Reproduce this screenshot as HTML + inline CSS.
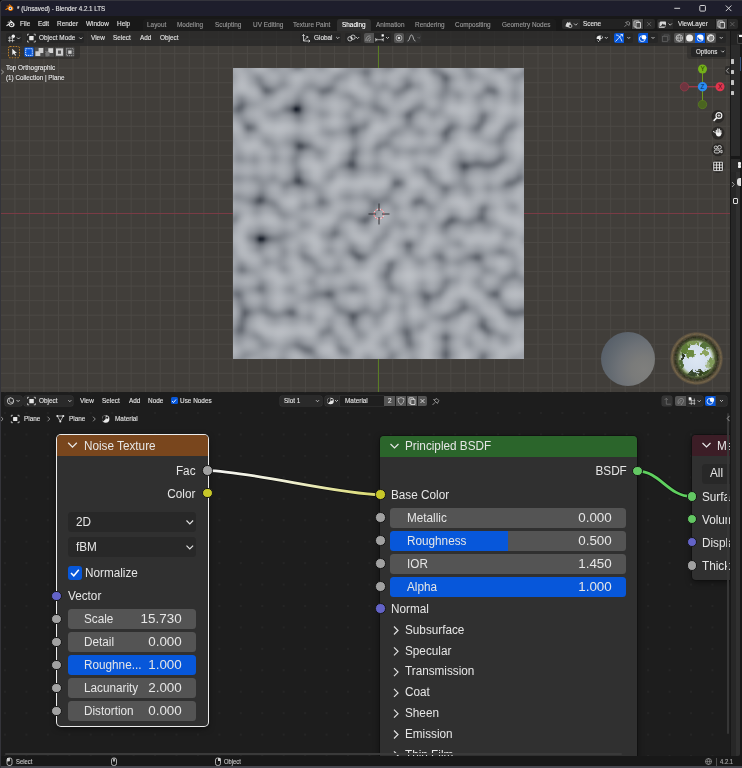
<!DOCTYPE html>
<html lang="en">
<head>
<meta charset="utf-8">
<title>* (Unsaved) - Blender 4.2.1 LTS</title>
<style>
html,body{margin:0;padding:0;background:#1d1d1d;}
body{width:742px;height:768px;position:relative;overflow:hidden;font-family:"Liberation Sans",sans-serif;color:#e0e0e0;}
*{box-sizing:border-box;}
.a{position:absolute;}
.t{position:absolute;white-space:nowrap;font-size:6.9px;line-height:10px;transform-origin:0 0;transform:scaleX(.93);color:#e2e2e2;-webkit-text-stroke:.12px currentColor;}
.t.g{color:#999;}
.n{position:absolute;white-space:nowrap;font-size:12.3px;line-height:16px;transform-origin:0 0;transform:scaleX(.955);color:#e6e6e6;}
.n.r{transform-origin:100% 0;text-align:right;}
.n.v{transform:scaleX(1.09);}
svg{position:absolute;overflow:visible;}
/* title */
#title{left:0;top:0;width:742px;height:16px;background:#1e1e2c;box-shadow:inset 0 1px 0 #34343c;}
#menu{left:0;top:16px;width:742px;height:15px;background:#181818;}
#vp{left:0;top:31px;width:730px;height:361px;background-color:#413e3a;overflow:hidden;
 background-image:linear-gradient(90deg,#4b4844 1px,transparent 1px),linear-gradient(#4b4844 1px,transparent 1px);
 background-size:14.54px 14.54px;background-position:-0.14px 7.62px;}
#vphead{left:0;top:0;width:730px;height:14.5px;background:rgba(38,38,37,.72);}
#plane{left:233px;top:37px;width:291px;height:291px;overflow:hidden;}
#plane i{display:block;height:1px;width:291px;}
.btn{position:absolute;background:#262626;border-radius:2px;}
.btn.l{background:#545454;}
.btn.b{background:#0757da;}
#ne{left:0;top:392px;width:730px;height:364px;background:#1d1d1d radial-gradient(circle,#272727 .6px,transparent 1.1px) -5.72px 10.33px/21.45px 21.45px;overflow:hidden;}
#right{left:730px;top:31px;width:12px;height:725px;background:#181818;}
#status{left:0;top:756px;width:742px;height:12px;background:#181818;}
.node{position:absolute;background:#303030;border-radius:4px;}
.nh{position:absolute;left:0;top:0;right:0;border-radius:4px 4px 0 0;}
.f{position:absolute;background:#545454;border-radius:3.5px;height:20px;margin-top:-.3px;}
.f.d{background:#282828;}
.f.b{background:#0757da;}
.sk{position:absolute;width:10.6px;height:10.6px;border-radius:50%;border:.7px solid #161616;margin:-5.3px 0 0 -5.3px;}
</style>
</head>
<body>
<div id="title" class="a">
 <svg style="left:4.700px;top:4.400px" width="8.400" height="7.560" viewBox="0 0 20 18"><path d="M1 12.5 9.5 5.8H4.6c-1.3 0-1.3-1.9 0-1.9h7.2L9.6 2.2c-1-.9.2-2.2 1.3-1.4l7.3 5.9c2.600 2.300 2.400 6.200-.2 8.400-2.700 2.200-6.800 2.200-9.500 0-1.200-1-1.900-2.300-2-3.600L3 14.200c-1.300 1-3.200-.7-2-1.700z" fill="#ea7600"/><circle cx="12.800" cy="10.600" r="3.900" fill="#fff"/><circle cx="12.800" cy="10.600" r="2.100" fill="#265787"/></svg>
 <div class="t" style="left:17px;top:3.800px;color:#e4e4e4;transform:scaleX(.905)">* (Unsaved) - Blender 4.2.1 LTS</div>
 <svg style="left:670px;top:2px" width="66" height="12" viewBox="0 0 66 12" fill="none" stroke="#e6e6e6" stroke-width=".9"><path d="M4.300 6.300h5.800"/><rect x="29.800" y="3.500" width="5.600" height="5.600" rx=".8"/><path d="M55.800 3.500l5.600 5.600m0-5.600-5.600 5.600"/></svg>
</div>
<div id="menu" class="a">
 <svg style="left:5.600px;top:3.600px" width="8.600" height="7.740" viewBox="0 0 20 18"><path d="M1 12.500 9.500 5.800H4.600c-1.300 0-1.300-1.900 0-1.900h7.200L9.600 2.200c-1-.9.200-2.200 1.300-1.400l7.300 5.900c2.600 2.300 2.400 6.200-.2 8.400-2.700 2.200-6.800 2.200-9.500 0-1.200-1-1.900-2.300-2-3.600L3 14.200c-1.300 1-3.200-.7-2-1.700z" fill="#e6e6e6"/><circle cx="12.800" cy="10.600" r="3.700" fill="#181818"/><circle cx="12.800" cy="10.600" r="1.900" fill="#e6e6e6"/></svg>
 <div class="t" style="left:19.500px;top:3px">File</div>
 <div class="t" style="left:37.500px;top:3px">Edit</div>
 <div class="t" style="left:56.500px;top:3px">Render</div>
 <div class="t" style="left:85.500px;top:3px">Window</div>
 <div class="t" style="left:116.500px;top:3px">Help</div>
 <div class="a" style="left:142.600px;top:2.500px;width:413px;height:12.500px;background:#1c1c1c;border-radius:3px 3px 0 0"></div>
 <div class="a" style="left:336.500px;top:2.500px;width:34px;height:12.500px;background:#303030;border-radius:3px 3px 0 0"></div>
 <div class="t g" style="left:147px;top:3.500px">Layout</div>
 <div class="t g" style="left:177px;top:3.500px">Modeling</div>
 <div class="t g" style="left:215px;top:3.500px">Sculpting</div>
 <div class="t g" style="left:252.500px;top:3.500px">UV Editing</div>
 <div class="t g" style="left:292.500px;top:3.500px">Texture Paint</div>
 <div class="t" style="left:341.500px;top:3.500px;color:#fff">Shading</div>
 <div class="t g" style="left:376px;top:3.500px">Animation</div>
 <div class="t g" style="left:414.500px;top:3.500px">Rendering</div>
 <div class="t g" style="left:455px;top:3.500px">Compositing</div>
 <div class="t g" style="left:501.500px;top:3.500px">Geometry Nodes</div>
 <!-- scene -->
 <div class="btn" style="left:562px;top:2.700px;width:17.500px;height:10.300px;border-radius:2px 0 0 2px;background:#2a2a2a"></div>
 <div class="btn" style="left:580px;top:2.700px;width:51px;height:10.300px;border-radius:0;background:#222"></div>
 <div class="btn l" style="left:631.500px;top:2.700px;width:11.500px;height:10.300px;border-radius:0;background:#4a4a4a"></div>
 <div class="btn" style="left:643.500px;top:2.700px;width:11px;height:10.300px;border-radius:0 2px 2px 0;background:#2a2a2a"></div>
 <div class="t" style="left:583px;top:3px">Scene</div>
 <div class="btn" style="left:657px;top:2.700px;width:15.500px;height:10.300px;border-radius:2px 0 0 2px;background:#2a2a2a"></div>
 <div class="btn" style="left:673px;top:2.700px;width:42px;height:10.300px;border-radius:0;background:#222"></div>
 <div class="btn l" style="left:715.500px;top:2.700px;width:11.500px;height:10.300px;border-radius:0;background:#4a4a4a"></div>
 <div class="btn" style="left:727.500px;top:2.700px;width:10px;height:10.300px;border-radius:0 2px 2px 0;background:#2a2a2a"></div>
 <div class="t" style="left:677.500px;top:3px">ViewLayer</div>
 <svg style="left:562px;top:2.700px" width="180" height="10.300" viewBox="0 0 180 10.300" fill="none" stroke="#d8d8d8" stroke-width=".8">
  <path d="M3.500 7.500c0-2 1-3 2-4.500l1.500 1 1-1.500 1 3.500c.5 1.500-.5 2.500-2 2.500z" fill="#d8d8d8" stroke="none"/><circle cx="8.300" cy="7" r="1.600" fill="#2a2a2a"/>
  <path d="M12 4.500l1.700 1.700 1.700-1.700"/>
  <path d="M62.500 7.800l2.300-2.300m-1.500-2.500 3.500 3.500m-3-3 2.500-1 1.500 1.500-1 2.500" stroke="#9a9a9a"/>
  <rect x="72" y="2" width="5" height="6" rx=".7" stroke="#eee"/><path d="M74 3.500h4.500v5.500h-4.500z" fill="#4a4a4a" stroke="#eee"/>
  <path d="M85 3l4.200 4.200m0-4.200-4.200 4.200" stroke="#6a6a6a"/>
  <rect x="98" y="2.500" width="6" height="5" rx=".7" fill="#d8d8d8" stroke="none"/><path d="M99 7l1.800-2.500 1.200 1.500.8-.8 1.200 1.800z" fill="#2a2a2a" stroke="none"/><path d="M97.200 3.500v5h5.500"/>
  <path d="M106.500 4.500l1.700 1.700 1.700-1.700"/>
  <rect x="156" y="2" width="5" height="6" rx=".7" stroke="#eee"/><path d="M158 3.500h4.500v5.500h-4.500z" fill="#4a4a4a" stroke="#eee"/>
  <path d="M168.300 3l4.200 4.200m0-4.200-4.200 4.200" stroke="#6a6a6a"/>
 </svg>
</div>

<div id="vp" class="a">
 <div id="plane" class="a">
<i style="background:linear-gradient(90deg,#a3a7ae,#aaaeb4,#abafb5,#a8acb2,#a2a6ac,#9fa3a9,#a2a6ad,#a8acb3,#afb2b8,#b1b5bb,#afb3b9,#a9adb3,#a1a5ac,#9a9ea5,#979ba2,#9a9ea4,#9fa3a9,#a1a5ac,#9ea3a9,#979ba2,#8c9097,#7f848b,#7f848b,#8c9198,#999da4,#a1a5ac,#a5a9af,#a3a7ad,#9da1a8,#989ca3,#999da4,#a0a4ab,#a8acb2,#afb2b8,#b1b5bb,#aeb2b8,#a8acb2,#a0a4ab,#999da4,#94989f,#92979e,#92979e,#90959c,#8a8e95,#81868d,#81868d,#8b9097,#969aa1,#9a9fa5,#989da3,#92969d,#8b8f96,#898d94,#91959c,#9da1a8,#a6aab0,#abafb5,#acb0b6,#a6aab0,#9da1a8,#969aa1,#999da4,#a2a6ac,#a7abb1,#a5a9b0,#9da1a8,#90949b,#878b93,#898d94,#90949b,#9b9fa6,#a4a8af,#aaaeb4,#abafb5,#a9adb4,#a6aab0,#9ea2a8,#93979e,#8f939a,#959aa0,#9fa3a9,#a7abb2,#afb3b9,#b3b6bc,#b0b4ba,#a9adb4,#a1a5ac,#999da4,#8e9299,#858a91,#8a8e95,#969aa1,#a0a4ab,#a6aab0,#aaaeb4,#aaaeb4,#a4a8ae,#979ba2)"></i>
<i style="background:linear-gradient(90deg,#a3a7ad,#aaaeb4,#acb0b6,#a9adb3,#a3a7ae,#a0a4aa,#a2a6ac,#a7abb1,#acb0b6,#afb3b9,#aeb2b8,#a9adb3,#a3a7ad,#9da1a7,#9a9ea4,#9b9fa6,#9fa3a9,#a1a5ab,#9ea3a9,#999da4,#91959c,#898d94,#898e95,#92979e,#9ca0a7,#a3a7ad,#a6aab0,#a4a8ae,#9fa3aa,#9b9fa6,#9ca0a7,#a2a6ac,#a8acb2,#adb1b7,#afb3b9,#acafb6,#a5a9af,#9ea2a9,#989ca3,#94989f,#93979e,#92969d,#8e9299,#868a92,#7c8088,#7d8189,#898e95,#969aa1,#9ba0a6,#9a9ea5,#94989f,#8e939a,#8e939a,#979ba2,#a1a5ac,#a8acb2,#acb0b6,#acb0b6,#a6aab0,#9da1a8,#989ca3,#9b9fa6,#a3a7ae,#a8acb2,#a7abb1,#9ea2a9,#90949b,#848990,#858990,#8a8f96,#9599a0,#a0a4ab,#a7abb1,#aaaeb4,#a9adb3,#a7abb1,#9fa3aa,#9599a0,#8f949b,#94989f,#9da1a8,#a5a9b0,#adb1b7,#b1b5bb,#b0b3b9,#aaadb4,#a3a7ad,#9ca0a7,#94989f,#8d9299,#90949b,#999da3,#a0a4ab,#a5a9af,#a8acb2,#a7abb1,#a0a4aa,#92969d)"></i>
<i style="background:linear-gradient(90deg,#a2a6ac,#a9adb3,#acb0b6,#aaaeb4,#a5a9af,#a0a5ab,#a1a5ac,#a5a9af,#a9adb3,#acb0b6,#acb0b6,#a9adb3,#a4a8af,#a0a4aa,#9da1a8,#9da1a8,#9fa3a9,#a0a4ab,#9fa3a9,#9b9fa6,#969aa1,#92969d,#92979e,#999da4,#9fa4aa,#a4a8af,#a7abb1,#a5a9b0,#a2a6ac,#9fa3a9,#9fa4aa,#a3a8ae,#a8acb2,#acb0b6,#acb0b6,#a8acb2,#a2a6ac,#9ca0a7,#979ba2,#9599a0,#94989f,#92969d,#8d9198,#83888f,#787c84,#797e85,#888c94,#969ba1,#9da1a8,#9ca0a7,#979ba2,#93979e,#94989f,#9ca0a7,#a4a8af,#aaaeb4,#acb0b6,#abafb5,#a5a9b0,#9ea2a8,#9a9ea5,#9ea2a9,#a5a9af,#aaadb4,#a8acb2,#a0a4aa,#91959c,#84888f,#81868d,#858990,#8f939a,#9b9fa5,#a4a8ae,#a8acb2,#a9adb3,#a7abb1,#a0a4ab,#969aa1,#8f949b,#92969d,#9a9fa5,#a3a7ae,#abafb5,#afb3b9,#aeb2b8,#aaaeb4,#a4a8af,#9fa4aa,#999ea4,#9599a0,#969aa1,#9b9fa6,#a0a4ab,#a3a7ae,#a5a9af,#a3a7ae,#9b9fa6,#8d9199)"></i>
<i style="background:linear-gradient(90deg,#a1a5ab,#a8acb3,#acb0b6,#abafb5,#a7aab1,#a1a5ac,#a0a4ab,#a2a6ad,#a5a9b0,#a9adb3,#aaaeb4,#a9acb3,#a6aab0,#a3a7ad,#a0a4ab,#9fa3a9,#9fa3aa,#9fa4aa,#9fa3aa,#9ea2a8,#9ba0a6,#9a9ea5,#9b9fa6,#9ea3a9,#a3a7ad,#a6aab0,#a7abb2,#a7abb1,#a4a8af,#a2a6ad,#a3a7ad,#a5a9b0,#a8acb2,#aaaeb4,#a9adb3,#a4a8af,#9ea2a9,#999ea4,#969aa1,#959aa0,#969aa1,#93989f,#8d9299,#82878e,#767a82,#777c84,#888c94,#989ca3,#a0a4aa,#9fa3aa,#9a9ea5,#979ba2,#999ea4,#a0a4ab,#a7abb2,#abafb5,#acb0b6,#aaaeb4,#a4a8af,#9ea2a9,#9ca0a7,#a0a4ab,#a7abb1,#abafb5,#aaaeb4,#a2a6ac,#93979e,#858991,#80848c,#80848c,#888c93,#94989f,#9fa3aa,#a5a9b0,#a7abb2,#a7abb1,#a1a5ac,#979ca2,#8f949b,#90949b,#989ca3,#a1a5ab,#a8acb3,#adb1b7,#adb1b7,#aaaeb4,#a6aab0,#a3a7ad,#9fa3a9,#9ca0a6,#9b9fa6,#9da2a8,#a0a4aa,#a1a5ac,#a2a6ac,#9fa3a9,#979ba2,#898d95)"></i>
<i style="background:linear-gradient(90deg,#9fa3aa,#a8acb2,#acb0b6,#acb0b6,#a8acb2,#a2a6ac,#9fa3aa,#9fa3aa,#a1a5ac,#a4a8af,#a7abb1,#a8acb2,#a7abb1,#a5a9b0,#a3a7ad,#a0a5ab,#9fa3aa,#9fa3aa,#a0a4aa,#a0a4ab,#a0a4ab,#a1a5ab,#a2a6ac,#a3a8ae,#a5a9b0,#a7abb1,#a8acb2,#a8acb2,#a6aab1,#a5a9af,#a5a9b0,#a7abb1,#a8acb2,#a8acb2,#a5a9af,#a0a4aa,#9a9ea5,#979ba2,#959aa0,#979ba2,#989ca3,#969aa1,#8f939a,#83888f,#767b82,#787c84,#898e95,#9a9ea5,#a2a6ac,#a2a6ac,#9da1a8,#9b9fa6,#9ea2a9,#a4a8af,#aaaeb4,#acb0b6,#acafb6,#a9acb3,#a3a7ad,#9da2a8,#9ea2a8,#a3a7ad,#a9acb3,#acb0b6,#acb0b6,#a4a8af,#979ba2,#888c93,#80858c,#7c8188,#80858c,#8d9198,#9a9ea5,#a2a6ad,#a6aab0,#a7abb1,#a2a6ac,#999da3,#8f949b,#8e939a,#959aa0,#9ea2a9,#a6aab0,#abafb5,#acb0b6,#aaaeb4,#a7abb1,#a5a9b0,#a3a7ae,#a1a6ac,#a0a4ab,#a0a4aa,#9fa3aa,#9fa3aa,#9ea2a8,#9a9ea5,#93979e,#868b92)"></i>
<i style="background:linear-gradient(90deg,#9ea2a8,#a7abb1,#adb0b7,#aeb1b7,#a9adb4,#a3a7ad,#9ea2a9,#9ca0a7,#9ca0a7,#a0a4aa,#a4a8ae,#a7abb2,#a8acb2,#a8acb2,#a5a9b0,#a2a6ac,#9fa3aa,#9ea3a9,#a0a4ab,#a2a6ad,#a5a9af,#a6aab1,#a7abb2,#a8acb2,#a8acb2,#a8acb2,#a9acb3,#a8acb3,#a8acb2,#a8acb2,#a8acb2,#a8acb2,#a8acb2,#a6aab0,#a1a5ab,#9b9fa6,#969aa1,#9599a0,#9599a0,#999da3,#9b9fa6,#999ea4,#92969d,#868b92,#787d85,#7a7e86,#8b8f97,#9ca0a6,#a4a8ae,#a4a8ae,#a0a4ab,#9fa3a9,#a2a6ac,#a8acb2,#acb0b6,#acb0b6,#abaeb5,#a6aab1,#a0a4ab,#9da1a7,#9fa3a9,#a4a8af,#aaaeb4,#aeb1b7,#adb1b7,#a7abb1,#9a9fa5,#8c9097,#82878e,#7b7f87,#797e86,#848990,#93989f,#9ea3a9,#a4a8ae,#a6aab0,#a2a7ad,#9a9ea4,#90949b,#8d9198,#93979e,#9ba0a6,#a3a7ae,#a8acb3,#aaaeb4,#a9adb3,#a8acb2,#a8acb2,#a7abb2,#a6aab1,#a4a8af,#a2a6ac,#9fa3aa,#9da1a7,#9a9ea5,#969aa1,#8f939a,#868a91)"></i>
<i style="background:linear-gradient(90deg,#9da1a7,#a6aab0,#adb1b7,#afb2b8,#abafb5,#a3a7ae,#9da1a8,#999da4,#979ba2,#9a9ea5,#a1a5ab,#a6aab1,#a9adb3,#a9adb3,#a7abb1,#a3a7ad,#9fa3a9,#9ea2a8,#a0a4ab,#a4a8af,#a8acb2,#abafb5,#acb0b6,#abafb5,#aaaeb4,#a9adb3,#a9acb3,#a9adb3,#a9adb3,#aaadb4,#a9adb4,#a9adb3,#a7abb2,#a3a7ae,#9da1a7,#969aa1,#93979e,#93979e,#959aa0,#9b9fa6,#9fa3a9,#9da1a8,#969aa1,#8a8e95,#7d8189,#7d8289,#8d9299,#9ea2a8,#a6aab0,#a6aab0,#a2a6ad,#a2a6ac,#a5a9af,#aaaeb4,#adb1b7,#acb0b6,#a9adb3,#a4a8ae,#9da2a8,#9ba0a6,#9fa3aa,#a6aab0,#abafb5,#aeb2b8,#afb3b9,#aaaeb4,#9fa3a9,#91959c,#868a92,#7b7f87,#747880,#7c8088,#8d9198,#9b9fa5,#a2a6ac,#a5a9b0,#a3a7ad,#9b9fa6,#91959c,#8c9097,#92969d,#9a9ea4,#a1a5ab,#a6aab0,#a8acb3,#a9adb3,#a9adb3,#aaadb4,#aaaeb4,#aaaeb4,#a8acb2,#a4a8ae,#9fa3a9,#9a9ea5,#969aa1,#92969d,#8d9198,#878b92)"></i>
<i style="background:linear-gradient(90deg,#9ca0a6,#a5a9b0,#adb1b7,#b0b3b9,#acb0b6,#a4a8af,#9da1a7,#969aa1,#92969d,#9599a0,#9da1a8,#a5a9af,#a9adb3,#aaaeb4,#a8acb3,#a3a8ae,#9ea2a9,#9da1a8,#a0a5ab,#a6aab0,#abafb5,#aeb2b8,#afb3b9,#adb1b7,#abafb5,#a9adb3,#a8acb2,#a9adb3,#aaaeb4,#abafb5,#abaeb5,#a9adb3,#a6aab1,#a0a4ab,#989da3,#92969d,#90949b,#92969d,#969ba1,#9da2a8,#a2a6ad,#a1a5ac,#9a9ea5,#8e939a,#82868d,#81868d,#90949b,#9fa3aa,#a7abb2,#a8acb2,#a4a8ae,#a4a8ae,#a7abb2,#acb0b6,#aeb1b7,#acb0b6,#a7abb1,#a1a5ab,#9a9ea5,#999ea4,#9fa3aa,#a6aab0,#abafb5,#afb3b9,#b0b4ba,#acb0b6,#a2a6ad,#969aa1,#8a8f96,#7d8189,#6f747c,#73787f,#868a92,#979ba2,#a0a4aa,#a4a8af,#a3a7ae,#9ca0a7,#92969d,#8c9198,#91959c,#989da3,#9fa3aa,#a4a8ae,#a7abb1,#a8acb2,#a9adb3,#abafb5,#adb0b7,#adb1b7,#abafb5,#a5a9b0,#9fa3a9,#989da3,#92979e,#8e939a,#8c9198,#8a8e95)"></i>
<i style="background:linear-gradient(90deg,#9b9fa6,#a5a9b0,#aeb1b7,#b1b4ba,#adb1b7,#a5a9af,#9ca0a7,#94989f,#8d9299,#8f949b,#999da4,#a3a7ae,#a8acb3,#aaaeb4,#a9adb3,#a3a7ae,#9ea2a8,#9ca0a7,#a0a4ab,#a7abb1,#adb1b7,#b1b5bb,#b1b5bb,#afb3b9,#abafb5,#a9adb3,#a7abb1,#a8acb2,#aaaeb4,#abafb5,#abafb5,#a9adb3,#a5a9af,#9ea2a8,#9499a0,#8f939a,#8f939a,#92979e,#989ca3,#a0a4ab,#a5a9b0,#a5a9af,#9ea2a8,#93979e,#878b92,#858a91,#92979d,#a0a5ab,#a8acb2,#a8acb3,#a5a9af,#a5a9af,#a9adb3,#adb0b7,#aeb1b8,#abafb5,#a5a9af,#9da1a8,#969ba1,#979ba2,#9fa3a9,#a6aab0,#abafb5,#afb3b9,#b1b5bb,#aeb2b8,#a6aab0,#9a9ea5,#8f939a,#80858c,#6e727a,#6c7178,#80848c,#93979e,#9ea2a9,#a4a8ae,#a4a8ae,#9da2a8,#93989f,#8d9299,#91969d,#989ca3,#9ea2a9,#a2a6ad,#a5a9af,#a7abb1,#a9adb3,#abafb5,#aeb2b8,#afb3b9,#adb1b7,#a7abb1,#9fa3aa,#979ba2,#90949b,#8c9198,#8d9198,#8e9299)"></i>
<i style="background:linear-gradient(90deg,#9b9fa6,#a5a9b0,#aeb2b8,#b2b5bb,#aeb2b8,#a6aab0,#9ca1a7,#93979e,#8a8e95,#8a8f96,#959aa0,#a1a5ac,#a7abb2,#aaaeb4,#a9adb3,#a3a7ad,#9ca0a7,#9b9fa5,#a0a4aa,#a7abb1,#aeb2b8,#b2b6bc,#b3b6bc,#afb3b9,#abafb5,#a8acb2,#a6aab0,#a7abb1,#a9adb3,#abafb5,#abaeb5,#a8acb2,#a3a7ae,#9b9fa6,#91969d,#8d9198,#8f939a,#94989f,#9a9ea5,#a3a7ad,#a8acb3,#a8acb2,#a1a5ac,#979ba2,#8c9097,#898e95,#94989f,#a1a5ac,#a8acb3,#a8acb3,#a5a9af,#a5a9af,#a9adb3,#adb1b7,#adb1b7,#aaadb4,#a3a7ad,#999ea4,#92969d,#94989f,#9da1a8,#a5a9b0,#aaaeb4,#aeb2b8,#b1b5bb,#b0b4b9,#a9adb3,#9ea2a9,#93989e,#848890,#6e737a,#676c74,#7b8087,#91959c,#9da1a8,#a4a8ae,#a5a9af,#9fa3aa,#969aa1,#8f949b,#93979e,#999da4,#9ea2a8,#a1a5ab,#a3a7ad,#a5a9af,#a8acb2,#abafb5,#afb2b8,#b1b5ba,#afb3b9,#a8acb2,#9fa4aa,#969ba1,#8e9299,#8c9097,#8f939a,#92969d)"></i>
<i style="background:linear-gradient(90deg,#9ba0a6,#a6aab0,#afb3b9,#b3b6bc,#b0b3b9,#a7abb1,#9da1a8,#92979e,#878c93,#868a92,#92969d,#9fa3a9,#a6aab0,#a9adb3,#a8acb2,#a2a6ac,#9b9fa6,#999da4,#9fa3aa,#a7abb1,#aeb2b8,#b3b7bd,#b3b7bd,#afb3b9,#aaaeb4,#a6aab0,#a4a8ae,#a5a9af,#a8acb2,#aaaeb4,#aaadb4,#a7aab1,#a1a5ac,#989ca3,#8f939a,#8c9198,#90959c,#969aa1,#9da1a8,#a6aab0,#abafb5,#abaeb5,#a4a8af,#9b9fa5,#90949b,#8d9198,#959aa1,#a1a5ac,#a8acb2,#a8acb2,#a4a8af,#a5a9af,#a9adb3,#acb0b6,#adb0b7,#a8acb2,#a0a4ab,#969aa1,#8e9299,#91959c,#9b9fa6,#a4a8ae,#a8acb3,#adb1b7,#b1b5bb,#b1b5ba,#abafb5,#a1a5ac,#979ba2,#878c93,#70757c,#656a72,#797e85,#8f949b,#9ca1a7,#a4a8ae,#a5a9b0,#a1a5ab,#989ca3,#92979d,#9599a0,#9b9fa6,#9ea2a9,#a0a4ab,#a1a5ac,#a3a7ad,#a6aab0,#aaaeb4,#aeb2b8,#b1b5bb,#b0b4ba,#a9adb4,#a0a4ab,#969ba1,#8e9299,#8c9198,#91969d,#979ba2)"></i>
<i style="background:linear-gradient(90deg,#9da1a7,#a7abb1,#b0b3b9,#b3b7bd,#b1b4ba,#a8acb2,#9ea2a9,#93979e,#868b92,#83878f,#8e9299,#9ca0a7,#a4a8ae,#a7abb1,#a6aab0,#a0a4aa,#999da4,#979ca2,#9ea2a9,#a6aab1,#aeb2b8,#b3b7bc,#b3b6bc,#aeb2b8,#a8acb2,#a4a8ae,#a1a5ac,#a3a7ad,#a6aab0,#a8acb3,#a8acb2,#a4a8af,#9fa3a9,#969aa1,#8e9299,#8d9299,#93979e,#999da4,#a0a4aa,#a8acb2,#adb1b7,#adb1b7,#a7abb1,#9da1a8,#93979e,#8f949b,#969aa1,#a0a4ab,#a7abb1,#a6aab0,#a2a7ad,#a3a7ae,#a8acb2,#acafb6,#acafb6,#a7abb1,#9ea2a9,#93979e,#898e95,#8d9198,#989da3,#a2a6ac,#a7aab1,#acb0b6,#b1b4ba,#b1b5bb,#adb0b7,#a4a8ae,#9a9ea5,#8b8f96,#737880,#676c74,#797e85,#90949b,#9da1a8,#a5a9af,#a7abb1,#a3a7ad,#9b9fa6,#969aa1,#989ca3,#9da1a8,#a0a4aa,#a0a4aa,#a0a4aa,#a1a5ab,#a4a8ae,#a8acb2,#aeb1b7,#b1b5bb,#b0b4ba,#aaaeb5,#a1a5ac,#979ca2,#8f939a,#8e939a,#9599a0,#9a9fa5)"></i>
<i style="background:linear-gradient(90deg,#9ea2a9,#a8acb2,#b1b4ba,#b4b8be,#b2b5bb,#a9adb4,#a0a4aa,#9499a0,#878b93,#81868d,#8b8f96,#999da4,#a1a5ab,#a5a9af,#a4a8ae,#9da2a8,#969ba1,#959aa0,#9ca0a7,#a5a9b0,#adb1b7,#b2b6bc,#b1b5bb,#acb0b6,#a6aab0,#a1a5ac,#9ea2a9,#a0a4aa,#a3a7ae,#a6aab0,#a6aab0,#a2a6ac,#9ca0a6,#93979e,#8d9299,#8f949b,#969aa1,#9ca0a7,#a2a7ad,#aaaeb4,#afb3b9,#aeb2b8,#a8acb3,#9fa3aa,#969aa1,#91959c,#969aa1,#9fa3aa,#a5a9af,#a4a8ae,#a0a4ab,#a1a5ab,#a6aab0,#aaaeb4,#aaaeb4,#a5a9b0,#9ca0a7,#90949b,#858a91,#888d94,#9599a0,#9fa3aa,#a4a8ae,#aaaeb4,#b0b3b9,#b1b5bb,#aeb1b7,#a6aab0,#9ca0a7,#8e9299,#777c83,#6b6f77,#7b8087,#91959c,#9ea2a9,#a6aab0,#a8acb2,#a5a9af,#9ea2a9,#999da4,#9ba0a6,#a0a4aa,#a1a5ac,#a0a4ab,#9ea2a9,#9ea2a9,#a1a5ac,#a6aab0,#acb0b6,#b1b5ba,#b1b4ba,#abafb5,#a3a7ad,#999da4,#91959c,#91959c,#989ca3,#9ea2a9)"></i>
<i style="background:linear-gradient(90deg,#9fa4aa,#a9adb3,#b2b5bb,#b5b9bf,#b3b6bc,#abafb5,#a1a5ac,#969aa1,#888d94,#80858c,#888c93,#9599a0,#9ea2a8,#a2a6ac,#a1a5ac,#9b9fa5,#94989f,#93979e,#9b9fa5,#a4a8ae,#acb0b6,#b1b5ba,#b0b4ba,#aaaeb4,#a3a7ad,#9ea2a9,#9b9fa6,#9da1a7,#a1a5ab,#a3a7ae,#a3a7ad,#9fa3a9,#989da3,#91959c,#8d9299,#92969d,#9a9ea5,#9fa4aa,#a5a9b0,#adb0b6,#b1b5ba,#b0b4ba,#aaaeb4,#a1a5ac,#979ca2,#92969d,#969aa1,#9da1a8,#a2a6ad,#a1a5ac,#9da1a8,#9ea2a9,#a4a8ae,#a9adb3,#a9adb3,#a4a8ae,#9a9ea5,#8d9198,#81868d,#848890,#91959c,#9ca0a6,#a1a5ac,#a8acb2,#aeb2b8,#b1b5bb,#aeb2b8,#a7abb1,#9ea2a9,#90949b,#7b7f87,#6f747c,#7e838a,#93979e,#9fa4aa,#a7abb1,#a9adb4,#a7abb1,#a1a5ab,#9ca1a7,#9fa3a9,#a3a7ad,#a3a7ae,#a0a5ab,#9da1a7,#9b9fa6,#9ea2a9,#a3a7ad,#aaaeb4,#b0b4ba,#b1b5ba,#acb0b6,#a4a8ae,#9b9fa5,#93979e,#94989f,#9b9fa5,#a1a5ac)"></i>
<i style="background:linear-gradient(90deg,#a1a5ac,#aaaeb4,#b3b6bc,#b6bac0,#b4b7bd,#acb0b6,#a3a7ad,#989ca3,#8a8e95,#7f848b,#848990,#91969d,#9a9ea5,#9fa3a9,#9ea2a9,#989ca3,#91959c,#91959c,#999da4,#a3a7ad,#abafb5,#afb3b9,#aeb2b8,#a8acb2,#a0a4ab,#9b9fa5,#979ca2,#999da4,#9da1a8,#a0a4ab,#a0a4aa,#9b9fa6,#9599a0,#8e939a,#8e9299,#9499a0,#9da1a8,#a2a6ad,#a8acb2,#aeb2b8,#b2b6bc,#b1b5bb,#abafb5,#a3a7ad,#999ea4,#93989f,#9599a0,#9b9fa6,#9fa3aa,#9ea2a9,#999ea4,#9b9fa6,#a1a5ac,#a7abb1,#a8acb2,#a2a6ad,#989da3,#8a8e96,#7d8189,#7f838b,#8d9198,#989ca3,#9ea2a9,#a5a9b0,#adb1b7,#b1b5bb,#afb3b9,#a8acb2,#9fa4aa,#92969d,#7e838a,#737880,#82868d,#9599a0,#a1a5ab,#a8acb3,#abafb5,#a8acb3,#a3a7ae,#a0a4aa,#a2a6ac,#a5a9b0,#a5a9b0,#a1a5ab,#9b9fa6,#989ca3,#9a9fa5,#a0a4ab,#a8acb2,#afb3b9,#b1b5ba,#adb1b7,#a5a9b0,#9ca0a7,#959aa0,#969ba1,#9da2a8,#a4a8ae)"></i>
<i style="background:linear-gradient(90deg,#a3a7ad,#abafb5,#b3b7bd,#b7bbc0,#b5b8be,#adb1b7,#a4a8af,#9b9fa5,#8c9097,#7f848b,#81858d,#8d9198,#969aa1,#9b9fa6,#9b9fa5,#9599a0,#8e939a,#8f939a,#989ca3,#a2a6ac,#aaaeb4,#aeb2b8,#acb0b6,#a5a9b0,#9da1a8,#979ba2,#94989f,#959aa0,#9a9ea5,#9da1a7,#9ca0a7,#979ba2,#91959c,#8b9097,#8e9299,#979ba2,#9fa4aa,#a5a9af,#aaaeb4,#b0b4ba,#b3b7bd,#b2b6bc,#acb0b6,#a4a8af,#9ca0a6,#9599a0,#9599a0,#999ea4,#9da1a7,#9b9fa6,#969aa1,#989ca3,#9fa3aa,#a5a9af,#a6aab0,#a0a4ab,#969aa1,#878b93,#797d85,#7a7f86,#898d94,#9599a0,#9b9fa6,#a3a7ae,#acb0b6,#b1b4ba,#afb3b9,#a9adb3,#a1a5ab,#94989f,#81858d,#777c83,#848990,#969ba2,#a2a6ac,#a9adb3,#acb0b6,#aaaeb4,#a5a9b0,#a2a6ad,#a4a8af,#a8acb2,#a7abb1,#a1a5ab,#999da4,#94989f,#969aa1,#9ca0a7,#a6aab0,#aeb2b8,#b0b4ba,#aeb1b7,#a6aab1,#9ea2a8,#979ba2,#999da3,#a0a4aa,#a6aab0)"></i>
<i style="background:linear-gradient(90deg,#a5a9af,#adb0b7,#b4b8be,#b8bbc1,#b5b9bf,#afb2b8,#a7abb1,#9da2a8,#8f939a,#80848c,#7d8289,#878b93,#91959c,#969ba1,#979ba2,#92969d,#8d9198,#8f939a,#979ca2,#a1a5ac,#a9adb3,#adb1b7,#aaaeb5,#a3a7ad,#9a9ea5,#94999f,#91959c,#92969d,#969aa1,#989da3,#979ba2,#92969d,#8b9097,#888c94,#8d9299,#989ca3,#a1a5ac,#a6aab1,#abafb5,#b1b5bb,#b4b8be,#b3b7bd,#aeb2b8,#a7abb1,#9ea3a9,#989ca3,#969aa1,#989ca3,#9a9ea5,#989ca3,#93979e,#9599a0,#9da1a7,#a3a7ad,#a3a7ae,#9ea2a8,#93979e,#83888f,#757981,#777c83,#868b92,#93979e,#999da4,#a1a6ac,#abafb5,#b0b4ba,#afb3b9,#aaaeb4,#a2a6ac,#9599a0,#83888f,#7a7e86,#868a92,#979ca2,#a2a6ad,#a9adb3,#acb0b6,#abafb5,#a7abb1,#a5a9af,#a7aab1,#a9adb3,#a7abb2,#a0a4ab,#969aa1,#8f949b,#91959c,#989ca3,#a2a6ad,#acb0b6,#b0b4ba,#aeb2b8,#a7abb1,#9fa3a9,#989da3,#9a9fa5,#a2a6ac,#a8acb2)"></i>
<i style="background:linear-gradient(90deg,#a6aab1,#aeb1b7,#b5b8be,#b8bbc1,#b6babf,#b0b4ba,#a9adb3,#a1a5ab,#93979e,#81868d,#797e85,#80858c,#8a8f96,#91959c,#92979d,#8f939a,#8c9198,#90949b,#989ca3,#a1a5ac,#a8acb2,#abafb5,#a8acb3,#a1a5ab,#989ca3,#92979d,#8f939a,#8f949b,#92969d,#93989e,#91969d,#8c9097,#868a91,#848990,#8d9198,#999da4,#a2a7ad,#a7abb1,#abafb5,#b1b5bb,#b5b8be,#b4b8bd,#afb3b9,#a9adb3,#a2a6ac,#9b9fa6,#979ba2,#979ba2,#989ca3,#959aa0,#91969c,#93979e,#9a9ea5,#a0a4aa,#a0a4ab,#9a9ea5,#8f949b,#80848c,#72777f,#767b82,#868a91,#92969d,#989ca3,#a0a4ab,#aaaeb4,#b0b4b9,#afb3b9,#aaaeb4,#a2a6ad,#969aa1,#858990,#7c8088,#878c93,#989ca3,#a2a6ad,#a9adb3,#acb0b6,#abafb5,#a9adb3,#a7abb1,#a8acb2,#aaaeb4,#a8acb2,#9fa3aa,#93979e,#8a8e95,#8b8f96,#92969d,#9ea2a9,#aaaeb4,#afb3b9,#aeb2b8,#a8acb2,#9fa3aa,#999da4,#9ca0a6,#a3a7ae,#aaadb4)"></i>
<i style="background:linear-gradient(90deg,#a8acb2,#aeb2b8,#b5b8be,#b8bbc1,#b6bac0,#b1b5bb,#abafb5,#a4a8ae,#979ba2,#848890,#767b82,#797e85,#83878f,#8b8f96,#8e9299,#8d9299,#8e9299,#92969d,#9a9ea5,#a2a6ac,#a8acb2,#aaaeb4,#a6aab1,#9ea2a9,#969aa1,#91959c,#8e939a,#8e9299,#8e939a,#8e9299,#8b8f96,#858991,#7f848b,#81858d,#8c9097,#999ea4,#a3a7ad,#a7abb1,#abafb5,#b0b4ba,#b4b8be,#b4b8be,#b1b4ba,#abafb5,#a5a9af,#9ea2a9,#999da4,#979ba2,#969aa1,#94989f,#90959c,#92979e,#999da3,#9da1a8,#9ca0a7,#969aa1,#8b8f96,#7c8188,#72777e,#787d84,#878c93,#92979d,#989ca3,#a0a4aa,#a9adb4,#afb3b9,#afb3b9,#aaaeb4,#a2a6ad,#969aa1,#858a91,#7d8289,#888c93,#979ba2,#a1a5ac,#a7abb2,#abafb5,#abafb5,#a9adb4,#a8acb2,#a9adb3,#aaaeb4,#a7abb1,#9da2a8,#8f949b,#84888f,#848890,#8b9097,#999ea4,#a7abb1,#aeb1b7,#adb1b7,#a8acb2,#9fa3aa,#999ea4,#9ca0a7,#a4a8af,#abaeb5)"></i>
<i style="background:linear-gradient(90deg,#aaaeb4,#afb2b8,#b4b8be,#b7bbc0,#b6bac0,#b2b6bc,#adb1b7,#a7abb2,#9b9fa6,#878b93,#747980,#71767e,#7b8087,#848990,#8a8e95,#8d9198,#90949b,#959aa0,#9ca0a7,#a3a7ad,#a8acb2,#a8acb3,#a4a8af,#9ca0a7,#9599a0,#91969d,#8f939a,#8d9299,#8b8f97,#888c93,#83888f,#7d8289,#797e85,#7e828a,#8c9097,#9a9ea4,#a3a7ad,#a6aab1,#aaaeb4,#afb3b9,#b3b7bd,#b4b8be,#b2b5bb,#adb1b7,#a8acb2,#a2a6ac,#9b9fa6,#979ba2,#9599a0,#93979e,#91959c,#93979e,#979ca2,#9a9ea5,#989ca3,#91959c,#878b92,#7a7f86,#747880,#7c8188,#8b8f96,#94989f,#989da3,#a0a4aa,#a9adb3,#afb3b9,#afb3b9,#aaaeb4,#a2a6ac,#969aa1,#868a91,#7e838a,#888d94,#969ba1,#9fa3aa,#a5a9b0,#a9adb4,#abafb5,#aaaeb4,#a9adb3,#a9adb3,#aaaeb4,#a6aab0,#9b9fa6,#8b9097,#7d8289,#7d8189,#848890,#94989f,#a4a8ae,#acb0b6,#acb0b6,#a7abb1,#9fa3a9,#999da4,#9ca1a7,#a5a9af,#abafb5)"></i>
<i style="background:linear-gradient(90deg,#abafb5,#aeb2b8,#b3b7bd,#b6babf,#b6b9bf,#b3b7bc,#afb3b9,#aaaeb4,#9fa3a9,#8b8f96,#747880,#6a6f77,#737880,#7e838a,#878b92,#8d9299,#93979e,#999da4,#9fa3aa,#a4a8af,#a7abb2,#a7abb1,#a2a6ac,#9a9ea5,#94989f,#93979e,#91959c,#8e939a,#898e95,#83878e,#7c8088,#767b83,#747981,#7c8188,#8c9097,#999ea4,#a2a6ac,#a5a9af,#a8acb2,#adb1b7,#b2b5bb,#b4b7bd,#b2b6bc,#afb3b9,#abafb5,#a5a9af,#9da2a8,#979ca2,#94999f,#93989e,#93979e,#94999f,#979ba2,#979ca2,#94989f,#8c9198,#83878e,#797e85,#787d84,#82878e,#8f949b,#979ba2,#9a9ea5,#a0a4ab,#a9adb3,#aeb2b8,#aeb2b8,#a9adb3,#a1a5ab,#9599a0,#868a91,#7f848b,#888d94,#959aa0,#9da1a8,#a3a7ad,#a7abb1,#aaaeb4,#aaaeb4,#a9adb3,#a9adb3,#a9adb3,#a4a8ae,#989ca3,#878c93,#787d84,#767a82,#7d8189,#8e939a,#a0a4ab,#aaaeb4,#abafb5,#a6aab1,#9ea2a8,#989da3,#9ca0a7,#a5a9af,#abafb5)"></i>
<i style="background:linear-gradient(90deg,#acafb6,#aeb2b8,#b1b5bb,#b4b8be,#b5b8be,#b3b7bd,#b0b4ba,#adb0b7,#a2a6ad,#8f939a,#757a81,#666b73,#6d727a,#7a7f86,#858a91,#8f939a,#979ba2,#9da1a8,#a2a6ac,#a6aab0,#a7abb1,#a5a9b0,#a0a4aa,#999da4,#9599a0,#9599a0,#94999f,#90959c,#898d94,#7e838a,#767a82,#71767e,#72767e,#7d8189,#8c9198,#999da4,#a0a5ab,#a3a7ad,#a5a9af,#aaaeb4,#afb3b9,#b2b6bc,#b2b6bc,#b0b4ba,#adb1b7,#a7abb2,#a0a4aa,#989ca3,#9499a0,#94999f,#9599a0,#979ba2,#989ca3,#9599a0,#8f949b,#888c93,#80848c,#7a7f86,#7e838a,#898e95,#9599a0,#9b9fa5,#9ca1a7,#a1a5ac,#a9adb3,#adb1b7,#adb1b7,#a8acb2,#a0a4aa,#94989f,#858a91,#80848c,#888d94,#94989f,#9b9fa6,#a0a4aa,#a5a9af,#a8acb2,#a9adb3,#a9adb3,#a8acb2,#a7abb1,#a1a5ac,#9599a0,#848890,#757981,#71767d,#767b82,#898e95,#9da1a8,#a8acb2,#aaaeb4,#a5a9b0,#9da1a7,#979ba2,#9ba0a6,#a4a8af,#abaeb5)"></i>
<i style="background:linear-gradient(90deg,#acb0b6,#adb1b7,#afb3b9,#b2b5bb,#b3b7bc,#b3b6bc,#b1b5bb,#aeb2b8,#a5a9b0,#93979e,#787d84,#656a72,#6a6f77,#787d84,#868a91,#92969d,#9ba0a6,#a1a5ac,#a5a9af,#a7abb1,#a7abb1,#a3a8ae,#9da1a8,#979ca2,#969aa1,#989ca3,#989ca3,#94989f,#8a8e95,#7c8188,#71767e,#6f747c,#72777f,#7f848b,#8e9299,#999da4,#9fa3aa,#a0a4ab,#a2a6ac,#a6aab1,#acb0b6,#b1b4ba,#b2b6bc,#b1b5bb,#afb3b9,#aaadb4,#a1a5ac,#999da4,#9599a0,#969aa1,#989da3,#9a9ea5,#999da4,#94989f,#8c9097,#848890,#7e838a,#7d8289,#858991,#90959c,#9a9ea5,#9ea2a9,#9fa3aa,#a2a6ad,#a9adb3,#adb1b7,#acb0b6,#a7abb1,#9ea2a9,#92979e,#858a91,#81858c,#898d94,#93979e,#989ca3,#9ca0a7,#a2a6ac,#a6aab1,#a9adb3,#a8acb3,#a7abb1,#a5a9af,#9ea2a9,#92969d,#82868e,#747880,#6f747b,#72777e,#858991,#9a9ea5,#a6aab0,#a9adb3,#a4a8af,#9b9fa6,#969aa1,#9a9fa5,#a4a8ae,#aaaeb4)"></i>
<i style="background:linear-gradient(90deg,#acb0b6,#abafb5,#acb0b6,#aeb2b8,#b0b4ba,#b2b5bb,#b1b5bb,#afb3b9,#a7abb2,#969aa1,#7c8188,#686c74,#6c7078,#797e85,#888c94,#969aa1,#9fa4aa,#a5a9af,#a7abb1,#a8acb2,#a6aab1,#a2a6ac,#9b9fa6,#969ba1,#979ba2,#9b9fa5,#9ca0a7,#989ca3,#8c9198,#7c8188,#71757d,#70757d,#767b82,#83888f,#90959c,#999ea4,#9da1a8,#9da2a8,#9ea2a8,#a2a6ad,#a9adb3,#aeb2b8,#b1b5bb,#b1b5bb,#b0b4ba,#abafb5,#a3a7ad,#9a9ea5,#969aa1,#989ca3,#9ca0a7,#9da2a8,#9b9fa6,#93989f,#898e95,#82868e,#7f848b,#82868e,#8c9097,#979ba2,#9fa3a9,#a2a6ac,#a1a5ac,#a3a8ae,#a9adb3,#acb0b6,#abafb5,#a6aab0,#9da1a8,#91959c,#858991,#82868e,#8a8e95,#92969d,#969aa1,#989da3,#9ea3a9,#a5a9af,#a8acb2,#a8acb2,#a5a9b0,#a2a6ac,#9b9fa5,#8f939a,#81868d,#767a82,#71757d,#71767e,#82878e,#989ca3,#a4a8af,#a7abb2,#a3a7ad,#9a9ea4,#94989f,#999da4,#a3a7ad,#a9adb3)"></i>
<i style="background:linear-gradient(90deg,#abafb5,#a9adb3,#a8acb3,#aaaeb4,#adb1b7,#b0b4ba,#b1b5ba,#b0b4ba,#a9adb3,#999ea4,#82868d,#6e727a,#70757d,#7d8189,#8c9097,#9a9ea5,#a3a7ae,#a8abb2,#a9adb3,#a8acb3,#a6aab0,#9fa3aa,#989da3,#969aa1,#989da3,#9ea2a8,#a0a4aa,#9ba0a6,#90949b,#7f848b,#737880,#757a81,#7c8188,#898d94,#94989f,#9a9ea5,#9ca0a7,#9b9fa5,#9a9ea5,#9da1a8,#a4a8af,#abafb5,#b0b3b9,#b1b5ba,#b0b4ba,#acb0b6,#a4a8ae,#9b9fa6,#979ba2,#9a9ea5,#9fa3aa,#a1a5ab,#9da1a8,#94989f,#888d94,#82868d,#82868d,#888c93,#93979e,#9da1a8,#a3a7ad,#a5a9af,#a3a7ae,#a5a9af,#a9acb3,#abafb5,#aaaeb4,#a5a9af,#9ba0a6,#90949b,#858991,#83888f,#8b8f96,#92969d,#94989f,#9599a0,#9ca0a6,#a3a7ad,#a7abb1,#a7abb1,#a3a8ae,#9ea3a9,#979ba2,#8d9198,#82878e,#7a7f87,#767a82,#747880,#82878e,#969ba1,#a3a7ad,#a6aab1,#a2a6ac,#989ca3,#93979e,#989ca3,#a1a6ac,#a8abb2)"></i>
<i style="background:linear-gradient(90deg,#aaaeb4,#a6aab1,#a4a8ae,#a5a9b0,#aaadb4,#aeb2b8,#b0b3b9,#b0b3b9,#aaaeb4,#9ca0a7,#878b93,#757a82,#777c83,#82878e,#91959c,#9ea2a9,#a6aab1,#aaaeb4,#aaaeb4,#a9adb3,#a5a9af,#9da1a8,#969aa1,#9599a0,#9a9ea5,#a0a4ab,#a3a7ae,#9fa3aa,#94989f,#83888f,#797d85,#7c8088,#84888f,#8e939a,#979ba2,#9b9fa6,#9b9fa6,#989ca3,#969aa1,#989da3,#a0a4aa,#a8acb2,#adb1b7,#b0b3b9,#b0b4ba,#acb0b6,#a4a8ae,#9b9fa6,#989ca3,#9ca0a7,#a2a6ac,#a4a8ae,#a0a4aa,#959aa0,#898d94,#83888f,#868a91,#8d9299,#999da4,#a2a6ac,#a7abb1,#a7abb1,#a5a9af,#a5a9b0,#a8acb3,#abafb5,#a9adb3,#a4a8ae,#9a9ea5,#8f939a,#858a91,#858a91,#8d9198,#92979e,#92979e,#93979e,#999da4,#a1a5ac,#a6aab0,#a6aab0,#a2a6ac,#9b9fa6,#93979e,#8b8f96,#858990,#81858d,#7d8189,#797d85,#848890,#969aa1,#a2a6ad,#a5a9b0,#a1a5ab,#979ba2,#91969d,#979ba2,#a0a5ab,#a6aab1)"></i>
<i style="background:linear-gradient(90deg,#a9adb3,#a3a7ae,#9fa3aa,#a0a4aa,#a5a9af,#abafb5,#aeb2b8,#afb3b9,#aaaeb4,#9ea2a9,#8c9098,#7e8289,#7f848b,#898d94,#969aa1,#a2a6ac,#a9adb3,#abafb5,#aaaeb4,#a8acb2,#a3a7ad,#9a9ea5,#93989e,#94999f,#9b9fa6,#a2a7ad,#a6aab0,#a3a7ad,#989ca3,#898d94,#7f848b,#83888f,#8b8f97,#9499a0,#9b9fa6,#9da1a7,#9a9fa5,#969ba2,#93979e,#94989f,#9b9fa6,#a4a8ae,#abafb5,#aeb2b8,#afb3b9,#abafb5,#a4a8ae,#9ba0a6,#999da4,#9ea2a9,#a4a8af,#a6aab1,#a2a6ac,#979ca2,#8b8f96,#868b92,#8b8f96,#93979e,#9ea2a9,#a6aab0,#a9adb3,#a8acb3,#a6aab0,#a5a9b0,#a8acb2,#aaaeb4,#a9adb3,#a3a7ad,#999ea4,#8e9299,#868a92,#888c93,#8f939a,#94989f,#92969d,#91959c,#979ca2,#a0a4ab,#a5a9b0,#a5a9b0,#a0a4ab,#989ca3,#90949b,#8a8f96,#888d94,#888c93,#848990,#7f848b,#878c93,#979ba2,#a2a6ac,#a5a9af,#a0a4ab,#969aa1,#90959c,#969aa1,#a0a4aa,#a5a9b0)"></i>
<i style="background:linear-gradient(90deg,#a7abb1,#a0a4ab,#9a9ea5,#9a9ea4,#a0a4ab,#a8acb2,#acb0b6,#adb1b7,#aaaeb4,#a0a4aa,#91959c,#858a91,#878b92,#8f939a,#9a9fa5,#a5a9af,#abafb5,#acb0b6,#aaaeb4,#a7abb2,#a1a5ac,#979ba2,#90959c,#93989f,#9ca0a7,#a4a8ae,#a8acb2,#a5a9b0,#9ca0a6,#8e9299,#868b92,#8a8f96,#92969d,#9a9ea5,#9fa3a9,#9ea3a9,#9b9fa6,#969aa1,#91959c,#90949b,#969aa1,#a0a4aa,#a8acb2,#acb0b6,#adb1b7,#aaaeb4,#a3a7ad,#9b9fa6,#999da4,#9fa3aa,#a6aab0,#a8acb3,#a4a8ae,#9a9ea5,#8e9299,#8b8f96,#90949b,#989da3,#a2a6ad,#a9adb3,#abafb5,#a9adb3,#a6aab1,#a5a9b0,#a7abb2,#a9adb4,#a8acb2,#a3a7ad,#999da4,#8e9299,#878c93,#8a8f96,#92969d,#959aa1,#93979e,#91959c,#979ba2,#a0a4aa,#a5a9af,#a5a9af,#9fa3a9,#969aa1,#8e9299,#8b8f96,#8c9198,#8e939a,#8b9097,#868b92,#8c9097,#999da4,#a2a6ad,#a5a9af,#a0a4aa,#969aa1,#90949b,#969aa1,#9fa3aa,#a5a9af)"></i>
<i style="background:linear-gradient(90deg,#a5a9b0,#9da1a8,#9599a0,#93989e,#9b9fa6,#a4a8ae,#a9adb3,#acafb5,#a9adb3,#a1a5ab,#9599a0,#8c9097,#8e9299,#9599a0,#9fa3a9,#a7abb2,#acb0b6,#acb0b6,#aaadb4,#a6aab0,#9fa3a9,#94989f,#8d9299,#92969d,#9ca0a7,#a5a9af,#a9adb3,#a7abb1,#9fa3a9,#93979e,#8d9198,#91959c,#989ca3,#9fa3a9,#a2a6ad,#a1a5ab,#9ca0a7,#969ba1,#91959c,#8e9299,#92969d,#9ca0a6,#a4a8af,#a9adb3,#abafb5,#a9adb3,#a2a6ac,#9a9ea5,#999da4,#a0a4aa,#a7abb1,#aaaeb4,#a6aab0,#9ca0a7,#92969d,#8f949b,#9599a0,#9da1a8,#a6aab0,#abafb5,#acafb6,#a9adb3,#a6aab0,#a4a8af,#a7abb1,#a9adb3,#a8acb2,#a3a7ad,#999ea4,#8f939a,#898e95,#8d9299,#9599a0,#989ca3,#9599a0,#92969d,#979ca2,#a0a4ab,#a5a9b0,#a5a9af,#9ea2a9,#94999f,#8d9198,#8c9198,#91959c,#94989f,#92969d,#8d9198,#90959c,#9b9fa6,#a3a7ae,#a5a9af,#a0a4ab,#969aa1,#90959c,#969aa1,#9fa3aa,#a4a8af)"></i>
<i style="background:linear-gradient(90deg,#a4a8ae,#9a9ea5,#90949b,#8d9299,#969aa1,#a0a4ab,#a6aab1,#a9adb3,#a8acb2,#a1a5ac,#989ca3,#91969d,#94989f,#9a9ea5,#a2a6ad,#a9adb3,#acb0b6,#abafb5,#a8acb2,#a4a8ae,#9ca0a7,#90959c,#8a8f96,#91959c,#9ca0a7,#a5a9af,#aaaeb4,#a9acb3,#a1a5ac,#979ba2,#92979d,#979ba2,#9da1a8,#a3a7ad,#a5a9b0,#a3a7ae,#9ea2a8,#989ca3,#92969d,#8d9299,#8f939a,#989ca3,#a1a5ab,#a6aab1,#a9adb3,#a7abb1,#a0a4aa,#999da4,#989ca3,#9fa3aa,#a7abb1,#aaaeb4,#a7abb1,#9ea2a9,#9599a0,#94989f,#999da4,#a1a5ab,#a8acb2,#acb0b6,#acafb6,#a8acb2,#a4a8af,#a3a7ad,#a6aab0,#a8acb3,#a8acb2,#a3a7ae,#9a9ea5,#90949b,#8c9097,#90959c,#989ca3,#9b9fa6,#979ca2,#94989f,#999da4,#a1a5ac,#a6aab0,#a5a9af,#9ea2a9,#94989f,#8d9199,#8e939a,#9599a0,#999da4,#979ca2,#92979e,#9599a0,#9ea2a8,#a5a9af,#a6aab0,#a1a5ab,#979ba2,#91969d,#979ba2,#a0a4aa,#a5a9af)"></i>
<i style="background:linear-gradient(90deg,#a2a6ac,#979ca2,#8b9097,#888c93,#91959c,#9da1a7,#a3a7ae,#a7abb1,#a6aab0,#a1a5ac,#9a9ea5,#969aa1,#989da3,#9ea2a9,#a5a9af,#aaaeb5,#acb0b6,#aaaeb4,#a6aab0,#a1a6ac,#999da4,#8c9198,#878b92,#8e939a,#9b9fa6,#a4a8af,#aaaeb4,#a9adb3,#a3a7ad,#9b9fa5,#979ba2,#9b9fa6,#a1a5ab,#a6aab1,#a8acb2,#a6aab0,#a0a4ab,#9b9fa6,#9599a0,#8e939a,#8e9299,#9599a0,#9da2a8,#a3a7ae,#a6aab1,#a4a8af,#9da2a8,#979ba2,#979ba2,#9ea3a9,#a7abb1,#aaaeb4,#a8acb2,#a0a4ab,#999da4,#989ca3,#9da1a8,#a4a8ae,#aaaeb4,#acb0b6,#abafb5,#a7abb1,#a2a6ad,#a1a5ab,#a4a8af,#a8acb2,#a9adb3,#a4a8af,#9ba0a6,#92969d,#8e939a,#94989f,#9b9fa6,#9ea2a9,#9b9fa5,#979ba2,#9ba0a6,#a3a7ad,#a7abb1,#a6aab0,#9fa3aa,#9599a0,#8f939a,#91969c,#989da3,#9da1a8,#9ca0a7,#979ba2,#999da4,#a0a4ab,#a6aab0,#a7abb1,#a2a6ac,#989ca3,#93979e,#989ca3,#a1a5ab,#a5a9b0)"></i>
<i style="background:linear-gradient(90deg,#a0a4ab,#9599a0,#888c93,#83878f,#8c9198,#999da4,#a0a4ab,#a4a8af,#a4a8af,#a1a5ab,#9ca0a7,#999ea4,#9ca0a7,#a1a5ac,#a7abb1,#abafb5,#acb0b6,#a8acb2,#a3a7ae,#9ea3a9,#9599a0,#888c94,#83878e,#8c9097,#999da4,#a3a7ae,#a9adb3,#a9adb3,#a4a8af,#9da2a8,#9b9fa6,#9fa3a9,#a4a8ae,#a9adb3,#abafb5,#a8acb3,#a3a7ae,#9ea2a9,#989ca3,#91959c,#8d9299,#92969d,#9a9ea5,#a0a4ab,#a4a8ae,#a2a6ac,#9b9fa6,#94999f,#9599a0,#9da1a8,#a6aab0,#aaaeb4,#a8acb2,#a2a6ac,#9ca0a7,#9ca0a6,#a0a4ab,#a6aab0,#abafb5,#acb0b6,#a9adb3,#a4a8af,#a0a4aa,#9ea2a9,#a3a7ad,#a8acb2,#a9adb3,#a6aab0,#9da1a8,#94989f,#91959c,#979ba2,#9ea2a9,#a1a5ab,#9ea2a9,#9b9fa5,#9ea2a9,#a5a9af,#a9adb3,#a7abb1,#a0a4ab,#969ba2,#91959c,#94989f,#9ca0a6,#a1a5ab,#9fa3aa,#9b9fa6,#9ca0a7,#a3a7ad,#a8acb2,#a8acb2,#a3a7ae,#9a9ea5,#9599a0,#9a9ea5,#a2a6ac,#a7aab1)"></i>
<i style="background:linear-gradient(90deg,#9fa3a9,#93979e,#848990,#7e828a,#888c93,#9599a0,#9da1a8,#a1a5ac,#a2a6ad,#a0a4ab,#9da1a8,#9ca1a7,#9fa4aa,#a4a8af,#a9adb3,#acb0b6,#abafb5,#a6aab0,#a0a4ab,#9b9fa6,#91959c,#83888f,#7e838a,#898d95,#979ca2,#a2a6ac,#a8acb2,#a9adb3,#a5a9b0,#a0a4aa,#9ea2a9,#a2a6ac,#a7abb1,#abafb5,#adb1b7,#abafb5,#a6aab0,#a1a5ac,#9b9fa6,#93989e,#8e9299,#90949b,#979ba2,#9da1a8,#a1a5ab,#9fa3a9,#989ca3,#92969d,#93979e,#9ba0a6,#a4a8af,#a9adb3,#a8acb2,#a3a7ae,#9fa3a9,#9fa3aa,#a3a7ae,#a8acb2,#acb0b6,#abafb5,#a7abb1,#a1a5ac,#9ca0a7,#9b9fa6,#a1a5ab,#a7abb1,#aaaeb4,#a7abb1,#9fa3a9,#969aa1,#94989f,#999ea4,#a1a5ab,#a4a8ae,#a1a5ac,#9ea2a9,#a1a5ac,#a7abb1,#aaaeb4,#a9acb3,#a2a6ac,#989da3,#93989f,#979ba2,#9fa3a9,#a3a7ae,#a2a6ad,#9ea3a9,#9fa4aa,#a5a9af,#a9adb4,#aaaeb4,#a5a9af,#9ca0a6,#979ba2,#9ba0a6,#a3a7ae,#a8acb2)"></i>
<i style="background:linear-gradient(90deg,#9da1a8,#90959c,#80858c,#797d85,#83878f,#91969d,#9a9ea5,#9fa3a9,#a0a5ab,#a0a4aa,#9fa3a9,#9fa3aa,#a2a6ad,#a7abb1,#abafb5,#acb0b6,#aaaeb4,#a4a8ae,#9da1a8,#979ba2,#8c9198,#7d8289,#797e85,#868a91,#959aa0,#a0a4ab,#a7abb1,#a9adb3,#a6aab0,#a2a6ac,#a1a5ab,#a4a8af,#a9adb3,#aeb1b7,#afb3b9,#adb1b7,#a8acb3,#a4a8ae,#9ea2a9,#969aa1,#8e9299,#8d9299,#93989f,#9a9ea5,#9ea2a9,#9ca0a7,#9599a0,#8f939a,#90959b,#999ea4,#a3a7ad,#a8acb2,#a8acb2,#a5a9af,#a1a5ac,#a2a6ac,#a6aab0,#aaaeb4,#acb0b6,#aaaeb5,#a5a9af,#9ea2a9,#999da4,#989ca3,#9fa3aa,#a7abb1,#aaaeb4,#a8acb2,#a0a4ab,#989ca3,#969aa1,#9ca0a7,#a4a8ae,#a7abb1,#a4a8af,#a1a5ac,#a4a8ae,#a9adb3,#acb0b6,#aaaeb4,#a3a7ae,#9a9fa5,#969aa1,#9a9ea4,#a1a5ac,#a6aab0,#a5a9af,#a1a6ac,#a2a6ad,#a7abb1,#abafb5,#abafb5,#a6aab0,#9ea2a8,#999da4,#9da2a8,#a5a9af,#a9adb3)"></i>
<i style="background:linear-gradient(90deg,#9a9ea5,#8d9299,#7c8088,#737880,#7e838a,#8e9299,#979ba2,#9ca0a7,#9fa3aa,#a0a4aa,#a0a4aa,#a1a5ac,#a4a8af,#a8acb2,#acafb6,#acb0b6,#a8acb2,#a1a5ab,#999da4,#92979d,#868b92,#767b82,#72777f,#82868d,#93979e,#9ea2a9,#a6aab0,#a8acb2,#a7abb1,#a3a8ae,#a3a7ad,#a6aab1,#abafb5,#afb3b9,#b1b5bb,#afb3b9,#abaeb5,#a6aab0,#a1a5ab,#989ca3,#8f939a,#8c9097,#91959c,#979ba2,#9b9fa6,#999da4,#92969d,#8b9097,#8d9199,#979ba2,#a1a5ab,#a6aab1,#a8acb2,#a6aab0,#a3a7ae,#a4a8af,#a8acb2,#abafb5,#acb0b6,#a9adb3,#a2a6ad,#9a9ea5,#9499a0,#94999f,#9da1a7,#a6aab0,#aaaeb4,#a8acb2,#a1a5ab,#999da4,#989ca3,#9fa3a9,#a6aab1,#aaadb4,#a7abb2,#a5a9af,#a7abb1,#abafb5,#adb1b7,#abafb5,#a5a9af,#9da1a7,#989ca3,#9ca0a7,#a3a7ad,#a8acb2,#a7abb2,#a4a8ae,#a5a9af,#a9adb4,#adb1b7,#adb1b7,#a8acb2,#a0a4ab,#9ca0a6,#a0a4aa,#a7abb1,#abafb5)"></i>
<i style="background:linear-gradient(90deg,#979ba2,#898d95,#767b83,#6e737b,#7b7f87,#8c9097,#959aa0,#9b9fa6,#9ea2a9,#a0a4ab,#a1a5ab,#a3a7ad,#a6aab0,#a9adb3,#acb0b6,#abafb5,#a6aab0,#9da1a8,#94989f,#8c9198,#7f838a,#6c7179,#6a6f77,#7d8189,#90949b,#9ca0a7,#a4a8ae,#a7abb1,#a6aab1,#a4a8af,#a4a8af,#a8acb2,#acb0b6,#b0b4ba,#b2b6bc,#b0b4ba,#acb0b6,#a8acb2,#a3a7ad,#999ea4,#90949b,#8c9097,#90949b,#959aa1,#999ea4,#979ba2,#8f949b,#888d94,#8a8e95,#93989e,#9ea2a8,#a4a8af,#a7abb1,#a6aab1,#a5a9b0,#a6aab1,#a9adb4,#acb0b6,#acafb6,#a7abb1,#9fa3a9,#969aa1,#90949b,#90959c,#9a9ea5,#a4a9af,#a9adb4,#a8acb2,#a1a5ab,#9a9ea5,#9a9ea5,#a1a5ac,#a9adb3,#acb0b6,#abafb5,#a9acb3,#aaaeb4,#aeb2b8,#afb3b9,#adb1b7,#a7abb1,#9fa3a9,#9a9ea5,#9da1a8,#a4a8af,#a9adb3,#a9adb3,#a6aab0,#a7abb1,#acafb6,#afb3b9,#afb3b8,#aaaeb4,#a3a7ad,#9fa3a9,#a2a6ad,#a9adb3,#acb0b6)"></i>
<i style="background:linear-gradient(90deg,#93979e,#848990,#71757d,#696e76,#797d85,#8b8f96,#9599a0,#9a9fa5,#9ea2a9,#a0a5ab,#a2a6ac,#a4a8ae,#a6aab0,#a9adb3,#abafb5,#aaaeb4,#a3a7ae,#989da3,#8e9299,#858991,#757a81,#60656d,#60646d,#777c84,#8d9198,#9a9ea5,#a2a6ad,#a6aab0,#a6aab0,#a4a8af,#a5a9af,#a8acb2,#acb0b6,#b1b5bb,#b3b7bc,#b1b5bb,#adb1b7,#a9adb3,#a4a8ae,#9b9fa5,#91959c,#8c9198,#90949b,#9599a0,#999da3,#969aa1,#8d9299,#858a91,#868a91,#8f949b,#9a9ea5,#a1a5ac,#a5a9b0,#a7abb1,#a7abb1,#a8acb2,#aaaeb4,#acb0b6,#aaaeb4,#a4a8ae,#9a9ea5,#91959c,#8b9097,#8d9198,#989ca3,#a3a7ad,#a8acb2,#a7abb1,#a0a4ab,#9a9ea5,#9b9fa6,#a3a7ae,#abafb5,#afb3b9,#aeb2b8,#acb0b6,#aeb2b8,#b1b4ba,#b1b5bb,#afb3b9,#a9acb3,#a1a5ab,#9ca0a7,#9ea2a9,#a5a9af,#aaaeb4,#aaaeb4,#a8acb2,#a9adb3,#aeb1b7,#b1b5bb,#b1b4ba,#acb0b6,#a5a9b0,#a2a6ac,#a5a9b0,#abafb5,#aeb2b8)"></i>
<i style="background:linear-gradient(90deg,#8f939a,#7f838b,#6b7077,#666b73,#797d85,#8c9097,#959aa1,#9b9fa6,#9fa3aa,#a1a5ac,#a3a7ad,#a4a8ae,#a6aab0,#a9adb3,#aaaeb4,#a7abb2,#a0a4aa,#93989f,#878b93,#7d8189,#6a6f77,#51565f,#535861,#71767e,#898e95,#979ba2,#a0a4ab,#a5a9af,#a5a9af,#a4a8ae,#a4a8ae,#a8abb2,#acb0b6,#b1b5bb,#b3b7bd,#b2b6bb,#aeb2b8,#a9adb4,#a4a8ae,#9b9fa6,#92969d,#8e939a,#91969c,#969aa1,#999da4,#959aa0,#8c9198,#83878f,#82868e,#8b8f96,#959aa0,#9ea2a9,#a4a8ae,#a6aab1,#a7abb2,#a9adb3,#aaaeb4,#abafb5,#a8acb2,#a0a4ab,#9599a0,#8c9097,#878b93,#898e95,#959aa0,#a1a5ab,#a6aab0,#a5a9af,#9fa3aa,#9a9ea5,#9ca0a7,#a5a9af,#adb1b7,#b1b5bb,#b0b4ba,#afb3b9,#b1b5ba,#b3b7bd,#b3b7bd,#b0b4ba,#aaaeb4,#a2a7ad,#9da1a8,#9ea3a9,#a4a8af,#a9adb3,#aaaeb4,#a9adb3,#abafb5,#afb3b9,#b3b6bc,#b2b6bc,#aeb2b8,#a8acb2,#a5a9af,#a8acb2,#adb1b7,#b0b3b9)"></i>
<i style="background:linear-gradient(90deg,#8a8e95,#797e85,#666b73,#656a72,#7a7f86,#8e9299,#979ba2,#9da1a7,#a1a5ab,#a3a7ad,#a3a7ae,#a4a8ae,#a5a9af,#a7abb1,#a8acb2,#a4a9af,#9ca0a7,#8e939a,#80858c,#757981,#5e636b,#3e444d,#454b54,#6c7078,#868b92,#9599a0,#9fa3a9,#a3a7ae,#a4a8ae,#a2a6ad,#a3a7ad,#a6aab1,#abafb5,#b0b4ba,#b3b7bd,#b2b6bc,#aeb2b8,#a9adb3,#a4a8ae,#9ba0a6,#94989f,#91959c,#94989f,#989ca3,#9a9ea4,#969aa1,#8c9097,#81868d,#7f838b,#878b92,#90959c,#9a9ea5,#a2a6ac,#a6aab0,#a8acb2,#a9adb3,#aaaeb4,#a9adb3,#a4a8ae,#9b9fa6,#8f949b,#868b92,#83888f,#878c93,#93989e,#9ea2a9,#a4a8ae,#a3a7ad,#9da1a8,#999da4,#9da1a7,#a6aab0,#afb3b9,#b3b7bd,#b3b6bc,#b2b6bc,#b3b7bd,#b5b9bf,#b5b9be,#b2b5bb,#abafb5,#a4a8ae,#9ea2a9,#9ea2a8,#a3a7ad,#a8acb2,#aaaeb4,#a9adb3,#acb0b6,#b1b5bb,#b4b8be,#b4b8be,#b0b4ba,#abafb5,#a8acb2,#abaeb5,#afb3b9,#b1b5bb)"></i>
<i style="background:linear-gradient(90deg,#868a91,#747981,#62676f,#666b73,#7d8289,#90959c,#9a9ea5,#9fa3a9,#a2a6ad,#a4a8ae,#a4a8ae,#a3a7ad,#a3a7ae,#a5a9af,#a5a9af,#a1a5ac,#989ca3,#8a8e95,#7b7f87,#6d727a,#535860,#2a303a,#383d47,#676b73,#848890,#93989e,#9da1a8,#a2a6ac,#a2a6ac,#a0a4ab,#a1a5ab,#a5a9af,#aaaeb4,#b0b3b9,#b3b6bc,#b2b5bb,#aeb1b8,#a9adb3,#a3a7ad,#9b9fa6,#9599a0,#94999f,#979ca2,#9a9ea5,#9b9fa6,#979ba2,#8d9198,#81868d,#7d8189,#83878e,#8c9097,#969aa1,#9fa3aa,#a5a9b0,#a8acb2,#a9adb3,#a9adb3,#a6aab1,#a0a4aa,#9599a0,#898d95,#82878e,#81868d,#878b92,#92969d,#9ca0a7,#a1a5ab,#a0a4aa,#9b9fa6,#989ca3,#9da1a8,#a7abb1,#b0b3b9,#b4b8be,#b4b8be,#b4b8bd,#b6b9bf,#b7bbc0,#b6bac0,#b2b6bc,#acb0b6,#a5a9af,#9ea2a9,#9ca0a7,#a1a5ab,#a6aab1,#a9adb3,#a9adb3,#adb1b7,#b2b6bc,#b6b9bf,#b5b9bf,#b2b6bb,#adb1b7,#aaaeb4,#adb0b7,#b0b4ba,#b2b6bc)"></i>
<i style="background:linear-gradient(90deg,#82878e,#71767d,#62666f,#6a6e76,#81868d,#94989f,#9ca1a7,#a1a5ac,#a5a9af,#a5a9b0,#a4a8ae,#a2a6ac,#a1a5ac,#a2a6ac,#a1a5ac,#9da1a8,#94989f,#868a92,#777b83,#686d75,#4a5058,#181f2b,#2d333d,#646870,#82878e,#92979d,#9ca0a7,#a0a5ab,#a0a4ab,#9ea2a9,#9ea2a9,#a2a6ad,#a8acb2,#aeb2b8,#b2b6bb,#b1b5bb,#adb1b7,#a7abb2,#a1a5ac,#9a9fa5,#969ba1,#989ca3,#9b9fa6,#9da1a8,#9da1a8,#999da3,#8f939a,#83878f,#7d8189,#80848c,#878c93,#92969d,#9da1a8,#a4a8af,#a8acb2,#a8acb2,#a7abb1,#a3a7ad,#9a9ea5,#8e9299,#83878e,#7f838b,#81868d,#888c93,#92969d,#9a9ea5,#9da1a8,#9ca0a7,#999da4,#979ba2,#9da1a8,#a7abb1,#b0b4ba,#b5b8be,#b5b9bf,#b5b9bf,#b7bbc0,#b8bcc2,#b7bbc1,#b3b7bd,#adb1b7,#a5a9b0,#9da2a8,#9a9ea5,#9da2a8,#a4a8ae,#a7abb1,#a9adb3,#adb1b7,#b3b7bd,#b6bac0,#b6babf,#b3b6bc,#aeb2b8,#acb0b6,#aeb2b8,#b2b5bb,#b3b6bc)"></i>
<i style="background:linear-gradient(90deg,#80858c,#70757c,#646971,#6e737b,#868a92,#979ba2,#9fa3aa,#a4a8ae,#a7abb1,#a7abb1,#a4a8af,#a1a5ab,#9fa3aa,#9fa3a9,#9da2a8,#9a9ea4,#91959c,#848990,#767a82,#676c74,#494e57,#141a27,#2b313b,#636870,#82868e,#92969d,#9ca0a7,#a0a4aa,#9fa3a9,#9ca0a6,#9ba0a6,#a0a4aa,#a6aab0,#adb1b7,#b1b5bb,#b0b4ba,#acb0b6,#a6aab0,#9fa3aa,#999da4,#989ca3,#9b9fa6,#9fa3aa,#a0a4ab,#9fa3aa,#9a9fa5,#91959c,#868a91,#7e838a,#7f848b,#848890,#8e939a,#9b9fa6,#a4a8ae,#a7abb2,#a7abb1,#a4a8af,#9fa3a9,#93989f,#868a92,#7d8289,#7e828a,#83878f,#8a8f96,#93979e,#989da3,#9a9ea5,#999da4,#969ba1,#969aa1,#9da1a8,#a7abb1,#b0b3b9,#b4b8be,#b5b9bf,#b6babf,#b8bcc1,#b9bdc3,#b8bbc1,#b3b7bd,#adb1b7,#a5a9b0,#9ca0a7,#979ba2,#999da4,#a0a4ab,#a5a9af,#a8acb2,#adb1b7,#b4b7bd,#b7bbc0,#b6bac0,#b3b7bd,#afb3b9,#adb1b7,#afb3b9,#b2b6bc,#b3b7bd)"></i>
<i style="background:linear-gradient(90deg,#80858c,#72767e,#686d75,#747980,#8a8f96,#9a9fa5,#a2a6ac,#a6aab0,#a9adb3,#a8acb3,#a5a9af,#a0a4aa,#9ca1a7,#9b9fa6,#9a9ea4,#969aa1,#8f939a,#848990,#787d84,#6a6f77,#4e535c,#202632,#323741,#656a72,#83878f,#93979e,#9ca0a7,#9fa3aa,#9da1a8,#999da4,#989da3,#9da1a8,#a4a8ae,#abafb5,#b0b4b9,#afb3b9,#aaaeb4,#a4a8ae,#9da1a7,#989ca3,#999da3,#9ea2a8,#a2a6ad,#a3a7ad,#a1a5ac,#9ca1a7,#94989f,#898e95,#82868e,#80858c,#82878e,#8c9198,#999ea4,#a3a7ad,#a7abb1,#a6aab0,#a2a6ac,#9a9ea5,#8c9097,#7e828a,#797d85,#7e838a,#868b92,#8e9299,#94999f,#979ca2,#979ba2,#959aa1,#9499a0,#969aa1,#9da1a7,#a6aab1,#afb2b8,#b3b7bd,#b5b8be,#b6babf,#b8bcc2,#babdc3,#b8bcc1,#b3b7bd,#adb1b7,#a5a9af,#9a9ea5,#92979d,#94989f,#9ca0a7,#a2a7ad,#a7abb1,#adb1b7,#b4b7bd,#b7bbc0,#b6bac0,#b3b7bd,#afb3b9,#adb1b7,#b0b3b9,#b2b6bc,#b3b7bd)"></i>
<i style="background:linear-gradient(90deg,#82878e,#767a82,#6e737b,#7a7e86,#8e9299,#9da1a8,#a4a8ae,#a8acb2,#aaaeb5,#aaaeb4,#a5a9af,#9fa3a9,#9a9ea5,#989ca3,#969aa1,#93979e,#8e939a,#878b92,#7d8189,#71757d,#585d65,#343a44,#3e444d,#696e76,#858991,#94989f,#9da1a8,#9fa3aa,#9ca0a7,#979ba2,#969aa1,#9a9ea5,#a1a6ac,#aaaeb4,#afb2b8,#aeb2b8,#a9adb3,#a2a6ac,#9a9ea5,#969aa1,#999da4,#a0a4ab,#a5a9af,#a5a9af,#a3a7ad,#9ea2a9,#979ba2,#8e9299,#868b92,#83878f,#83878e,#8b9097,#999da4,#a2a6ad,#a6aab0,#a4a8ae,#9fa3a9,#9499a0,#848890,#757a82,#767b82,#81858d,#8b8f96,#93979e,#979ba2,#979ca2,#9599a0,#93979e,#93979e,#969aa1,#9da1a7,#a5a9b0,#adb1b7,#b2b5bb,#b4b7bd,#b5b9bf,#b8bcc1,#babdc3,#b8bbc1,#b3b6bc,#acb0b6,#a4a8ae,#989ca3,#8d9299,#8e939a,#989ca3,#a0a4aa,#a5a9b0,#adb1b7,#b4b7bd,#b7bac0,#b6b9bf,#b2b6bc,#aeb2b8,#adb1b7,#afb3b9,#b2b6bc,#b3b6bc)"></i>
<i style="background:linear-gradient(90deg,#868a92,#7b8087,#757a82,#7f848b,#91959c,#9fa3aa,#a6aab0,#a9adb4,#acb0b6,#abafb5,#a6aab0,#9ea2a9,#989da3,#9599a0,#93979e,#91969d,#8f949b,#8b8f96,#83888f,#797d85,#646971,#484d56,#4c515a,#6e737b,#888c93,#969aa1,#9ea2a9,#a0a4ab,#9ca0a7,#959aa1,#93989f,#989ca3,#a0a4aa,#a9adb3,#aeb2b8,#adb1b7,#a8acb2,#a0a4aa,#979ca2,#94999f,#9a9ea4,#a2a6ac,#a7abb1,#a7abb1,#a4a8ae,#a0a4aa,#999da4,#92969d,#8c9097,#878c93,#858990,#8c9097,#999da3,#a2a6ad,#a6aab0,#a3a7ad,#9ca0a7,#8f949b,#7c8088,#6e737b,#757a82,#848990,#90949b,#979ba2,#9a9ea5,#989ca3,#94989f,#91959c,#93979e,#969ba1,#9da1a7,#a4a8af,#abafb5,#afb3b9,#b2b5bb,#b4b8be,#b7bbc1,#b9bdc2,#b7bbc0,#b2b6bb,#abafb5,#a2a6ad,#9599a0,#888c93,#888c93,#93989e,#9da1a8,#a4a8af,#adb0b7,#b3b7bd,#b6babf,#b5b8be,#b1b5bb,#adb1b7,#acb0b6,#afb2b8,#b1b5bb,#b2b5bb)"></i>
<i style="background:linear-gradient(90deg,#8a8f96,#81868d,#7c8188,#848890,#93989f,#a0a4ab,#a6aab1,#aaaeb4,#adb0b7,#acafb6,#a6aab1,#9ea2a9,#989ca3,#93979e,#91959c,#91959c,#91969d,#8f949b,#8a8e95,#81858d,#70747c,#595e66,#5a5f67,#747981,#8b8f96,#989da3,#a0a4ab,#a1a5ac,#9ca0a7,#9599a0,#92979d,#979ba2,#9fa3aa,#a8acb2,#adb1b7,#acb0b6,#a7aab1,#9ea2a9,#9599a0,#93979e,#9a9ea4,#a3a7ad,#a8acb2,#a8acb2,#a5a9af,#a0a5ab,#9ca0a6,#969aa1,#91959c,#8c9097,#888d94,#8e9299,#999ea4,#a2a6ad,#a5a9b0,#a2a6ac,#999ea4,#8b8f96,#757981,#696e76,#767b83,#888d94,#94999f,#9ca0a6,#9da1a8,#999ea4,#93989e,#90959c,#93979e,#989ca2,#9da1a8,#a3a7ad,#a8acb3,#acb0b6,#afb3b9,#b2b6bc,#b6bac0,#b8bcc1,#b6bac0,#b1b4ba,#a9adb3,#a0a4ab,#91959c,#82868d,#81868d,#8f939a,#9b9fa6,#a3a7ae,#acb0b6,#b3b7bc,#b5b9be,#b3b7bd,#afb3b9,#acafb6,#abafb5,#adb1b7,#b0b4ba,#b1b4ba)"></i>
<i style="background:linear-gradient(90deg,#8f949b,#878c93,#82878e,#888c93,#9599a0,#a0a4ab,#a7abb1,#aaaeb4,#adb1b7,#acb0b6,#a7abb1,#9fa3a9,#989ca3,#93979e,#91959c,#92969d,#94999f,#94999f,#90959c,#898d94,#7a7f86,#676b73,#656a72,#7a7f86,#8e939a,#9b9fa6,#a2a6ac,#a2a6ad,#9da1a8,#9599a0,#92979d,#979ba2,#9fa3a9,#a8acb2,#adb1b7,#acb0b6,#a6aab0,#9da1a8,#93989f,#92969d,#999ea4,#a3a7ae,#a9acb3,#a8acb2,#a4a8af,#a1a5ab,#9da1a8,#9a9ea5,#969aa1,#91959c,#8c9198,#90959c,#9b9fa6,#a3a7ad,#a5a9b0,#a1a5ab,#989ca3,#878b93,#6f747c,#676b73,#797e85,#8d9198,#999da3,#9fa4aa,#a0a4ab,#9ba0a6,#94989f,#91959c,#9599a0,#999da4,#9ea2a8,#a2a6ac,#a6aab0,#a9adb3,#acb0b6,#b0b4ba,#b5b8be,#b7bbc0,#b5b9be,#afb3b9,#a8acb2,#9ea2a9,#8d9299,#7c8088,#7c8088,#8c9097,#9a9ea4,#a3a7ad,#acb0b6,#b2b6bc,#b4b8bd,#b1b5bb,#adb1b7,#a9adb3,#a9adb3,#acb0b6,#afb3b9,#afb3b9)"></i>
<i style="background:linear-gradient(90deg,#94989f,#8d9198,#878c93,#8a8f96,#9599a0,#a0a4aa,#a6aab0,#aaaeb4,#adb0b7,#acb0b6,#a8acb2,#a0a4ab,#999da4,#94989f,#92969d,#94989f,#989ca3,#999da4,#969aa1,#8f949b,#83878e,#71767e,#6e737b,#7f848b,#91969d,#9da1a8,#a4a8ae,#a4a8ae,#9ea3a9,#979ba2,#93989f,#989ca3,#a0a4aa,#a9adb3,#adb1b7,#acb0b6,#a6aab0,#9ca1a7,#93979e,#91959c,#999da4,#a3a7ad,#a8acb2,#a7abb1,#a3a7ae,#a0a4ab,#9ea3a9,#9da1a7,#9a9ea5,#969aa1,#91959c,#94989f,#9da1a7,#a4a8ae,#a6aab0,#a1a5ab,#979ba2,#858a91,#6d7179,#676c74,#7c8188,#90959c,#9ca0a7,#a3a7ad,#a3a7ad,#9ea2a8,#969aa1,#93979e,#979ba2,#9ba0a6,#9fa3a9,#a1a5ab,#a3a7ad,#a6aab0,#a9adb3,#adb1b7,#b3b6bc,#b5b9bf,#b4b7bd,#aeb2b8,#a6aab0,#9ca0a7,#8a8e96,#777b83,#787c84,#8a8e96,#999da4,#a3a7ad,#acb0b6,#b2b6bb,#b3b6bc,#afb3b9,#aaaeb5,#a7abb1,#a6aab0,#aaaeb4,#adb1b7,#aeb2b8)"></i>
<i style="background:linear-gradient(90deg,#989da3,#92969d,#8c9097,#8c9198,#9599a0,#9ea2a9,#a4a8af,#a8acb2,#acb0b6,#acb0b6,#a9adb3,#a2a6ac,#9b9fa6,#969aa1,#94989f,#979ba2,#9b9fa6,#9da1a8,#9b9fa5,#9599a0,#898e95,#7a7e86,#767a82,#84888f,#94989f,#9fa3aa,#a6aab0,#a6aab0,#a0a4ab,#999da4,#969aa1,#9a9ea5,#a2a6ac,#aaaeb4,#aeb2b8,#adb1b7,#a6aab0,#9da1a8,#93979e,#91959c,#989da3,#a2a6ac,#a7abb1,#a5a9b0,#a2a6ac,#9fa3aa,#9fa3aa,#9fa3aa,#9ea2a9,#9a9ea5,#959aa0,#979ba2,#9fa3aa,#a5a9b0,#a6aab1,#a1a5ac,#979ba2,#858a91,#6d727a,#696e76,#80848c,#94989f,#9fa3a9,#a5a9b0,#a5a9b0,#a0a4ab,#999da4,#969aa1,#9a9ea5,#9ea2a9,#a0a4aa,#a0a4aa,#a0a4ab,#a2a6ad,#a6aab0,#abafb5,#b1b4ba,#b4b8bd,#b2b6bc,#acb0b6,#a4a8af,#9a9ea4,#878b93,#73787f,#767a82,#8a8e95,#999da4,#a3a7ae,#acb0b6,#b1b5bb,#b1b5bb,#adb1b7,#a8acb2,#a4a8ae,#a3a7ae,#a7abb2,#acafb6,#acb0b6)"></i>
<i style="background:linear-gradient(90deg,#9ca0a7,#969aa1,#8f939a,#8d9199,#93979e,#9ca0a6,#a2a6ac,#a6aab1,#abaeb5,#acb0b6,#aaaeb4,#a4a8ae,#9ea2a9,#999da4,#979ca2,#9a9fa5,#9fa3a9,#a1a5ab,#9ea3a9,#999da4,#8f939a,#80858c,#7c8088,#878c93,#969ba1,#a1a5ab,#a7abb1,#a7abb2,#a3a7ad,#9ca0a6,#999da4,#9da1a8,#a4a8ae,#acafb6,#b0b3b9,#aeb2b8,#a7abb1,#9ea2a9,#94999f,#91969d,#989ca3,#a0a4ab,#a5a9af,#a3a7ae,#9fa3aa,#9da2a8,#9fa3a9,#a1a5ab,#a1a5ab,#9ea2a8,#999da4,#9b9fa6,#a1a5ac,#a7abb1,#a8acb2,#a2a6ad,#989da3,#878b93,#70757d,#6d727a,#83878f,#969aa1,#a1a5ab,#a7abb1,#a7abb2,#a3a7ad,#9ca0a6,#999da4,#9da1a8,#a1a5ab,#a1a5ac,#9fa3aa,#9ea2a8,#9fa3a9,#a3a7ad,#a8acb2,#afb2b8,#b2b6bc,#b1b5bb,#abafb5,#a3a7ad,#989ca3,#848990,#71767d,#767b82,#8b8f96,#9a9fa5,#a4a8af,#adb1b7,#b1b5bb,#b0b4ba,#abafb5,#a5a9af,#a1a5ab,#a0a4ab,#a5a9af,#aaaeb4,#abafb5)"></i>
<i style="background:linear-gradient(90deg,#9fa4aa,#9a9ea5,#92969d,#8d9299,#91959c,#989da3,#9fa3a9,#a4a8ae,#a9adb3,#acb0b6,#abafb5,#a6aab1,#a1a5ac,#9da1a7,#9b9fa6,#9ea2a8,#a2a6ac,#a4a8ae,#a2a6ac,#9da1a7,#93979e,#868a91,#80858c,#8a8f96,#989da3,#a2a7ad,#a9acb3,#a9adb3,#a5a9af,#9fa3a9,#9ca1a7,#a0a4ab,#a6aab1,#aeb1b7,#b1b5bb,#afb3b9,#a8acb3,#9fa4aa,#969aa1,#92969d,#979ba2,#9ea2a9,#a2a6ad,#a0a4ab,#9ca0a7,#9b9fa6,#9ea3a9,#a2a6ad,#a4a8ae,#a1a5ac,#9da1a8,#9ea2a9,#a4a8ae,#a9adb3,#a9adb3,#a4a8ae,#9a9ea5,#898e95,#747981,#72767e,#868a92,#989ca3,#a2a7ad,#a9acb3,#a9adb3,#a5a9af,#9fa3a9,#9ca1a7,#a0a4ab,#a3a7ae,#a3a7ad,#9fa3aa,#9ca0a6,#9ca0a6,#9fa4aa,#a5a9b0,#adb0b6,#b1b5bb,#b0b4ba,#aaaeb4,#a1a5ac,#969aa1,#82878e,#70757c,#777c84,#8d9198,#9ca0a7,#a6aab0,#adb1b7,#b1b5bb,#afb3b9,#a9adb3,#a2a6ad,#9da1a8,#9da1a8,#a3a7ad,#a8acb2,#a9adb3)"></i>
<i style="background:linear-gradient(90deg,#a3a7ad,#9da1a8,#9599a0,#8e9299,#8e939a,#9599a0,#9b9fa6,#a1a5ab,#a7abb1,#abafb5,#acb0b6,#a9adb3,#a4a8ae,#a0a4aa,#9ea3a9,#a1a5ac,#a5a9af,#a6aab1,#a5a9af,#a0a4ab,#979ba2,#8a8f96,#858991,#8d9299,#9a9ea5,#a4a8ae,#aaaeb4,#abafb5,#a7abb1,#a2a6ac,#a0a4aa,#a3a7ae,#a9adb3,#afb3b9,#b2b6bc,#b0b4ba,#aaaeb4,#a1a5ab,#989ca3,#93979e,#969aa1,#9ca0a7,#9fa3aa,#9da1a8,#989da3,#999da4,#9ea2a9,#a4a8ae,#a6aab0,#a4a8ae,#a0a4ab,#a1a5ab,#a6aab0,#aaaeb4,#aaaeb4,#a5a9af,#9ca0a7,#8c9097,#787d84,#767b82,#898d94,#9a9ea5,#a4a8ae,#aaaeb4,#abaeb5,#a7abb1,#a2a6ac,#a0a4aa,#a3a7ae,#a6aab0,#a4a8af,#9fa3aa,#999ea4,#989ca3,#9ca0a7,#a2a7ad,#aaaeb4,#afb3b9,#aeb2b8,#a8acb3,#9fa4aa,#94989f,#80848c,#6f747c,#797e85,#8f939a,#9ea2a9,#a7abb1,#aeb2b8,#b1b5bb,#aeb2b8,#a7abb1,#9fa3aa,#9a9ea5,#9a9ea5,#a0a4ab,#a6aab1,#a8acb2)"></i>
<i style="background:linear-gradient(90deg,#a6aab0,#a0a4ab,#979ca2,#8e929a,#8c9097,#91959c,#979ba2,#9da1a8,#a5a9af,#abafb5,#adb1b7,#abafb5,#a7abb1,#a3a7ae,#a2a6ad,#a4a8af,#a8acb2,#a9adb3,#a8acb2,#a3a7ae,#9b9fa6,#8f939a,#898e95,#91959c,#9da1a7,#a6aab0,#abafb5,#acb0b6,#a9adb3,#a4a8ae,#a2a6ad,#a6aab0,#abafb5,#b1b4ba,#b3b7bd,#b1b5bb,#aaaeb4,#a2a6ac,#999da4,#93979e,#94999f,#999da4,#9ca0a7,#999da4,#9599a0,#969ba1,#9ea2a8,#a5a9af,#a9acb3,#a7abb1,#a3a7ae,#a4a8ae,#a8acb2,#abafb5,#abafb5,#a6aab0,#9da1a8,#8e9299,#7c8088,#797e86,#8b8f96,#9b9fa6,#a5a9af,#abafb5,#acb0b6,#a9adb3,#a4a8ae,#a3a7ad,#a6aab0,#a8acb2,#a5a9af,#9ea2a9,#979ba2,#94989f,#989da3,#9fa3aa,#a8acb2,#adb1b7,#adb1b7,#a7abb1,#9da1a8,#91959c,#7d8289,#6f747c,#7c8088,#92969d,#a0a4ab,#a8acb3,#afb3b9,#b1b4ba,#adb1b7,#a4a8ae,#9b9fa6,#969aa1,#969ba1,#9ea2a8,#a5a9af,#a7abb1)"></i>
<i style="background:linear-gradient(90deg,#a8acb3,#a4a8ae,#9a9ea5,#8f939a,#888d94,#8b9097,#92969d,#999da4,#a2a6ad,#aaaeb4,#aeb2b8,#adb1b7,#aaaeb4,#a7abb1,#a6aab0,#a8acb2,#abafb5,#acb0b6,#abafb5,#a7abb1,#9fa3aa,#94989f,#8f939a,#9599a0,#9fa3aa,#a8acb2,#adb1b7,#aeb2b8,#abafb5,#a6aab0,#a4a8ae,#a7abb1,#acb0b6,#b1b5bb,#b4b7bd,#b1b5bb,#abafb5,#a2a6ad,#999da4,#93979e,#92969d,#969aa1,#989ca3,#9599a0,#91959c,#94989f,#9ea2a9,#a7abb1,#abafb5,#aaaeb4,#a7abb1,#a7abb1,#aaaeb4,#acb0b6,#abafb5,#a6aab1,#9ea2a8,#8f949b,#7e838a,#7d8189,#8c9198,#9ca0a7,#a5a9af,#abafb5,#acb0b6,#aaaeb4,#a6aab0,#a5a9af,#a8acb2,#a9adb3,#a5a9b0,#9da1a8,#93979e,#8f949b,#94989f,#9ca0a7,#a5a9b0,#abafb5,#abafb5,#a4a8af,#9b9fa5,#8e9299,#7a7f86,#70757c,#80848c,#9599a0,#a2a7ad,#aaaeb4,#b0b3b9,#b0b4ba,#abafb5,#a1a5ab,#979ba2,#92969d,#93979e,#9ca0a6,#a3a7ae,#a6aab0)"></i>
<i style="background:linear-gradient(90deg,#abafb5,#a7abb1,#9da1a8,#90949b,#858a91,#858991,#8c9097,#94989f,#9fa3aa,#a9adb4,#afb3b8,#afb3b9,#adb1b7,#aaaeb4,#aaaeb4,#acb0b6,#aeb2b8,#afb3b9,#aeb2b8,#aaaeb4,#a3a7ae,#999da4,#94989f,#999da4,#a2a6ad,#aaaeb4,#afb3b9,#b0b3b9,#acb0b6,#a7abb2,#a5a9b0,#a8acb2,#acb0b6,#b1b5bb,#b3b7bd,#b1b5bb,#aaaeb4,#a2a6ad,#999da4,#91959c,#8f939a,#91959c,#93979e,#90959b,#8c9198,#92979d,#9fa3a9,#a9adb3,#aeb2b8,#adb1b7,#aaaeb4,#a9adb4,#abafb5,#acb0b6,#abafb5,#a6aab0,#9ea2a8,#90959c,#81858d,#7f848b,#8e9299,#9ca0a7,#a5a9af,#aaaeb4,#acb0b6,#abafb5,#a8acb2,#a7abb1,#a9adb3,#aaaeb4,#a5a9af,#9b9fa5,#8f939a,#8a8e95,#8f949b,#989ca3,#a3a7ad,#a9adb3,#a8acb2,#a1a6ac,#979ba2,#898e95,#777c83,#72767e,#848990,#999da4,#a5a9b0,#acb0b6,#b0b4ba,#b0b3b9,#a9adb3,#9da1a8,#92979e,#8d9198,#8f949b,#9a9ea5,#a3a7ad,#a5a9b0)"></i>
<i style="background:linear-gradient(90deg,#adb1b7,#aaaeb4,#a0a4ab,#91959c,#82868e,#7e828a,#848990,#8e929a,#9ca0a7,#a8acb2,#afb3b9,#b1b5bb,#b0b4ba,#aeb2b8,#adb1b7,#afb3b9,#b2b5bb,#b2b6bc,#b1b4ba,#adb1b7,#a7abb1,#9ea2a8,#999da4,#9da1a8,#a5a9b0,#acb0b6,#b1b5bb,#b1b5bb,#aeb1b7,#a8acb2,#a6aab0,#a8acb2,#acb0b6,#b0b4ba,#b2b6bc,#b0b4b9,#a9adb3,#a1a5ac,#989ca3,#8f939a,#8a8f96,#8c9097,#8e9299,#8b9097,#898d94,#91969c,#a0a4ab,#abafb5,#b1b4ba,#b0b4ba,#adb1b7,#acb0b6,#acb0b6,#acb0b6,#aaaeb4,#a4a9af,#9da1a8,#91959c,#83888f,#82868e,#8e939a,#9b9fa6,#a3a7ae,#a9adb3,#abafb5,#abafb5,#a9adb3,#a8acb2,#aaaeb4,#aaaeb4,#a4a8ae,#979ca2,#898e95,#848890,#8b8f96,#9499a0,#a0a4aa,#a6aab0,#a6a9b0,#9ea2a9,#93979e,#858990,#747980,#757981,#8a8e95,#9da2a8,#a8acb2,#aeb2b8,#b1b4ba,#aeb2b8,#a6aab0,#999da4,#8d9299,#898d94,#8d9198,#999da4,#a3a7ad,#a5a9b0)"></i>
<i style="background:linear-gradient(90deg,#afb3b9,#acb0b6,#a3a7ae,#93979e,#7f848b,#767b82,#7d8189,#888d94,#999da3,#a7abb1,#b0b4b9,#b3b7bc,#b2b6bc,#b1b4ba,#b1b4ba,#b2b6bc,#b4b8be,#b5b8be,#b3b7bd,#b0b4ba,#aaaeb4,#a2a6ac,#9da1a8,#a1a5ab,#a8acb2,#aeb2b8,#b2b6bc,#b2b6bc,#afb2b8,#a9adb3,#a5a9b0,#a7abb1,#aaaeb4,#afb3b9,#b1b4ba,#aeb2b8,#a8abb2,#9fa3aa,#969aa1,#8b9097,#858991,#858a91,#888c93,#878b92,#868a91,#91959c,#a2a6ac,#aeb2b8,#b3b7bd,#b3b6bc,#b0b3b9,#aeb1b8,#acb0b6,#abafb5,#a8acb2,#a3a7ad,#9ca0a6,#91959c,#858a91,#848990,#8f939a,#9a9ea5,#a2a6ac,#a7abb1,#aaaeb4,#abaeb5,#a9adb3,#a9adb3,#aaaeb4,#a9adb3,#a1a5ac,#93979e,#83888f,#7e828a,#868a92,#91969c,#9da1a8,#a4a8ae,#a3a7ad,#9a9fa5,#8e939a,#80848b,#72767e,#787d84,#8f939a,#a1a5ac,#abafb5,#afb3b9,#b1b5bb,#adb1b7,#a3a7ad,#94989f,#888d94,#858991,#8b9097,#999da4,#a3a7ae,#a6aab0)"></i>
<i style="background:linear-gradient(90deg,#b0b4ba,#aeb2b8,#a6aab0,#9499a0,#7d8289,#6f747c,#757a82,#83878e,#959aa0,#a6aab0,#b0b4b9,#b4b8bd,#b4b8bd,#b3b7bc,#b3b7bd,#b5b9bf,#b7bac0,#b7bac0,#b5b9be,#b2b6bc,#acb0b6,#a5a9af,#a1a5ab,#a4a8ae,#aaaeb4,#b0b4ba,#b4b8bd,#b4b7bd,#afb3b9,#a9acb3,#a4a8af,#a5a9af,#a8acb2,#acb0b6,#aeb2b8,#acafb6,#a5a9b0,#9da1a8,#93979e,#878c93,#7f838b,#7e838a,#82868e,#83878e,#848990,#92969d,#a4a8ae,#b0b4b9,#b5b9be,#b4b8be,#b2b5bb,#afb3b9,#acb0b6,#a9adb3,#a5a9af,#a0a4ab,#9a9ea5,#91959c,#888c93,#878b93,#8f949b,#999da4,#9fa3aa,#a4a8af,#a8acb2,#aaaeb4,#aaadb4,#a9adb3,#a9adb3,#a7abb1,#9ea2a9,#8e9299,#7c8189,#787d85,#82878e,#8f939a,#9b9fa6,#a2a6ac,#a0a4aa,#979ba2,#8a8e96,#7b7f87,#70757d,#7d8189,#94989f,#a5a9af,#adb1b7,#b1b4ba,#b1b5ba,#abafb5,#9fa3aa,#8f939a,#848890,#82878e,#8b9097,#9a9ea5,#a4a8af,#a7abb1)"></i>
<i style="background:linear-gradient(90deg,#b1b5bb,#b0b4ba,#a8acb2,#979ba2,#7d8289,#6a6f77,#70747c,#7e838a,#93979e,#a4a8af,#afb3b9,#b4b8be,#b5b9be,#b4b8be,#b5b9bf,#b7bbc0,#b8bcc2,#b8bcc1,#b6babf,#b3b7bd,#aeb2b8,#a7abb1,#a4a8ae,#a6aab1,#acb0b6,#b2b5bb,#b5b8be,#b4b8be,#afb3b9,#a8acb2,#a3a7ad,#a3a7ad,#a5a9b0,#a9adb3,#abafb5,#a9adb3,#a3a7ad,#9b9fa5,#90959c,#83878f,#787d84,#777c83,#7d8189,#80858c,#848990,#94999f,#a6aab0,#b1b5bb,#b6bac0,#b6b9bf,#b3b7bc,#afb3b9,#abafb5,#a6aab1,#a2a6ac,#9da1a8,#989ca3,#91969c,#8a8f96,#8a8e95,#90949b,#979ba2,#9ca0a7,#a1a5ac,#a6aab0,#a9adb3,#a9adb3,#a9adb3,#a8acb2,#a5a9af,#9a9ea5,#888c93,#767a82,#747980,#80858c,#8e9299,#9a9ea5,#a0a4ab,#9ea2a8,#94989f,#868b92,#777c83,#71767d,#81868d,#999da4,#a8acb2,#afb3b9,#b1b5bb,#b0b4ba,#a9adb3,#9b9fa6,#8a8e95,#80858c,#82868e,#8d9198,#9ca0a7,#a6aab0,#a8acb3)"></i>
<i style="background:linear-gradient(90deg,#b1b5bb,#b1b4ba,#a9adb4,#999da4,#7e838a,#686d75,#6d7279,#7c8188,#91959c,#a3a7ad,#afb2b8,#b4b8be,#b5b9bf,#b5b9bf,#b7bac0,#b8bcc2,#b9bdc3,#b9bcc2,#b7bac0,#b4b8bd,#afb3b9,#a9acb3,#a5a9b0,#a8acb2,#adb1b7,#b2b6bc,#b5b9bf,#b4b8be,#afb3b9,#a7abb2,#a1a5ac,#a0a4ab,#a2a6ac,#a5a9b0,#a7abb1,#a6aab0,#a0a4ab,#989ca3,#8d9299,#7e838a,#71767e,#71757d,#797e85,#80848c,#868b92,#979ba2,#a8acb2,#b3b7bc,#b7bbc0,#b6babf,#b3b7bd,#afb3b9,#aaadb4,#a3a7ae,#9ea2a8,#9a9ea5,#969ba1,#92969d,#8d9299,#8d9198,#91959c,#969aa1,#999da4,#9ea2a8,#a3a7ae,#a7abb2,#a9adb3,#a8acb2,#a6aab1,#a2a6ac,#9599a0,#81858d,#6f747c,#72777e,#80858c,#8e939a,#9a9ea5,#9fa4aa,#9ca0a7,#91969d,#83888f,#757a81,#73787f,#868b92,#9da1a7,#abaeb5,#b0b4ba,#b2b5bb,#afb3b9,#a6aab0,#979ba2,#868a91,#7f838b,#83888f,#90949b,#9fa3aa,#a8acb3,#aaaeb4)"></i>
<i style="background:linear-gradient(90deg,#b0b4ba,#b1b5bb,#abafb5,#9b9fa6,#81868d,#6a6f77,#6e727a,#7c8188,#90949b,#a2a6ac,#adb1b7,#b3b7bd,#b5b9be,#b6b9bf,#b7bbc0,#b9bdc2,#babdc3,#b9bcc2,#b6bac0,#b4b7bd,#afb3b9,#a9adb3,#a6aab0,#a9adb3,#aeb2b8,#b2b6bc,#b5b9bf,#b4b8be,#afb3b9,#a6aab1,#9fa3aa,#9da1a8,#9ea2a9,#a1a5ac,#a3a7ae,#a2a6ad,#9da1a8,#969aa1,#8b8f96,#7a7f86,#6b7078,#6c7178,#787c84,#81868d,#8a8e95,#9b9fa5,#aaaeb4,#b4b7bd,#b7bbc0,#b6babf,#b3b7bd,#aeb2b8,#a7abb1,#a0a4aa,#9a9ea4,#969ba2,#9599a0,#93979e,#91959c,#90959c,#92969d,#9499a0,#969aa1,#9a9ea5,#a1a5ab,#a6aab0,#a8acb2,#a7abb1,#a4a8af,#9ea2a9,#8f949a,#797e85,#6b6f77,#72777f,#82878e,#90949b,#9ba0a6,#a0a4aa,#9ca0a6,#90949b,#82878e,#757a82,#777b83,#8b8f96,#a0a4aa,#acb0b6,#b1b5ba,#b1b5bb,#adb1b7,#a3a7ad,#92979e,#82878e,#7f848b,#868b92,#94989f,#a3a7ad,#abafb5,#abafb5)"></i>
<i style="background:linear-gradient(90deg,#afb3b9,#b1b5ba,#acafb6,#9da1a8,#858a91,#70747c,#72777f,#7f848b,#91959c,#a1a5ab,#acb0b6,#b2b5bb,#b4b8bd,#b5b9be,#b7bbc0,#b9bdc2,#babdc3,#b8bcc1,#b6b9bf,#b3b6bc,#aeb2b8,#a8acb3,#a6aab0,#a9adb3,#aeb2b8,#b2b6bc,#b5b8be,#b4b8bd,#aeb2b8,#a5a9b0,#9da1a8,#9a9ea5,#9a9ea5,#9da1a7,#9fa3aa,#9fa3aa,#9b9fa6,#94989f,#898d94,#777c83,#676c74,#696e76,#787d84,#848990,#8e939a,#9ea2a9,#acb0b6,#b4b8be,#b7bac0,#b5b9bf,#b2b6bc,#adb1b7,#a4a8af,#9ba0a6,#959aa0,#94989f,#94989f,#94989f,#94989f,#94989f,#94989f,#94989f,#94989f,#979ba2,#9ea2a9,#a5a9af,#a7abb2,#a6aab0,#a2a6ac,#9a9ea5,#898d94,#72767e,#686c74,#757a81,#868a91,#93979e,#9ea2a8,#a1a5ac,#9ca0a7,#90959c,#83888f,#787c84,#7b8087,#8f949b,#a2a6ad,#adb1b7,#b1b4ba,#b0b4ba,#abafb5,#9fa3aa,#8e9299,#81858c,#81868d,#8a8f96,#989da3,#a6aab0,#adb1b7,#adb1b7)"></i>
<i style="background:linear-gradient(90deg,#aeb1b7,#b0b4ba,#acb0b6,#9fa3aa,#8a8e95,#777b83,#797e85,#848990,#92979e,#a0a4ab,#aaaeb4,#b0b3b9,#b2b6bc,#b4b8bd,#b6bac0,#b8bcc2,#b9bcc2,#b7bbc0,#b4b8be,#b1b5bb,#acb0b6,#a7abb1,#a5a9af,#a8acb2,#adb1b7,#b1b5bb,#b4b7bd,#b3b7bc,#aeb2b8,#a5a9af,#9ca0a7,#989ca3,#969ba1,#999da4,#9ca0a7,#9ca1a7,#999da4,#92979e,#888c93,#767a82,#656a72,#696e76,#7a7f87,#888d94,#93989e,#a2a6ac,#aeb2b8,#b4b8be,#b6b9bf,#b4b7bd,#b0b4ba,#aaaeb4,#a1a5ac,#979ba2,#92969d,#92969d,#93989f,#969aa1,#979ca2,#989ca3,#969aa1,#94989f,#92969d,#94989f,#9ca0a7,#a3a7ae,#a7aab1,#a5a9af,#a0a4aa,#969aa1,#82878e,#6b6f77,#676c74,#797e85,#8a8e95,#979ba2,#a0a4ab,#a3a7ad,#9ea2a8,#92969d,#868a92,#7c8188,#81858d,#93979e,#a4a8ae,#aeb1b8,#b0b4ba,#afb3b9,#a8acb3,#9b9fa6,#8a8f96,#80858c,#858991,#8f949b,#9da1a8,#aaadb4,#afb3b9,#aeb2b8)"></i>
<i style="background:linear-gradient(90deg,#abafb5,#afb3b9,#acb0b6,#a1a5ab,#8f939a,#7f838b,#81858c,#8a8e95,#9599a0,#9fa4aa,#a8acb2,#adb1b7,#b0b4b9,#b2b6bc,#b5b9be,#b7bbc1,#b7bbc1,#b5b9bf,#b2b6bc,#afb3b9,#aaaeb4,#a5a9af,#a3a7ae,#a6aab1,#acafb6,#b0b3b9,#b2b6bc,#b2b6bb,#adb1b7,#a4a8ae,#9b9fa6,#969aa1,#93989f,#959aa0,#999da4,#9b9fa6,#989da3,#92969d,#888c94,#767b82,#666b73,#6b7078,#7e838a,#8d9198,#989ca3,#a5a9b0,#afb3b9,#b4b8be,#b4b8be,#b1b5bb,#aeb2b8,#a7abb2,#9da1a8,#93989e,#8f939a,#91959c,#94989f,#989ca3,#9b9fa6,#9b9fa6,#999da3,#9599a0,#91959c,#92979e,#9a9fa5,#a2a6ad,#a6aab0,#a4a8ae,#9da2a8,#92969d,#7c8188,#656a72,#696e76,#7e838a,#8f939a,#9b9fa5,#a3a7ae,#a5a9b0,#a0a4aa,#9599a0,#8a8e95,#82868d,#868b92,#969ba1,#a5a9af,#adb1b7,#afb3b9,#adb0b7,#a5a9b0,#979ba2,#878b93,#81868d,#898d95,#94989f,#a1a5ac,#adb0b7,#b1b5bb,#afb3b9)"></i>
<i style="background:linear-gradient(90deg,#a9adb3,#aeb1b7,#acb0b6,#a3a7ad,#93979e,#868b92,#888d94,#90949b,#989ca3,#9fa3aa,#a5a9b0,#aaaeb4,#adb1b7,#b0b3b9,#b3b7bd,#b6b9bf,#b6b9bf,#b3b7bd,#afb3b9,#acb0b6,#a7abb1,#a2a6ac,#a0a4ab,#a4a8af,#a9adb4,#adb1b7,#b0b4ba,#b0b4ba,#acb0b6,#a4a8ae,#9b9fa6,#9599a0,#92969d,#93989f,#979ca2,#9a9ea5,#999da4,#93979e,#898e95,#787d84,#696e76,#70747c,#82878e,#91969c,#9ca0a7,#a8acb2,#b0b4ba,#b3b7bd,#b2b6bc,#afb3b9,#abafb5,#a4a8ae,#999ea4,#90949b,#8d9299,#91959c,#959aa0,#9b9fa5,#9ea3a9,#9fa3a9,#9ba0a6,#969aa1,#92969d,#92969d,#9a9ea5,#a2a6ad,#a6aab0,#a3a7ae,#9ca0a7,#8f939a,#777c83,#62676f,#6c7179,#83888f,#93979e,#9ea2a9,#a6aab0,#a8acb2,#a3a7ad,#989ca3,#8e939a,#878c93,#8b9097,#999da4,#a6aab0,#acb0b6,#adb1b7,#aaaeb4,#a2a6ac,#93979e,#848990,#83878f,#8d9299,#999da3,#a5a9af,#afb3b9,#b3b7bc,#b0b4ba)"></i>
<i style="background:linear-gradient(90deg,#a6aab1,#acb0b6,#abafb5,#a4a8ae,#979ba2,#8d9198,#8f939a,#959aa0,#9b9fa6,#9fa3aa,#a3a7ad,#a6aab1,#aaaeb4,#adb1b7,#b1b5bb,#b4b7bd,#b3b7bd,#b1b4ba,#adb0b6,#a9adb3,#a3a7ae,#9ea2a9,#9da1a8,#a1a5ac,#a7abb1,#abafb5,#aeb2b8,#afb3b9,#acb0b6,#a4a8af,#9ca0a6,#959aa1,#92969d,#93979e,#979ca2,#9b9fa5,#9a9ea5,#9599a0,#8c9097,#7c8088,#6e737b,#747981,#878b92,#9599a0,#a0a4ab,#aaaeb4,#b1b5bb,#b3b6bc,#b0b4ba,#acb0b6,#a8acb2,#a0a4ab,#969aa1,#8e9299,#8d9299,#92969d,#989ca2,#9da1a8,#a2a6ac,#a2a6ad,#9ea2a9,#989da3,#93979e,#93979e,#9a9ea5,#a2a6ad,#a6aab0,#a3a7ad,#9b9fa6,#8d9198,#747981,#62676f,#70757d,#888d94,#979ba2,#a1a6ac,#a9adb3,#aaaeb4,#a5a9b0,#9ca0a6,#93979e,#8d9198,#90949b,#9b9fa6,#a6aab0,#abafb5,#abafb5,#a7abb1,#9ea2a9,#8f939a,#83878e,#858a91,#91969d,#9ca1a7,#a8acb2,#b1b5bb,#b4b8be,#b1b4ba)"></i>
<i style="background:linear-gradient(90deg,#a4a8ae,#aaaeb4,#abafb5,#a5a9af,#9b9fa5,#93979e,#9599a0,#9a9ea5,#9ea2a8,#9fa4aa,#a1a5ab,#a3a7ad,#a6aab0,#aaaeb4,#aeb2b8,#b1b5bb,#b1b5bb,#aeb2b8,#a9adb4,#a5a9b0,#a0a4aa,#9a9ea5,#999da4,#9ea2a9,#a4a8ae,#a8acb3,#acb0b6,#aeb2b8,#abafb5,#a5a9af,#9da1a8,#979ba2,#93979e,#94999f,#999da4,#9ca0a7,#9ca0a7,#979ca2,#8f949b,#80858c,#747880,#797e86,#8b8f96,#989da3,#a3a7ad,#acb0b6,#b1b5bb,#b1b5bb,#aeb1b7,#a9adb3,#a4a8af,#9da1a7,#93979e,#8d9198,#8f939a,#9599a0,#9a9ea5,#a0a4ab,#a5a9af,#a5a9af,#a1a5ac,#9b9fa6,#969aa1,#9599a0,#9ca0a6,#a3a7ae,#a6aab1,#a3a7ae,#9b9fa6,#8c9097,#747980,#646971,#757981,#8c9198,#9a9ea5,#a4a8af,#abafb5,#adb1b7,#a8acb2,#9fa3aa,#979ba2,#92969d,#94989f,#9da1a7,#a5a9af,#a9adb3,#a8acb2,#a4a8ae,#9a9ea5,#8b8f96,#82868e,#888c93,#9599a0,#9fa4aa,#abaeb5,#b3b6bc,#b5b8be,#b1b4ba)"></i>
<i style="background:linear-gradient(90deg,#a2a6ad,#a9adb3,#aaaeb4,#a6aab0,#9da1a8,#979ba2,#999da4,#9ea2a9,#a0a4ab,#a0a4aa,#9fa3aa,#a0a4aa,#a3a7ad,#a7abb1,#acb0b6,#afb3b9,#afb3b9,#abafb5,#a6aab1,#a2a6ac,#9ca0a6,#969aa1,#9599a0,#9a9fa5,#a1a5ab,#a6a9b0,#aaaeb4,#acb0b6,#abafb5,#a6aab1,#a0a4aa,#9a9ea5,#969aa1,#979ba2,#9b9fa6,#9fa3a9,#9fa3a9,#9b9fa5,#93979e,#858a91,#797e85,#7e838a,#8e9299,#9b9fa6,#a5a9af,#adb1b7,#b1b5bb,#b0b4ba,#abafb5,#a6aab0,#a1a5ab,#999da4,#90959c,#8d9198,#91959c,#989ca3,#9da1a8,#a3a7ae,#a8abb2,#a8acb2,#a4a8ae,#9ea2a9,#999da4,#989ca3,#9ea2a9,#a5a9af,#a7abb2,#a4a8af,#9ca0a6,#8d9198,#767a82,#686d75,#797e85,#8f949b,#9da1a8,#a6aab0,#adb1b7,#afb2b8,#aaaeb4,#a2a6ad,#9b9fa6,#969ba1,#979ca2,#9ea2a8,#a4a8ae,#a7abb1,#a5a9b0,#a1a5ab,#969aa1,#888c93,#81868d,#8a8e96,#979ca2,#a2a6ac,#acb0b6,#b4b7bd,#b5b9be,#b0b4ba)"></i>
<i style="background:linear-gradient(90deg,#a0a4ab,#a8acb2,#aaaeb4,#a6aab1,#a0a4aa,#9b9fa6,#9da1a8,#a1a5ac,#a2a6ad,#a0a4ab,#9da1a8,#9da1a7,#a0a4aa,#a4a8af,#a9adb3,#adb1b7,#acb0b6,#a9adb3,#a3a7ae,#9fa3a9,#989ca3,#91969c,#91959c,#979ba2,#9ea2a8,#a3a7ad,#a8abb2,#abafb5,#acb0b6,#a8acb2,#a2a6ad,#9da1a8,#999ea4,#9a9ea5,#9ea2a9,#a2a6ac,#a2a6ac,#9ea2a9,#979ba2,#8a8e95,#7f838a,#82878e,#91959c,#9da1a8,#a6aab1,#aeb2b8,#b1b5bb,#afb3b9,#a9adb3,#a3a7ad,#9ea2a8,#969aa1,#8f939a,#8e9299,#94989f,#9b9fa6,#a0a4ab,#a6aab0,#aaaeb4,#aaaeb4,#a7abb1,#a1a5ac,#9ca0a7,#9b9fa6,#a0a4ab,#a6aab1,#a9adb3,#a5a9b0,#9da1a8,#8f939a,#797d85,#6d7179,#7d8189,#92969d,#9fa3a9,#a8acb2,#aeb2b8,#b0b4ba,#adb0b6,#a5a9af,#9fa3a9,#9a9ea5,#9a9ea5,#9ea2a9,#a3a7ad,#a5a9af,#a3a7ad,#9da1a8,#93979e,#858991,#81868d,#8c9097,#999ea4,#a3a8ae,#adb1b7,#b4b8be,#b5b9be,#b0b3b9)"></i>
<i style="background:linear-gradient(90deg,#9fa3a9,#a7aab1,#a9adb3,#a7abb1,#a2a6ac,#9ea2a9,#a0a4ab,#a4a8ae,#a4a8af,#a1a5ab,#9ca0a7,#999ea4,#9ca0a7,#a1a5ac,#a7abb1,#aaaeb4,#aaaeb4,#a6aab0,#a0a4ab,#9b9fa6,#94989f,#8d9198,#8c9097,#92979e,#9a9ea5,#a0a4aa,#a5a9b0,#aaaeb4,#acb0b6,#aaaeb4,#a5a9af,#a0a4ab,#9da1a8,#9ea2a8,#a1a5ac,#a4a8af,#a5a9af,#a1a5ac,#9b9fa5,#8e939a,#83888f,#868a92,#93979e,#9fa3a9,#a8acb2,#afb2b8,#b1b5bb,#aeb2b8,#a7abb1,#a0a4aa,#9a9ea5,#93979e,#8e9299,#90949b,#979ca2,#9fa3a9,#a3a7ae,#a9acb3,#acb0b6,#adb1b7,#a9adb3,#a4a8af,#a0a4aa,#9ea2a9,#a3a7ad,#a8acb2,#aaaeb4,#a7abb1,#9fa3a9,#91959c,#7c8189,#71767e,#80858c,#94989f,#a0a4ab,#a9adb3,#b0b4b9,#b2b6bb,#aeb2b8,#a8acb2,#a2a6ac,#9ea2a8,#9ca1a7,#9fa3a9,#a2a6ac,#a2a6ad,#9fa4aa,#9a9ea5,#8f939a,#82878e,#81868d,#8e9299,#9b9fa6,#a5a9af,#aeb2b8,#b4b8be,#b5b8be,#afb3b9)"></i>
<i style="background:linear-gradient(90deg,#9da1a8,#a5a9b0,#a9adb3,#a8acb2,#a4a8ae,#a1a5ac,#a3a8ae,#a7abb1,#a6aab1,#a1a5ac,#9a9fa5,#969ba1,#999da4,#9ea2a9,#a4a8af,#a8acb2,#a8acb2,#a3a7ae,#9da1a8,#989ca3,#90949b,#878c93,#868b92,#8e9299,#969aa1,#9ca0a7,#a3a7ad,#a9adb3,#acb0b6,#abafb5,#a7abb2,#a3a7ae,#a0a4ab,#a1a5ab,#a4a8af,#a7abb2,#a7abb2,#a4a8ae,#9ea2a9,#93979e,#888c93,#898d95,#9599a0,#a0a4ab,#a9adb3,#afb3b9,#b1b4ba,#acb0b6,#a4a8ae,#9ca0a7,#969ba1,#90949b,#8c9198,#91959c,#9a9ea5,#a1a5ac,#a6aab0,#abafb5,#aeb2b8,#afb3b9,#abafb5,#a7abb1,#a2a6ad,#a1a5ac,#a5a9af,#aaaeb4,#abafb5,#a8acb2,#a0a4ab,#93979e,#80848c,#767b82,#84888f,#969ba1,#a2a6ac,#aaaeb4,#b1b5bb,#b3b7bd,#b0b4ba,#aaaeb4,#a5a9af,#a1a5ab,#9fa3aa,#9fa4aa,#a1a5ab,#a0a4ab,#9ca1a7,#969ba1,#8b9097,#80858c,#82868d,#90949b,#9da1a8,#a6aab1,#afb3b9,#b5b8be,#b5b8be,#aeb2b8)"></i>
<i style="background:linear-gradient(90deg,#9ca0a7,#a4a8af,#a8acb3,#a8acb3,#a6aab0,#a5a9af,#a7abb1,#aaaeb4,#a9acb3,#a2a7ad,#9a9ea5,#94989f,#969aa1,#9b9fa6,#a1a6ac,#a6aab0,#a5a9b0,#a1a5ab,#9a9fa5,#94999f,#8b9097,#81868d,#80848c,#888c93,#91959c,#989ca3,#9fa3aa,#a7abb1,#acb0b6,#acb0b6,#a9adb3,#a6aab0,#a3a7ad,#a4a8ae,#a7abb2,#aaaeb4,#aaaeb4,#a7abb1,#a1a5ac,#969aa1,#8b9097,#8c9097,#969ba1,#a1a5ac,#aaadb4,#afb3b9,#b0b4ba,#abaeb5,#a1a5ab,#989ca3,#92979d,#8c9097,#8b8f96,#92969d,#9ca0a7,#a3a8ae,#a8acb2,#acb0b6,#b0b4ba,#b0b4ba,#adb1b7,#a8acb3,#a4a8af,#a3a7ae,#a7abb1,#abafb5,#acb0b6,#a8acb3,#a1a5ab,#9599a0,#83888f,#7b8087,#888c93,#999da4,#a4a8ae,#acafb6,#b2b6bc,#b5b8be,#b2b6bc,#adb1b7,#a8acb2,#a4a8af,#a2a6ac,#a1a5ab,#a0a4ab,#9ea2a9,#9a9ea5,#94989f,#898d94,#7f838b,#83878e,#92969d,#9fa3aa,#a8acb2,#b0b4ba,#b5b9bf,#b5b8be,#aeb2b8)"></i>
<i style="background:linear-gradient(90deg,#9b9fa6,#a3a7ae,#a8acb2,#a9adb3,#a8acb3,#a8acb2,#aaaeb4,#adb0b7,#abafb5,#a4a8ae,#9a9ea5,#92979d,#93979e,#999da3,#9fa3a9,#a3a7ae,#a3a7ae,#9fa3a9,#989ca3,#91969d,#878b93,#7b8087,#787c84,#80858c,#8b8f96,#92979e,#9b9fa6,#a5a9af,#abafb5,#acb0b6,#abaeb5,#a7abb2,#a5a9b0,#a7abb1,#aaaeb4,#adb1b7,#adb1b7,#aaaeb4,#a4a8af,#999ea4,#8e939a,#8e9299,#979ca2,#a2a6ac,#aaaeb4,#afb3b9,#afb3b9,#a8acb2,#9da1a8,#94989f,#8e9299,#888d94,#898e95,#92979e,#9da2a8,#a5a9af,#a9adb3,#adb1b7,#b1b4ba,#b1b4ba,#aeb2b8,#a9adb4,#a6aab0,#a5a9af,#a8acb2,#abafb5,#acb0b6,#a8acb2,#a1a5ab,#969aa1,#868b92,#81858d,#8d9198,#9ca0a7,#a5a9b0,#adb1b7,#b3b7bd,#b6b9bf,#b4b8be,#b0b3b9,#abafb5,#a8acb2,#a5a9af,#a2a6ad,#a0a4ab,#9da1a8,#989da3,#92969d,#878b93,#7e838a,#848990,#94989f,#a1a5ac,#aaadb4,#b1b5bb,#b6babf,#b5b9be,#aeb2b8)"></i>
<i style="background:linear-gradient(90deg,#9b9fa6,#a3a7ad,#a8acb2,#aaaeb4,#abafb5,#abafb5,#adb1b7,#afb3b9,#adb1b7,#a6aab0,#9b9fa6,#92969d,#92969d,#969ba1,#9da1a7,#a1a5ac,#a2a6ac,#9da1a8,#979ba2,#8f949b,#83888f,#757981,#6e737b,#777c83,#83888f,#8c9198,#969ba1,#a2a6ac,#a9adb3,#acb0b6,#abafb5,#a9acb3,#a7abb1,#a9adb3,#adb1b7,#b0b3b9,#afb3b9,#acb0b6,#a7abb1,#9ca0a7,#91959c,#8f939a,#989ca3,#a2a6ad,#aaaeb4,#aeb2b8,#adb1b7,#a5a9b0,#999da4,#8f939a,#898e95,#858a91,#888c94,#92979e,#9ea2a8,#a5a9af,#a9adb3,#adb1b7,#b0b4ba,#b0b4ba,#aeb1b7,#aaadb4,#a6aab1,#a5a9b0,#a8acb2,#abaeb5,#abafb5,#a7abb1,#a0a4ab,#969aa1,#8a8e95,#878b92,#92969d,#9fa3aa,#a7abb1,#aeb2b8,#b4b7bd,#b7bac0,#b6babf,#b2b6bc,#aeb2b8,#abafb5,#a8acb2,#a4a8af,#a1a5ab,#9da1a8,#989ca3,#91959c,#878b92,#7f848b,#878b92,#969ba1,#a3a7ad,#abafb5,#b3b6bc,#b7bac0,#b5b9bf,#aeb2b8)"></i>
<i style="background:linear-gradient(90deg,#9b9fa6,#a2a6ac,#a7abb2,#abafb5,#adb1b7,#aeb2b8,#b0b4ba,#b2b5bb,#afb3b9,#a8acb2,#9ca1a7,#93979e,#91959c,#9599a0,#9b9fa5,#9fa4aa,#a0a4ab,#9da1a7,#969aa1,#8e9299,#81858d,#6e737b,#646971,#6d7279,#7b8087,#858a91,#91959c,#9ea2a9,#a7abb1,#abafb5,#abafb5,#a9adb3,#a9adb3,#acafb6,#b0b3b9,#b2b6bb,#b1b5bb,#aeb2b8,#a9adb3,#9ea2a9,#92969d,#8f939a,#989ca3,#a2a6ac,#aaaeb4,#aeb1b7,#abafb5,#a2a6ad,#94989f,#8a8e95,#858a91,#83878e,#878c93,#92969d,#9da2a8,#a5a9af,#a9adb3,#adb1b7,#b0b3b9,#afb3b9,#adb0b6,#a9adb3,#a6aab0,#a5a9af,#a7abb1,#a9adb3,#a9adb3,#a5a9b0,#9fa3aa,#969aa1,#8d9198,#8d9198,#979ba2,#a2a6ad,#a9adb3,#aeb2b8,#b4b8bd,#b7bbc1,#b7bbc0,#b4b8be,#b1b5bb,#aeb2b8,#aaaeb4,#a7abb1,#a2a6ad,#9ea2a8,#989da3,#92969d,#888c94,#82868d,#898e95,#999da4,#a5a9af,#adb0b7,#b4b7bd,#b8bbc1,#b6babf,#afb3b9)"></i>
<i style="background:linear-gradient(90deg,#9ca0a7,#a1a5ac,#a7abb1,#acafb6,#afb3b9,#b1b5bb,#b2b6bc,#b3b7bd,#b1b5bb,#aaaeb4,#9fa3a9,#9599a0,#92969d,#94989f,#999da4,#9ea2a9,#a0a4aa,#9da1a8,#969ba1,#8e9299,#7f848b,#696e76,#5a5f67,#62676f,#73777f,#7e838a,#8c9097,#9a9ea5,#a4a8af,#a9adb3,#aaaeb4,#a9adb3,#aaaeb4,#adb1b7,#b2b5bb,#b4b8bd,#b3b7bd,#b0b4ba,#aaaeb4,#9fa3aa,#92979d,#8f939a,#979ba2,#a1a5ac,#a9adb3,#acb0b6,#a9adb3,#9ea3a9,#8f939a,#858a91,#82878e,#82868d,#878b93,#92969d,#9ca1a7,#a3a7ae,#a8acb2,#acb0b6,#aeb2b8,#aeb2b8,#abafb5,#a7abb2,#a5a9af,#a4a8af,#a6aab0,#a7abb2,#a7abb1,#a3a7ad,#9da1a8,#969aa1,#90949b,#93979e,#9ca0a7,#a5a9af,#aaaeb4,#afb2b8,#b4b8bd,#b7bbc1,#b8bcc1,#b6babf,#b3b7bd,#b0b4ba,#adb1b7,#a9adb3,#a4a8af,#9fa3aa,#9a9ea5,#94989f,#8a8f96,#858990,#8c9098,#9b9fa6,#a6aab1,#aeb2b8,#b5b8be,#b8bcc1,#b7bac0,#b0b4ba)"></i>
<i style="background:linear-gradient(90deg,#9da1a8,#a1a5ac,#a6aab1,#acb0b6,#b0b4ba,#b3b6bc,#b4b8be,#b5b8be,#b2b6bc,#abafb5,#a1a5ac,#989ca3,#94989f,#94989f,#989da3,#9ea2a8,#a0a4aa,#9ea2a8,#989ca3,#8f939a,#7f848b,#666b73,#51565e,#585d65,#6b7077,#787d85,#878b92,#969aa1,#a1a5ab,#a7abb1,#a9acb3,#a9adb3,#aaaeb4,#afb3b9,#b3b7bd,#b5b9bf,#b4b8be,#b1b5ba,#abafb5,#9fa4aa,#92969d,#8d9299,#969aa1,#a0a4ab,#a8acb2,#abafb5,#a7abb1,#9b9fa5,#8a8f96,#82868d,#81868d,#82878e,#888c93,#91969c,#9b9fa6,#a2a6ac,#a6aab0,#aaaeb4,#acb0b6,#abafb5,#a8acb2,#a5a9af,#a3a7ae,#a3a7ad,#a4a8ae,#a5a9af,#a4a8ae,#a0a4ab,#9b9fa6,#969aa1,#93989f,#989ca3,#a1a5ab,#a8acb2,#abafb5,#aeb2b8,#b3b7bd,#b7bbc0,#b8bcc2,#b7bbc0,#b5b8be,#b2b6bb,#aeb2b8,#abaeb5,#a6aab0,#a1a5ac,#9ca0a7,#969ba1,#8d9299,#888c93,#8e939a,#9ca0a7,#a7abb2,#afb3b9,#b5b9bf,#b9bcc2,#b7bbc1,#b1b5ba)"></i>
<i style="background:linear-gradient(90deg,#9ea3a9,#a1a5ab,#a6aab0,#acb0b6,#b1b5bb,#b4b8bd,#b5b9be,#b5b9bf,#b3b7bc,#adb1b7,#a4a8ae,#9b9fa6,#969aa1,#9599a0,#989ca3,#9da1a8,#a1a5ab,#9fa3aa,#9a9ea4,#91959c,#80858c,#656a72,#4b5059,#51565e,#666a72,#747981,#83878f,#92969d,#9da1a8,#a3a7ae,#a6aab1,#a8acb2,#aaaeb4,#b0b4ba,#b5b9be,#b7bac0,#b5b9be,#b1b5bb,#abafb5,#9fa3a9,#90959b,#8b9097,#94989f,#9fa3aa,#a7abb1,#a9adb3,#a4a8ae,#979ba2,#868b92,#7f848b,#82868e,#858990,#898e95,#91959c,#999da4,#9fa3aa,#a4a8ae,#a7abb2,#a9adb3,#a8acb2,#a5a9af,#a2a6ad,#a1a5ac,#a1a5ac,#a2a6ac,#a2a6ac,#a0a4aa,#9da1a7,#999da4,#959aa1,#979ba2,#9da1a8,#a5a9af,#aaaeb4,#acb0b6,#aeb2b8,#b2b6bc,#b6babf,#b8bcc1,#b8bbc1,#b6b9bf,#b3b7bc,#b0b3b9,#acb0b6,#a8acb2,#a4a8ae,#9fa3aa,#999ea4,#91959c,#8b8f96,#90959c,#9da1a8,#a8acb2,#afb3b9,#b6b9bf,#b9bdc2,#b8bbc1,#b2b5bb)"></i>
<i style="background:linear-gradient(90deg,#a0a4aa,#a0a4ab,#a5a9af,#abafb5,#b1b5bb,#b5b8be,#b5b9bf,#b5b9be,#b3b7bc,#aeb2b8,#a6aab1,#9fa3a9,#999da4,#969ba1,#989ca3,#9ea2a8,#a2a6ac,#a1a5ac,#9ca0a7,#93979e,#83878e,#666b73,#4a4f58,#4f545d,#646971,#747880,#81868d,#8e939a,#999da4,#a0a4aa,#a4a8ae,#a6aab0,#aaaeb4,#b1b5ba,#b6b9bf,#b7bbc0,#b5b9be,#b1b5ba,#aaaeb4,#9da2a8,#8e9299,#898d94,#92969d,#9ea2a8,#a6aab0,#a8acb2,#a2a6ac,#94989f,#848890,#7f848b,#848990,#888d94,#8c9098,#91959c,#979ba2,#9ca0a7,#a1a5ac,#a5a9af,#a6aab0,#a4a8af,#a1a5ac,#9fa3aa,#9fa3aa,#9fa3aa,#9fa3aa,#9ea2a9,#9ca0a7,#999da4,#969ba1,#969aa1,#9a9ea5,#a1a5ac,#a8acb2,#abafb5,#acb0b6,#adb0b6,#b0b4ba,#b5b8be,#b7bbc1,#b8bbc1,#b6b9bf,#b3b7bd,#b0b4ba,#adb1b7,#aaaeb4,#a6aab0,#a2a6ac,#9da1a7,#94989f,#8e9299,#92969d,#9ea2a8,#a8acb2,#afb3b9,#b6b9bf,#b9bdc2,#b8bcc1,#b2b6bc)"></i>
<i style="background:linear-gradient(90deg,#a1a5ac,#a0a4ab,#a3a7ae,#aaaeb4,#b1b5ba,#b4b8be,#b5b9be,#b4b8be,#b2b6bc,#afb2b8,#a9adb3,#a2a6ac,#9ca0a7,#989ca3,#999da4,#9ea2a9,#a3a7ad,#a3a7ae,#9fa3a9,#969aa1,#858a91,#6a6f76,#4f545d,#535861,#686c74,#767b82,#82868d,#8c9097,#9599a0,#9ba0a6,#a0a5ab,#a4a8af,#aaaeb4,#b1b5bb,#b6bac0,#b7bbc1,#b5b8be,#b0b4ba,#a9adb3,#9b9fa6,#8a8f96,#858a91,#90949b,#9ca0a7,#a4a8af,#a6aab0,#9fa4aa,#91969d,#83878e,#81868d,#888d94,#8d9198,#8f949b,#91969d,#9599a0,#999ea4,#9ea3a9,#a2a6ac,#a3a7ad,#a0a4ab,#9da1a8,#9ba0a6,#9ca1a7,#9da1a8,#9da1a8,#9b9fa6,#989ca3,#959aa1,#9499a0,#969aa1,#9da1a7,#a5a9af,#abafb5,#adb0b7,#acafb6,#abafb5,#aeb2b8,#b2b6bc,#b6babf,#b7bbc0,#b5b9bf,#b2b6bc,#b0b4ba,#adb1b7,#abafb5,#a8acb2,#a4a8af,#9fa3aa,#979ba2,#90949b,#93979e,#9ea2a8,#a8acb2,#afb3b9,#b5b9bf,#b9bdc2,#b8bcc1,#b3b7bc)"></i>
<i style="background:linear-gradient(90deg,#a2a6ad,#9fa4aa,#a2a6ac,#a9adb3,#b0b4ba,#b4b7bd,#b4b7bd,#b3b6bc,#b1b5bb,#afb2b8,#abaeb5,#a5a9af,#9fa3aa,#9a9ea5,#999ea4,#9fa3a9,#a4a8ae,#a5a9b0,#a1a5ac,#989da3,#888d94,#6e737b,#575c65,#5c6169,#6e737b,#7b8087,#848990,#8b9097,#91969c,#979ba2,#9da1a8,#a3a7ad,#a9adb3,#b2b5bb,#b7bac0,#b7bbc0,#b4b7bd,#aeb2b8,#a7abb1,#989ca3,#868b92,#82868e,#8e9299,#9b9fa6,#a3a7ae,#a5a9af,#9ea2a8,#90949b,#83888f,#858990,#8d9299,#92979d,#93989e,#92979e,#93979e,#979ba2,#9ca0a7,#9fa3aa,#9fa3aa,#9ca1a7,#999da4,#989ca3,#9a9ea5,#9ca0a6,#9b9fa6,#989ca3,#94999f,#93979e,#93979e,#979ba2,#a0a4aa,#a8acb2,#adb1b7,#adb1b7,#abafb5,#a9adb3,#abafb5,#b0b3b9,#b4b8bd,#b6b9bf,#b4b8bd,#b1b5bb,#afb3b9,#adb1b7,#acb0b6,#aaadb4,#a6aab0,#a2a6ac,#999ea4,#91969d,#93979e,#9da1a8,#a7abb1,#aeb2b8,#b5b9be,#b9bcc2,#b8bcc1,#b3b7bd)"></i>
<i style="background:linear-gradient(90deg,#a3a7ad,#9fa3a9,#a0a4ab,#a7abb1,#aeb2b8,#b2b6bc,#b2b6bc,#b0b4ba,#afb3b9,#aeb2b8,#acb0b6,#a7abb2,#a2a6ac,#9b9fa6,#9a9ea5,#9fa3aa,#a5a9b0,#a7abb1,#a3a7ae,#9b9fa5,#8b9097,#737880,#60656e,#676b73,#777b83,#82868d,#888d94,#8c9097,#8f939a,#93989e,#9a9ea5,#a1a5ab,#a9adb3,#b2b5bb,#b7bac0,#b7bac0,#b2b6bc,#adb0b6,#a4a8ae,#94989f,#82868e,#7e838a,#8c9198,#9a9ea5,#a2a7ad,#a4a8ae,#9da1a7,#90949b,#858a91,#898d94,#92979e,#979ca2,#979ba2,#94989f,#92969d,#9499a0,#9a9ea5,#9da1a8,#9ca1a7,#999da4,#959aa0,#9599a0,#989da3,#9a9ea5,#999da4,#969aa1,#92969d,#91959c,#93979e,#989ca3,#a2a6ad,#aaaeb5,#aeb2b8,#adb1b7,#aaaeb4,#a6aab0,#a7abb1,#acb0b6,#b1b5bb,#b4b7bd,#b2b6bc,#afb3b9,#adb1b7,#adb0b6,#acb0b6,#abafb5,#a8acb2,#a3a7ae,#9b9fa6,#92969d,#92969d,#9ba0a6,#a6aab0,#adb1b7,#b4b8bd,#b8bcc1,#b8bbc1,#b3b7bc)"></i>
<i style="background:linear-gradient(90deg,#a4a8ae,#9ea2a9,#9ea2a9,#a5a9af,#acb0b6,#b0b4ba,#b0b3b9,#aeb1b7,#adb1b7,#aeb1b7,#adb1b7,#a9adb3,#a3a7ae,#9ca0a7,#9b9fa5,#a0a4aa,#a6aab0,#a9acb3,#a5a9af,#9ca0a7,#8d9299,#787c84,#6a6e76,#71767d,#7f848b,#898d94,#8d9299,#8e9299,#8d9198,#90949b,#979ba2,#9fa3aa,#a8acb3,#b2b5bb,#b6bac0,#b6b9bf,#b1b5bb,#aaaeb4,#a1a5ac,#90949b,#7d8189,#7b8087,#8b8f97,#999da4,#a2a6ac,#a3a7ae,#9ca0a7,#90959c,#888c94,#8d9299,#979ba2,#9ca0a7,#9b9fa6,#969aa1,#92969d,#93979e,#999da4,#9ca0a6,#9a9fa5,#969ba1,#93979e,#93989e,#979ca2,#9a9ea5,#989da3,#94999f,#90949b,#90949b,#93979e,#9a9ea5,#a5a9af,#adb0b6,#afb3b9,#adb1b7,#a8acb2,#a3a7ae,#a3a7ae,#a9acb3,#aeb2b8,#b1b5bb,#b0b3b9,#adb1b7,#abafb5,#abafb5,#acb0b6,#abafb5,#a8acb3,#a4a8ae,#9ca0a6,#92969d,#91959c,#9a9ea4,#a4a8ae,#acb0b6,#b3b7bc,#b7bbc0,#b7bac0,#b2b6bc)"></i>
<i style="background:linear-gradient(90deg,#a4a8ae,#9da1a8,#9ca0a7,#a2a6ad,#aaaeb4,#aeb1b7,#adb1b7,#aaaeb4,#aaaeb5,#acb0b6,#adb1b7,#aaaeb4,#a5a9af,#9da1a8,#9b9fa5,#a0a4ab,#a7abb1,#a9adb3,#a6aab0,#9da1a8,#8f939a,#7c8088,#72767e,#7a7f86,#878c93,#8f939a,#92979e,#90959c,#8d9198,#8e9299,#9599a0,#9ea2a9,#a8acb2,#b2b5bb,#b6babf,#b5b9be,#afb3b9,#a8acb2,#9ea2a8,#8b9097,#787d84,#797e85,#8b8f96,#999da4,#a2a6ac,#a3a7ad,#9da1a7,#92969d,#8b9097,#91969d,#9ba0a6,#a0a4ab,#9ea3a9,#989da3,#92979e,#93979e,#999da4,#9ba0a6,#9a9ea5,#9599a0,#92969d,#93979e,#989ca3,#9a9ea5,#999da4,#94999f,#90949b,#90959c,#9599a0,#9ca0a7,#a7abb1,#aeb2b8,#b0b4ba,#adb0b6,#a6aab1,#a0a4ab,#9fa3aa,#a5a9af,#abafb5,#aeb2b8,#adb1b7,#aaaeb4,#a8acb3,#a9adb4,#abafb5,#abafb5,#a8acb3,#a4a8ae,#9b9fa6,#91959c,#8f939a,#979ca2,#a2a6ad,#aaaeb4,#b2b5bb,#b6babf,#b6b9bf,#b1b5bb)"></i>
<i style="background:linear-gradient(90deg,#a3a7ae,#9ba0a6,#9a9ea5,#9fa3aa,#a7abb1,#abafb5,#aaaeb4,#a7abb1,#a8acb2,#abafb5,#adb0b7,#abafb5,#a5a9af,#9da1a8,#9a9ea5,#a0a4aa,#a7abb1,#aaaeb4,#a6aab1,#9ea2a8,#90949b,#7f838b,#787d84,#82868e,#8e9299,#9599a0,#979ba2,#94989f,#8e9299,#8d9199,#94989f,#9ea2a9,#a8acb2,#b2b5bb,#b6b9bf,#b4b8bd,#adb1b7,#a5a9b0,#9a9fa5,#878b93,#747880,#787c84,#8b8f97,#9a9ea5,#a2a6ad,#a4a8ae,#9da1a8,#93989f,#8e939a,#9599a0,#9fa3aa,#a3a7ae,#a2a6ac,#9b9fa6,#94999f,#9499a0,#9a9ea5,#9ca0a7,#9a9ea5,#969aa1,#92979d,#94989f,#999da4,#9ca0a6,#9a9ea5,#969aa1,#92969d,#92969d,#979ba2,#9fa3a9,#a9adb3,#afb3b9,#b0b4ba,#acb0b6,#a5a9af,#9da1a8,#9ba0a6,#a1a5ab,#a8acb2,#abafb5,#aaaeb4,#a6aab1,#a5a9b0,#a7abb1,#a9adb4,#aaaeb4,#a8acb2,#a3a7ae,#9a9ea5,#8f939a,#8c9097,#9599a0,#a0a4ab,#a9adb3,#b0b4ba,#b5b8be,#b5b8be,#b0b4ba)"></i>
<i style="background:linear-gradient(90deg,#a2a6ad,#9a9ea5,#979ba2,#9ca1a7,#a4a8ae,#a8acb2,#a6aab1,#a3a7ae,#a5a9af,#a9adb3,#acb0b6,#abafb5,#a5a9af,#9ca0a7,#999ea4,#9fa3aa,#a6aab0,#a9adb3,#a6aab0,#9da1a8,#8f949b,#80858c,#7d8289,#888d94,#93989f,#9a9ea5,#9ba0a6,#979ba2,#90949b,#8e9299,#94999f,#9ea3a9,#a9adb3,#b2b6bb,#b6b9bf,#b3b7bd,#acb0b6,#a3a7ad,#979ca2,#83888f,#71767d,#787c84,#8c9198,#9b9fa6,#a3a7ae,#a4a8af,#9fa3a9,#959aa0,#91969d,#989ca3,#a2a6ac,#a6aab0,#a4a8ae,#9ea2a8,#979ba2,#979ba2,#9ca0a7,#9ea2a9,#9ca0a7,#989ca2,#94999f,#969aa1,#9b9fa6,#9ea2a9,#9ca1a7,#989ca3,#94999f,#9599a0,#9a9ea5,#a1a5ac,#aaaeb5,#b0b4ba,#b0b4ba,#abafb5,#a3a7ad,#9b9fa5,#989ca3,#9da1a8,#a4a8af,#a8acb2,#a6aab1,#a3a7ad,#a2a6ad,#a5a9af,#a8abb2,#a8acb3,#a6aab0,#a1a5ac,#989ca3,#8c9098,#898d94,#92969d,#9ea2a9,#a7abb1,#afb3b9,#b3b7bd,#b3b7bd,#aeb2b8)"></i>
<i style="background:linear-gradient(90deg,#a1a5ac,#989ca3,#9599a0,#9a9ea4,#a1a5ac,#a5a9af,#a3a7ae,#a0a4aa,#a2a6ac,#a7abb1,#abafb5,#aaaeb4,#a4a8ae,#9b9fa6,#989ca3,#9ea2a8,#a5a9b0,#a9acb3,#a5a9af,#9ca0a7,#8e939a,#81868d,#81858d,#8d9198,#989ca3,#9ea2a8,#9fa3aa,#9a9ea5,#93979e,#90949b,#969aa1,#a0a4aa,#aaaeb4,#b2b6bc,#b5b9bf,#b2b6bc,#aaaeb4,#a1a5ac,#9599a0,#81858c,#70747c,#797e85,#8e9299,#9ca0a7,#a4a8af,#a6aab0,#a0a4ab,#979ca2,#94989f,#9a9fa5,#a4a8ae,#a8acb2,#a6aab1,#a0a4ab,#9a9ea5,#9a9ea5,#9fa3a9,#a1a5ab,#9fa3a9,#9a9fa5,#979ca2,#999da4,#9ea2a9,#a1a5ab,#9fa3aa,#9b9fa6,#989ca3,#989da3,#9da1a8,#a4a8ae,#acb0b6,#b1b4ba,#b0b3b9,#aaadb4,#a1a5ac,#989ca3,#9599a0,#9a9ea5,#a1a5ac,#a5a9af,#a3a7ae,#9fa3aa,#9fa3a9,#a2a6ac,#a5a9af,#a6aab1,#a4a8ae,#9fa3a9,#9599a0,#888d94,#858a91,#90949b,#9ca0a7,#a6aab0,#aeb1b7,#b2b6bc,#b2b5bb,#acb0b6)"></i>
<i style="background:linear-gradient(90deg,#9fa4aa,#969aa1,#92969d,#979ba2,#9ea2a9,#a2a6ad,#a0a4ab,#9da1a7,#9fa3a9,#a5a9af,#a9adb3,#a9acb3,#a2a7ad,#999ea4,#969aa1,#9ca0a7,#a4a8ae,#a7abb2,#a4a8ae,#9a9ea5,#8d9198,#81868d,#84888f,#91959c,#9ca0a6,#a1a5ab,#a2a6ac,#9da1a8,#969aa1,#92969d,#979ca2,#a1a5ac,#abafb5,#b3b6bc,#b5b9bf,#b2b5bb,#a9adb3,#9fa4aa,#93979e,#7e838a,#6f747c,#7b7f87,#90949b,#9ea2a9,#a6aab0,#a7abb1,#a1a6ac,#999da4,#969aa1,#9ca0a7,#a5a9af,#a9adb3,#a8acb2,#a3a7ad,#9da1a8,#9da1a8,#a2a6ac,#a4a8ae,#a2a6ac,#9ea2a8,#9b9fa6,#9da1a7,#a1a5ac,#a4a8ae,#a2a6ad,#9ea3a9,#9b9fa6,#9ca0a7,#a0a4ab,#a6aab1,#aeb1b7,#b1b5bb,#afb3b9,#a8acb3,#9fa4aa,#969aa1,#92969d,#979ba2,#9ea2a9,#a2a6ad,#a0a4ab,#9ca0a7,#9b9fa6,#9ea3a9,#a2a6ad,#a4a8ae,#a1a5ac,#9ca0a6,#91959c,#84888f,#81868d,#8d9198,#9a9fa5,#a4a8ae,#acb0b6,#b1b5ba,#b0b4ba,#aaaeb4)"></i>
<i style="background:linear-gradient(90deg,#9ea2a9,#94989f,#90949b,#94989f,#9ba0a6,#9fa3aa,#9da1a8,#999da4,#9ca0a7,#a3a7ad,#a8abb2,#a7abb1,#a1a5ac,#989ca3,#94989f,#9a9ea5,#a2a7ad,#a6aab0,#a2a6ad,#999da3,#8b9097,#81868d,#868b92,#94999f,#9fa3aa,#a4a8ae,#a5a9af,#a0a4ab,#989da3,#9599a0,#999ea4,#a3a7ad,#acb0b6,#b3b7bd,#b5b9bf,#b1b5bb,#a8acb2,#9ea2a8,#91959c,#7c8188,#6f737b,#7c8189,#92969d,#9fa3aa,#a7abb1,#a8acb2,#a3a7ad,#9b9fa6,#989ca3,#9ea2a9,#a6aab1,#abafb5,#aaaeb4,#a5a9af,#a0a4ab,#a1a5ab,#a5a9af,#a6aab1,#a5a9af,#a1a5ab,#9ea2a9,#a0a4aa,#a4a8ae,#a6aab0,#a5a9af,#a2a6ac,#9fa3a9,#9fa3aa,#a3a7ae,#a9adb3,#afb3b9,#b1b5bb,#afb2b8,#a7abb1,#9ea2a9,#94989f,#8f949b,#94989f,#9b9fa6,#9fa3aa,#9da1a8,#989ca3,#979ca2,#9b9fa6,#9fa3aa,#a0a5ab,#9ea2a8,#989ca3,#8c9198,#7f838b,#7d8289,#8a8f96,#999da4,#a3a7ad,#abafb5,#afb3b9,#aeb2b8,#a8acb2)"></i>
<i style="background:linear-gradient(90deg,#9da1a8,#93979e,#8e9299,#92969d,#999da4,#9da1a7,#9a9ea5,#969aa1,#999da4,#a1a5ab,#a6aab0,#a6aab0,#a0a4ab,#969ba1,#93979e,#999da4,#a1a5ac,#a5a9af,#a1a5ac,#979ba2,#8a8e95,#82868d,#898d95,#989ca3,#a2a6ad,#a7abb1,#a8acb2,#a3a7ad,#9ca0a6,#989ca3,#9ca0a6,#a4a8af,#adb1b7,#b3b7bd,#b5b9be,#b0b4ba,#a6aab0,#9ca0a6,#8e9299,#797e85,#6d727a,#7d8289,#93989e,#a0a5ab,#a8acb2,#a9adb3,#a4a8ae,#9ca0a7,#999da4,#9fa3aa,#a7abb1,#acb0b6,#abafb5,#a7abb2,#a3a8ae,#a4a8ae,#a8acb2,#a9adb3,#a8abb2,#a4a8ae,#a1a5ac,#a2a6ad,#a6aab0,#a8acb2,#a7abb1,#a4a8af,#a2a6ac,#a2a7ad,#a6aab1,#abafb5,#b0b4ba,#b2b6bc,#aeb2b8,#a6aab0,#9ca0a7,#91969d,#8c9098,#90949b,#979ca2,#9ba0a6,#999da4,#94989f,#93979e,#979ba2,#9b9fa6,#9da1a7,#9a9ea5,#94989f,#878c93,#7a7e86,#7a7e86,#888d94,#979ca2,#a2a6ac,#aaaeb4,#aeb2b8,#acb0b6,#a5a9b0)"></i>
<i style="background:linear-gradient(90deg,#9ca1a7,#92979d,#8d9198,#90959c,#979ba2,#9b9fa6,#989ca3,#94989f,#979ba2,#9fa3aa,#a5a9b0,#a6aab0,#a0a4aa,#969aa1,#92979d,#999da3,#a1a5ab,#a4a8af,#a0a4ab,#969aa1,#898d94,#82878e,#8c9097,#9b9fa6,#a5a9af,#aaaeb4,#abaeb5,#a6aab1,#9fa3aa,#9b9fa6,#9ea2a9,#a6aab0,#aeb1b8,#b4b7bd,#b4b8be,#afb2b8,#a4a8ae,#999da4,#8a8f96,#757a81,#6b7078,#7d8289,#94989f,#a1a5ab,#a8acb2,#a9adb3,#a4a8af,#9da1a7,#9a9ea5,#9fa4aa,#a8acb2,#acb0b6,#acb0b6,#aaadb4,#a7abb1,#a7abb2,#abafb5,#acb0b6,#aaaeb4,#a6aab1,#a3a8ae,#a4a8af,#a8acb2,#aaaeb4,#a9adb3,#a6aab0,#a4a8af,#a5a9b0,#a9adb3,#aeb2b8,#b2b6bb,#b2b6bc,#aeb1b7,#a4a8af,#9a9ea5,#8e939a,#888c93,#8b8f96,#92979e,#979ba2,#94989f,#8f939a,#8e9299,#92969d,#969ba1,#989ca3,#9599a0,#8e939a,#82868e,#757a81,#787c84,#888d94,#979ba2,#a1a5ac,#a9adb3,#adb1b7,#aaaeb5,#a3a7ad)"></i>
<i style="background:linear-gradient(90deg,#9da1a8,#93979e,#8e9299,#90959c,#979ba2,#9a9ea5,#979ba2,#92979d,#969aa1,#9fa3a9,#a5a9af,#a6aab0,#a0a4aa,#969ba1,#93979e,#999da4,#a1a5ab,#a4a8ae,#a0a4aa,#959aa0,#898d94,#83888f,#8e939a,#9ea2a9,#a8acb2,#acb0b6,#adb1b7,#aaaeb4,#a3a7ae,#9fa3aa,#a1a5ac,#a8abb2,#aeb2b8,#b3b7bd,#b3b7bd,#adb0b7,#a1a5ac,#9599a0,#868a92,#70747c,#676c74,#7c8188,#93989f,#a1a5ab,#a8acb2,#a9adb3,#a4a8ae,#9ca1a7,#999ea4,#9fa3aa,#a7abb1,#acb0b6,#adb1b7,#abafb5,#aaaeb4,#abafb5,#aeb2b8,#afb3b9,#adb1b7,#a9adb3,#a5a9af,#a5a9b0,#a8acb2,#aaaeb4,#a9adb3,#a7abb2,#a6aab1,#a8acb2,#acb0b6,#b0b4ba,#b3b7bd,#b3b7bc,#adb1b7,#a3a7ad,#979ba2,#8b8f96,#83878f,#858990,#8c9098,#91959c,#8e9299,#888d94,#878c93,#8c9097,#91959c,#92969d,#8f939a,#888c93,#7c8088,#72767e,#787d84,#898e95,#989ca3,#a1a5ac,#a8acb2,#abafb5,#a8acb3,#a1a5ab)"></i>
<i style="background:linear-gradient(90deg,#9ea2a9,#9599a0,#8f949b,#92969d,#979ca2,#9a9ea5,#979ba2,#92979e,#969aa1,#9fa3a9,#a5a9b0,#a6aab1,#a1a5ab,#989ca3,#9599a0,#9a9ea5,#a1a5ac,#a4a8ae,#a0a4aa,#959aa0,#898d94,#858990,#90959c,#a0a4ab,#aaaeb4,#aeb2b8,#b0b4ba,#adb1b7,#a7abb1,#a3a7ad,#a4a8ae,#a9adb3,#afb3b9,#b3b6bc,#b1b5bb,#aaaeb4,#9ea2a8,#91959c,#81858d,#696e76,#62676f,#7a7f86,#92979e,#a0a4aa,#a7abb1,#a8acb2,#a3a7ad,#9ba0a6,#989da3,#9ea2a9,#a6aab0,#acafb6,#adb1b7,#adb1b7,#acb0b6,#aeb1b8,#b1b4ba,#b2b5bb,#afb3b9,#abaeb5,#a6aab0,#a6aab0,#a8acb2,#aaaeb4,#a9adb3,#a8acb2,#a8acb2,#aaaeb4,#aeb2b8,#b2b6bc,#b5b8be,#b3b7bd,#acb0b6,#a1a5ab,#9599a0,#878c93,#7d8189,#7d8189,#848990,#898e95,#878b93,#81868d,#80858c,#848990,#8a8e95,#8b9097,#888c94,#81858d,#767b83,#71767d,#7b8087,#8c9198,#9a9ea4,#a2a6ac,#a8acb2,#aaaeb4,#a6aab1,#9ea2a9)"></i>
<i style="background:linear-gradient(90deg,#a0a4aa,#979ba2,#92979e,#94999f,#999da4,#9b9fa6,#989ca3,#94989f,#979ba2,#a0a4aa,#a6aab0,#a7abb1,#a2a6ad,#9a9ea5,#979ca2,#9ca0a7,#a3a7ad,#a5a9af,#a0a4ab,#969aa1,#8a8e95,#868b92,#92969d,#a2a6ac,#acb0b6,#b0b4ba,#b2b6bc,#b0b4ba,#abafb5,#a7abb1,#a6aab1,#aaaeb4,#afb3b9,#b1b5bb,#afb3b9,#a7abb1,#9a9ea5,#8c9198,#7b7f87,#62676f,#5d626a,#787c84,#91959c,#9ea2a9,#a5a9af,#a6aab0,#a1a5ac,#9a9ea5,#979ba2,#9ca1a7,#a5a9af,#aaaeb4,#adb1b7,#aeb2b8,#aeb2b8,#b0b4ba,#b3b7bd,#b4b8bd,#b1b5bb,#acb0b6,#a7abb1,#a5a9af,#a7abb1,#a8acb3,#a8acb2,#a8acb2,#a9adb3,#acb0b6,#b0b4b9,#b4b7bd,#b6babf,#b4b7bd,#acb0b6,#9fa3aa,#92969d,#83888f,#767b82,#747880,#7b8087,#81868d,#7f848b,#7a7e86,#797e85,#7d8289,#82868e,#84888f,#80858c,#7a7e86,#72777f,#73777f,#80858c,#91959c,#9ca0a7,#a3a7ad,#a8acb2,#a8acb3,#a4a8af,#9ca0a7)"></i>
<i style="background:linear-gradient(90deg,#a2a6ac,#9a9ea5,#969aa1,#979ca2,#9ca0a6,#9da1a8,#9a9ea5,#969aa1,#999da4,#a1a5ab,#a7abb2,#a9acb3,#a4a8af,#9da1a7,#9a9ea5,#9fa3a9,#a4a8af,#a6aab0,#a1a5ac,#979ba2,#8b8f97,#878c93,#93989e,#a3a7ae,#adb1b7,#b2b5bb,#b4b7bd,#b3b6bc,#afb2b8,#aaaeb4,#a9adb3,#abafb5,#aeb2b8,#b0b4ba,#adb1b7,#a4a8ae,#969aa1,#888c93,#757a82,#5b6069,#575c65,#757981,#8e939a,#9ca0a6,#a3a7ad,#a4a8ae,#9fa3aa,#989ca3,#9599a0,#9a9ea5,#a3a7ad,#a9adb3,#adb1b7,#afb3b9,#b0b4ba,#b2b6bc,#b5b8be,#b6b9bf,#b3b7bc,#adb1b7,#a7abb1,#a4a8ae,#a5a9b0,#a6aab0,#a6aab0,#a6aab1,#a9adb3,#adb1b7,#b1b5bb,#b5b9be,#b7bac0,#b4b8be,#abafb5,#9ea2a8,#90949b,#80848c,#6f747c,#696e76,#71767d,#797d85,#787d84,#747880,#73777f,#767b82,#7a7f86,#7c8088,#797e85,#747880,#71757d,#777c83,#878b92,#959aa1,#9fa3a9,#a4a8af,#a7abb2,#a7abb1,#a2a6ac,#9a9ea5)"></i>
<i style="background:linear-gradient(90deg,#a4a8ae,#9da1a8,#9a9ea4,#9b9fa6,#9ea3a9,#a0a4aa,#9da1a8,#999da4,#9b9fa6,#a3a7ad,#a9acb3,#aaaeb4,#a6aab0,#9fa4aa,#9da1a8,#a1a5ac,#a6aab0,#a7abb1,#a2a6ad,#989da3,#8d9198,#888d94,#94989f,#a3a7ae,#aeb1b7,#b2b6bc,#b5b9be,#b5b8be,#b1b5bb,#adb1b7,#abafb5,#acb0b6,#aeb1b8,#aeb2b8,#aaaeb4,#a0a4ab,#92969d,#84888f,#71767d,#565b64,#535861,#72767e,#8c9097,#999da4,#a0a5ab,#a1a6ac,#9da1a7,#9599a0,#92969d,#989ca3,#a0a4ab,#a7abb1,#acb0b6,#afb3b9,#b1b5bb,#b3b7bd,#b6babf,#b7bac0,#b4b8bd,#aeb1b7,#a6aab1,#a3a7ad,#a3a7ae,#a3a7ae,#a3a7ad,#a4a8af,#a8acb2,#adb1b7,#b2b5bb,#b6b9bf,#b7bbc1,#b4b8be,#abafb5,#9da1a7,#8e939a,#7d8289,#696e76,#5f646c,#676b73,#71767d,#72777f,#6f747c,#6f747b,#71767e,#747880,#757981,#73787f,#70757c,#72777e,#7e828a,#8d9299,#9a9fa5,#a2a6ac,#a6aab0,#a7abb1,#a5a9b0,#a0a4aa,#999da4)"></i>
<i style="background:linear-gradient(90deg,#a6aab0,#a0a4aa,#9da1a8,#9ea3a9,#a1a6ac,#a2a7ad,#a0a4aa,#9ca0a6,#9ea2a8,#a4a8af,#aaaeb4,#abafb5,#a8acb2,#a2a6ac,#a0a4ab,#a4a8ae,#a8acb2,#a8acb3,#a3a8ae,#9a9ea5,#8e9299,#898d95,#93989f,#a3a7ad,#adb1b7,#b2b6bc,#b6b9bf,#b6bac0,#b4b8bd,#b0b3b9,#acb0b6,#acb0b6,#acb0b6,#abafb5,#a7aab1,#9da1a8,#8f949b,#81868d,#6e737b,#545962,#52575f,#6f747c,#898e95,#979ba2,#9ea2a8,#9fa3a9,#9a9ea5,#92979e,#90949b,#9599a0,#9ea2a8,#a5a9af,#aaaeb4,#aeb2b8,#b1b5bb,#b4b8bd,#b7bac0,#b7bbc1,#b4b8be,#aeb2b8,#a6aab0,#a1a5ab,#a0a4ab,#a0a4aa,#9fa3aa,#a1a5ac,#a7abb1,#adb1b7,#b2b6bb,#b6babf,#b8bbc1,#b5b8be,#abafb5,#9ca0a7,#8d9299,#7c8088,#646971,#565a63,#5d626b,#6b7078,#6f747c,#6f737b,#6f737b,#6f747b,#70747c,#70747c,#6f747c,#6f747c,#767b82,#858991,#94989f,#9fa3aa,#a4a8af,#a7abb1,#a7abb1,#a3a8ae,#9da1a8,#979ca2)"></i>
<i style="background:linear-gradient(90deg,#a7abb2,#a2a6ad,#a0a4ab,#a1a6ac,#a4a8af,#a5a9af,#a2a6ad,#9ea3a9,#a0a4ab,#a6aab0,#abafb5,#acb0b6,#a9adb3,#a4a8ae,#a3a7ad,#a6aab0,#aaadb4,#aaaeb4,#a5a9af,#9ba0a6,#8f949b,#898e95,#92979d,#a2a6ac,#adb0b6,#b2b6bc,#b6babf,#b8bbc1,#b6babf,#b2b5bb,#adb1b7,#acb0b6,#abaeb5,#a8acb2,#a3a7ad,#9a9ea5,#8d9299,#80858c,#6e737b,#565b64,#535861,#6e737b,#878b93,#94989f,#9b9fa6,#9ca0a7,#979ca2,#90949b,#8d9299,#93979e,#9b9fa6,#a3a7ad,#a9adb3,#adb1b7,#b1b5bb,#b4b7bd,#b6bac0,#b7bbc0,#b4b8be,#aeb1b7,#a5a9af,#9ea3a9,#9da1a8,#9ba0a6,#9a9fa5,#9ea2a8,#a5a9af,#acb0b6,#b1b5bb,#b6b9bf,#b8bcc1,#b5b9be,#abafb5,#9da1a7,#8e9299,#7c8088,#62676f,#4f545d,#585d65,#696d75,#70747c,#71767e,#72767e,#70757d,#6f737b,#6e737b,#6f747c,#72777f,#7d8189,#8c9198,#9a9ea5,#a3a7ad,#a7abb1,#a8acb2,#a6aab1,#a2a6ac,#9b9fa6,#969ba1)"></i>
<i style="background:linear-gradient(90deg,#a9adb3,#a4a8ae,#a2a6ad,#a4a8ae,#a7abb1,#a7abb1,#a5a9af,#a1a5ab,#a2a6ac,#a7abb1,#acafb6,#adb1b7,#aaaeb4,#a6aab0,#a5a9af,#a8acb2,#abafb5,#abafb5,#a6aab0,#9da1a8,#91959c,#898d94,#90959c,#a0a4aa,#abafb5,#b1b5bb,#b6b9bf,#b8bcc1,#b7bbc0,#b3b7bc,#aeb2b8,#abafb5,#a8acb2,#a5a9af,#a0a4aa,#979ca2,#8d9198,#81868d,#71767e,#5c6169,#585d65,#6f737b,#868a91,#92979d,#999da4,#9a9ea5,#959aa0,#8e939a,#8b9097,#91959c,#999da4,#a0a5ab,#a7abb1,#acb0b6,#b0b4ba,#b3b7bc,#b6b9bf,#b7bac0,#b4b8bd,#adb1b7,#a4a8ae,#9ca1a7,#9a9ea5,#979ba2,#9599a0,#999da4,#a2a6ac,#aaaeb4,#b0b4ba,#b5b9bf,#b8bbc1,#b5b9bf,#acb0b6,#9da1a8,#8f939a,#7d8289,#636870,#4e535c,#575c64,#6a6f77,#747880,#777c83,#787c84,#757a81,#72767e,#70757d,#73787f,#787d84,#848990,#94989f,#a0a4aa,#a6aab1,#a9adb3,#a8acb3,#a6aab0,#9fa3aa,#989da3,#969aa1)"></i>
<i style="background:linear-gradient(90deg,#a9adb3,#a5a9b0,#a4a8ae,#a6aab0,#a8acb3,#a9adb3,#a6aab1,#a3a7ad,#a3a7ae,#a8acb2,#acb0b6,#adb1b7,#abafb5,#a7abb1,#a6aab0,#a9adb3,#acb0b6,#acb0b6,#a7abb1,#9ea2a9,#91969d,#888c93,#8d9299,#9da1a8,#a9adb3,#afb3b9,#b5b9be,#b8bcc2,#b8bcc1,#b4b7bd,#aeb2b8,#aaaeb4,#a6aab0,#a1a5ac,#9ca1a7,#969aa1,#8e9299,#848990,#767b82,#646971,#5f646c,#71767d,#858a91,#91959c,#989ca3,#999da4,#94989f,#8d9299,#8b8f96,#90949b,#989ca3,#9fa3a9,#a5a9af,#aaaeb4,#aeb2b8,#b1b5bb,#b4b8be,#b5b9bf,#b3b7bd,#adb0b6,#a3a7ad,#9b9fa6,#979ba2,#93979e,#90949b,#94989f,#9ea2a9,#a8acb2,#afb2b8,#b4b8be,#b7bbc1,#b5b9bf,#adb0b7,#9fa3a9,#91959c,#80848c,#666b73,#52575f,#5b6068,#6f747c,#7a7e86,#7f838b,#7f848b,#7c8088,#777c83,#757a82,#797d85,#7f848b,#8c9097,#9a9ea5,#a4a8ae,#a9adb3,#aaaeb4,#a9adb3,#a5a9af,#9da1a8,#969aa1,#9599a0)"></i>
<i style="background:linear-gradient(90deg,#a9adb4,#a6aab0,#a5a9af,#a7abb1,#aaadb4,#aaaeb4,#a7abb2,#a4a8ae,#a4a8af,#a8acb2,#acb0b6,#adb1b7,#abafb5,#a7abb1,#a7abb1,#aaaeb4,#adb1b7,#acb0b6,#a7abb2,#9fa3a9,#92969d,#868a92,#8a8e96,#9a9ea4,#a6aab1,#aeb1b7,#b4b8bd,#b8bcc1,#b8bcc2,#b4b8be,#aeb1b7,#a8acb2,#a3a7ad,#9ea2a9,#9a9ea5,#969aa1,#90959c,#888d94,#7c8188,#6d7279,#676c74,#757981,#868a92,#91959c,#979ba2,#989ca3,#94989f,#8d9299,#8b8f96,#90949b,#979ba2,#9ea2a8,#a3a7ae,#a8acb2,#acafb6,#afb3b9,#b2b6bc,#b4b7bd,#b2b6bc,#acb0b6,#a2a6ad,#9a9ea5,#9599a0,#8f939a,#8a8f96,#8e9299,#9a9ea5,#a5a9af,#acb0b6,#b3b6bc,#b7bac0,#b5b9bf,#adb1b7,#a0a4ab,#93979e,#83888f,#6b7078,#595e66,#636870,#767b82,#81868d,#868b92,#878c93,#83888f,#7e838a,#7c8188,#80858c,#878b93,#93979e,#9fa3aa,#a7abb2,#abafb5,#aaaeb4,#a8acb2,#a3a7ad,#9a9ea5,#93989e,#94999f)"></i>
<i style="background:linear-gradient(90deg,#a9adb3,#a5a9b0,#a5a9af,#a7abb2,#aaaeb4,#aaaeb5,#a8acb2,#a4a8af,#a4a8af,#a8acb2,#abafb5,#adb0b6,#aaaeb4,#a7abb1,#a7abb1,#aaaeb4,#adb1b7,#adb0b6,#a8acb2,#9fa3a9,#91969d,#84888f,#868a92,#969aa1,#a3a7ae,#abafb5,#b2b6bc,#b8bbc1,#b8bcc1,#b4b8bd,#adb1b7,#a6aab0,#a0a4aa,#9a9fa5,#989ca3,#969aa1,#93989e,#8d9198,#83878f,#767a82,#70747c,#797e86,#888c94,#92969d,#989ca3,#999da4,#9599a0,#8f939a,#8c9198,#91959c,#979ca2,#9da1a8,#a2a6ac,#a5a9b0,#a9adb3,#acb0b6,#afb3b9,#b1b5bb,#b1b4ba,#abafb5,#a2a6ad,#9a9ea4,#94989f,#8d9198,#868a91,#898d94,#959aa0,#a2a6ac,#aaaeb4,#b1b5bb,#b6b9bf,#b5b9bf,#aeb2b8,#a2a6ad,#969aa1,#878b92,#71757d,#61666e,#6b7078,#7e828a,#888d94,#8e9299,#8f939a,#8b8f96,#858a91,#83888f,#878c93,#8e939a,#999da4,#a3a7ae,#aaaeb4,#acb0b6,#aaaeb4,#a7abb2,#a1a5ac,#979ba2,#90959c,#93989f)"></i>
<i style="background:linear-gradient(90deg,#a8acb2,#a4a8af,#a4a8af,#a7abb1,#aaaeb4,#aaaeb4,#a8acb2,#a4a8ae,#a4a8ae,#a7abb1,#aaaeb4,#abafb5,#a9adb3,#a6aab0,#a6aab0,#aaaeb4,#adb1b7,#acb0b6,#a7abb2,#9fa3a9,#90959c,#81858d,#81868d,#92969d,#a0a5ab,#a9adb3,#b1b5bb,#b7bac0,#b8bbc1,#b4b7bd,#acb0b6,#a4a8af,#9da1a7,#979ca2,#969ba1,#989ca3,#979ba2,#92969d,#898e95,#7e828a,#787c84,#7f838b,#8b8f96,#94989f,#999da4,#9a9ea5,#969aa1,#91959c,#8f939a,#93979e,#999da4,#9da2a8,#a1a5ab,#a3a7ad,#a6aab0,#a9adb3,#acb0b6,#afb3b9,#afb3b9,#abafb5,#a3a7ad,#9a9ea5,#9499a0,#8c9098,#83878f,#848990,#91959c,#9fa3a9,#a8acb2,#afb3b9,#b5b9be,#b5b9bf,#afb3b9,#a4a8ae,#989da3,#8a8f96,#767b83,#6a6f77,#747980,#858991,#8f939a,#94989f,#9599a0,#91969d,#8c9198,#8a8f96,#8e9299,#9599a0,#9ea2a9,#a7abb1,#abafb5,#acb0b6,#a9adb4,#a6aab0,#9fa3a9,#94989f,#8d9299,#92969d)"></i>
<i style="background:linear-gradient(90deg,#a6aab0,#a3a7ad,#a3a7ad,#a6aab0,#a9acb3,#a9adb3,#a6aab1,#a3a7ad,#a2a6ad,#a5a9af,#a9acb3,#aaaeb4,#a7abb2,#a4a8ae,#a4a8af,#a9adb3,#acb0b6,#acb0b6,#a7abb1,#9ea2a9,#8f939a,#7e828a,#7d8189,#8e9299,#9ea2a8,#a7abb1,#afb3b9,#b6babf,#b7bbc1,#b3b7bc,#abafb5,#a2a6ad,#9a9ea5,#9599a0,#969aa1,#9a9ea4,#9a9fa5,#969aa1,#8f939a,#858990,#7f848b,#848990,#8f939a,#969ba2,#9ba0a6,#9ca0a7,#999da4,#94989f,#92969d,#969aa1,#9b9fa6,#9fa3a9,#a0a4ab,#a1a5ab,#a2a6ad,#a5a9b0,#a9adb3,#adb1b7,#aeb2b8,#abafb5,#a4a8ae,#9ca0a7,#969aa1,#8d9299,#82878e,#81858d,#8e9299,#9ca0a7,#a6a9b0,#aeb2b8,#b4b8be,#b5b9bf,#b0b4ba,#a6aab0,#9b9fa6,#8e9299,#7c8088,#72767e,#7c8088,#8b9097,#9599a0,#9a9ea4,#9a9ea5,#979ba2,#92969d,#90949b,#94989f,#9a9ea5,#a2a6ac,#a9adb3,#acb0b6,#abafb5,#a8acb2,#a4a8ae,#9ca0a7,#90959c,#8a8f96,#91959c)"></i>
<i style="background:linear-gradient(90deg,#a4a8ae,#a0a4ab,#a0a4ab,#a3a7ae,#a7abb1,#a7abb1,#a4a8af,#a1a5ab,#a0a4ab,#a3a7ad,#a6aab1,#a8abb2,#a5a9b0,#a1a5ac,#a2a6ad,#a7abb1,#abafb5,#abafb5,#a6aab0,#9da1a7,#8d9199,#7a7f86,#787d84,#8a8f96,#9b9fa6,#a5a9af,#aeb2b8,#b5b9be,#b6bac0,#b2b6bc,#a9adb3,#a0a4ab,#989ca3,#94989f,#979ba2,#9ca0a7,#9ea2a9,#9a9ea5,#94989f,#8b8f96,#858a91,#8a8e95,#93979e,#9a9ea5,#9ea2a9,#9fa3aa,#9ca0a7,#979ba2,#959aa1,#999da4,#9ea2a8,#a0a4ab,#a0a4ab,#9fa3aa,#9fa3aa,#a2a6ad,#a6aab1,#aaaeb5,#adb0b7,#abafb5,#a5a9b0,#9ea3a9,#999da4,#90949b,#83888f,#80848b,#8b8f96,#999da4,#a4a8ae,#acb0b6,#b3b7bd,#b5b9bf,#b1b4ba,#a7abb1,#9da1a8,#90959c,#80858c,#787d85,#82878e,#91959c,#999da4,#9ea2a8,#9ea3a9,#9b9fa6,#979ba2,#9599a0,#989da3,#9ea2a9,#a5a9af,#aaaeb4,#acb0b6,#aaaeb4,#a6aab0,#a1a6ac,#999da4,#8c9198,#878b92,#8e939a)"></i>
<i style="background:linear-gradient(90deg,#a1a5ac,#9da1a8,#9da1a8,#a1a5ab,#a4a8af,#a5a9af,#a2a6ac,#9ea2a8,#9da1a8,#a0a4ab,#a4a8ae,#a5a9af,#a2a7ad,#9ea3a9,#9fa4aa,#a5a9af,#a9adb4,#aaaeb4,#a5a9af,#9b9fa6,#8b8f96,#767b83,#747980,#878c93,#999da4,#a3a7ae,#adb1b7,#b4b8bd,#b6b9bf,#b1b5bb,#a8acb2,#9fa3a9,#969aa1,#93979e,#989ca2,#9ea2a9,#a1a5ab,#9ea2a9,#989ca3,#90949b,#8b8f96,#8f939a,#979ba2,#9da1a8,#a1a5ac,#a2a6ac,#9fa3aa,#9b9fa6,#999da4,#9ca0a7,#a1a5ab,#a2a6ad,#a1a5ab,#9ea2a8,#9ca1a7,#9fa3a9,#a3a7ae,#a8acb2,#acb0b6,#abafb5,#a7abb1,#a1a5ac,#9ca0a7,#93989e,#868b92,#80848c,#898d94,#979ba2,#a2a6ac,#abafb5,#b3b7bc,#b5b9bf,#b1b5bb,#a8acb3,#9fa3a9,#93979e,#848990,#7e828a,#888c93,#9599a0,#9da1a8,#a1a5ac,#a2a6ac,#9fa3aa,#9b9fa6,#999da4,#9ca0a7,#a1a5ac,#a7abb1,#abafb5,#acb0b6,#a8acb2,#a3a7ae,#9ea3a9,#9599a0,#888c94,#83878e,#8c9097)"></i>
<i style="background:linear-gradient(90deg,#9ea2a9,#9a9ea5,#9a9ea5,#9ea2a8,#a1a5ac,#a2a6ac,#9fa3a9,#9a9ea5,#999ea4,#9da1a8,#a1a5ab,#a2a6ad,#9fa4aa,#9b9fa6,#9ca1a7,#a3a7ad,#a8acb2,#a8acb2,#a3a7ae,#999da4,#888d94,#72777f,#70747c,#848990,#979ba2,#a2a6ac,#acb0b6,#b3b7bd,#b5b8be,#b0b4ba,#a7abb1,#9da1a8,#94989f,#92969d,#999da4,#a0a5ab,#a4a8ae,#a1a5ac,#9ba0a6,#94989f,#90949b,#93979e,#9a9ea5,#a0a4ab,#a4a8af,#a5a9af,#a2a6ac,#9ea2a9,#9da1a7,#a0a4aa,#a4a8ae,#a5a9af,#a2a6ac,#9da1a7,#999ea4,#9ba0a6,#a0a4ab,#a6aab0,#abafb5,#acb0b6,#a9adb3,#a4a8af,#9fa3aa,#979ba2,#898e95,#81858c,#878c93,#959aa0,#a0a4ab,#aaaeb4,#b2b6bc,#b5b9bf,#b2b6bc,#aaaeb4,#a0a4ab,#9599a0,#888c93,#83878e,#8c9198,#999da4,#a0a4ab,#a4a8af,#a5a9af,#a2a6ac,#9ea2a9,#9da1a7,#a0a4aa,#a4a8af,#a9adb3,#acb0b6,#abafb5,#a6aab0,#a0a4ab,#9b9fa6,#91959c,#83888f,#7e838a,#898d95)"></i>
<i style="background:linear-gradient(90deg,#9b9fa6,#969ba1,#969ba1,#9a9fa5,#9ea2a9,#9fa3aa,#9ca0a6,#979ba2,#969aa1,#999ea4,#9ea2a8,#9fa3aa,#9ca0a7,#989ca3,#999da4,#a0a4ab,#a6aab0,#a7abb1,#a1a5ac,#979ba2,#858a91,#6d727a,#6a6f77,#81868d,#9599a0,#a0a4ab,#aaaeb4,#b2b6bc,#b4b7bd,#afb3b9,#a5a9b0,#9ba0a6,#93979e,#92969d,#9a9ea5,#a3a7ad,#a7abb1,#a4a8af,#9fa3aa,#989da3,#9599a0,#979ca2,#9ea2a9,#a3a8ae,#a7abb1,#a8acb2,#a5a9af,#a2a6ac,#a0a4ab,#a3a7ad,#a7abb1,#a7abb1,#a2a6ad,#9b9fa6,#969aa1,#989ca3,#9da1a8,#a4a8ae,#aaaeb4,#adb0b6,#abafb5,#a7abb1,#a3a7ad,#9a9fa5,#8d9198,#82868e,#868b92,#93989e,#9fa3a9,#a9adb3,#b2b5bb,#b5b9bf,#b2b6bc,#aaaeb5,#a2a6ac,#979ba2,#8b8f96,#878b92,#90949b,#9ca0a7,#a3a7ae,#a7abb1,#a7abb2,#a5a9af,#a1a5ac,#a0a4aa,#a2a6ad,#a7abb1,#abafb5,#acb0b6,#aaaeb4,#a4a8ae,#9da1a8,#979ba2,#8c9198,#7e828a,#7a7e86,#868b92)"></i>
<i style="background:linear-gradient(90deg,#989ca3,#93989e,#93989f,#989ca3,#9ca0a7,#9da1a7,#999da4,#94989f,#93979e,#969aa1,#9a9fa5,#9ca0a7,#999da4,#9599a0,#969ba1,#9ea2a8,#a4a8ae,#a5a9af,#9fa3aa,#94999f,#81868d,#686c74,#646971,#7d8189,#92969d,#9ea2a8,#a8acb3,#b0b4ba,#b2b6bc,#aeb1b7,#a4a8af,#9a9ea5,#92969d,#93979e,#9ca0a7,#a6aab0,#aaadb4,#a7abb2,#a3a7ad,#9da1a8,#999ea4,#9ca0a7,#a2a6ac,#a7abb1,#aaaeb4,#aaaeb5,#a8acb2,#a5a9af,#a4a8ae,#a6aab0,#a9adb4,#a9adb3,#a3a7ad,#999ea4,#92969d,#93979e,#999da4,#a1a5ac,#a9adb3,#adb1b7,#adb1b7,#aaaeb4,#a6aab0,#9ea2a9,#90959c,#84888f,#858a91,#91969c,#9da1a7,#a7abb1,#b0b4ba,#b4b8be,#b2b6bc,#abafb5,#a2a6ad,#989ca3,#8d9198,#8a8e95,#93989e,#9fa3a9,#a5a9b0,#a9adb3,#a9adb4,#a7abb1,#a3a7ae,#a2a6ac,#a4a8af,#a8acb3,#acb0b6,#acb0b6,#a8acb2,#a1a5ab,#999da4,#92979e,#878c93,#797d85,#767b83,#858990)"></i>
<i style="background:linear-gradient(90deg,#969ba1,#91969d,#91969d,#969aa1,#9a9fa5,#9b9fa6,#979ca2,#92969d,#90949b,#93979e,#979ca2,#999da4,#979ba2,#92969d,#94989f,#9ba0a6,#a1a5ac,#a2a6ac,#9ca0a7,#91959c,#7d8289,#61666e,#5d616a,#777c84,#8e9299,#9b9fa6,#a6aab0,#aeb2b8,#b1b4ba,#acb0b6,#a3a7ae,#9a9ea4,#92969d,#9499a0,#9fa3aa,#a9adb3,#adb0b6,#abafb5,#a6aab1,#a1a5ac,#9ea3a9,#a1a5ab,#a6aab0,#aaaeb4,#adb1b7,#adb1b7,#abafb5,#a9adb3,#a8acb2,#aaaeb4,#acb0b6,#abafb5,#a3a7ae,#979ca2,#8d9198,#8d9198,#94989f,#9ea2a8,#a8acb2,#aeb2b8,#afb3b9,#adb1b7,#a9adb3,#a2a6ad,#94999f,#868b92,#858990,#8f939a,#9a9ea5,#a5a9af,#afb2b8,#b3b7bc,#b1b5bb,#aaaeb4,#a2a6ad,#999da4,#8e939a,#8c9198,#969aa1,#a1a5ab,#a7abb1,#abafb5,#abafb5,#a9adb3,#a5a9af,#a3a7ae,#a6aab0,#a9adb4,#acb0b6,#abafb5,#a6aab0,#9ca1a7,#93989e,#8d9198,#81868d,#747980,#757981,#848990)"></i>
<i style="background:linear-gradient(90deg,#969aa1,#91959c,#91959c,#959aa0,#9a9ea5,#9b9fa6,#979ba2,#91959c,#8f939a,#91959c,#9599a0,#979ba2,#9499a0,#91959c,#93979e,#999ea4,#9ea2a9,#9ea2a9,#989ca3,#8d9198,#787d84,#5a5f67,#545962,#71767e,#898e95,#979ba2,#a3a7ad,#acb0b6,#afb2b8,#abaeb5,#a2a6ad,#999ea4,#93989e,#979ca2,#a2a6ad,#acb0b6,#afb3b9,#aeb2b8,#aaaeb4,#a5a9b0,#a3a7ae,#a5a9b0,#aaaeb4,#adb1b7,#b0b3b9,#b0b4ba,#aeb2b8,#acb0b6,#abafb5,#adb1b7,#afb3b9,#adb1b7,#a4a8ae,#9599a0,#878c93,#868a92,#8e9299,#9a9ea5,#a7abb1,#afb2b8,#b1b5bb,#b0b4ba,#adb0b6,#a6aab0,#999da4,#8a8e95,#858a91,#8d9299,#979ca2,#a2a6ac,#acb0b6,#b1b4ba,#afb3b9,#a9adb3,#a2a6ac,#999da4,#8f949b,#8e9299,#979ba2,#a2a6ac,#a8acb2,#acb0b6,#acb0b6,#aaaeb4,#a6aab0,#a4a8ae,#a6aab0,#aaaeb4,#acb0b6,#aaaeb4,#a3a7ad,#979ca2,#8d9198,#868a92,#7b8087,#71767d,#757a82,#868a92)"></i>
<i style="background:linear-gradient(90deg,#969ba1,#92969d,#92969d,#969aa1,#9a9fa5,#9b9fa6,#979ca2,#92969d,#8e9299,#8f939a,#92969d,#9499a0,#93989e,#90959c,#92979e,#989ca3,#9ba0a6,#9a9ea5,#94989f,#898d94,#747880,#545961,#4c515a,#6b6f77,#848990,#93979e,#9fa3aa,#a9adb3,#acb0b6,#a9adb3,#a1a5ac,#9a9ea5,#969aa1,#9b9fa6,#a6aab0,#afb3b9,#b2b6bc,#b0b4ba,#adb1b7,#a9adb3,#a7abb2,#a9adb4,#adb1b7,#b0b4ba,#b2b6bc,#b2b6bc,#b1b5bb,#afb3b9,#afb2b8,#b0b4ba,#b1b5bb,#aeb2b8,#a4a8ae,#92969d,#80858c,#7e828a,#878c93,#969aa1,#a5a9b0,#afb3b9,#b3b7bd,#b2b6bc,#afb3b9,#a9adb3,#9da1a7,#8e9299,#878b92,#8c9097,#9599a0,#9ea3a9,#a8acb2,#adb1b7,#adb0b6,#a7abb1,#a0a4ab,#989ca3,#8f949b,#8f939a,#989ca3,#a2a6ad,#a9adb3,#acb0b6,#adb1b7,#aaaeb4,#a6aab0,#a4a8ae,#a6aab0,#a9adb3,#abafb5,#a8acb2,#9fa3aa,#92969d,#868a91,#7f838b,#767a82,#70757d,#797e85,#898d95)"></i>
<i style="background:linear-gradient(90deg,#989ca3,#93989f,#93989f,#989ca3,#9ca0a7,#9da1a8,#999da4,#93989e,#8f939a,#8e9299,#90959c,#93979e,#93979e,#92969d,#93989f,#979ba2,#999da3,#969aa1,#8f939a,#848990,#70757c,#50555e,#474c55,#656971,#7f848b,#8e939a,#9ba0a6,#a5a9b0,#a9adb3,#a7abb1,#a1a5ab,#9b9fa6,#999da4,#9fa3aa,#aaadb4,#b1b5bb,#b4b8be,#b3b6bc,#afb3b9,#acb0b6,#abafb5,#adb1b7,#b0b4ba,#b2b6bc,#b4b7bd,#b4b8bd,#b3b7bd,#b2b5bb,#b1b5bb,#b2b6bc,#b3b7bd,#afb3b9,#a3a7ae,#8f939a,#7a7e86,#767a82,#81858c,#92979d,#a4a8af,#b0b4ba,#b5b8be,#b4b8be,#b2b5bb,#acb0b6,#a0a4ab,#92969d,#898d95,#8b8f97,#92969d,#9a9fa5,#a4a8ae,#a9adb3,#a9adb3,#a4a8af,#9ea2a9,#979ba2,#8f949b,#8f939a,#979ca2,#a2a6ac,#a9adb3,#adb0b6,#adb1b7,#aaaeb4,#a5a9b0,#a3a7ad,#a4a8af,#a8acb2,#a9adb3,#a5a9af,#9b9fa5,#8b8f97,#7e838a,#787c84,#72777e,#73787f,#7f838b,#8d9299)"></i>
<i style="background:linear-gradient(90deg,#9b9fa5,#969aa1,#969aa1,#9a9ea5,#9ea2a9,#9fa3aa,#9ba0a6,#969aa1,#90959b,#8d9299,#8f939a,#92969d,#94989f,#94989f,#969aa1,#979ba2,#969aa1,#91969d,#8a8e95,#81858c,#6e737b,#51565f,#464b54,#60656d,#7a7f86,#8a8f96,#989ca3,#a2a6ac,#a6aab0,#a5a9af,#a0a4ab,#9da1a7,#9ca0a7,#a3a7ae,#adb1b7,#b4b7bd,#b6babf,#b4b8be,#b1b5bb,#afb2b8,#aeb2b8,#b0b4ba,#b2b6bc,#b4b8be,#b5b9be,#b5b9be,#b4b8be,#b4b7bd,#b3b7bd,#b4b8bd,#b4b8be,#b0b4ba,#a3a7ad,#8c9098,#737880,#6f737b,#7b8087,#8f949a,#a4a8ae,#b0b4ba,#b6b9bf,#b6b9bf,#b3b7bd,#aeb2b8,#a4a8ae,#969aa1,#8c9198,#8b9097,#90949b,#969aa1,#9ea2a9,#a4a8ae,#a4a8af,#a1a5ac,#9ca0a7,#969aa1,#8f939a,#8e939a,#979ba2,#a1a5ab,#a8acb2,#acb0b6,#adb1b7,#aaadb4,#a4a8af,#a1a5ab,#a2a7ad,#a6aab1,#a7abb1,#a2a6ad,#969aa1,#858990,#777c83,#72777f,#71757d,#787d84,#868a91,#92979e)"></i>
<i style="background:linear-gradient(90deg,#9da1a8,#999da4,#999da4,#9da1a8,#a1a5ab,#a1a6ac,#9ea2a9,#999da4,#92979d,#8e9299,#8e939a,#92969d,#9599a0,#979ba2,#989da3,#989ca3,#94999f,#8d9299,#868a91,#7e838a,#6f747c,#565b64,#4b5059,#5f646c,#777c83,#878b93,#94989f,#9ea2a9,#a3a7ad,#a3a7ad,#a0a4ab,#9ea2a9,#a0a4aa,#a7abb1,#b0b3b9,#b5b9bf,#b7bbc0,#b5b9bf,#b2b6bc,#b0b4ba,#b0b4ba,#b2b5bb,#b4b8bd,#b5b9be,#b5b9bf,#b5b9bf,#b5b9bf,#b5b9be,#b5b8be,#b5b9be,#b5b9be,#b0b3b9,#a2a6ac,#898e95,#6e737b,#6a6f76,#777c84,#8d9299,#a3a7ad,#b1b4ba,#b6bac0,#b7bac0,#b4b8be,#afb3b9,#a6aab0,#9a9ea5,#90949b,#8c9198,#8e9299,#92969d,#989ca3,#9da1a8,#9fa3a9,#9da1a8,#999ea4,#9499a0,#8f939a,#8e9299,#9599a0,#9fa3aa,#a7aab1,#abafb5,#acb0b6,#a9adb3,#a3a7ad,#9ea3a9,#a0a4ab,#a4a8af,#a5a9af,#9fa3a9,#91969d,#7f838b,#72767e,#6f747c,#73787f,#7f848b,#8d9299,#989ca3)"></i>
<i style="background:linear-gradient(90deg,#a0a4ab,#9ca0a7,#9ca0a7,#a0a4aa,#a3a7ae,#a4a8ae,#a1a5ab,#9ca0a6,#94999f,#8e939a,#8e9299,#92979d,#979ba2,#9a9ea5,#9ca0a6,#9a9ea5,#93989f,#8a8f96,#83878e,#7e828a,#73777f,#5f646c,#545962,#61666e,#767a82,#858991,#91969d,#9b9fa5,#9fa4aa,#a0a4ab,#a0a4aa,#a0a4aa,#a3a7ad,#aaaeb4,#b2b6bc,#b7bac0,#b7bbc1,#b5b9bf,#b3b6bc,#b1b5bb,#b1b5bb,#b3b7bc,#b5b8be,#b5b9bf,#b5b9bf,#b5b9bf,#b5b9bf,#b5b9bf,#b5b9bf,#b5b9bf,#b5b8be,#afb3b9,#a0a4ab,#878c93,#6c7179,#696d75,#777b83,#8d9198,#a3a7ad,#b1b4ba,#b7bac0,#b7bac0,#b4b8be,#b0b4ba,#a8acb2,#9da2a8,#94989f,#8f939a,#8d9299,#8e9299,#91969d,#969aa1,#999da4,#999da4,#979ba2,#93989e,#8e939a,#8d9198,#93989e,#9da1a8,#a5a9af,#aaaeb4,#abafb5,#a7abb2,#a1a5ab,#9ca0a7,#9da1a8,#a2a6ac,#a2a6ac,#9ba0a6,#8d9299,#7b7f87,#70747c,#70757c,#787d84,#878b93,#9599a0,#9da1a8)"></i>
<i style="background:linear-gradient(90deg,#a3a7ad,#9fa3aa,#9fa3aa,#a2a6ad,#a6aab0,#a6aab1,#a3a7ae,#9ea2a9,#969ba1,#8f939a,#8e9299,#93979e,#999da4,#9da2a8,#9fa3aa,#9ca0a7,#94989f,#898d94,#81868d,#7f848b,#787d84,#6a6f77,#60656d,#676b74,#777b83,#858990,#90949b,#989ca3,#9ca0a7,#9ea2a9,#9fa4aa,#a2a6ac,#a6aab0,#adb1b7,#b4b8bd,#b7bbc0,#b7bbc0,#b5b8be,#b2b6bc,#b1b5ba,#b1b5bb,#b3b7bd,#b5b9be,#b5b9be,#b4b8be,#b4b8be,#b5b8be,#b5b9bf,#b5b9bf,#b5b9be,#b4b8bd,#adb1b7,#9ea2a9,#868a92,#6d727a,#6c7078,#797d85,#8e9299,#a3a7ae,#b0b4ba,#b6babf,#b6bac0,#b4b8bd,#b0b4ba,#a9adb3,#a0a5ab,#989ca3,#91969d,#8e9299,#8b8f96,#8b8f96,#8e9299,#92969d,#9599a0,#9599a0,#93979e,#8e939a,#8c9198,#91959c,#9a9ea5,#a3a7ad,#a9adb3,#aaaeb4,#a6aab0,#9fa3a9,#999da4,#9a9ea5,#9fa3aa,#9fa3aa,#999da3,#8b8f96,#797e85,#71757d,#747980,#7f848b,#8f939a,#9b9fa6,#a1a6ac)"></i>
<i style="background:linear-gradient(90deg,#a5a9af,#a1a5ac,#a1a5ac,#a5a9af,#a8acb2,#a8acb2,#a6aab0,#a1a5ab,#989ca3,#90949b,#8e9299,#94989f,#9b9fa6,#a1a5ab,#a2a6ad,#9ea2a9,#9599a0,#888d94,#82878e,#83878f,#7f838b,#757a81,#6c7179,#6e737b,#7a7f86,#868b92,#90949b,#969aa1,#9a9ea4,#9ca0a7,#9fa3aa,#a3a7ad,#a8acb2,#b0b3b9,#b5b9be,#b7bbc0,#b6babf,#b4b7bd,#b1b5bb,#b0b4ba,#b1b5bb,#b3b7bc,#b4b8be,#b4b7bd,#b3b6bc,#b2b6bc,#b3b7bd,#b4b8be,#b5b8be,#b4b8bd,#b2b6bc,#abafb5,#9ca0a7,#858a91,#71767e,#72767e,#7e828a,#91959c,#a4a8ae,#b0b4ba,#b5b9bf,#b5b9bf,#b3b6bc,#afb3b9,#aaaeb4,#a3a7ad,#9ca0a6,#9599a0,#8f939a,#888d94,#848990,#868a91,#8c9097,#91959c,#93979e,#93979e,#8f939a,#8c9097,#8f939a,#989ca2,#a0a4ab,#a7abb1,#a9adb3,#a5a9af,#9da1a7,#969ba1,#989ca3,#9ca1a7,#9da1a8,#969ba1,#898e95,#7a7f86,#757a82,#7a7f86,#878b92,#969ba1,#a1a5ac,#a5a9b0)"></i>
<i style="background:linear-gradient(90deg,#a6aab1,#a3a7ad,#a3a7ad,#a6aab0,#a9adb3,#aaaeb4,#a7abb1,#a2a6ad,#999ea4,#90949b,#8e9299,#9599a0,#9da1a8,#a3a7ae,#a5a9af,#a1a5ab,#969ba1,#8a8e95,#858990,#878c93,#868b92,#7f848b,#787c84,#777c83,#7f838b,#898e95,#91959c,#9599a0,#979ca2,#9a9ea5,#9fa3a9,#a4a8ae,#aaaeb4,#b1b5bb,#b6b9bf,#b7bac0,#b5b8be,#b2b5bb,#afb3b9,#aeb2b8,#b0b3b9,#b2b6bb,#b3b7bc,#b2b6bc,#b0b4ba,#b0b4ba,#b1b5bb,#b3b6bc,#b3b7bd,#b2b6bc,#b0b4ba,#a9adb3,#9a9ea5,#858a91,#777b83,#797e86,#848890,#94989f,#a5a9af,#b0b3b9,#b4b8bd,#b3b7bd,#b1b4ba,#adb1b7,#aaaeb4,#a5a9af,#9fa3aa,#989ca3,#91959c,#878c93,#7f838b,#7e838a,#868a92,#8e9299,#92969d,#93989e,#90949b,#8c9097,#8d9198,#9599a0,#9ea2a9,#a6aab0,#a7abb2,#a3a7ae,#9b9fa6,#94989f,#959aa0,#9b9fa5,#9b9fa6,#9599a0,#898e95,#7e828a,#7c8088,#82868e,#8e939a,#9da1a8,#a6aab0,#a9adb3)"></i>
<i style="background:linear-gradient(90deg,#a7abb1,#a4a8ae,#a4a8ae,#a7abb1,#aaaeb4,#aaaeb4,#a8acb2,#a3a7ad,#9a9ea5,#90949b,#8e9299,#9599a0,#9ea3a9,#a5a9b0,#a7abb2,#a3a7ad,#999da3,#8c9198,#888d94,#8d9198,#8d9198,#888c94,#81868d,#7f848b,#858990,#8d9299,#93979e,#9599a0,#969aa1,#999da4,#9ea2a9,#a5a9af,#acafb6,#b2b6bc,#b6babf,#b6b9bf,#b3b6bc,#afb3b9,#acb0b6,#acb0b6,#aeb2b8,#b0b4ba,#b1b5bb,#b0b3b9,#adb1b7,#adb1b7,#afb2b8,#b1b4ba,#b1b5bb,#b0b4ba,#adb1b7,#a6aab0,#979ca2,#868b92,#7d8289,#82868d,#8a8f96,#989ca3,#a6aab0,#afb3b9,#b2b6bc,#b1b5bb,#aeb2b8,#abafb5,#a9adb3,#a6aab1,#a2a6ad,#9ca0a6,#93979e,#878c93,#7b8087,#787d85,#82868e,#8d9198,#92979e,#9599a0,#92969d,#8c9198,#8c9097,#93979e,#9ca1a7,#a4a8af,#a7abb1,#a3a7ad,#9a9ea5,#93979e,#94989f,#999ea4,#9a9ea5,#9599a0,#8b9097,#83878f,#83878f,#898e95,#959aa0,#a2a6ad,#aaaeb4,#abafb5)"></i>
<i style="background:linear-gradient(90deg,#a7abb1,#a4a8ae,#a4a8ae,#a7abb1,#aaaeb4,#aaaeb4,#a8acb2,#a3a7ad,#999ea4,#8f939a,#8d9198,#9599a0,#9fa3aa,#a7abb1,#a9adb3,#a5a9af,#9b9fa6,#90949b,#8d9198,#92969d,#93979e,#90949b,#8a8e95,#878b92,#8a8f96,#92969d,#969aa1,#969aa1,#9599a0,#979ba2,#9da1a8,#a5a9af,#acb0b6,#b3b6bc,#b6b9bf,#b4b8be,#b0b4ba,#acb0b6,#a9adb3,#a9adb3,#abafb5,#aeb2b8,#afb2b8,#adb1b7,#aaaeb4,#aaaeb4,#acafb6,#aeb2b8,#afb3b9,#adb1b7,#aaaeb4,#a2a6ad,#9599a0,#888c93,#84888f,#898e95,#91959c,#9ca0a7,#a7abb1,#aeb2b8,#b0b4ba,#aeb2b8,#abafb5,#a9adb3,#a8acb2,#a7abb2,#a5a9af,#9fa3a9,#959aa1,#898d94,#7a7e86,#757a81,#80858c,#8d9198,#94989f,#979ba2,#94989f,#8e9299,#8b9097,#91959c,#9b9fa6,#a4a8ae,#a6aab0,#a2a7ad,#9a9ea5,#93979e,#94989f,#999ea4,#9a9fa5,#969aa1,#8e939a,#888d94,#8a8e95,#90959c,#9b9fa6,#a7abb1,#adb1b7,#adb1b7)"></i>
<i style="background:linear-gradient(90deg,#a6aab1,#a3a7ae,#a3a7ae,#a6aab0,#a9adb3,#aaaeb4,#a7abb1,#a2a6ad,#989ca3,#8d9198,#8b9097,#9599a0,#9fa4aa,#a7abb1,#aaaeb4,#a6aab1,#9da1a8,#93989f,#92969d,#979ba2,#989da3,#969aa1,#91959c,#8d9299,#90949b,#969aa1,#999da4,#979ba2,#9599a0,#969aa1,#9ca0a7,#a4a8af,#acb0b6,#b3b6bc,#b5b8be,#b2b6bc,#adb1b7,#a9adb3,#a6aab0,#a6aab0,#a8acb3,#abafb5,#acb0b6,#aaaeb4,#a7aab1,#a6aab0,#a8acb2,#abafb5,#acb0b6,#aaaeb4,#a6aab1,#9ea3a9,#93979e,#8a8e95,#898e95,#90949b,#969ba1,#9fa3aa,#a8acb3,#aeb1b7,#aeb2b8,#abafb5,#a8acb2,#a6aab0,#a7abb1,#a8acb2,#a6aab1,#a1a5ac,#989ca3,#8b8f96,#7a7f87,#757a81,#81858d,#8f939a,#969aa1,#999ea4,#969ba1,#90949b,#8c9097,#91959c,#9b9fa6,#a3a7ae,#a6aab1,#a3a7ad,#9b9fa6,#94989f,#9599a0,#9a9fa5,#9ca0a7,#989ca3,#92969d,#8e9299,#90949b,#969aa1,#a0a4ab,#aaaeb4,#afb3b9,#aeb2b8)"></i>
<i style="background:linear-gradient(90deg,#a5a9af,#a1a5ac,#a1a5ac,#a5a9af,#a8acb2,#a8acb2,#a6aab0,#a0a4ab,#969aa1,#8a8f96,#898e95,#93989f,#9fa3aa,#a7abb1,#aaaeb4,#a7abb2,#9fa3aa,#979ba2,#969aa1,#9b9fa6,#9da1a8,#9b9fa5,#969aa1,#93979e,#9599a0,#9a9ea5,#9ca0a7,#999da4,#9599a0,#9499a0,#9b9fa6,#a4a8ae,#acb0b6,#b2b6bc,#b4b7bd,#b1b4ba,#abafb5,#a6aab0,#a2a6ad,#a2a6ad,#a5a9b0,#a8acb3,#a9adb3,#a6aab1,#a3a7ad,#a2a6ad,#a5a9af,#a8acb2,#a9adb3,#a7abb1,#a3a7ad,#9b9fa6,#91959c,#8b9097,#8e939a,#9599a0,#9b9fa6,#a2a6ad,#a9adb4,#adb1b7,#acb0b6,#a8acb3,#a4a8af,#a3a7ad,#a5a9af,#a8acb2,#a8acb2,#a3a7ae,#9a9ea5,#8d9198,#7d8189,#787c84,#84888f,#91969d,#999da4,#9ca0a7,#999ea4,#92979d,#8d9299,#91969c,#9b9fa6,#a4a8ae,#a7abb1,#a4a8ae,#9da1a7,#969ba1,#989ca3,#9da1a7,#9ea2a9,#9b9fa6,#969aa1,#93979e,#959aa0,#9b9fa6,#a4a8ae,#acb0b6,#b0b4ba,#aeb2b8)"></i>
<i style="background:linear-gradient(90deg,#a2a7ad,#9fa3a9,#9fa3a9,#a2a6ad,#a5a9b0,#a6aab0,#a3a7ae,#9ea2a8,#93979e,#878b92,#868b92,#92969d,#9ea2a8,#a6aab1,#aaaeb4,#a8acb2,#a1a5ac,#9a9ea5,#9a9ea5,#9ea3a9,#a1a5ab,#9fa3a9,#9a9ea5,#979ba2,#999da4,#9ea2a8,#9fa3aa,#9b9fa6,#9599a0,#93989e,#999da4,#a3a7ad,#abafb5,#b1b5bb,#b2b6bc,#afb2b8,#a8acb2,#a3a7ad,#9fa3aa,#9fa3aa,#a2a6ad,#a6aab0,#a6aab0,#a3a7ae,#9fa3aa,#9fa3a9,#a2a6ac,#a5a9af,#a6aab1,#a4a8ae,#9fa3aa,#989ca3,#8f949b,#8d9299,#92979e,#999ea4,#9fa3a9,#a5a9af,#aaaeb4,#acb0b6,#aaaeb4,#a6aab0,#a1a5ac,#a0a4aa,#a3a7ae,#a8acb2,#a9adb3,#a5a9af,#9ca0a7,#8f949b,#80858c,#7c8188,#888c93,#9599a0,#9ca0a7,#9fa3aa,#9ca1a7,#9599a0,#90949b,#93979e,#9ca0a7,#a5a9af,#a8acb2,#a6aab0,#9fa3aa,#999ea4,#9b9fa5,#9fa3aa,#a1a5ab,#9ea2a9,#9a9ea4,#979ba2,#9a9ea4,#9fa3a9,#a7abb1,#aeb2b8,#b1b5ba,#aeb2b8)"></i>
<i style="background:linear-gradient(90deg,#9fa4aa,#9ca0a6,#9ca0a6,#9fa3aa,#a3a7ad,#a3a7ae,#a0a4ab,#9a9ea5,#8f939a,#82878e,#82878e,#8f949b,#9ca0a7,#a5a9af,#a9adb3,#a8acb2,#a3a7ad,#9da1a8,#9da1a8,#a2a6ac,#a4a8ae,#a2a6ac,#9ea2a8,#9b9fa6,#9da1a7,#a1a5ab,#a2a6ac,#9da1a8,#969aa1,#92979d,#989ca2,#a1a5ac,#aaaeb4,#b0b4ba,#b1b5ba,#adb0b6,#a5a9b0,#9fa4aa,#9ca0a6,#9ca0a6,#9fa3aa,#a3a7ad,#a3a7ae,#a0a4ab,#9ca0a7,#9b9fa6,#9ea3a9,#a2a6ad,#a4a8ae,#a1a5ac,#9ca0a7,#9599a0,#8e939a,#8f939a,#969aa1,#9da1a8,#a2a6ac,#a7abb1,#abafb5,#acafb6,#a8acb2,#a3a7ad,#9ea2a9,#9da1a8,#a2a6ac,#a7abb2,#a9adb4,#a6aab0,#9ea2a9,#92969d,#848990,#81868d,#8c9198,#999da4,#9fa4aa,#a2a6ad,#9fa3aa,#989ca3,#92979e,#9599a0,#9ea2a9,#a6aab0,#a9adb4,#a7abb2,#a2a6ac,#9da1a7,#9ea2a9,#a2a6ad,#a3a8ae,#a1a5ac,#9da1a8,#9b9fa6,#9da1a8,#a2a6ad,#a9adb3,#afb3b9,#b1b5bb,#adb1b7)"></i>
<i style="background:linear-gradient(90deg,#9ca0a7,#989ca3,#989ca3,#9ca0a7,#a0a4aa,#a0a4ab,#9da1a8,#979ba2,#8a8e96,#7d8289,#7e838a,#8d9198,#9a9ea5,#a4a8ae,#a8acb3,#a8acb2,#a4a8af,#a0a4ab,#a1a5ab,#a5a9af,#a6aab1,#a5a9af,#a1a5ab,#9ea2a9,#a0a4aa,#a4a8ae,#a5a9af,#9fa3aa,#969aa1,#91959c,#969aa1,#9fa4aa,#a8acb3,#aeb2b8,#afb3b9,#aaaeb4,#a3a7ad,#9ca0a7,#989ca3,#989ca3,#9ca0a7,#a0a4aa,#a0a5ab,#9da1a8,#989da3,#989ca3,#9b9fa6,#9fa3aa,#a1a5ab,#9ea2a8,#989da3,#91969d,#8d9198,#90959c,#999da4,#a0a4ab,#a5a9af,#a9adb3,#acb0b6,#abafb5,#a6aab0,#a0a4aa,#9a9fa5,#9a9ea4,#a0a4aa,#a7abb1,#aaaeb4,#a7abb2,#9fa4aa,#94989f,#888c93,#868a91,#91959c,#9ca0a7,#a3a7ad,#a5a9b0,#a2a6ad,#9b9fa6,#9599a0,#979ba2,#a0a4aa,#a8abb2,#abafb5,#a9adb3,#a4a8ae,#a0a4aa,#a1a5ac,#a5a9af,#a6aab1,#a4a8ae,#a0a4ab,#9ea2a9,#a0a4ab,#a5a9af,#abafb5,#b0b4ba,#b1b5bb,#adb0b7)"></i>
<i style="background:linear-gradient(90deg,#999ea4,#9599a0,#9599a0,#999da3,#9ca1a7,#9da1a8,#999da4,#92969d,#858990,#777b83,#797e85,#8a8e95,#989ca3,#a2a6ac,#a7abb1,#a8acb2,#a6aab0,#a3a7ad,#a4a8ae,#a8acb2,#a9adb3,#a7abb2,#a4a8ae,#a1a5ac,#a2a6ad,#a6aab0,#a7aab1,#a0a4ab,#969aa1,#8f949b,#93979e,#9da1a8,#a7abb1,#adb1b7,#aeb1b7,#a8acb3,#a0a4ab,#999ea4,#9599a0,#9599a0,#999da4,#9da1a8,#9ea2a9,#9a9ea5,#9599a0,#94989f,#979ca2,#9ca0a6,#9da1a8,#9a9ea5,#94999f,#8e9299,#8c9097,#92969d,#9ba0a6,#a3a7ad,#a7abb1,#abafb5,#adb0b6,#aaaeb4,#a4a8ae,#9ca0a7,#969aa1,#969aa1,#9ea2a8,#a6aab1,#aaaeb4,#a8acb2,#a1a5ab,#969aa1,#8b9097,#8a8f96,#9599a0,#a0a4ab,#a6aab0,#a8acb2,#a5a9b0,#9ea2a9,#989ca3,#9a9ea4,#a1a5ac,#a9adb3,#acb0b6,#abafb5,#a6aab0,#a2a6ad,#a4a8ae,#a8abb2,#a9adb3,#a7abb1,#a3a7ad,#a1a5ac,#a3a7ad,#a7abb1,#adb0b6,#b1b5bb,#b1b5bb,#acb0b6)"></i>
<i style="background:linear-gradient(90deg,#979ba2,#92969d,#92969d,#969aa1,#999da4,#999ea4,#9599a0,#8d9198,#7e838a,#6f747c,#737880,#868a91,#9599a0,#9fa3aa,#a5a9b0,#a8acb2,#a7abb1,#a6aab0,#a7abb1,#abafb5,#acb0b6,#aaaeb4,#a6aab0,#a3a7ae,#a4a8ae,#a8acb2,#a8acb2,#a1a5ac,#959aa1,#8d9198,#90949b,#9b9fa5,#a4a8af,#abafb5,#acb0b6,#a7abb1,#9ea2a9,#979ba2,#92979d,#92979d,#979ba2,#9b9fa6,#9ca0a7,#989ca3,#93979e,#91959c,#94989f,#989ca2,#999da4,#969aa1,#90949b,#8a8f96,#8a8f96,#93979e,#9da2a8,#a5a9af,#a9adb3,#acb0b6,#adb1b7,#a9adb3,#a0a4ab,#979ca2,#91959c,#91959c,#9b9fa5,#a5a9af,#aaaeb4,#a9adb3,#a2a6ac,#989ca3,#8f939a,#8f949b,#9a9ea4,#a4a8ae,#a9adb3,#abafb5,#a8acb3,#a2a6ac,#9ca0a7,#9ca1a7,#a3a7ae,#aaaeb4,#adb1b7,#acb0b6,#a7abb2,#a4a8af,#a6aab0,#a9adb4,#abafb5,#a9adb3,#a5a9b0,#a3a7ae,#a5a9af,#a8acb3,#adb1b7,#b1b5bb,#b1b5bb,#abafb5)"></i>
<i style="background:linear-gradient(90deg,#969aa1,#91959c,#90949b,#93979e,#969aa1,#969aa1,#91959c,#878c93,#777b83,#676c74,#6d7179,#81868d,#91969d,#9ca0a7,#a3a7ad,#a7abb1,#a8acb2,#a8acb3,#abaeb5,#aeb2b8,#afb3b9,#acb0b6,#a8acb2,#a4a8af,#a5a9af,#a8acb3,#a8acb3,#a1a5ac,#94989f,#898e95,#8c9097,#979ba2,#a2a6ac,#a9adb3,#aaaeb4,#a6aab0,#9da1a8,#969aa1,#91959c,#91959c,#969aa1,#9a9ea5,#9b9fa6,#979ba2,#91969c,#8e939a,#90949b,#93979e,#94989f,#91959c,#8b9097,#878b92,#898d94,#93989e,#9fa3a9,#a6aab1,#aaaeb5,#adb1b7,#acb0b6,#a7abb1,#9ca0a7,#92969d,#8b8f96,#8c9097,#979ba2,#a3a7ad,#a9adb3,#a8acb3,#a2a6ad,#9a9ea5,#92979e,#94999f,#9ea2a9,#a7abb2,#acb0b6,#aeb2b8,#acb0b6,#a6aab0,#a0a4aa,#a0a4aa,#a5a9b0,#abafb5,#aeb1b7,#acb0b6,#a8acb2,#a5a9b0,#a7abb1,#abafb5,#acb0b6,#aaaeb5,#a7abb1,#a5a9af,#a6aab0,#a9adb3,#aeb2b8,#b1b5bb,#b1b5ba,#abafb5)"></i>
<i style="background:linear-gradient(90deg,#969aa1,#91959c,#8f949b,#92969d,#94989f,#92969d,#8c9097,#81868d,#6f737b,#5e626b,#666b73,#7c8188,#8d9198,#989ca3,#a0a4aa,#a5a9b0,#a9acb3,#abafb5,#aeb1b7,#b1b4ba,#b1b5bb,#aeb2b8,#a9adb3,#a5a9af,#a5a9af,#a8acb3,#a8acb2,#a0a5ab,#92979d,#868a91,#878b93,#93979e,#9ea3a9,#a7abb1,#a9adb3,#a5a9af,#9da1a8,#969aa1,#91959c,#91959c,#969aa1,#9a9ea5,#9b9fa6,#979ba2,#91959c,#8d9198,#8c9198,#8e9299,#8f939a,#8c9097,#878c93,#84888f,#888c93,#93989f,#9fa3aa,#a7abb1,#abafb5,#aeb2b8,#acb0b6,#a4a8af,#989ca3,#8b8f96,#848890,#858a91,#93979e,#a0a4ab,#a8acb2,#a8acb2,#a2a6ad,#9b9fa6,#969aa1,#999da4,#a2a6ad,#abafb5,#afb3b9,#b1b5bb,#afb3b9,#aaadb4,#a4a8ae,#a3a7ad,#a7abb1,#acb0b6,#aeb2b8,#acb0b6,#a8acb2,#a6aab0,#a8acb2,#acb0b6,#adb1b7,#acb0b6,#a8acb2,#a5a9b0,#a6aab0,#a9adb3,#adb1b7,#b1b5ba,#b0b4ba,#abafb5)"></i>
<i style="background:linear-gradient(90deg,#979ba2,#92969d,#90959c,#91969d,#92969d,#8f949b,#888c93,#7b8087,#676b73,#555a62,#60656d,#787d84,#898d94,#93979e,#9ca0a7,#a3a7ae,#a9adb3,#adb1b7,#b0b4ba,#b3b7bc,#b3b7bd,#b0b4ba,#aaaeb4,#a4a8af,#a4a8ae,#a8acb2,#a7abb2,#9fa3aa,#90949b,#81868d,#82868e,#8e939a,#9b9fa6,#a4a8af,#a8acb2,#a5a9af,#9ea2a8,#979ba2,#92979e,#92979e,#979ba2,#9b9fa6,#9ca0a7,#989ca3,#92969d,#8c9198,#898d95,#898d94,#898d94,#878c93,#84888f,#82868e,#878c93,#93989f,#9fa3aa,#a7abb1,#acafb6,#aeb2b8,#abafb5,#a2a6ac,#92979d,#84888f,#7d8189,#7f848b,#8e939a,#9da1a8,#a5a9b0,#a6aab1,#a2a6ad,#9ca1a7,#999ea4,#9da1a8,#a6aab0,#aeb1b7,#b2b5bb,#b4b7bd,#b2b6bc,#adb1b7,#a8acb2,#a6aab0,#a9adb3,#adb1b7,#adb1b7,#abafb5,#a7abb1,#a5a9b0,#a8acb2,#acb0b6,#aeb2b8,#adb1b7,#a9adb3,#a6aab0,#a5a9b0,#a8acb2,#acb0b6,#b0b4b9,#b0b4b9,#abafb5)"></i>
<i style="background:linear-gradient(90deg,#999ea4,#94999f,#92969d,#92979d,#91969d,#8d9299,#848990,#767b83,#60656d,#4f545c,#5c6169,#747981,#848990,#8e9299,#979ca2,#a1a5ab,#a9adb3,#aeb2b8,#b2b6bc,#b5b8be,#b5b9be,#b1b5bb,#aaaeb4,#a3a7ae,#a2a7ad,#a6aab0,#a6aab0,#9ea2a8,#8d9299,#7d8289,#7d8189,#8a8e96,#979ca2,#a2a6ad,#a7abb1,#a5a9b0,#9fa3aa,#999ea4,#9599a0,#9599a0,#999da4,#9da1a8,#9ea2a8,#9a9ea5,#94999f,#8d9198,#868b92,#83888f,#83888f,#83878f,#81868d,#81868d,#878c93,#93979e,#9fa3a9,#a6aab1,#abafb5,#adb1b7,#aaadb4,#9fa3a9,#8d9198,#7c8188,#767a82,#7a7e86,#8a8e95,#999ea4,#a3a7ad,#a5a9af,#a2a6ac,#9ea2a8,#9ca1a7,#a1a5ab,#a9adb3,#b0b4b9,#b4b7bd,#b5b9bf,#b4b8be,#b0b4ba,#abafb5,#a9adb3,#aaaeb4,#adb1b7,#acb0b6,#a9adb3,#a5a9af,#a4a8ae,#a7abb2,#acb0b6,#aeb2b8,#adb1b7,#a9adb3,#a5a9b0,#a4a8ae,#a6aab0,#aaaeb4,#aeb2b8,#afb3b9,#abafb5)"></i>
<i style="background:linear-gradient(90deg,#9ca0a7,#979ba2,#9599a0,#94989f,#92979d,#8d9198,#83878e,#73787f,#5c6169,#4d525a,#5b6069,#73787f,#81858d,#898d95,#93979e,#9ea2a9,#a8acb2,#afb3b9,#b3b7bd,#b6babf,#b6b9bf,#b1b5bb,#a9adb3,#a2a6ac,#a0a4ab,#a4a8ae,#a4a8af,#9ca0a6,#8b8f97,#7a7e86,#787d85,#868b92,#94999f,#a0a4ab,#a6aab1,#a6aab0,#a1a5ac,#9ca0a7,#989ca3,#989ca3,#9ca0a6,#9fa4aa,#a0a4ab,#9da1a8,#979ba2,#8e939a,#858990,#7f838b,#7e838a,#80858c,#81868d,#83878e,#888d94,#93979e,#9da2a8,#a5a9b0,#abaeb5,#acb0b6,#a8acb2,#9ca0a7,#888c93,#767b82,#71767d,#767a82,#868a91,#969aa1,#9fa3aa,#a2a6ad,#a1a5ab,#9fa3a9,#9fa3aa,#a4a8ae,#abafb5,#b1b5bb,#b5b8be,#b7bac0,#b6bac0,#b3b7bd,#aeb2b8,#abafb5,#abafb5,#acb0b6,#aaaeb4,#a6aab0,#a2a6ac,#a2a6ad,#a6aab1,#abafb5,#aeb2b8,#adb1b7,#a9adb3,#a4a8af,#a2a6ad,#a3a8ae,#a7abb2,#acb0b6,#aeb2b8,#abafb5)"></i>
<i style="background:linear-gradient(90deg,#9fa3a9,#9a9fa5,#989ca3,#979ba2,#94989f,#8e9299,#83878e,#72777f,#5c6169,#50555e,#5f646c,#747880,#7f848b,#858991,#8e939a,#9b9fa6,#a7abb1,#afb3b9,#b4b8bd,#b6bac0,#b6bac0,#b1b5bb,#a8acb2,#a0a4aa,#9ea2a8,#a2a6ac,#a2a6ac,#9a9ea5,#898e95,#787c84,#767b82,#83888f,#92969d,#9fa3aa,#a7abb1,#a7abb2,#a4a8ae,#9fa3a9,#9b9fa6,#9b9fa6,#9ea3a9,#a2a6ad,#a3a7ad,#a0a4aa,#9a9ea5,#90949b,#84888f,#7b8087,#7b7f87,#7f838b,#83878f,#868a91,#8a8f96,#92979d,#9ca0a6,#a4a8ae,#a9adb3,#abafb5,#a7abb1,#999da4,#848890,#72767e,#6f747c,#757981,#83878f,#92969d,#9ca0a6,#a0a4aa,#a0a4aa,#a0a4aa,#a1a5ac,#a6aab0,#adb0b7,#b2b6bc,#b5b9bf,#b7bbc1,#b8bbc1,#b5b9bf,#b1b5bb,#adb1b7,#acb0b6,#acafb6,#a8acb2,#a2a6ad,#9ea2a9,#9fa3aa,#a5a9af,#aaaeb4,#aeb1b8,#adb1b7,#a9adb3,#a3a8ae,#a0a4ab,#a1a5ab,#a4a8af,#aaaeb4,#adb1b7,#abafb5)"></i>
<i style="background:linear-gradient(90deg,#a1a6ac,#9da2a8,#9b9fa6,#9a9ea5,#979ba2,#90949b,#858990,#747980,#60656d,#585d65,#666b73,#777c83,#7f848b,#82878e,#8a8f96,#989ca3,#a5a9af,#aeb2b8,#b4b7bd,#b6bac0,#b6babf,#b0b4ba,#a7abb1,#9da1a8,#9b9fa5,#9fa3aa,#a0a4aa,#989ca3,#888c94,#777c84,#767a82,#82878e,#91959c,#9fa3a9,#a7abb1,#a9adb3,#a6aab0,#a1a6ac,#9ea2a8,#9ea2a8,#a1a5ac,#a5a9af,#a5a9b0,#a2a6ad,#9da1a7,#92969d,#84888f,#797d85,#797e85,#80848c,#868b92,#8a8e95,#8d9198,#92969d,#9a9ea4,#a1a5ac,#a8acb2,#aaaeb4,#a5a9af,#979ca2,#82868e,#71767d,#71757d,#767b83,#82868e,#8e929a,#989ca3,#9da1a7,#9fa3a9,#a0a4ab,#a3a7ae,#a8acb2,#adb1b7,#b2b6bc,#b5b9bf,#b7bbc1,#b8bcc2,#b7bac0,#b3b6bc,#aeb2b8,#acb0b6,#aaaeb4,#a5a9af,#9da1a8,#999da4,#9ca0a7,#a3a7ad,#a9adb3,#adb1b7,#adb1b7,#a9adb3,#a2a6ad,#9ea2a9,#9da1a8,#a1a5ac,#a8acb2,#acb0b6,#acafb6)"></i>
<i style="background:linear-gradient(90deg,#a4a8ae,#a0a4ab,#9ea2a9,#9da1a8,#9a9ea5,#93989e,#888c94,#787d84,#676b73,#62676f,#6f737b,#7c8188,#81868d,#82868d,#878c93,#9499a0,#a3a7ad,#adb1b7,#b3b6bc,#b5b9bf,#b5b9be,#afb3b9,#a5a9af,#9a9fa5,#989ca3,#9ca0a7,#9da1a8,#969ba1,#888c94,#797e85,#787c84,#83888f,#91959c,#9fa3aa,#a8acb2,#aaaeb4,#a8acb2,#a4a8ae,#a0a4ab,#a0a4ab,#a4a8ae,#a7abb1,#a7abb2,#a5a9af,#9fa3aa,#94989f,#848990,#787d84,#797e86,#83878e,#8b8f96,#8e939a,#90949b,#92969d,#979ca2,#9fa3aa,#a6aab0,#a9adb3,#a4a8ae,#969ba1,#82868e,#737880,#767a82,#7b7f87,#82878e,#8b9097,#94989f,#9a9ea5,#9ea2a8,#a1a5ac,#a5a9af,#a9adb3,#adb1b7,#b1b5bb,#b4b8be,#b7bac0,#b8bcc2,#b7bbc1,#b4b8bd,#afb3b9,#acb0b6,#a8acb3,#a1a5ab,#979ca2,#93989e,#989ca3,#a0a4ab,#a7abb2,#acb0b6,#adb1b7,#a9adb3,#a1a5ac,#9ca0a7,#9a9ea5,#9ea2a8,#a5a9b0,#abafb5,#acb0b6)"></i>
<i style="background:linear-gradient(90deg,#a6aab0,#a2a6ad,#a1a5ab,#a0a4ab,#9da2a8,#979ba2,#8c9198,#7d8289,#6f737b,#6d7279,#787c84,#82878e,#858990,#83878f,#868a92,#91969d,#a0a4aa,#abafb5,#b1b5bb,#b4b8bd,#b3b7bd,#adb1b7,#a3a7ad,#989ca3,#9599a0,#9a9ea5,#9ca0a6,#969aa1,#898e95,#7d8189,#7c8088,#868a92,#92979e,#a0a4aa,#a9adb3,#abafb5,#aaadb4,#a6aab0,#a2a6ad,#a2a6ad,#a5a9b0,#a8acb3,#a9adb3,#a6aab1,#a1a5ac,#969aa1,#858991,#797d85,#7b8088,#868b92,#90949b,#93989f,#93979e,#92969d,#9599a0,#9ca1a7,#a4a8af,#a8abb2,#a3a7ae,#969ba1,#848890,#797d85,#7d8189,#81858d,#858990,#8a8e95,#90959c,#979ba2,#9da1a8,#a2a6ac,#a6aab0,#aaadb4,#adb1b7,#b0b4b9,#b3b6bc,#b6b9bf,#b8bbc1,#b8bbc1,#b5b8be,#afb3b9,#abafb5,#a6aab0,#9ca1a7,#91959c,#8d9198,#94989f,#9ea2a9,#a6aab0,#abafb5,#adb0b6,#a9acb3,#a1a5ab,#9a9ea5,#979ba2,#9a9fa5,#a3a7ae,#aaaeb4,#acb0b6)"></i>
<i style="background:linear-gradient(90deg,#a7abb1,#a4a8ae,#a3a7ad,#a3a7ad,#a1a5ab,#9b9fa6,#91959c,#83878f,#777c83,#777b83,#80858c,#898d94,#898e95,#868a91,#868a91,#8f939a,#9da1a8,#a8acb2,#afb3b9,#b2b6bb,#b1b5bb,#abafb5,#a1a5ab,#969aa1,#93979e,#989da3,#9a9fa5,#969aa1,#8b9097,#81868d,#81868d,#8a8e95,#9599a0,#a1a5ac,#aaaeb4,#acb0b6,#abaeb5,#a7abb1,#a4a8ae,#a4a8ae,#a7abb1,#aaadb4,#aaaeb4,#a7abb2,#a2a6ad,#979ba2,#868a92,#7a7f86,#7f838b,#8b8f96,#9599a0,#989ca3,#969aa1,#93979e,#93989e,#9a9ea5,#a3a7ad,#a7aab1,#a3a7ad,#979ba2,#878c93,#7f848b,#848990,#888c93,#888d94,#898e95,#8e9299,#9599a0,#9ca1a7,#a3a7ad,#a7abb1,#aaadb4,#abafb5,#aeb1b7,#b0b4ba,#b4b7bd,#b7bac0,#b8bbc1,#b5b8be,#afb3b9,#aaaeb4,#a3a7ae,#989ca2,#898e95,#868a92,#90949b,#9ca0a6,#a4a8af,#abafb5,#acb0b6,#a9adb3,#a0a4ab,#999da4,#9599a0,#989ca3,#a1a5ac,#a9adb3,#acb0b6)"></i>
<i style="background:linear-gradient(90deg,#a7abb1,#a4a8ae,#a4a8ae,#a5a9af,#a4a8ae,#9fa3a9,#9599a0,#888d94,#7e838a,#80848b,#888d94,#8f939a,#8e939a,#898e95,#878b93,#8d9299,#9a9ea5,#a5a9af,#acb0b6,#afb3b9,#afb3b9,#a9adb3,#9fa3a9,#9599a0,#92979e,#989ca3,#9a9ea5,#979ba2,#8e939a,#878b92,#878b93,#8e939a,#989ca3,#a3a7ad,#abaeb5,#adb1b7,#abafb5,#a7abb1,#a4a8ae,#a4a8ae,#a7abb1,#aaaeb4,#aaaeb5,#a8acb2,#a3a7ad,#979ca2,#878b92,#7c8188,#82878e,#8f949b,#999da4,#9ca1a7,#999da4,#93989f,#92969d,#989da3,#a2a6ac,#a6aab0,#a3a7ad,#999da4,#8c9097,#868b92,#8b9097,#8e939a,#8c9198,#8a8e95,#8c9098,#93989f,#9ca0a7,#a3a7ae,#a8acb2,#a9adb3,#aaaeb4,#abafb5,#aeb2b8,#b1b5bb,#b5b9bf,#b7bac0,#b4b8be,#afb3b9,#a8acb2,#a1a5ab,#92979e,#82878e,#7f848b,#8d9198,#9a9ea5,#a3a7ae,#aaaeb4,#adb0b7,#a9adb3,#a1a5ab,#989da3,#94989f,#969aa1,#a0a4ab,#a9adb3,#acb0b6)"></i>
<i style="background:linear-gradient(90deg,#a7abb1,#a4a8ae,#a4a8af,#a6aab0,#a6aab0,#a2a6ac,#999da4,#8d9199,#858991,#878b92,#8f939a,#9599a0,#93989f,#8e9299,#898e95,#8c9198,#979ba2,#a2a6ac,#a9adb3,#acb0b6,#acb0b6,#a7abb1,#9da2a8,#94999f,#93979e,#989ca3,#9b9fa6,#989da3,#92969d,#8c9097,#8d9198,#93979e,#9b9fa6,#a5a9af,#abafb5,#adb1b7,#abafb5,#a7abb1,#a4a8ae,#a4a8ae,#a7abb1,#aaaeb4,#aaaeb4,#a8acb2,#a2a6ad,#979ba2,#878b92,#7e838a,#868b92,#93989e,#9da1a8,#a0a4ab,#9ca0a7,#9599a0,#91969d,#979ca2,#a1a5ac,#a6aab0,#a4a8ae,#9b9fa6,#90959c,#8d9198,#92969d,#94989f,#91959c,#8c9097,#8c9097,#93979e,#9da1a7,#a4a8af,#a8acb2,#a9adb3,#a8acb2,#a8acb2,#abafb5,#afb3b9,#b4b7bd,#b6b9bf,#b4b7bd,#aeb2b8,#a7abb1,#9ea2a8,#8d9299,#7b8087,#7a7f86,#8a8f96,#999da4,#a3a7ad,#aaaeb4,#adb1b7,#aaaeb4,#a2a6ac,#999da4,#94989f,#969aa1,#a0a4aa,#a8acb2,#abafb5)"></i>
<i style="background:linear-gradient(90deg,#a6aab0,#a3a7ad,#a4a8ae,#a7abb1,#a8abb2,#a4a8af,#9ca0a7,#91959c,#8a8e95,#8c9198,#94989f,#999da4,#989ca3,#92979d,#8c9198,#8c9097,#94989f,#9ea2a9,#a5a9b0,#a9adb3,#aaaeb4,#a5a9af,#9da1a8,#959aa0,#9599a0,#9a9ea5,#9da1a7,#9b9fa6,#969aa1,#91959c,#92969d,#979ba2,#9fa3a9,#a7abb1,#acb0b6,#adb0b6,#aaaeb4,#a6aab0,#a2a6ad,#a2a6ad,#a5a9b0,#a8acb3,#a9adb3,#a6aab1,#a1a5ac,#969aa1,#868b92,#80858c,#8a8e95,#979ba2,#a0a4ab,#a3a7ad,#9ea2a9,#969aa1,#92969d,#979ca2,#a1a5ac,#a6aab0,#a5a9af,#9ea2a8,#9599a0,#92979e,#979ca2,#999da4,#9599a0,#8e939a,#8d9198,#93989f,#9ea2a8,#a5a9b0,#a8acb3,#a8acb2,#a5a9b0,#a5a9af,#a7abb2,#acb0b6,#b2b5bb,#b5b8be,#b3b7bc,#adb1b7,#a5a9af,#9b9fa6,#898e95,#767a82,#777b83,#8a8e95,#999da4,#a3a7ad,#abafb5,#aeb2b8,#abafb5,#a3a7ae,#9b9fa6,#969aa1,#979ba2,#a0a4aa,#a8acb2,#abafb5)"></i>
<i style="background:linear-gradient(90deg,#a4a8ae,#a1a5ab,#a3a7ad,#a7abb1,#a9adb3,#a6aab0,#9ea3a9,#94989f,#8e9299,#91959c,#989da3,#9da1a8,#9ca0a7,#969ba1,#90949b,#8d9198,#92969d,#9b9fa6,#a2a6ac,#a6aab0,#a7abb1,#a3a8ae,#9da1a8,#979ba2,#989ca2,#9ca1a7,#9fa3aa,#9ea2a8,#999da4,#959aa1,#969ba1,#9b9fa6,#a2a6ac,#a8acb2,#acb0b6,#acb0b6,#a8acb2,#a4a8ae,#a0a4ab,#a0a4ab,#a3a7ae,#a7abb1,#a7abb1,#a4a8af,#9fa3aa,#93989f,#858a91,#81868d,#8c9198,#999da4,#a2a6ad,#a5a9af,#a0a4ab,#989ca3,#93979e,#989da3,#a2a6ac,#a7abb1,#a6aab0,#a0a4ab,#999da4,#979ba2,#9ca0a7,#9da1a8,#989da3,#91959c,#8f939a,#9599a0,#9fa3a9,#a6aab1,#a9adb3,#a7abb1,#a3a7ad,#a1a5ac,#a4a8af,#a9adb3,#b0b3b9,#b3b7bd,#b2b5bb,#acb0b6,#a3a7ae,#999da4,#868a91,#72777e,#767a82,#8a8f96,#9a9ea5,#a4a8ae,#acafb6,#afb3b9,#adb0b7,#a5a9b0,#9ea2a8,#989da3,#999da4,#a1a5ab,#a8acb2,#aaaeb4)"></i>
<i style="background:linear-gradient(90deg,#a1a5ac,#9ea2a9,#a1a5ab,#a6aab0,#a9adb3,#a7abb2,#a0a4ab,#969ba1,#91959c,#94989f,#9ca0a6,#a1a5ab,#9fa3aa,#9a9ea5,#93979e,#8e9299,#90949b,#979ca2,#9fa3a9,#a3a7ae,#a5a9af,#a2a6ad,#9da1a8,#9a9ea5,#9b9fa6,#9fa4aa,#a2a6ad,#a1a5ab,#9da1a7,#999ea4,#9a9ea5,#9fa3a9,#a4a8af,#aaaeb4,#acb0b6,#aaaeb4,#a6aab0,#a1a5ac,#9da1a8,#9da1a8,#a1a5ab,#a4a8af,#a5a9af,#a2a6ac,#9ca0a7,#90959c,#83888f,#82878e,#8e939a,#9b9fa6,#a4a8ae,#a6aab1,#a2a6ac,#9a9ea5,#9599a0,#9a9ea5,#a3a7ae,#a8acb2,#a8acb2,#a3a7ad,#9ca0a7,#9b9fa6,#9fa3aa,#a1a5ab,#9ca0a6,#94989f,#91959c,#979ba2,#a0a4ab,#a7abb2,#a9adb3,#a6aab0,#a1a5ab,#9ea2a9,#a1a5ac,#a7abb1,#aeb1b7,#b2b5bb,#b0b4ba,#aaaeb4,#a2a6ac,#979ba2,#83888f,#70757d,#777b83,#8c9097,#9b9fa6,#a5a9af,#adb1b7,#b0b4ba,#aeb2b8,#a8acb2,#a0a5ab,#9ca0a6,#9ca0a7,#a2a6ac,#a8acb2,#aaaeb4)"></i>
<i style="background:linear-gradient(90deg,#9ea2a9,#9b9fa6,#9fa3a9,#a5a9b0,#aaadb4,#a8acb3,#a2a6ac,#989da3,#93989f,#979ba2,#9fa3a9,#a3a7ae,#a2a7ad,#9ea2a8,#969aa1,#8f939a,#8e9299,#94999f,#9b9fa6,#a0a4ab,#a2a6ad,#a1a5ac,#9ea2a9,#9ca0a7,#9ea2a9,#a2a7ad,#a5a9af,#a4a8ae,#a0a4ab,#9da1a8,#9ea2a8,#a2a6ac,#a7abb1,#abafb5,#acb0b6,#a9adb3,#a3a7ae,#9ea2a9,#9a9ea5,#9a9ea5,#9ea2a8,#a1a5ac,#a2a6ac,#9fa3a9,#989da3,#8d9198,#81868d,#83878e,#90959c,#9da1a8,#a6aab0,#a8acb2,#a3a7ae,#9ba0a6,#979ba2,#9ca0a6,#a5a9af,#aaaeb4,#a9adb4,#a5a9af,#9fa4aa,#9ea3a9,#a2a6ad,#a3a7ae,#9fa3a9,#979ba2,#93989f,#989da3,#a2a6ac,#a8acb3,#aaadb4,#a5a9b0,#9ea3a9,#9b9fa6,#9ea2a9,#a4a8ae,#abafb5,#b0b4ba,#afb3b9,#a9adb3,#a0a4ab,#9599a0,#81868d,#70747c,#787d84,#8e9299,#9da1a8,#a6aab1,#aeb2b8,#b2b5bb,#b0b4ba,#aaaeb4,#a3a8ae,#9fa3aa,#9fa3a9,#a3a8ae,#a8acb2,#a9adb3)"></i>
<i style="background:linear-gradient(90deg,#9a9ea5,#979ba2,#9ca0a7,#a5a9af,#aaaeb4,#aaaeb4,#a3a8ae,#9b9fa5,#969aa1,#9a9ea5,#a1a6ac,#a6aab1,#a5a9b0,#a1a5ab,#999da4,#90959c,#8d9198,#91959c,#989ca3,#9da1a8,#a0a4ab,#a0a4ab,#9fa3aa,#9fa3a9,#a1a5ac,#a5a9af,#a7abb2,#a6aab1,#a3a7ae,#a0a4ab,#a1a5ac,#a5a9af,#a9adb3,#acb0b6,#acb0b6,#a7abb2,#a1a5ab,#9b9fa5,#969aa1,#969aa1,#9a9ea5,#9ea2a9,#9fa3a9,#9b9fa6,#9499a0,#898d94,#7f838b,#83888f,#92979d,#9fa3a9,#a7abb1,#a9adb3,#a5a9af,#9da1a8,#999da3,#9da1a8,#a6aab0,#abafb5,#abafb5,#a7abb1,#a2a6ad,#a1a6ac,#a5a9af,#a6aab0,#a1a5ac,#9a9ea4,#969aa1,#9a9ea5,#a3a7ae,#a9adb3,#aaaeb4,#a4a8af,#9ca0a7,#979ba2,#9a9ea5,#a1a5ab,#a9adb3,#aeb2b8,#aeb1b7,#a8abb2,#9ea3a9,#92979e,#7f838b,#6f737b,#797e86,#90949b,#9ea2a9,#a7abb2,#afb3b9,#b3b7bc,#b2b6bb,#acb0b6,#a6aab1,#a2a6ad,#a2a6ac,#a5a9af,#a9acb3,#a8acb2)"></i>
<i style="background:linear-gradient(90deg,#969aa1,#93989e,#9a9ea5,#a4a8af,#abafb5,#abafb5,#a5a9b0,#9da1a8,#999da4,#9da1a8,#a4a8af,#a9adb3,#a9adb3,#a4a8af,#9da1a8,#93979e,#8d9198,#8f939a,#9599a0,#9b9fa6,#9ea2a9,#9fa4aa,#9fa4aa,#a0a4ab,#a3a7ae,#a7abb1,#a9adb3,#a9adb3,#a6aab0,#a4a8ae,#a5a9af,#a8acb2,#acafb6,#adb1b7,#acb0b6,#a6aab0,#9ea2a8,#979ca2,#93979e,#93979e,#979ba2,#9a9fa5,#9b9fa5,#979ba2,#8f949b,#848890,#7d8189,#858991,#9599a0,#a1a5ab,#a8acb2,#aaaeb4,#a6aab0,#9ea2a9,#9a9ea5,#9ea2a9,#a6aab1,#abafb5,#acb0b6,#a9adb3,#a5a9af,#a4a8ae,#a7abb2,#a8acb2,#a3a7ae,#9ca0a7,#989ca3,#9ca0a7,#a4a8ae,#aaaeb4,#a9adb3,#a3a7ad,#989da3,#92969d,#969aa1,#9da1a8,#a6aab0,#acb0b6,#abafb5,#a5a9b0,#9ca0a7,#8f949b,#7c8088,#6d727a,#7a7f86,#91959c,#9fa3aa,#a8acb2,#b0b3b9,#b4b8bd,#b3b7bd,#afb3b9,#a9adb4,#a6aab0,#a5a9af,#a7abb1,#a9adb3,#a8acb2)"></i>
<i style="background:linear-gradient(90deg,#92969d,#8f949b,#989ca3,#a4a8af,#acb0b6,#adb1b7,#a8acb2,#a0a4ab,#9da1a7,#a0a4ab,#a7abb2,#acb0b6,#acb0b6,#a8acb2,#a1a5ab,#969aa1,#8e9299,#8e9299,#93989e,#999da4,#9da1a8,#9fa3aa,#a0a4aa,#a1a5ac,#a4a8af,#a8acb2,#abafb5,#abafb5,#a9adb3,#a7abb2,#a8acb2,#abafb5,#aeb2b8,#afb3b8,#abafb5,#a4a8af,#9b9fa6,#9599a0,#91959c,#90959c,#94989f,#979ba2,#969aa1,#91959c,#898e95,#7e838a,#7b8087,#878c93,#989ca3,#a3a7ad,#aaaeb4,#abafb5,#a7abb1,#9fa3aa,#9a9fa5,#9ea2a9,#a6aab0,#abafb5,#acb0b6,#aaaeb4,#a6aab1,#a6aab0,#a9adb3,#a9adb3,#a5a9af,#9da2a8,#9a9ea4,#9da1a8,#a5a9af,#aaaeb4,#a8acb2,#a0a4ab,#94989f,#8c9198,#90949b,#989ca3,#a2a6ad,#a9adb3,#a9acb3,#a2a6ad,#999da4,#8c9097,#787d84,#6b7078,#7a7f86,#91959c,#9fa3aa,#a8acb2,#b0b4b9,#b4b8be,#b5b8be,#b1b5bb,#acb0b6,#a9adb3,#a8acb2,#aaaeb4,#aaaeb4,#a8acb2)"></i>
<i style="background:linear-gradient(90deg,#8d9198,#8c9097,#979ba2,#a5a9af,#adb1b7,#afb3b9,#aaaeb4,#a3a7ae,#a0a4ab,#a3a7ae,#aaaeb4,#afb2b8,#afb2b8,#acafb6,#a5a9af,#9a9ea5,#90959b,#8e9299,#93979e,#999da4,#9da1a7,#9fa3a9,#a0a4ab,#a2a6ac,#a5a9af,#a9acb3,#abafb5,#acb0b6,#abafb5,#abafb5,#acb0b6,#aeb2b8,#b0b4ba,#b0b4b9,#abafb5,#a3a7ad,#999da4,#93979e,#8f949b,#8f939a,#91969d,#93979e,#91959c,#8b8f96,#82868e,#797d85,#7b7f87,#8a8f96,#9b9fa6,#a5a9af,#abafb5,#acb0b6,#a7abb1,#9fa3aa,#9a9fa5,#9ea2a8,#a5a9b0,#aaaeb4,#acb0b6,#aaaeb4,#a8acb2,#a8abb2,#aaaeb4,#aaaeb4,#a5a9b0,#9fa3a9,#9b9fa6,#9ea2a9,#a5a9af,#a9adb3,#a6aab1,#9ca1a7,#8e9299,#858991,#898e95,#93979e,#9ea2a9,#a5a9af,#a5a9af,#9fa3a9,#9599a0,#888c94,#747980,#696e76,#797e85,#90959c,#9fa3a9,#a7abb1,#afb3b9,#b5b8be,#b5b9bf,#b3b7bc,#afb3b9,#acb0b6,#acafb6,#acb0b6,#acb0b6,#a8acb3)"></i>
<i style="background:linear-gradient(90deg,#888d94,#888d94,#969aa1,#a5a9b0,#afb2b8,#b1b4ba,#acb0b6,#a6aab0,#a3a7ae,#a6aab0,#acb0b6,#b1b5ba,#b1b5bb,#afb2b8,#a8acb3,#9ea2a9,#94989f,#90949b,#94989f,#999da4,#9da1a8,#9fa3aa,#a0a4aa,#a1a5ac,#a4a8af,#a8acb2,#abafb5,#adb1b7,#aeb2b8,#aeb2b8,#afb3b9,#b1b5ba,#b2b6bc,#b0b4ba,#abafb5,#a1a5ac,#979ca2,#92979d,#90949b,#8f949b,#90959b,#8f949b,#8b9097,#84888f,#7a7e86,#73777f,#7b8087,#8e9299,#9ea2a9,#a7abb1,#acb0b6,#acb0b6,#a7abb1,#9fa3aa,#9a9ea5,#9da1a8,#a4a8ae,#a9adb3,#abafb5,#abaeb5,#a9adb3,#a8acb3,#aaaeb4,#aaaeb4,#a6aab0,#a0a4aa,#9ca0a7,#9fa3a9,#a4a8af,#a7abb2,#a4a8ae,#989ca3,#878b93,#7d8189,#82878e,#8d9198,#999da4,#a0a4ab,#a0a4ab,#9a9ea5,#90959c,#84888f,#71757d,#676c74,#787d84,#8f939a,#9da1a8,#a6aab0,#aeb2b8,#b4b8be,#b6babf,#b4b8be,#b2b5bb,#afb3b9,#afb3b9,#afb3b9,#aeb1b8,#a9adb3)"></i>
<i style="background:linear-gradient(90deg,#848990,#868b92,#969ba1,#a7abb1,#b0b4ba,#b2b6bc,#aeb2b8,#a9adb3,#a6aab0,#a8acb3,#aeb2b8,#b2b6bc,#b3b7bd,#b1b5bb,#acb0b6,#a2a6ac,#979ca2,#92979e,#959aa0,#9b9fa6,#9ea2a9,#9fa4aa,#9fa4aa,#a0a4ab,#a3a7ad,#a7abb1,#abafb5,#aeb2b8,#afb3b9,#b0b4ba,#b1b5bb,#b3b7bc,#b3b7bd,#b1b4ba,#aaaeb4,#a0a4aa,#969aa1,#92979e,#91959c,#91959c,#90959c,#8d9198,#868b92,#7d8189,#72767e,#6e737b,#7d8189,#92969d,#a1a5ac,#a9adb3,#acb0b6,#acb0b6,#a6aab1,#9ea3a9,#999da4,#9b9fa6,#a1a5ac,#a7abb1,#aaaeb4,#aaaeb4,#a9adb3,#a9adb3,#aaaeb4,#a9adb3,#a5a9af,#a0a4ab,#9da1a8,#9fa3aa,#a3a7ae,#a5a9b0,#a0a4aa,#92969d,#7f848b,#747980,#7b7f87,#878b92,#93989f,#9b9fa6,#9b9fa6,#9599a0,#8c9097,#80848c,#6e737b,#666b73,#777c83,#8d9299,#9b9fa6,#a4a8ae,#adb1b7,#b3b7bd,#b6babf,#b5b9bf,#b3b7bd,#b2b6bc,#b2b5bb,#b1b5bb,#afb3b9,#aaaeb4)"></i>
<i style="background:linear-gradient(90deg,#81868d,#868b92,#989ca2,#a8acb2,#b1b5bb,#b3b7bd,#b0b4ba,#abafb5,#a8acb2,#aaaeb4,#afb3b9,#b3b7bd,#b4b8be,#b3b7bd,#aeb2b8,#a5a9b0,#9b9fa6,#969aa1,#989ca3,#9da1a8,#a0a4ab,#a0a4ab,#9fa3aa,#9fa3a9,#a1a5ac,#a5a9b0,#aaaeb4,#aeb2b8,#b1b5ba,#b3b6bc,#b3b7bd,#b4b8be,#b4b8be,#b0b4ba,#a9adb3,#9ea2a9,#969aa1,#94989f,#94989f,#94989f,#92969d,#8c9097,#82878e,#767b83,#6a6f77,#6c7078,#80848c,#969aa1,#a4a8af,#aaaeb4,#adb0b6,#abafb5,#a5a9b0,#9da2a8,#989ca3,#999ea4,#9fa3a9,#a4a8ae,#a8acb2,#a9adb4,#a9adb3,#a9adb3,#a9adb3,#a7abb2,#a4a8ae,#a0a4ab,#9ea2a9,#9fa3aa,#a2a6ad,#a3a7ad,#9ba0a6,#8c9097,#777b83,#6c7078,#747981,#81868d,#8e939a,#969aa1,#969aa1,#90949b,#878b93,#7d8189,#6e727a,#676c74,#777b83,#8b9097,#999da4,#a2a6ac,#abafb5,#b2b6bc,#b5b9bf,#b6b9bf,#b5b8be,#b4b8bd,#b4b7bd,#b4b7bd,#b1b5bb,#acb0b6)"></i>
<i style="background:linear-gradient(90deg,#80858c,#888c93,#9a9ea4,#aaaeb4,#b3b6bc,#b4b8be,#b1b5bb,#acb0b6,#aaadb4,#abafb5,#b0b3b9,#b4b8bd,#b5b9bf,#b4b8be,#b1b4ba,#a8acb2,#9fa3a9,#999da4,#9b9fa6,#a0a4aa,#a2a6ad,#a1a5ac,#9ea2a9,#9da1a7,#9fa3a9,#a3a7ad,#a8acb2,#aeb1b7,#b2b5bb,#b4b8bd,#b5b8be,#b5b9bf,#b4b8be,#b0b3b9,#a7abb1,#9da1a7,#969aa1,#969aa1,#979ca2,#989ca3,#9599a0,#8d9198,#80848c,#72777f,#666b73,#6c7179,#848890,#9a9ea5,#a7abb1,#abafb5,#acb0b6,#aaaeb4,#a4a8ae,#9ca0a7,#979ba2,#979ca2,#9ba0a6,#a0a5ab,#a5a9b0,#a8acb3,#a9adb3,#a8acb2,#a7abb1,#a5a9b0,#a2a6ad,#a0a4aa,#9fa3a9,#9fa3aa,#a1a5ab,#9fa4aa,#969ba1,#848990,#6e737b,#656a72,#70757d,#7d8289,#8a8e95,#91959c,#90949b,#8a8f96,#83888f,#7b8087,#6f747c,#6a6f77,#777c83,#898e95,#969ba1,#9fa3aa,#a8acb3,#b0b4ba,#b4b8be,#b6b9bf,#b5b9bf,#b5b9be,#b5b9bf,#b5b9bf,#b3b7bc,#adb1b7)"></i>
<i style="background:linear-gradient(90deg,#81868d,#8b8f96,#9ca1a7,#abafb5,#b3b7bd,#b5b8be,#b2b6bb,#adb1b7,#aaaeb4,#abafb5,#afb3b9,#b3b7bd,#b5b9bf,#b5b9be,#b2b6bb,#abaeb5,#a2a6ac,#9ca1a7,#9ea2a9,#a2a6ad,#a4a8ae,#a2a6ac,#9ea2a8,#9a9fa5,#9ca0a7,#a0a4ab,#a6aab1,#adb1b7,#b2b6bc,#b5b8be,#b5b9bf,#b5b9bf,#b4b7bd,#aeb2b8,#a5a9af,#9b9fa6,#969aa1,#989ca3,#9b9fa6,#9ca1a7,#999da4,#8f949a,#80858c,#71767e,#666b73,#6f747c,#898d94,#9da2a8,#a9adb3,#acb0b6,#abafb5,#a8acb3,#a2a6ad,#9b9fa6,#969aa1,#969aa1,#989ca3,#9da1a8,#a3a7ad,#a7abb1,#a8acb3,#a7abb1,#a5a9af,#a2a6ad,#a0a4ab,#9fa3aa,#9fa3aa,#9fa3aa,#9fa3aa,#9ca0a7,#91959c,#7d8189,#686d75,#636870,#6f747c,#7c8188,#878b93,#8c9198,#8b9097,#868b92,#81868d,#7c8088,#737880,#6f747c,#787d84,#888c93,#94989f,#9da1a7,#a6aab0,#aeb2b8,#b3b7bc,#b5b9be,#b5b9bf,#b5b9bf,#b6bac0,#b7bac0,#b4b8be,#aeb2b8)"></i>
<i style="background:linear-gradient(90deg,#84888f,#8f939a,#9fa4aa,#adb1b7,#b4b8bd,#b5b8be,#b2b5bb,#adb1b7,#aaaeb4,#aaaeb4,#aeb2b8,#b2b6bc,#b4b8be,#b5b9be,#b2b6bc,#acb0b6,#a4a8af,#9fa3aa,#a1a5ab,#a5a9af,#a6aab0,#a3a7ad,#9da1a8,#989ca3,#999da4,#9ea2a8,#a4a8af,#acb0b6,#b2b6bc,#b5b8be,#b5b9bf,#b5b8be,#b2b6bc,#acb0b6,#a2a6ad,#999da4,#979ba2,#9b9fa5,#9fa3aa,#a1a5ab,#9da1a8,#93979e,#83878f,#747980,#696e76,#757981,#8d9299,#a1a5ab,#aaaeb4,#acb0b6,#aaaeb4,#a6aab1,#a0a4ab,#999ea4,#9599a0,#94989f,#9599a0,#9a9ea4,#a0a5ab,#a6aab0,#a8acb2,#a6aab0,#a3a7ad,#9fa3aa,#9ea2a9,#9ea3a9,#a0a4aa,#9fa4aa,#9da1a8,#989ca3,#8b8f96,#767b82,#646971,#656a72,#72767e,#7e828a,#868b92,#8a8e95,#888c94,#83888f,#81858d,#7e838a,#797d85,#757a82,#7b7f87,#878b92,#92969d,#9a9ea5,#a3a7ae,#abafb5,#b1b5ba,#b3b7bd,#b4b8be,#b5b9bf,#b7bac0,#b7bbc1,#b5b9bf,#afb3b9)"></i>
<i style="background:linear-gradient(90deg,#888c93,#93989e,#a3a7ad,#aeb2b8,#b4b8be,#b4b8be,#b1b5bb,#adb1b7,#a9adb3,#a9adb3,#acb0b6,#b0b4ba,#b3b7bd,#b4b8be,#b2b6bc,#adb1b7,#a6aab0,#a2a6ac,#a3a7ad,#a7abb1,#a8abb2,#a4a8ae,#9ca0a7,#969aa1,#969aa1,#9b9fa6,#a3a7ad,#abafb5,#b1b5bb,#b4b8be,#b4b8be,#b3b7bd,#b0b4ba,#a9adb3,#9fa3aa,#989ca3,#989ca3,#9da1a8,#a2a7ad,#a5a9af,#a2a6ac,#979ba2,#878c93,#797e85,#70757d,#7c8088,#92969d,#a3a7ae,#abafb5,#acb0b6,#a9acb3,#a4a8ae,#9ea2a8,#989ca3,#9599a0,#93989f,#93979e,#969ba1,#9ea2a9,#a5a9af,#a7abb1,#a5a9af,#a0a4ab,#9ca0a7,#9ba0a6,#9ea2a8,#a0a4ab,#a0a4aa,#9ca0a7,#94999f,#858991,#70757d,#646971,#6b6f77,#777c84,#82868d,#888c93,#898d95,#868b92,#83878e,#82878e,#83878f,#80848b,#7c8188,#7e838a,#878b92,#90949b,#989da3,#a1a5ac,#a9adb3,#aeb2b8,#b1b5bb,#b3b7bc,#b4b8be,#b6bac0,#b8bbc1,#b6b9bf,#b0b4ba)"></i>
<i style="background:linear-gradient(90deg,#8c9198,#989ca3,#a6aab0,#b0b4b9,#b4b8bd,#b3b7bd,#b0b4b9,#acb0b6,#a8acb2,#a6aab1,#a9adb3,#aeb2b8,#b1b5bb,#b3b6bc,#b1b5bb,#adb1b7,#a7abb1,#a3a7ae,#a4a8af,#a8acb2,#a9adb3,#a4a8ae,#9ca0a7,#94999f,#94989f,#999da4,#a1a5ac,#aaaeb4,#b1b4ba,#b3b7bd,#b3b7bd,#b1b5bb,#aeb2b8,#a5a9b0,#9b9fa6,#969aa1,#999da3,#9fa3aa,#a5a9b0,#a8acb3,#a6aab0,#9ca0a7,#8d9198,#80858c,#797d85,#83878f,#979ba2,#a5a9b0,#acb0b6,#abafb5,#a6aab1,#a1a5ab,#9b9fa6,#979ba2,#9599a0,#93989f,#91959c,#94989f,#9da1a7,#a4a8ae,#a6aab1,#a4a8ae,#9da2a8,#989da3,#999da4,#9da1a8,#a1a5ab,#a0a4aa,#9a9fa5,#91959c,#80848c,#6d7279,#686d75,#73777f,#7e838a,#878b93,#8b8f96,#8a8f96,#878b92,#848890,#858a91,#888c94,#878b92,#83888f,#83878e,#888c93,#90949b,#979ca2,#9fa3aa,#a6aab0,#abafb5,#afb2b8,#b1b4ba,#b3b6bc,#b5b9bf,#b7bbc1,#b6babf,#b1b5ba)"></i>
<i style="background:linear-gradient(90deg,#91959c,#9ca1a7,#a9acb3,#b1b4ba,#b3b7bd,#b2b5bb,#aeb2b8,#aaaeb4,#a5a9b0,#a3a7ae,#a6aab0,#abafb5,#aeb2b8,#b0b4ba,#b0b4ba,#acb0b6,#a7abb1,#a4a8ae,#a5a9b0,#a9adb3,#a9adb3,#a4a8af,#9ba0a6,#93989e,#93979e,#989ca3,#a0a4ab,#a9adb3,#b0b3b9,#b2b6bc,#b1b5bb,#afb3b9,#aaaeb4,#a1a5ac,#979ba2,#94989f,#999da4,#a1a5ac,#a8acb2,#abafb5,#a9adb3,#a0a4ab,#93979e,#878c93,#81868d,#8a8e95,#9a9fa5,#a7abb1,#acb0b6,#aaaeb4,#a4a8ae,#9ea2a8,#999da4,#979ba2,#969aa1,#94999f,#91959c,#93979e,#9ca0a6,#a3a7ae,#a6aab0,#a3a7ad,#9b9fa6,#969aa1,#979ba2,#9da1a8,#a1a5ac,#a0a4ab,#9a9ea5,#8e939a,#7c8188,#6c7179,#6e727a,#7b8087,#868a92,#8d9198,#8f949a,#8d9198,#898d94,#878b92,#8a8e95,#8e9299,#8d9299,#8a8e95,#878c93,#898e95,#90949b,#979ba2,#9ea2a9,#a4a8ae,#a8acb2,#abafb5,#aeb2b8,#b0b4ba,#b4b8bd,#b7bac0,#b6babf,#b1b5bb)"></i>
<i style="background:linear-gradient(90deg,#9599a0,#a0a4ab,#abafb5,#b1b5bb,#b3b6bc,#b0b3b9,#acb0b6,#a7abb2,#a2a6ad,#a0a4aa,#a2a6ac,#a7abb1,#abafb5,#aeb2b8,#aeb2b8,#abafb5,#a6aab1,#a4a8ae,#a5a9b0,#a9adb3,#a9adb3,#a4a8af,#9ba0a6,#93989e,#92979e,#989ca3,#a0a4ab,#a9adb3,#afb2b8,#b0b4ba,#afb2b8,#acb0b6,#a7abb1,#9da1a7,#93979e,#91969d,#999da4,#a2a6ad,#a9adb3,#adb1b7,#acb0b6,#a4a8af,#989ca3,#8e9299,#898d94,#90949b,#9ea2a8,#a8acb2,#acb0b6,#a9acb3,#a2a6ac,#9b9fa6,#979ba2,#979ba2,#989ca3,#969aa1,#92969d,#93979e,#9ca0a6,#a3a7ae,#a6aab0,#a2a6ad,#9a9ea5,#93989f,#969aa1,#9da1a8,#a2a6ad,#a1a5ac,#999ea4,#8d9198,#7b7f87,#6e737a,#757981,#83888f,#8d9198,#93979e,#94989f,#91959c,#8c9198,#8b8f96,#8e939a,#93979e,#93979e,#90949b,#8c9097,#8c9198,#92969d,#989ca3,#9ea2a8,#a2a6ac,#a5a9af,#a8acb2,#abafb5,#aeb2b8,#b2b6bc,#b6b9bf,#b5b9bf,#b1b5ba)"></i>
<i style="background:linear-gradient(90deg,#999da4,#a3a7ae,#adb0b7,#b2b5bb,#b1b5bb,#aeb1b7,#a9adb3,#a5a9af,#9fa3aa,#9ba0a6,#9da1a8,#a3a7ad,#a8acb2,#abafb5,#acafb6,#a9adb3,#a5a9af,#a3a7ad,#a5a9af,#a8acb2,#a9adb3,#a4a8af,#9ca0a7,#94989f,#94989f,#999da4,#a1a5ab,#a9adb3,#aeb1b7,#aeb2b8,#acb0b6,#a8acb3,#a3a7ad,#989ca3,#8e9299,#8f939a,#999da4,#a2a6ad,#aaaeb4,#afb3b9,#aeb2b8,#a8abb2,#9da1a8,#94989f,#8f949b,#9599a0,#a0a4ab,#a9adb3,#abafb5,#a7abb1,#9fa3aa,#989ca3,#959aa0,#979ca2,#9a9ea5,#989da3,#94989f,#9599a0,#9ca1a7,#a4a8ae,#a6aab0,#a2a6ad,#999da4,#92979e,#969aa1,#9ea2a8,#a3a7ae,#a2a6ac,#9a9ea5,#8d9198,#7b8087,#72767e,#7c8088,#8a8f96,#93979e,#989ca3,#989da3,#9599a0,#90959c,#8f939a,#93979e,#989ca3,#989da3,#9599a0,#91959c,#90949b,#94989f,#9a9ea5,#9ea2a9,#a1a5ab,#a2a6ad,#a4a8af,#a7abb2,#abafb5,#b0b4ba,#b4b8be,#b5b8be,#b0b4ba)"></i>
<i style="background:linear-gradient(90deg,#9ca0a6,#a6aab0,#aeb2b8,#b2b5bb,#b0b4ba,#abafb5,#a6aab1,#a2a6ac,#9b9fa6,#979ba2,#999da4,#9fa3aa,#a4a8af,#a8acb2,#a9adb3,#a7abb1,#a3a7ad,#a1a5ab,#a3a7ad,#a7abb1,#a8abb2,#a4a8ae,#9ca0a7,#969aa1,#969aa1,#9b9fa6,#a2a6ad,#a9adb3,#adb1b7,#acb0b6,#a9adb3,#a5a9af,#9fa3a9,#93979e,#8a8e95,#8c9198,#989ca3,#a2a6ac,#aaaeb4,#afb3b9,#b0b3b9,#aaaeb4,#a1a5ab,#999da4,#9599a0,#999da4,#a2a6ad,#a9adb3,#aaaeb4,#a5a9b0,#9da1a8,#969aa1,#9599a0,#999da4,#9ca0a7,#9ba0a6,#979ba2,#979ba2,#9ea2a9,#a5a9af,#a7abb1,#a3a7ad,#999ea4,#93979e,#969aa1,#9fa3a9,#a4a8af,#a3a7ad,#9b9fa6,#8e9299,#7d8289,#777b83,#82868e,#90949b,#989ca3,#9ca0a7,#9ca1a7,#999da4,#9499a0,#93989f,#979ca2,#9ca0a7,#9da1a7,#999ea4,#9599a0,#93989f,#979ba2,#9ca1a7,#9fa4aa,#a0a4ab,#a0a4ab,#a1a5ab,#a4a8ae,#a8acb2,#aeb2b8,#b3b6bc,#b4b7bd,#b0b3b9)"></i>
<i style="background:linear-gradient(90deg,#9ea2a8,#a7abb1,#afb2b8,#b1b5bb,#afb3b9,#a9adb3,#a3a7ae,#9ea2a9,#979ca2,#92979e,#94999f,#9b9fa6,#a1a5ac,#a5a9af,#a6aab1,#a4a8ae,#a0a4ab,#9ea2a9,#a0a4ab,#a4a8af,#a6aab0,#a3a7ad,#9da1a8,#989da3,#999da4,#9ea2a9,#a4a8ae,#aaaeb4,#acb0b6,#abafb5,#a6aab1,#a2a6ac,#9b9fa6,#8e939a,#858991,#898e95,#969aa1,#a1a5ab,#a9adb4,#afb3b9,#b1b4ba,#acb0b6,#a4a8ae,#9da1a8,#999da4,#9ca0a7,#a4a8ae,#a9adb3,#aaadb4,#a4a8ae,#9b9fa6,#94989f,#94999f,#9a9ea5,#9fa3aa,#9ea3a9,#9a9ea5,#9a9ea5,#a0a4ab,#a6aab1,#a8acb2,#a4a8ae,#9b9fa5,#94989f,#989ca3,#a0a4ab,#a6aab0,#a4a8af,#9ca0a7,#8f949b,#80858c,#7c8188,#888c93,#9599a0,#9ca0a7,#a0a4ab,#a0a4ab,#9da1a7,#989da3,#979ca2,#9b9fa6,#a0a4aa,#a0a4ab,#9da1a8,#999da4,#979ca2,#9b9fa5,#9fa3aa,#a1a5ac,#a0a5ab,#9ea2a9,#9ea2a8,#a0a5ab,#a5a9af,#abafb5,#b1b5bb,#b2b6bc,#afb2b8)"></i>
<i style="background:linear-gradient(90deg,#9fa4aa,#a8acb3,#afb3b9,#b1b5bb,#aeb1b7,#a6aab1,#a0a4ab,#9b9fa6,#93989e,#8e9299,#90949b,#979ba2,#9ea2a9,#a2a6ad,#a4a8ae,#a1a5ac,#9da1a8,#9b9fa6,#9da1a8,#a2a6ac,#a4a8ae,#a2a6ac,#9ea2a8,#9b9fa6,#9da1a7,#a1a5ac,#a6aab1,#abafb5,#acb0b6,#a9adb3,#a4a8ae,#9fa3a9,#979ba2,#8a8e95,#80858c,#868a92,#94989f,#9fa4aa,#a8acb3,#afb3b9,#b1b5bb,#aeb1b7,#a6aab1,#a0a4ab,#9ca1a7,#9fa3a9,#a5a9af,#a9adb3,#a9acb3,#a2a7ad,#999da4,#92979e,#9599a0,#9ca0a7,#a2a6ac,#a2a6ac,#9da1a8,#9da1a8,#a3a7ad,#a8acb2,#a9adb3,#a5a9af,#9ca0a7,#969aa1,#999ea4,#a1a6ac,#a7abb1,#a6aab0,#9ea2a9,#92969d,#848990,#81868d,#8c9198,#999da4,#9fa4aa,#a3a7ae,#a3a7ad,#a0a4aa,#9ca0a7,#9b9fa6,#9fa3a9,#a3a7ad,#a3a7ae,#a0a5ab,#9da1a7,#9b9fa6,#9ea2a9,#a2a6ad,#a4a8ae,#a1a5ac,#9da1a8,#9b9fa6,#9da1a8,#a2a6ad,#a9adb3,#afb3b9,#b1b5bb,#adb1b7)"></i>
<i style="background:linear-gradient(90deg,#a1a5ac,#aaadb4,#b0b3b9,#b1b4ba,#acb0b6,#a4a8ae,#9da1a8,#979ba2,#8f939a,#898d94,#8b8f96,#93979e,#9a9ea5,#9fa3aa,#a0a5ab,#9ea2a9,#9a9ea4,#979ba2,#9a9ea5,#9fa3a9,#a1a5ac,#a1a5ab,#9fa3a9,#9ea2a8,#a0a4aa,#a4a8ae,#a9adb3,#acb0b6,#acafb6,#a7abb1,#a1a5ab,#9ba0a6,#93979e,#858a91,#7c8088,#83878e,#92969d,#9ea2a9,#a7abb1,#afb2b8,#b1b5bb,#afb3b9,#a9adb3,#a3a7ae,#a0a4aa,#a1a5ac,#a6aab0,#a9adb3,#a7abb2,#a1a5ab,#979ba2,#91959c,#9599a0,#9ea2a8,#a4a8ae,#a4a8af,#a0a5ab,#a0a4ab,#a5a9af,#aaaeb4,#abafb5,#a6aab1,#9ea2a9,#989ca3,#9b9fa6,#a3a7ad,#a8acb2,#a7abb1,#a0a4aa,#94989f,#888c93,#868a91,#90959c,#9ca0a7,#a2a7ad,#a6aab0,#a6aab0,#a3a7ad,#9fa3aa,#9fa3a9,#a2a6ac,#a6aab0,#a6aab0,#a4a8ae,#a0a4aa,#9ea3a9,#a1a5ac,#a5a9af,#a6aab0,#a2a6ac,#9ca0a7,#989ca3,#9a9ea5,#9fa3aa,#a7abb1,#adb1b7,#b0b3b9,#acb0b6)"></i>
<i style="background:linear-gradient(90deg,#a3a7ad,#abafb5,#b0b4ba,#b0b4ba,#abaeb5,#a1a5ac,#999ea4,#93979e,#898e95,#82878e,#858990,#8e9299,#969aa1,#9b9fa6,#9da1a8,#9a9ea5,#969aa1,#93989f,#969ba1,#9ca0a6,#9fa3aa,#a0a4ab,#a0a4aa,#a0a4ab,#a3a7ad,#a7abb1,#abafb5,#adb1b7,#abafb5,#a6aab0,#9ea2a9,#989ca3,#8f949b,#81858c,#777c83,#80848c,#90959c,#9da1a7,#a6aab0,#aeb2b8,#b2b6bb,#b0b4ba,#abafb5,#a6aab1,#a3a7ae,#a4a8ae,#a7abb1,#a8acb3,#a6aab0,#9fa3aa,#9599a0,#90949b,#9599a0,#9fa3aa,#a6aab1,#a7abb1,#a3a7ae,#a3a7ad,#a7abb1,#abafb5,#acafb6,#a7abb2,#9fa3aa,#9a9ea5,#9da1a8,#a5a9af,#aaaeb4,#a9adb3,#a2a6ac,#979ba2,#8c9097,#8a8e96,#94989f,#9fa3aa,#a5a9af,#a8acb2,#a8acb2,#a6aab0,#a3a7ad,#a2a6ad,#a5a9af,#a9acb3,#a9adb3,#a7abb1,#a3a7ae,#a2a6ad,#a4a8af,#a8acb2,#a8acb2,#a3a7ad,#9b9fa6,#969aa1,#979ba2,#9ca0a7,#a4a8af,#acb0b6,#aeb2b8,#aaaeb4)"></i>
<i style="background:linear-gradient(90deg,#a5a9af,#acb0b6,#b1b5ba,#b0b4ba,#a9adb3,#9ea2a9,#9599a0,#8e9299,#83878e,#7a7f86,#7d8189,#878c93,#91959c,#979ba2,#999da3,#969aa1,#92969d,#90949b,#93979e,#999da4,#9da1a8,#9fa4aa,#a1a5ab,#a3a7ad,#a6aab0,#aaaeb4,#adb1b7,#afb2b8,#acb0b6,#a5a9af,#9ca0a7,#9599a0,#8c9097,#7d8189,#747981,#7f838b,#8f949b,#9ca0a6,#a5a9af,#aeb1b7,#b2b6bc,#b2b5bb,#aeb2b8,#aaaeb4,#a7abb1,#a6aab1,#a8acb2,#a8acb2,#a4a8af,#9da1a8,#93979e,#8f939a,#969aa1,#a1a5ab,#a8acb2,#a9adb3,#a5a9b0,#a4a8af,#a8acb2,#abafb5,#acb0b6,#a8acb2,#a0a4ab,#9ba0a6,#9fa3aa,#a7abb1,#acafb6,#abafb5,#a4a8ae,#9a9ea5,#90949b,#8e939a,#979ba2,#a1a5ac,#a6aab1,#a9adb3,#aaaeb4,#a8acb2,#a6aab0,#a6aab0,#a8acb3,#abafb5,#acb0b6,#aaaeb4,#a7abb1,#a6aab0,#a8acb2,#abafb5,#aaaeb4,#a4a8af,#9b9fa6,#94989f,#94999f,#9a9ea5,#a3a7ad,#aaaeb4,#acb0b6,#a8acb3)"></i>
<i style="background:linear-gradient(90deg,#a6aab1,#aeb1b7,#b1b5bb,#b0b4ba,#a8acb2,#9b9fa6,#91959c,#888c93,#7b7f87,#70747c,#73777f,#7f848b,#8a8f96,#91959c,#94989f,#91969d,#8e9299,#8c9198,#91959c,#979ba2,#9ca0a7,#a0a4aa,#a2a6ad,#a5a9af,#a8acb3,#acb0b6,#b0b3b9,#b0b4ba,#acb0b6,#a4a8af,#9a9ea5,#93979e,#898d94,#7a7f86,#747980,#7f848b,#90949b,#9b9fa6,#a4a8af,#adb1b7,#b2b6bc,#b3b7bc,#b0b4ba,#adb1b7,#aaaeb4,#a9adb3,#a9adb3,#a7abb1,#a2a6ad,#9a9fa5,#91959c,#8e9299,#979ba2,#a3a7ad,#aaaeb4,#aaaeb4,#a7abb1,#a5a9b0,#a8acb2,#abafb5,#abafb5,#a8acb2,#a1a5ac,#9da1a8,#a1a5ac,#a9adb3,#aeb1b7,#adb1b7,#a6aab1,#9da1a8,#94989f,#92969d,#9a9ea5,#a2a6ad,#a7abb1,#aaaeb4,#abafb5,#aaaeb4,#a9adb3,#a9adb3,#acb0b6,#aeb2b8,#afb2b8,#adb1b7,#aaaeb4,#aaadb4,#abafb5,#aeb2b8,#acb0b6,#a6aab0,#9b9fa6,#93979e,#93979e,#999da4,#a1a6ac,#a9adb3,#aaaeb4,#a6aab0)"></i>
<i style="background:linear-gradient(90deg,#a8acb2,#afb3b9,#b2b6bc,#b0b4ba,#a6aab1,#989ca3,#8c9097,#82868d,#71767e,#62676f,#666b73,#767b82,#83878f,#8b8f96,#8e9299,#8c9198,#8a8e95,#8a8e95,#8f939a,#969aa1,#9ca0a6,#a0a4ab,#a4a8ae,#a7abb1,#abafb5,#afb2b8,#b2b5bb,#b2b6bc,#aeb1b7,#a4a8af,#999ea4,#91969c,#878c93,#7a7e86,#767b82,#82868e,#91959c,#9b9fa6,#a3a7ae,#acb0b6,#b2b6bb,#b4b7bd,#b2b6bc,#b0b3b9,#adb1b7,#acafb6,#a9adb4,#a6aab0,#9fa4aa,#989ca2,#8f939a,#8e9299,#989ca3,#a4a8ae,#abafb5,#abafb5,#a7abb2,#a5a9b0,#a7abb1,#aaaeb4,#aaaeb4,#a7abb2,#a1a5ac,#9fa3a9,#a3a7ae,#abafb5,#b0b3b9,#afb3b9,#a9adb3,#a1a5ab,#989ca3,#969aa1,#9ba0a6,#a3a7ad,#a7abb1,#aaaeb4,#abafb5,#abafb5,#acafb6,#adb1b7,#afb3b9,#b1b5ba,#b1b5bb,#b0b3b9,#aeb2b8,#adb1b7,#aeb2b8,#b0b4ba,#aeb2b8,#a7abb1,#9ca0a7,#93979e,#93989e,#999da4,#a1a5ac,#a8acb2,#a9adb3,#a3a7ae)"></i>
<i style="background:linear-gradient(90deg,#aaaeb4,#b0b4ba,#b3b7bd,#b0b4ba,#a6aab0,#959aa0,#888c93,#7c8088,#676c74,#525760,#565b64,#6b7078,#7b7f87,#848990,#888d94,#888c93,#868b92,#888c94,#8e939a,#969aa1,#9ca0a7,#a1a5ab,#a5a9af,#a9adb3,#adb0b6,#b0b4ba,#b3b7bd,#b4b7bd,#afb3b9,#a5a9b0,#9a9ea4,#91959c,#878b92,#7b8087,#7a7f86,#868a92,#93989e,#9ca0a6,#a3a7ad,#abafb5,#b1b5bb,#b4b8bd,#b4b7bd,#b2b6bc,#b0b4ba,#aeb2b8,#aaaeb4,#a4a8ae,#9ca1a7,#9599a0,#8d9299,#8f939a,#9a9ea5,#a6aab0,#acb0b6,#abafb5,#a7abb2,#a5a9af,#a5a9b0,#a7abb2,#a8acb2,#a6aab0,#a1a5ac,#a0a4aa,#a6aab0,#adb1b7,#b1b5bb,#b1b4ba,#abafb5,#a4a8ae,#9ca0a7,#999da4,#9da1a8,#a3a7ad,#a6aab1,#a9adb3,#abafb5,#acb0b6,#aeb2b8,#b0b3b9,#b1b5bb,#b3b7bc,#b3b7bd,#b2b6bc,#b1b4ba,#b0b4ba,#b1b5bb,#b2b6bc,#b0b4ba,#a9acb3,#9da1a8,#9499a0,#9599a0,#9a9ea5,#a1a6ac,#a7abb1,#a7abb1,#a0a4ab)"></i>
<i style="background:linear-gradient(90deg,#abafb5,#b1b5bb,#b4b7bd,#b0b4ba,#a5a9b0,#94989f,#848990,#767b82,#5d626a,#40454e,#444952,#60656d,#737880,#7e838a,#83878f,#84888f,#84888f,#878c93,#8f939a,#979ba2,#9da1a8,#a2a6ac,#a6aab0,#aaaeb4,#aeb2b8,#b2b5bb,#b5b9be,#b5b9be,#b0b4ba,#a7abb1,#9b9fa5,#92969d,#888c93,#7f838b,#80848c,#8b9097,#969ba1,#9da1a7,#a2a6ac,#a9adb4,#b0b4ba,#b4b8bd,#b5b8be,#b4b7bd,#b2b6bc,#afb3b9,#aaaeb4,#a2a6ad,#999da4,#92969d,#8d9198,#90959c,#9ca0a7,#a7abb1,#acb0b6,#abafb5,#a7abb1,#a3a7ad,#a2a6ad,#a4a8ae,#a6aab0,#a4a9af,#a1a5ac,#a1a5ac,#a8acb2,#afb3b9,#b3b7bd,#b2b6bc,#aeb1b7,#a7abb1,#9fa3aa,#9ba0a6,#9ea2a8,#a2a6ad,#a5a9af,#a7abb1,#aaadb4,#adb1b7,#b0b3b9,#b2b6bb,#b3b7bd,#b4b8be,#b5b8be,#b4b7bd,#b3b6bc,#b2b6bc,#b3b7bd,#b4b8bd,#b1b5bb,#aaadb4,#9fa3a9,#969ba1,#979ba2,#9ca0a7,#a3a7ad,#a7abb1,#a5a9b0,#9da2a8)"></i>
<i style="background:linear-gradient(90deg,#acafb6,#b2b6bb,#b4b8be,#b1b5ba,#a5a9b0,#93979e,#83878e,#73777f,#545962,#2c323c,#323741,#565b64,#6d727a,#797e85,#7f848b,#81858d,#83878e,#888c93,#90949b,#999da3,#9fa3a9,#a3a7ae,#a7abb1,#aaaeb4,#aeb2b8,#b2b6bc,#b6b9bf,#b6bac0,#b2b6bc,#a8acb3,#9ca1a7,#93979e,#8a8e95,#83878f,#868b92,#91959c,#9a9ea5,#9ea2a8,#a1a5ac,#a8acb2,#aeb2b8,#b3b7bd,#b5b9be,#b5b9be,#b4b8bd,#b1b4ba,#aaaeb4,#a0a4ab,#969aa1,#8f949b,#8d9198,#93979e,#9fa3a9,#a8acb3,#acb0b6,#abaeb5,#a5a9b0,#a1a5ab,#9ea2a9,#a0a4aa,#a2a6ac,#a2a6ad,#a0a5ab,#a2a6ad,#a9adb4,#b1b5ba,#b4b8be,#b3b7bd,#afb3b9,#a9adb3,#a2a6ac,#9da2a8,#9ea2a9,#a1a5ab,#a3a7ad,#a4a8af,#a8acb2,#acb0b6,#b1b4ba,#b3b7bd,#b5b8be,#b5b9bf,#b5b9bf,#b5b9be,#b4b8be,#b4b8be,#b5b8be,#b5b9be,#b2b6bb,#aaaeb4,#a0a4aa,#999da4,#9a9ea4,#9fa3a9,#a4a8ae,#a7abb1,#a4a8af,#9b9fa6)"></i>
<i style="background:linear-gradient(90deg,#acb0b6,#b2b6bc,#b5b8be,#b1b5bb,#a6aab0,#94989f,#83878e,#71767e,#50555d,#1d232f,#242a35,#51565f,#6a6f77,#777c83,#7d8289,#80848b,#83878e,#898e95,#92979d,#9b9fa6,#a1a5ab,#a5a9af,#a7abb1,#aaaeb4,#aeb2b8,#b2b6bc,#b6bac0,#b7bbc1,#b4b7bd,#aaaeb4,#9fa3a9,#959aa0,#8c9198,#888c93,#8d9198,#969aa1,#9da1a8,#9fa3aa,#a1a5ab,#a5a9b0,#acb0b6,#b2b5bb,#b5b8be,#b5b9bf,#b5b8be,#b1b5bb,#a9adb3,#9ea2a8,#93979e,#8e9299,#8e9299,#969aa1,#a2a6ac,#aaaeb4,#acb0b6,#a9adb3,#a4a8ae,#9da1a8,#999da4,#9a9ea5,#9da2a8,#a0a4aa,#a0a4aa,#a3a7ae,#abafb5,#b2b6bc,#b5b9bf,#b4b8be,#b0b4ba,#aaaeb4,#a4a8ae,#9fa3aa,#9ea2a9,#9fa4aa,#a0a4ab,#a1a5ac,#a6aab0,#acb0b6,#b1b5bb,#b4b8be,#b5b9bf,#b5b9bf,#b5b9bf,#b5b9bf,#b5b9bf,#b5b9bf,#b5b9bf,#b5b9be,#b2b5bb,#aaaeb4,#a1a5ab,#9b9fa6,#9ca1a7,#a1a5ac,#a6aab0,#a8acb2,#a4a8ae,#999da4)"></i>
<i style="background:linear-gradient(90deg,#acb0b6,#b2b6bc,#b5b9be,#b2b6bc,#a7abb2,#969aa1,#858990,#73777f,#50555e,#1b222d,#242a35,#525760,#6b7078,#787c84,#7e828a,#80858c,#848990,#8b9097,#9599a0,#9da2a8,#a3a7ad,#a6aab0,#a7abb1,#a9adb3,#adb1b7,#b2b6bc,#b6bac0,#b8bcc1,#b5b9be,#acb0b6,#a1a5ac,#989ca3,#8f949b,#8d9198,#92979e,#9b9fa6,#a0a4ab,#a0a5ab,#a0a4ab,#a3a7ad,#a9adb3,#b0b3b9,#b4b7bd,#b5b9be,#b5b9be,#b1b5bb,#a8acb2,#9ba0a6,#90949b,#8d9198,#90949b,#999ea4,#a4a8af,#abafb5,#acb0b6,#a8acb2,#a1a5ac,#999da4,#93979e,#93979e,#989da3,#9da1a8,#9fa3aa,#a4a8ae,#acb0b6,#b3b7bd,#b6b9bf,#b4b8be,#b0b4ba,#abafb5,#a5a9af,#a0a4aa,#9ea2a8,#9ea2a8,#9da2a8,#9ea2a9,#a3a7ad,#aaaeb5,#b1b5bb,#b5b8be,#b5b9bf,#b5b9be,#b5b8be,#b5b9be,#b5b9bf,#b5b9bf,#b5b9bf,#b5b8be,#b1b5bb,#aaadb4,#a1a5ac,#9da1a8,#9fa3aa,#a4a8ae,#a8acb2,#a9adb3,#a4a8ae,#989ca3)"></i>
<i style="background:linear-gradient(90deg,#abafb5,#b2b5bb,#b5b9bf,#b3b6bc,#a9adb3,#989da3,#888c94,#767b83,#555a63,#282e38,#313640,#595e66,#70747c,#7b8087,#81858d,#83878f,#868b92,#8e9299,#979ca2,#a0a4ab,#a5a9af,#a7abb1,#a7abb1,#a8acb2,#acb0b6,#b1b5bb,#b6babf,#b8bcc2,#b6babf,#aeb2b8,#a4a8ae,#9a9fa5,#93979e,#91969c,#989ca3,#9fa4aa,#a3a7ae,#a2a6ac,#9fa3aa,#a0a4ab,#a6aab0,#adb1b7,#b2b6bc,#b4b8be,#b4b8be,#b0b4ba,#a7abb1,#999da4,#8e9299,#8d9299,#93979e,#9da1a8,#a7abb2,#acb0b6,#abafb5,#a6aab1,#9fa3a9,#9599a0,#8c9097,#8b9097,#93979e,#9a9ea5,#9ea2a9,#a5a9af,#adb1b7,#b4b7bd,#b6b9bf,#b4b8bd,#b0b4ba,#abafb5,#a6aab0,#a0a5ab,#9da2a8,#9ca0a7,#9b9fa5,#9a9ea5,#a0a4aa,#a9adb3,#b0b4ba,#b4b8be,#b4b8be,#b4b7bd,#b3b7bd,#b4b8be,#b5b8be,#b5b9be,#b5b8be,#b3b7bd,#afb3b9,#a8acb2,#a2a6ac,#9fa3aa,#a2a6ac,#a6aab0,#a9adb4,#aaaeb4,#a4a8ae,#989da3)"></i>
<i style="background:linear-gradient(90deg,#aaaeb4,#b1b5bb,#b5b9be,#b3b7bd,#abafb5,#9ca0a6,#8c9198,#7c8088,#5e636b,#3a4049,#424851,#636870,#777b83,#81858d,#858a91,#868b92,#898e95,#90959c,#9a9ea5,#a2a6ad,#a7abb1,#a7abb2,#a6aab0,#a6aab0,#aaaeb4,#afb3b9,#b5b9be,#b8bcc2,#b7bac0,#b0b4ba,#a6aab0,#9da1a8,#959aa0,#9599a0,#9ca0a7,#a3a7ad,#a6aab0,#a3a7ad,#9ea2a9,#9da1a8,#a1a5ac,#a9adb3,#afb3b9,#b2b6bc,#b3b7bd,#afb3b9,#a5a9af,#979ba2,#8d9198,#8f939a,#969aa1,#a1a5ab,#aaaeb4,#aeb1b7,#abafb5,#a5a9af,#9ca0a7,#90949b,#84888f,#83878e,#8d9299,#989ca3,#9ea2a9,#a6aab0,#aeb2b8,#b4b8bd,#b5b9bf,#b3b7bc,#afb3b9,#abafb5,#a5a9b0,#a1a5ab,#9da1a8,#9b9fa6,#989ca3,#979ba2,#9da1a8,#a7abb1,#afb3b9,#b3b7bd,#b3b7bc,#b2b5bb,#b1b5bb,#b2b6bc,#b4b7bd,#b4b8bd,#b3b7bd,#b1b5bb,#adb1b7,#a6aab1,#a1a5ac,#a0a4ab,#a4a8ae,#a8acb2,#abafb5,#abafb5,#a5a9af,#999ea4)"></i>
<i style="background:linear-gradient(90deg,#a9adb3,#b0b4ba,#b5b8be,#b4b8be,#acb0b6,#9fa3aa,#91959c,#81868d,#676c74,#4c515a,#545961,#6e737b,#7f838b,#878c93,#8b8f96,#8a8f96,#8c9198,#93979e,#9ca0a7,#a4a8af,#a8acb3,#a8acb2,#a5a9af,#a4a8ae,#a7abb1,#aeb1b7,#b4b8bd,#b8bcc1,#b7bbc1,#b1b5bb,#a8acb2,#9fa3a9,#989ca3,#989ca3,#9fa3aa,#a6aab0,#a7abb2,#a3a7ae,#9da1a8,#999ea4,#9da1a7,#a5a9af,#acb0b6,#b0b4ba,#b1b5bb,#adb1b7,#a3a7ae,#959aa0,#8d9198,#90959c,#999ea4,#a4a8af,#acb0b6,#afb2b8,#abafb5,#a3a7ad,#9a9ea5,#8c9097,#7c8088,#7a7f86,#888c94,#969aa1,#9ea2a8,#a6aab1,#afb3b9,#b4b8bd,#b4b8be,#b1b5bb,#aeb1b8,#a9adb4,#a5a9af,#a1a5ab,#9da1a8,#9a9ea5,#969ba1,#9499a0,#9a9ea5,#a5a9af,#adb1b7,#b1b5bb,#b1b5ba,#afb3b9,#afb2b8,#b0b4ba,#b2b5bb,#b2b6bc,#b1b5bb,#afb3b9,#aaaeb4,#a4a8ae,#a0a4ab,#a1a5ab,#a5a9af,#a9adb3,#acb0b6,#acafb6,#a6aab0,#9b9fa6)"></i>
<i style="background:linear-gradient(90deg,#a7abb1,#afb3b9,#b4b8be,#b5b8be,#aeb2b8,#a2a6ad,#9599a0,#878b92,#70757c,#5b6068,#636770,#787d85,#878b92,#8e9299,#90949b,#8f939a,#8f939a,#94999f,#9da1a8,#a5a9b0,#a9adb3,#a8acb2,#a4a8ae,#a1a5ac,#a4a8af,#abafb5,#b2b6bc,#b7bbc1,#b8bbc1,#b2b6bc,#a9adb3,#a0a4ab,#999da4,#9a9ea5,#a1a5ac,#a7abb2,#a8acb3,#a4a8ae,#9ca0a7,#969aa1,#979ca2,#a0a4ab,#a9adb3,#adb1b7,#afb3b9,#abafb5,#a1a5ac,#94989f,#8d9198,#93979e,#9ca1a7,#a7abb1,#afb2b8,#b0b4ba,#abafb5,#a2a6ac,#989ca3,#888c93,#757981,#72777f,#848890,#94989f,#9ea2a8,#a7abb1,#afb3b9,#b4b7bd,#b3b7bd,#afb3b9,#acafb6,#a8acb2,#a4a8ae,#a0a4ab,#9da1a8,#9a9ea5,#969aa1,#93979e,#989da3,#a3a7ad,#abafb5,#afb3b9,#aeb2b8,#acb0b6,#abafb5,#adb1b7,#afb3b9,#b0b4ba,#afb2b8,#acb0b6,#a7abb1,#a1a5ab,#9ea2a9,#a1a5ab,#a5a9b0,#a9adb3,#acb0b6,#acb0b6,#a7abb2,#9ea2a8)"></i>
<i style="background:linear-gradient(90deg,#a5a9b0,#adb1b7,#b4b7bd,#b5b9be,#b0b3b9,#a5a9af,#999da4,#8c9097,#787c84,#676c74,#6f737b,#81868d,#8e9299,#94989f,#9599a0,#92979e,#91959c,#959aa0,#9ea2a8,#a6aab0,#aaaeb4,#a8acb2,#a2a6ac,#9ea2a9,#a1a6ac,#a9adb3,#b1b5bb,#b7bac0,#b7bbc1,#b2b6bc,#aaaeb4,#a1a5ab,#9a9ea5,#9b9fa6,#a2a6ad,#a8acb3,#a9adb3,#a3a7ae,#9b9fa5,#92969d,#92969d,#9b9fa6,#a5a9af,#aaaeb4,#acb0b6,#a9adb3,#9fa3aa,#93979e,#8e9299,#9599a0,#9fa3aa,#aaaeb4,#b1b4ba,#b1b5bb,#abafb5,#a1a5ac,#979ba2,#868a91,#6f747c,#6d7279,#81868d,#94989f,#9ea2a9,#a8acb2,#b0b4b9,#b3b7bd,#b1b5bb,#adb1b7,#a9adb3,#a5a9b0,#a2a6ad,#a0a4ab,#9ea2a9,#9b9fa6,#969ba1,#93979e,#979ca2,#a1a5ac,#a9adb3,#adb0b7,#abafb5,#a8acb2,#a8acb2,#aaaeb4,#adb0b6,#adb1b7,#acb0b6,#a8acb2,#a3a7ad,#9da1a8,#9ca0a7,#a0a4aa,#a5a9af,#a9adb3,#acb0b6,#adb1b7,#a9adb3,#a0a4ab)"></i>
<i style="background:linear-gradient(90deg,#a4a8ae,#acb0b6,#b3b7bd,#b5b9bf,#b1b5bb,#a7abb1,#9ca0a7,#90949b,#7e828a,#71767d,#787d84,#898d94,#93989f,#999da4,#999ea4,#969aa1,#93979e,#959aa1,#9ea2a8,#a6aab0,#aaaeb4,#a7abb1,#a0a4ab,#9ca0a6,#9fa3a9,#a7abb1,#afb3b9,#b6babf,#b7bbc0,#b2b6bc,#aaaeb4,#a1a5ab,#9a9ea5,#9ba0a6,#a3a7ad,#a9adb3,#a9adb3,#a3a7ad,#999da4,#8e939a,#8c9198,#969aa1,#a1a5ab,#a7abb1,#a9adb4,#a6aab1,#9da1a8,#93979e,#90949b,#979ca2,#a2a6ac,#acb0b6,#b2b6bc,#b2b6bb,#abafb5,#a1a6ac,#979ba2,#858991,#6e727a,#6b6f77,#81858d,#94989f,#9fa3aa,#a9adb3,#b0b4ba,#b2b6bc,#b0b4ba,#abafb5,#a6aab1,#a3a7ad,#a0a5ab,#a0a4aa,#9fa3aa,#9da1a7,#989ca3,#94989f,#979ca2,#a0a4aa,#a7abb1,#aaaeb4,#a8acb2,#a5a9af,#a4a8ae,#a7abb1,#aaaeb4,#abafb5,#a9adb3,#a5a9af,#9fa3a9,#999da4,#999da4,#9ea2a9,#a4a8ae,#a8acb2,#abafb5,#adb1b7,#aaaeb4,#a3a7ad)"></i>
<i style="background:linear-gradient(90deg,#a2a6ac,#abafb5,#b3b6bc,#b5b9bf,#b2b6bb,#a9adb3,#9ea3a9,#93979e,#83878f,#787d84,#80848b,#8e939a,#989ca3,#9da1a8,#9da1a8,#989ca3,#93989f,#9599a0,#9da1a8,#a6aab0,#a9adb3,#a6aab0,#9fa3a9,#999da4,#9ca0a7,#a5a9af,#aeb2b8,#b5b9be,#b6bac0,#b2b6bb,#a9adb3,#a0a4ab,#999da4,#9b9fa5,#a2a6ad,#a8acb2,#a8acb2,#a2a6ac,#979ba2,#8b8f96,#878c93,#91959c,#9da1a7,#a3a8ae,#a7aab1,#a4a8ae,#9ba0a6,#93979e,#91969d,#999ea4,#a4a8ae,#adb1b7,#b3b7bd,#b3b7bc,#acb0b6,#a2a6ad,#989ca3,#868a92,#6f737b,#6c7179,#82868e,#959aa0,#a0a5ab,#aaaeb4,#b0b4ba,#b2b5bb,#aeb2b8,#a8acb2,#a3a7ae,#a0a4aa,#9fa3a9,#a0a4aa,#a0a5ab,#9fa3aa,#9b9fa6,#979ba2,#999da4,#9fa3aa,#a5a9af,#a7abb1,#a5a9af,#a1a5ac,#a0a5ab,#a3a7ae,#a7abb1,#a8acb2,#a6aab0,#a1a5ac,#9b9fa5,#9599a0,#959aa0,#9b9fa6,#a1a6ac,#a6aab0,#aaaeb4,#acb0b6,#abafb5,#a5a9af)"></i>
<i style="background:linear-gradient(90deg,#a0a4ab,#aaaeb4,#b2b6bc,#b5b9bf,#b2b6bc,#aaaeb4,#a0a4ab,#9599a0,#878b92,#7e828a,#858a91,#93979e,#9ca0a7,#a0a5ab,#a0a4aa,#9a9ea5,#94989f,#94989f,#9ba0a6,#a4a8af,#a8acb2,#a5a9af,#9da1a8,#979ba2,#9a9ea5,#a3a7ae,#adb1b7,#b4b8bd,#b6b9bf,#b1b5bb,#a8acb2,#9fa3a9,#979ca2,#999da4,#a1a5ab,#a7abb1,#a7abb1,#a0a4ab,#9599a0,#888c93,#83878e,#8c9198,#999da4,#a0a4ab,#a4a8ae,#a1a5ac,#9a9ea5,#93979e,#93979e,#9ba0a6,#a5a9af,#afb2b8,#b4b8be,#b4b7bd,#adb1b7,#a3a8ae,#999da4,#888d94,#72777f,#70747c,#848990,#979ba2,#a2a6ac,#abaeb5,#b0b4ba,#b1b5ba,#acb0b6,#a5a9b0,#a0a4ab,#9da1a7,#9da1a8,#a0a4aa,#a2a6ad,#a2a6ac,#9ea2a9,#9a9ea5,#9a9fa5,#9fa3aa,#a3a8ae,#a5a9af,#a2a6ac,#9ea2a8,#9da1a8,#a0a4ab,#a4a8ae,#a5a9af,#a3a7ad,#9ea2a8,#979ba2,#91959c,#91959c,#989ca3,#9fa3a9,#a3a7ae,#a8acb2,#acb0b6,#abafb5,#a7abb1)"></i>
<i style="background:linear-gradient(90deg,#9fa3a9,#a8acb3,#b1b5bb,#b5b9bf,#b3b7bc,#abafb5,#a2a6ac,#979ba2,#8a8e95,#82878e,#8a8e95,#979ba2,#9fa3aa,#a3a7ae,#a2a6ad,#9ba0a6,#94989f,#92979d,#9a9ea5,#a3a7ad,#a7abb1,#a3a7ae,#9b9fa6,#9599a0,#989da3,#a2a6ac,#acb0b6,#b3b7bd,#b5b8be,#b0b4ba,#a7abb1,#9da1a8,#959aa0,#979ba2,#9fa3aa,#a6aab0,#a6aab0,#9fa3a9,#93979e,#848990,#7e828a,#888c93,#9599a0,#9da1a8,#a1a5ab,#9fa3aa,#999da4,#93979e,#9599a0,#9da1a8,#a6aab1,#b0b3b9,#b5b9bf,#b5b8be,#aeb2b8,#a5a9af,#9b9fa6,#8b8f96,#767b83,#747980,#878c93,#999da4,#a3a7ae,#acafb5,#b0b4ba,#b0b4ba,#aaaeb5,#a3a7ad,#9da1a8,#9a9ea4,#9b9fa6,#a0a4aa,#a4a8ae,#a4a8af,#a1a5ac,#9da1a8,#9da1a7,#9fa3aa,#a2a6ac,#a2a6ad,#9fa3a9,#9a9ea5,#999ea4,#9da1a8,#a1a5ab,#a2a6ad,#9fa4aa,#9a9ea5,#92979e,#8c9097,#8d9198,#94989f,#9b9fa6,#a0a4ab,#a6aab0,#abafb5,#acb0b6,#a9adb3)"></i>
<i style="background:linear-gradient(90deg,#9da1a8,#a7abb2,#b1b4ba,#b5b9bf,#b3b7bd,#acb0b6,#a3a8ae,#999ea4,#8d9198,#878b92,#8e939a,#9a9fa5,#a2a6ad,#a6aab0,#a4a8af,#9da1a8,#94989f,#91959c,#989ca3,#a2a6ac,#a5a9b0,#a2a6ac,#999da4,#93979e,#969aa1,#a0a4ab,#aaaeb4,#b2b6bc,#b4b7bd,#afb3b9,#a6aab0,#9ca0a6,#94989f,#969aa1,#9ea2a9,#a4a8af,#a4a8af,#9da1a8,#91959c,#81858d,#797e85,#82878e,#91959c,#999da4,#9da2a8,#9ca1a7,#979ca2,#94989f,#969ba2,#9fa3aa,#a8acb2,#b1b4ba,#b6babf,#b5b9bf,#afb3b9,#a6aab0,#9da1a7,#8d9299,#7a7f86,#787d84,#8a8e95,#9b9fa5,#a4a8af,#acb0b6,#b0b4ba,#afb3b9,#a9acb3,#a0a4aa,#999ea4,#969aa1,#999da4,#a0a4aa,#a5a9b0,#a7abb1,#a4a8ae,#a0a4aa,#9ea2a9,#9fa3aa,#a0a4ab,#9fa3aa,#9b9fa6,#969aa1,#959aa0,#999da4,#9ea2a8,#9fa3aa,#9ca1a7,#979ba2,#8e939a,#878c93,#888c94,#90949b,#989ca3,#9da1a8,#a4a8ae,#aaaeb4,#acb0b6,#abafb5)"></i>
<i style="background:linear-gradient(90deg,#9ca0a7,#a6aab0,#b0b4ba,#b5b9be,#b4b8bd,#aeb1b7,#a5a9b0,#9ca0a7,#91959c,#8b9097,#92969d,#9da1a8,#a4a8af,#a8acb2,#a6aab0,#9ea2a9,#94989f,#90949b,#979ba2,#a1a5ab,#a4a8af,#a1a5ab,#989ca2,#90959c,#94989f,#9ea2a8,#a8acb2,#b0b4ba,#b2b6bc,#aeb2b8,#a5a9af,#9b9fa6,#93979e,#9599a0,#9da1a8,#a3a7ae,#a3a7ae,#9ca0a7,#90949b,#7f838a,#747980,#7c8188,#8b9097,#9599a0,#999ea4,#999ea4,#969aa1,#9599a0,#999da4,#a1a5ab,#a9adb3,#b1b5bb,#b6bac0,#b6b9bf,#b0b3b9,#a7abb1,#9ea2a9,#90949b,#7e838a,#7c8088,#8c9097,#9ca0a6,#a5a9af,#acb0b6,#b0b4ba,#aeb2b8,#a6aab1,#9ca0a7,#9599a0,#92969d,#969ba1,#9fa3aa,#a6aab1,#a8acb3,#a6aab0,#a2a6ac,#9fa4aa,#9fa3a9,#9ea2a8,#9ba0a6,#979ba2,#91959c,#90959c,#9599a0,#9a9fa5,#9ca1a7,#9a9ea5,#94989f,#8b9097,#84888f,#848990,#8c9198,#9599a0,#9a9fa5,#a2a6ac,#a9adb3,#adb1b7,#acb0b6)"></i>
<i style="background:linear-gradient(90deg,#9b9fa6,#a5a9af,#afb3b9,#b5b8be,#b4b8be,#afb3b9,#a8acb2,#9fa4aa,#9599a0,#90949b,#9599a0,#9fa3a9,#a6aab0,#a9adb3,#a7abb1,#9ea3a9,#94989f,#8f939a,#969aa1,#a0a4aa,#a4a8ae,#a0a4aa,#969aa1,#8e9299,#90949b,#9b9fa5,#a6aab0,#aeb2b8,#b1b5bb,#adb1b7,#a4a8af,#9b9fa6,#93989e,#9599a0,#9ca0a7,#a2a6ad,#a2a6ad,#9b9fa6,#8f949b,#7e828a,#70757d,#767a82,#858990,#8f939a,#9599a0,#969aa1,#959aa0,#969ba1,#9ba0a6,#a3a7ad,#aaaeb4,#b2b6bc,#b6bac0,#b5b9bf,#afb3b9,#a7abb1,#9fa3aa,#92969d,#82878e,#7f848b,#8e9299,#9ca0a7,#a5a9af,#acb0b6,#afb3b9,#acb0b6,#a4a8ae,#989da3,#91959c,#8d9198,#93979e,#9ea2a9,#a7abb1,#a9adb4,#a7abb1,#a3a7ad,#a0a4aa,#9da1a8,#9b9fa5,#979ba2,#91959c,#8b8f96,#8b8f96,#90959c,#979ca2,#9a9fa5,#989ca3,#92979e,#8a8e96,#82878e,#83878f,#8a8f96,#92969d,#989ca3,#a0a4aa,#a8acb2,#adb1b7,#adb1b7)"></i>
<i style="background:linear-gradient(90deg,#9b9fa6,#a4a8af,#aeb2b8,#b4b8be,#b5b8be,#b0b4ba,#aaaeb4,#a3a7ad,#9a9ea5,#94989f,#979ba2,#a0a4aa,#a6aab0,#a9adb3,#a7abb1,#9fa3a9,#94989f,#8f939a,#969aa1,#a0a4aa,#a4a8ae,#9fa3aa,#9599a0,#8b8f96,#8c9198,#979ba2,#a2a6ad,#acafb6,#afb3b9,#acb0b6,#a4a8af,#9ca0a7,#9599a0,#969aa1,#9ca0a7,#a1a5ac,#a1a5ac,#9b9fa6,#90949b,#7e838a,#6e737b,#6f747c,#7d8289,#888d94,#8f939a,#93979e,#9599a0,#999da3,#9ea2a9,#a5a9af,#acafb6,#b2b6bc,#b6b9bf,#b4b8be,#afb3b9,#a7abb1,#a0a4aa,#94989f,#868b92,#83888f,#8f939a,#9ca0a6,#a4a8ae,#abaeb5,#adb1b7,#aaaeb4,#a1a5ab,#9599a0,#8c9097,#878c93,#8f949a,#9ca1a7,#a6aab0,#aaaeb4,#a7abb1,#a3a7ae,#9fa3aa,#9b9fa6,#979ba2,#92969d,#8b8f96,#84888f,#84888f,#8c9097,#9499a0,#999da4,#979ca2,#92979d,#8b8f96,#848990,#848890,#8a8e96,#91959c,#969aa1,#9ea2a8,#a7abb1,#adb1b7,#aeb2b8)"></i>
<i style="background:linear-gradient(90deg,#9b9fa6,#a3a7ae,#adb1b7,#b3b7bd,#b4b8be,#b1b5bb,#acb0b6,#a6aab1,#9ea2a9,#989ca3,#999da4,#a0a4aa,#a5a9b0,#a9adb3,#a7abb1,#9ea3a9,#94989f,#8f939a,#969aa1,#a0a4ab,#a4a8ae,#a0a4aa,#94999f,#888d94,#888c94,#92969d,#9ea2a9,#a8acb2,#adb1b7,#abafb5,#a5a9af,#9da2a8,#979ca2,#979ca2,#9ca0a7,#a1a5ab,#a1a5ab,#9b9fa6,#92969d,#81868d,#6e737b,#696e76,#757981,#81858c,#898e95,#8f949b,#9599a0,#9b9fa6,#a1a5ac,#a7abb1,#acb0b6,#b2b5bb,#b4b8be,#b3b6bc,#adb1b7,#a6aab1,#a0a4ab,#969aa1,#8a8f96,#878b93,#90949b,#9b9fa6,#a3a7ad,#a9adb3,#abafb5,#a8acb2,#9ea2a9,#91959c,#878b92,#82868d,#8b8f96,#9a9ea5,#a5a9af,#a9adb3,#a7abb1,#a3a7ad,#9ea2a9,#999da4,#93979e,#8c9097,#84888f,#7b8087,#7c8188,#878b92,#92969d,#989ca3,#989ca3,#94989f,#8d9299,#888d94,#878c93,#8c9097,#90959c,#94989f,#9ca0a7,#a6aab0,#acb0b6,#aeb2b8)"></i>
<i style="background:linear-gradient(90deg,#9ca0a7,#a3a7ad,#abafb5,#b2b6bb,#b4b8bd,#b2b6bc,#aeb2b8,#a9adb3,#a2a6ac,#9b9fa6,#9a9ea5,#9fa3aa,#a4a8af,#a8acb2,#a6aab0,#9ea2a9,#94989f,#90949b,#979ba2,#a1a5ab,#a5a9af,#a0a4ab,#9599a0,#878b92,#848990,#8d9299,#999da4,#a4a8af,#aaaeb4,#aaaeb4,#a5a9b0,#a0a4aa,#9b9fa5,#9a9ea5,#9da1a8,#a0a4ab,#a0a4ab,#9ca0a7,#9499a0,#858a91,#71767e,#666a72,#6c7179,#797e85,#83888f,#8d9198,#969aa1,#9ea2a9,#a4a8af,#a9adb3,#adb1b7,#b1b4ba,#b2b6bc,#b0b4ba,#abafb5,#a5a9af,#a0a4ab,#989ca3,#8f939a,#8b8f96,#91959c,#9a9ea5,#a0a4ab,#a6aab0,#a8acb3,#a5a9b0,#9ba0a6,#8e9299,#82878e,#7c8188,#868b92,#979ca2,#a4a8ae,#a8acb2,#a6aab0,#a1a5ac,#9ca0a7,#969aa1,#8f939a,#868b92,#7d8189,#73777f,#747980,#82878e,#90959c,#989da3,#999da4,#969aa1,#92969d,#8e9299,#8d9198,#8f939a,#91969d,#94989f,#9b9fa6,#a5a9af,#acb0b6,#aeb2b8)"></i>
<i style="background:linear-gradient(90deg,#9da1a8,#a2a6ac,#a9adb3,#b0b4ba,#b3b7bd,#b3b6bc,#b0b4ba,#acb0b6,#a5a9b0,#9ea2a9,#9b9fa6,#9ea2a8,#a2a6ad,#a6aab0,#a4a8af,#9da1a8,#94989f,#91959c,#989ca3,#a2a6ac,#a6aab0,#a2a6ac,#969aa1,#868b92,#81858d,#898d94,#94989f,#a0a4aa,#a7abb1,#a9adb3,#a6aab1,#a2a6ac,#9ea2a9,#9da1a7,#9ea2a8,#a0a4aa,#a0a4aa,#9da1a8,#989ca3,#8b8f96,#767b83,#656a72,#666b73,#72777f,#7e838a,#8c9097,#989ca3,#a1a5ac,#a7abb1,#aaaeb4,#adb1b7,#afb3b9,#afb3b9,#adb0b7,#a8acb2,#a3a7ae,#a0a4ab,#9a9ea5,#93979e,#8f939a,#92969d,#989ca3,#9ea2a8,#a3a7ad,#a5a9b0,#a3a7ad,#999ea4,#8c9097,#7f848b,#777c84,#82868e,#94999f,#a1a5ac,#a6aab0,#a4a8ae,#9fa3aa,#9a9ea5,#93979e,#8b8f96,#81868d,#767b83,#6b7078,#6d727a,#7e838a,#8f949b,#999da4,#9b9fa6,#999da4,#979ba2,#9599a0,#93989e,#93979e,#94989f,#94989f,#9a9ea5,#a3a7ae,#abafb5,#aeb1b7)"></i>
<i style="background:linear-gradient(90deg,#9ea3a9,#a1a5ac,#a7abb1,#aeb1b7,#b2b5bb,#b2b6bc,#b1b5ba,#aeb2b8,#a8acb2,#a0a4ab,#9b9fa6,#9ca0a6,#a0a4ab,#a4a8ae,#a3a7ad,#9ca0a6,#94989f,#92969d,#999ea4,#a3a7ad,#a7abb1,#a4a8ae,#989ca3,#888c93,#7f848b,#858990,#8f939a,#9b9fa6,#a4a8ae,#a8acb2,#a7abb1,#a4a8af,#a1a5ac,#9fa3aa,#9fa3a9,#9fa3aa,#9fa4aa,#9ea3a9,#9b9fa6,#90959c,#7d8289,#686d75,#62676f,#6e727a,#7c8088,#8c9097,#9a9fa5,#a4a8af,#a9adb3,#abafb5,#acb0b6,#adb1b7,#abafb5,#a8acb2,#a4a8af,#a1a5ac,#a0a4aa,#9ca0a7,#979ba2,#93979e,#93979e,#979ba2,#9b9fa6,#9fa3aa,#a2a6ad,#a0a4ab,#989ca3,#8b9097,#7e828a,#747981,#7e838a,#91959c,#9fa3a9,#a4a8ae,#a1a6ac,#9da1a7,#979ba2,#90949b,#888c93,#7e828a,#72777f,#666b73,#686d75,#7c8088,#8f949a,#9a9fa5,#9ea2a8,#9da1a8,#9ca0a7,#9b9fa6,#9a9ea5,#989ca3,#969ba1,#9599a0,#999da4,#a2a6ad,#aaaeb4,#adb1b7)"></i>
<i style="background:linear-gradient(90deg,#a0a4aa,#a0a4ab,#a5a9af,#abafb5,#b0b3b9,#b2b5bb,#b1b5bb,#afb3b9,#aaaeb4,#a2a6ac,#9b9fa6,#999ea4,#9da1a8,#a1a5ac,#a0a5ab,#9a9ea5,#94989f,#93989f,#9b9fa6,#a4a8af,#a9acb3,#a6aab0,#9b9fa5,#8a8e96,#7f848b,#82868e,#8a8e96,#969ba1,#a1a5ab,#a6aab1,#a8acb2,#a6aab1,#a4a8af,#a2a6ac,#a0a4aa,#9fa3aa,#9fa3aa,#a0a4aa,#9ea3a9,#969aa1,#848990,#6e737b,#636870,#6d7279,#7b8087,#8e9299,#9da1a8,#a7abb1,#abafb5,#acb0b6,#acafb6,#aaaeb4,#a6aab1,#a3a7ad,#a0a4aa,#9fa3aa,#9fa3aa,#9ea2a9,#9b9fa6,#979ba2,#9599a0,#959aa0,#989ca3,#9ba0a6,#9fa3aa,#9ea2a9,#989ca3,#8c9198,#7f838b,#747880,#7c8088,#8e939a,#9ca0a7,#a1a5ac,#9fa3a9,#9a9ea5,#94989f,#8e9299,#868a92,#7d8189,#71767e,#646971,#676b73,#7b8087,#90949b,#9ca0a7,#a0a4ab,#a0a4ab,#a1a5ac,#a1a5ac,#a0a4ab,#9da1a8,#9a9ea5,#979ba2,#999da4,#a1a5ac,#a9adb3,#acafb6)"></i>
<i style="background:linear-gradient(90deg,#a1a5ac,#a0a4aa,#a2a6ac,#a7abb1,#adb1b7,#b0b4ba,#b1b5bb,#b0b4ba,#abafb5,#a3a7ad,#9a9fa5,#979ba2,#9a9ea5,#9fa3a9,#9ea2a9,#999da4,#94989f,#9599a0,#9ca1a7,#a5a9b0,#aaaeb4,#a8acb2,#9ea2a8,#8e9299,#81868d,#81858d,#868b92,#92969d,#9da2a8,#a5a9af,#a8acb2,#a8acb2,#a7abb1,#a4a8ae,#a0a4ab,#9ea3a9,#9fa3aa,#a1a5ac,#a2a6ac,#9b9fa6,#8b9097,#767a82,#686d75,#70747c,#7e828a,#91959c,#a0a4ab,#a9adb4,#adb1b7,#acb0b6,#aaaeb4,#a6aab1,#a1a5ab,#9ca0a7,#9b9fa6,#9da1a7,#9fa3aa,#a0a4ab,#9ea3a9,#9b9fa6,#969ba1,#94999f,#9599a0,#989ca3,#9ca0a7,#9da1a8,#999da3,#8f939a,#81868d,#757a82,#7b8087,#8c9097,#9a9ea5,#9fa3a9,#9ca0a7,#979ba2,#91969d,#8c9097,#868b92,#7f838a,#747980,#686c74,#696d75,#7c8088,#90959c,#9da2a8,#a2a6ad,#a4a8ae,#a5a9b0,#a7abb1,#a5a9b0,#a2a6ac,#9da1a8,#999da3,#999da4,#a0a4ab,#a7abb1,#aaaeb4)"></i>
<i style="background:linear-gradient(90deg,#a2a6ad,#9fa3a9,#9fa3a9,#a3a7ae,#aaaeb4,#afb2b8,#b0b4ba,#b0b4ba,#acb0b6,#a3a8ae,#9a9ea5,#9599a0,#979ca2,#9ca0a7,#9ca0a7,#989ca3,#94989f,#969aa1,#9ea2a8,#a6aab1,#abafb5,#aaaeb4,#a1a5ac,#92969d,#858991,#82878e,#858990,#8e939a,#9a9ea5,#a3a7ae,#a8acb2,#a9adb3,#a9adb3,#a5a9b0,#a1a5ab,#9ea2a8,#9fa3a9,#a2a6ad,#a4a8af,#9fa4aa,#92969d,#7e838a,#70757c,#757a82,#82878e,#9499a0,#a3a7ae,#acafb6,#aeb2b8,#acb0b6,#a8acb3,#a2a6ad,#9a9ea5,#9499a0,#969aa1,#9a9ea5,#9fa3a9,#a2a6ac,#a2a6ac,#9ea2a9,#999da3,#94989f,#93979e,#9599a0,#9a9ea5,#9da1a7,#9a9ea5,#92969d,#858a91,#797e85,#7c8088,#8b8f96,#989ca2,#9ca1a7,#999ea4,#94989f,#8f949b,#8c9097,#888c94,#82878e,#797e85,#6e737b,#6d727a,#7e828a,#92969d,#9fa3a9,#a4a8af,#a6aab0,#a9adb3,#abafb5,#aaaeb4,#a6aab0,#a0a4ab,#9a9fa5,#999ea4,#9fa3aa,#a6aab0,#a9adb3)"></i>
<i style="background:linear-gradient(90deg,#a3a7ad,#9ea2a8,#9b9fa6,#9fa3a9,#a6aab0,#acb0b6,#afb3b9,#afb3b9,#acb0b6,#a4a8ae,#999da4,#93979e,#959aa0,#9a9fa5,#9b9fa6,#979ba2,#94989f,#969ba1,#9fa3a9,#a7abb1,#acb0b6,#acb0b6,#a4a8af,#979ba2,#8a8e95,#858991,#848990,#8b9097,#979ba2,#a2a6ac,#a8acb2,#aaaeb4,#aaaeb4,#a6aab0,#a1a5ab,#9da1a8,#9ea2a9,#a3a7ad,#a6aab1,#a3a7ae,#989ca3,#868b92,#797d85,#7d8189,#888d94,#999da4,#a6aab1,#adb1b7,#aeb2b8,#abafb5,#a6aab0,#9da1a8,#92969d,#8c9198,#90959c,#989ca3,#9fa3a9,#a3a8ae,#a5a9af,#a2a6ac,#9b9fa6,#9499a0,#91969d,#93979e,#989da3,#9da1a8,#9ca1a7,#969aa1,#8a8e95,#7e828a,#7e838a,#8a8f96,#969aa1,#9b9fa5,#979ba2,#92969d,#8e9299,#8d9198,#8b9097,#888c93,#80858c,#767b82,#747980,#81858d,#93979e,#a0a4aa,#a5a9b0,#a8acb2,#acb0b6,#aeb2b8,#aeb2b8,#a9adb3,#a3a7ad,#9ca0a7,#9a9ea5,#9ea3a9,#a5a9af,#a7abb2)"></i>
<i style="background:linear-gradient(90deg,#a4a8ae,#9da1a7,#989ca3,#999ea4,#a1a5ac,#a9adb3,#adb1b7,#aeb2b8,#abafb5,#a3a7ae,#999da4,#92969d,#94989f,#999da4,#9a9ea5,#969ba1,#94989f,#979ba2,#9fa3aa,#a8acb2,#adb1b7,#aeb1b7,#a7abb2,#9b9fa6,#8f939a,#898d94,#868a92,#8a8e95,#9599a0,#a0a4aa,#a7abb1,#aaaeb4,#aaaeb4,#a6aab1,#a0a4ab,#9ca0a7,#9ea2a8,#a4a8ae,#a8acb2,#a6aab0,#9da1a7,#8d9299,#81868d,#848990,#8e939a,#9da1a8,#a9adb3,#afb3b9,#aeb2b8,#aaaeb4,#a4a8ae,#989da3,#8a8f96,#848990,#8c9097,#979ba2,#9fa3a9,#a5a9af,#a8acb2,#a5a9af,#9da2a8,#969aa1,#91969c,#92969d,#989ca3,#9ea2a9,#9fa3aa,#9a9ea5,#8f939a,#83878f,#81868d,#8b8f97,#959aa1,#9a9ea4,#969aa1,#90959c,#8e9299,#8f939a,#8f949b,#8d9299,#878c93,#7f838b,#7b8087,#848890,#94989f,#a0a4ab,#a6aab0,#a9adb3,#aeb2b8,#b1b5bb,#b0b4ba,#acb0b6,#a5a9af,#9da1a8,#9a9ea5,#9ea2a8,#a4a8ae,#a6aab1)"></i>
<i style="background:linear-gradient(90deg,#a4a8ae,#9b9fa6,#94989f,#94989f,#9da1a7,#a6aab0,#abaeb5,#adb0b7,#aaaeb4,#a3a7ad,#999da4,#92969d,#94989f,#999da4,#9a9ea5,#969aa1,#94989f,#979ba2,#9fa3aa,#a8acb2,#aeb2b8,#afb3b9,#aaaeb4,#9fa3aa,#94989f,#8d9299,#898d94,#8a8e95,#92979e,#9da2a8,#a5a9b0,#a9adb3,#aaaeb4,#a6aab0,#9fa3aa,#9b9fa5,#9da1a7,#a4a8ae,#a9adb3,#a8acb2,#a0a4ab,#93989e,#898e95,#8c9097,#94999f,#a1a5ac,#abafb5,#b0b3b9,#aeb2b8,#a9adb3,#a1a5ac,#93989f,#82878e,#7d8189,#888d94,#969aa1,#9fa3aa,#a7abb1,#aaaeb4,#a8acb2,#a0a4ab,#989ca3,#92979d,#92969d,#999da4,#a0a4aa,#a2a6ac,#9da1a8,#93979e,#888c93,#858a91,#8d9198,#969aa1,#9a9ea4,#969aa1,#91959c,#8f939a,#91969d,#94989f,#93979e,#8e9299,#868b92,#82868e,#878b93,#94989f,#a0a4aa,#a6aab0,#aaaeb4,#afb2b8,#b2b6bc,#b2b6bc,#adb1b7,#a6aab0,#9ea2a9,#9a9ea5,#9da1a8,#a3a7ad,#a6aab0)"></i>
<i style="background:linear-gradient(90deg,#a3a7ae,#9a9ea5,#90959c,#8f939a,#989ca3,#a2a6ad,#a8acb2,#aaaeb5,#a9adb3,#a2a6ad,#999da4,#93979e,#9599a0,#9a9ea5,#9b9fa5,#979ba2,#94989f,#979ba2,#9fa3a9,#a7abb1,#aeb2b8,#b0b4ba,#acb0b6,#a3a7ad,#989da3,#92969d,#8c9198,#8a8f96,#91959c,#9b9fa6,#a3a7ae,#a8acb2,#a9adb3,#a5a9af,#9ea2a9,#999da4,#9ba0a6,#a3a7ae,#a9adb3,#a9adb4,#a3a7ad,#989ca3,#90949b,#92969d,#999ea4,#a4a8af,#adb1b7,#b0b4ba,#aeb1b7,#a7abb1,#9ea3a9,#8f939a,#7b8087,#777b83,#868b92,#969aa1,#a0a4ab,#a8acb2,#acb0b6,#aaaeb4,#a3a7ad,#9a9ea5,#94999f,#94989f,#9a9ea5,#a1a6ac,#a4a8ae,#a0a4ab,#979ba2,#8c9198,#898d94,#8f949b,#979ca2,#9b9fa6,#979ba2,#92969d,#91969d,#9599a0,#989ca3,#989da3,#94989f,#8d9299,#888c93,#8a8e95,#94989f,#9fa3a9,#a5a9af,#a9adb3,#afb3b9,#b3b7bc,#b3b7bc,#aeb2b8,#a6aab1,#9ea2a9,#999ea4,#9ca1a7,#a2a6ad,#a5a9b0)"></i>
<i style="background:linear-gradient(90deg,#a2a6ad,#989ca3,#8d9198,#8a8e95,#93979e,#9ea3a9,#a5a9af,#a8acb2,#a7abb1,#a2a6ac,#9a9ea5,#9599a0,#989ca2,#9ca0a7,#9ca0a7,#989ca3,#94989f,#969aa1,#9ea2a8,#a7aab1,#aeb1b7,#b1b4ba,#aeb2b8,#a6aab0,#9da1a7,#969ba1,#90949b,#8c9097,#8f949b,#999da4,#a1a5ab,#a6aab0,#a7abb2,#a3a7ae,#9ca0a7,#979ba2,#9a9ea5,#a2a6ad,#a9adb3,#aaaeb4,#a5a9af,#9ca0a7,#9599a0,#979ba2,#9ea2a8,#a7abb1,#afb2b8,#b0b4ba,#adb1b7,#a6aab0,#9ca0a7,#8b8f96,#767b82,#747880,#868b92,#979ba2,#a1a5ac,#aaaeb4,#aeb2b8,#acb0b6,#a5a9b0,#9da1a8,#979ba2,#969aa1,#9ca1a7,#a4a8ae,#a6aab0,#a3a7ad,#9a9ea5,#90949b,#8c9198,#92969d,#9a9ea5,#9da1a7,#999ea4,#9599a0,#9499a0,#989da3,#9ca0a7,#9da1a7,#999da4,#93979e,#8c9198,#8c9097,#93979e,#9da1a8,#a3a7ae,#a8acb2,#aeb2b8,#b3b6bc,#b3b6bc,#aeb2b8,#a6aab1,#9ea2a8,#999da4,#9ca0a7,#a2a6ad,#a6aab0)"></i>
<i style="background:linear-gradient(90deg,#a1a5ac,#969aa1,#898e95,#858991,#8e939a,#9b9fa6,#a2a6ac,#a5a9b0,#a5a9b0,#a1a5ac,#9b9fa6,#989ca3,#9b9fa5,#9fa3aa,#9ea3a9,#999da4,#94989f,#9499a0,#9ca0a7,#a5a9b0,#adb1b7,#b1b5ba,#afb3b9,#a8acb2,#a0a4ab,#9a9fa5,#94989f,#8e9299,#8e939a,#969aa1,#9ea2a9,#a3a7ae,#a5a9af,#a1a5ac,#9a9ea4,#9599a0,#989ca3,#a1a5ac,#a8acb2,#aaaeb4,#a6aab0,#9ea3a9,#999da4,#9b9fa6,#a1a5ac,#aaadb4,#b0b3b9,#b0b4ba,#acb0b6,#a4a8ae,#9a9ea5,#888d94,#737880,#737880,#878c93,#989da3,#a3a7ad,#abafb5,#afb3b9,#aeb2b8,#a8acb2,#a0a4ab,#9b9fa5,#999ea4,#9fa3aa,#a6aab0,#a8acb2,#a5a9af,#9ca0a7,#93979e,#90949b,#9599a0,#9ca1a7,#9fa4aa,#9ca0a7,#989ca3,#989ca3,#9ca0a7,#a0a4aa,#a0a4ab,#9da1a8,#979ba2,#90949b,#8d9198,#92969d,#9a9ea5,#a1a5ab,#a6aab0,#acb0b6,#b1b5bb,#b2b6bc,#adb1b7,#a5a9b0,#9ca1a7,#979ca2,#9b9fa6,#a2a6ad,#a6aab0)"></i>
<i style="background:linear-gradient(90deg,#9fa4aa,#94989f,#868a92,#80858c,#8a8e95,#979ba2,#9fa3a9,#a3a7ad,#a3a7ae,#a0a5ab,#9da1a7,#9b9fa6,#9ea2a9,#a2a6ac,#a1a5ac,#9b9fa5,#94989f,#93979e,#9b9fa5,#a4a8ae,#acb0b6,#b1b5ba,#b0b4ba,#aaaeb4,#a3a7ad,#9ea2a9,#979ba2,#90949b,#8e9299,#93989e,#9b9fa6,#a0a4ab,#a2a6ad,#9ea2a9,#979ba2,#92969d,#969aa1,#9fa4aa,#a7abb1,#aaadb4,#a7abb1,#a1a5ab,#9ca1a7,#9fa3a9,#a4a8ae,#abafb5,#b0b4ba,#b0b4ba,#abafb5,#a3a7ad,#989ca3,#868a92,#72767e,#747981,#898e95,#9a9ea5,#a4a8ae,#acb0b6,#b1b5ba,#b0b4ba,#aaaeb4,#a3a7ad,#9ea2a9,#9da1a8,#a2a6ac,#a7abb2,#a9adb4,#a6aab0,#9ea2a9,#9599a0,#92979e,#989ca3,#9fa3aa,#a2a6ad,#9fa4aa,#9ba0a6,#9ca0a6,#9fa3aa,#a3a7ad,#a3a7ae,#a0a4ab,#9b9fa6,#93979e,#8e9299,#90949b,#979ba2,#9ea2a9,#a3a7ad,#aaaeb4,#b0b4ba,#b1b5ba,#acb0b6,#a4a8ae,#9b9fa6,#969aa1,#9b9fa5,#a3a7ad,#a7abb1)"></i>
<i style="background:linear-gradient(90deg,#9ea2a9,#92969d,#83878e,#7c8088,#858a91,#93979e,#9ba0a6,#a0a4aa,#a1a5ac,#a0a4ab,#9ea2a9,#9ea2a9,#a1a5ac,#a5a9af,#a3a7ae,#9ca0a7,#94989f,#92969d,#999da4,#a3a7ad,#abafb5,#b1b5ba,#b1b5ba,#acb0b6,#a6aab0,#a1a5ab,#9a9ea5,#92969d,#8d9198,#90959c,#979ca2,#9da1a8,#9fa3aa,#9ba0a6,#94989f,#90949b,#94989f,#9ea2a9,#a6aab0,#a9adb3,#a7abb1,#a3a7ad,#a0a4aa,#a2a6ac,#a7abb1,#adb1b7,#b1b5bb,#b0b4ba,#aaaeb4,#a1a5ac,#969aa1,#84888f,#71757d,#767a82,#8c9097,#9ca0a7,#a6aab0,#aeb1b7,#b2b6bc,#b2b5bb,#acb0b6,#a6aab0,#a1a5ac,#a0a4ab,#a4a8af,#a9adb3,#abafb5,#a8abb2,#a0a4aa,#979ba2,#9599a0,#9b9fa6,#a2a6ad,#a5a9af,#a2a6ad,#9fa3a9,#9fa3a9,#a2a6ad,#a5a9b0,#a6aab0,#a3a7ae,#9ea2a9,#969aa1,#8e939a,#8e9299,#94989f,#9b9fa5,#a0a4ab,#a8acb2,#aeb2b8,#afb3b9,#abafb5,#a3a7ad,#999da4,#94989f,#9a9ea5,#a3a7ad,#a8acb2)"></i>
<i style="background:linear-gradient(90deg,#9da1a8,#90959c,#80858c,#787c84,#81868d,#90949b,#989da3,#9da1a8,#a0a4aa,#a0a4aa,#a0a4aa,#a1a5ab,#a4a8af,#a8acb2,#a6aab0,#9ea2a9,#9599a0,#91959c,#989ca3,#a2a6ac,#abafb5,#b1b5ba,#b2b5bb,#aeb2b8,#a8acb2,#a4a8ae,#9da1a8,#94989f,#8d9198,#8e9299,#94999f,#9a9ea5,#9da1a7,#999da4,#92969d,#8e9299,#93979e,#9da1a8,#a5a9af,#a9adb3,#a8acb2,#a5a9af,#a3a7ad,#a5a9af,#aaaeb4,#afb3b9,#b2b6bc,#b0b4ba,#a9adb3,#9fa3aa,#94989f,#81868d,#70757c,#787d84,#8e939a,#9ea2a9,#a7abb1,#afb3b9,#b4b7bd,#b3b7bd,#afb3b8,#a9adb3,#a4a8af,#a3a7ad,#a7abb1,#abafb5,#acb0b6,#a9adb3,#a1a5ac,#999da4,#979ca2,#9da1a8,#a4a8af,#a7abb1,#a5a9af,#a1a6ac,#a2a6ac,#a5a9af,#a8acb2,#a9acb3,#a6aab0,#a1a5ab,#989da3,#8f949b,#8c9198,#91959c,#979ca2,#9da1a8,#a6aab0,#acb0b6,#aeb1b7,#a9adb3,#a1a5ab,#969ba1,#92969d,#999da4,#a3a7ad,#a9acb3)"></i>
<i style="background:linear-gradient(90deg,#9ca1a7,#90949b,#7f848b,#767b83,#7f848b,#8e9299,#969aa1,#9b9fa6,#9ea2a9,#a0a4aa,#a1a5ac,#a3a8ae,#a7abb1,#aaaeb4,#a9adb3,#a1a5ab,#979ba2,#92969d,#979ca2,#a1a5ac,#aaaeb4,#b1b5bb,#b2b6bc,#afb3b9,#aaaeb4,#a6aab0,#9fa3aa,#9599a0,#8d9198,#8d9198,#92969d,#989ca3,#9b9fa5,#979ba2,#90959c,#8d9299,#93979e,#9ca1a7,#a5a9af,#a9adb3,#a9adb3,#a7abb1,#a6aab0,#a8acb3,#acb0b6,#b1b5bb,#b3b7bc,#b0b4ba,#a8acb2,#9da1a8,#91959c,#7e838a,#6f747c,#7b7f87,#92969d,#a1a5ab,#a9adb3,#b1b4ba,#b5b9bf,#b5b9bf,#b1b5bb,#abafb5,#a7abb1,#a6aab0,#a9adb3,#adb1b7,#aeb2b8,#abaeb5,#a3a7ae,#9ba0a6,#999ea4,#9fa3a9,#a6aab0,#a9acb3,#a6aab1,#a3a7ae,#a4a8ae,#a7abb1,#aaaeb4,#aaaeb5,#a8acb2,#a3a7ad,#9a9fa5,#90959c,#8c9097,#8f939a,#959aa0,#9b9fa6,#a3a8ae,#aaaeb4,#abafb5,#a7abb1,#9ea2a9,#93989f,#8f949a,#979ba2,#a2a6ad,#a8acb2)"></i>
<i style="background:linear-gradient(90deg,#9da1a8,#91959c,#81858d,#787c84,#7f848b,#8d9198,#9599a0,#9a9ea5,#9da1a8,#a0a4aa,#a2a7ad,#a6aab0,#aaaeb4,#adb1b7,#abafb5,#a4a8ae,#999ea4,#94989f,#989ca3,#a1a5ac,#aaaeb4,#b1b5bb,#b3b7bc,#b0b4ba,#abafb5,#a7abb1,#a1a5ab,#979ba2,#8e9299,#8c9198,#91969d,#979ba2,#999da4,#969aa1,#90959c,#8e939a,#94989f,#9da1a8,#a5a9af,#a9adb3,#aaaeb4,#a9adb3,#a9adb3,#acb0b6,#afb3b9,#b3b7bd,#b4b8bd,#b0b3b9,#a6aab1,#9b9fa6,#8e939a,#7b8087,#6f747c,#7e838a,#9599a0,#a4a8ae,#abafb5,#b2b6bc,#b7bac0,#b7bbc0,#b3b7bd,#aeb2b8,#aaaeb4,#a8acb3,#abafb5,#afb2b8,#afb3b9,#acb0b6,#a5a9af,#9da2a8,#9b9fa6,#a0a4aa,#a6aab0,#a9adb3,#a7abb1,#a5a9af,#a5a9b0,#a9adb3,#acb0b6,#acb0b6,#a9adb3,#a4a8af,#9ca0a7,#92969d,#8c9097,#8e939a,#94989f,#9a9ea5,#a2a6ac,#a8acb2,#a9adb3,#a4a8ae,#9a9fa5,#90949b,#8c9097,#9599a0,#a1a5ab,#a7abb2)"></i>
<i style="background:linear-gradient(90deg,#9ea2a9,#93979e,#848990,#7c8188,#82878e,#8e9299,#959aa0,#999ea4,#9da1a7,#a0a4aa,#a4a8ae,#a8acb2,#acb0b6,#afb3b9,#aeb2b8,#a7abb1,#9da1a8,#979ba2,#9a9ea5,#a2a6ac,#aaaeb4,#b1b5bb,#b3b7bd,#b1b5ba,#acb0b6,#a8acb2,#a1a5ac,#989ca3,#8f949a,#8e9299,#92969d,#979ba2,#999da4,#969ba1,#92969d,#91959c,#969aa1,#9ea2a9,#a5a9af,#a9adb3,#abafb5,#abafb5,#acb0b6,#afb2b8,#b2b6bc,#b5b9be,#b5b8be,#afb3b9,#a5a9af,#999da3,#8b8f97,#787d85,#70757d,#82878e,#999da4,#a6aab1,#aeb1b7,#b4b8be,#b8bcc2,#b9bcc2,#b5b9be,#b0b4ba,#acb0b6,#abaeb5,#adb1b7,#b0b4ba,#b1b5ba,#aeb1b7,#a7abb1,#9fa3aa,#9ca1a7,#a0a4aa,#a6aab0,#a9adb3,#a7abb1,#a5a9af,#a7aab1,#aaaeb4,#adb1b7,#adb1b7,#aaaeb4,#a5a9af,#9da1a7,#93979e,#8d9299,#8f949b,#9499a0,#999ea4,#a0a4ab,#a5a9b0,#a5a9b0,#a0a4aa,#969aa1,#8c9097,#888d94,#92969d,#9fa3a9,#a6aab0)"></i>
<i style="background:linear-gradient(90deg,#a0a4aa,#959aa1,#898d94,#82868e,#878b93,#91959c,#979ba2,#9a9ea5,#9da1a7,#a0a4ab,#a4a8af,#a9adb3,#aeb2b8,#b1b5bb,#b0b4ba,#abaeb5,#a1a5ac,#9b9fa5,#9ca1a7,#a3a7ad,#abafb5,#b1b5bb,#b3b7bd,#b1b5bb,#adb0b6,#a8acb2,#a1a5ac,#989da3,#91959c,#90949b,#94989f,#989ca3,#999ea4,#979ca2,#9499a0,#94999f,#999da4,#a0a4aa,#a6aab0,#aaaeb4,#acb0b6,#adb1b7,#afb2b8,#b1b5bb,#b4b8be,#b6bac0,#b5b9bf,#afb3b9,#a4a8ae,#969aa1,#888c94,#767a82,#71767e,#868a92,#9ca0a7,#a9adb3,#b0b3b9,#b6b9bf,#babdc3,#babec3,#b7bac0,#b2b6bb,#aeb2b8,#acb0b6,#aeb2b8,#b1b5bb,#b2b6bb,#afb3b9,#a8acb3,#a1a5ab,#9da1a8,#9fa3aa,#a4a8af,#a7abb2,#a6aab1,#a5a9af,#a7abb1,#abafb5,#aeb2b8,#adb1b7,#aaaeb4,#a5a9af,#9da1a8,#94989f,#90949b,#92969d,#969aa1,#9a9ea5,#9fa3aa,#a3a7ad,#a1a5ac,#9b9fa6,#91969d,#878c93,#848990,#8f939a,#9ca0a7,#a3a7ae)"></i>
<i style="background:linear-gradient(90deg,#a2a6ac,#999da4,#8e939a,#898d94,#8d9198,#9499a0,#999da4,#9b9fa6,#9da1a8,#a0a4aa,#a5a9af,#aaaeb4,#afb3b9,#b3b6bc,#b2b6bc,#aeb1b7,#a5a9b0,#9fa3a9,#9fa3aa,#a4a8af,#abafb5,#b1b4ba,#b3b7bc,#b1b5ba,#acb0b6,#a7abb2,#a1a5ab,#999da4,#93979e,#93989f,#979ba2,#9a9ea5,#9b9fa6,#999ea4,#989ca3,#989da3,#9ca1a7,#a2a6ac,#a6aab1,#aaaeb4,#acb0b6,#aeb2b8,#b0b4ba,#b3b7bd,#b6babf,#b8bbc1,#b6babf,#afb3b9,#a2a7ad,#94999f,#858a91,#747880,#73787f,#898e95,#9fa3aa,#abafb5,#b1b5bb,#b7bbc0,#bbbec4,#bbbfc4,#b8bcc1,#b3b7bd,#afb3b9,#adb1b7,#afb3b9,#b2b6bb,#b3b6bc,#b0b4ba,#aaaeb4,#a2a6ad,#9da1a8,#9ea2a8,#a2a6ad,#a5a9b0,#a5a9af,#a4a8af,#a7abb1,#acafb5,#aeb2b8,#adb1b7,#aaaeb4,#a4a8af,#9da1a7,#9599a0,#93979e,#9599a0,#989da3,#9b9fa6,#9ea2a9,#a0a4aa,#9da1a8,#969aa1,#8c9198,#83888f,#81868d,#8c9097,#999da4,#a0a4ab)"></i>
<i style="background:linear-gradient(90deg,#a4a8ae,#9ca0a7,#94989f,#90949b,#93979e,#999da4,#9ca0a7,#9da1a8,#9da2a8,#a0a4aa,#a4a8af,#aaaeb4,#b0b3b9,#b3b7bd,#b4b8bd,#b0b4ba,#a9adb3,#a3a7ad,#a2a6ad,#a6aab0,#abafb5,#b0b4ba,#b2b6bc,#b0b4ba,#acafb6,#a6aab1,#a0a4aa,#999da4,#959aa0,#979ba2,#9a9fa5,#9ca0a7,#9da1a7,#9ca0a7,#9b9fa6,#9da1a7,#a0a4ab,#a4a8ae,#a7abb1,#aaaeb4,#acb0b6,#afb3b9,#b2b5bb,#b4b8be,#b7bbc0,#b9bcc2,#b7bac0,#afb3b9,#a2a6ac,#93979e,#83888f,#73777f,#757981,#8c9198,#a2a6ac,#adb1b7,#b2b6bc,#b8bbc1,#bcbfc5,#bcc0c5,#b9bcc2,#b4b8bd,#b0b3b9,#adb1b7,#afb3b9,#b2b6bc,#b3b7bd,#b1b4ba,#aaaeb4,#a3a7ad,#9ca1a7,#9ba0a6,#9fa3aa,#a3a7ad,#a3a7ad,#a3a7ad,#a7abb1,#acb0b6,#aeb2b8,#adb1b7,#a9adb3,#a3a7ae,#9ca0a7,#969ba1,#969aa1,#999da4,#9ba0a6,#9da1a8,#9ea2a9,#9da1a8,#999da3,#91959c,#888c93,#80858c,#7f848b,#898e95,#959aa0,#9da1a7)"></i>
<i style="background:linear-gradient(90deg,#a6aab0,#9fa3aa,#989da3,#969aa1,#999da4,#9da1a8,#9fa3a9,#9fa3a9,#9ea2a9,#9fa3aa,#a3a8ae,#aaaeb4,#b0b3b9,#b4b7bd,#b5b9be,#b2b6bc,#adb0b7,#a7abb1,#a5a9af,#a7abb1,#abafb5,#b0b4ba,#b1b5bb,#afb3b9,#aaaeb4,#a5a9af,#9ea2a9,#989da3,#979ca2,#9b9fa5,#9ea2a9,#9fa3a9,#9fa3a9,#9ea2a9,#9fa3a9,#a1a5ab,#a3a7ae,#a6aab0,#a8acb2,#aaaeb4,#acb0b6,#afb3b9,#b2b6bc,#b5b9be,#b7bbc1,#b9bdc2,#b7bac0,#afb3b9,#a1a5ac,#92969d,#83878e,#73777f,#777c83,#8f939a,#a3a7ae,#aeb2b8,#b3b7bd,#b8bcc1,#bcc0c5,#bcc0c5,#b9bdc2,#b4b8be,#b0b3b9,#adb1b7,#afb2b8,#b2b6bb,#b3b7bd,#b1b5bb,#abafb5,#a3a7ad,#9b9fa6,#989ca3,#9b9fa6,#9fa3aa,#a0a4ab,#a1a5ac,#a6aab1,#acb0b6,#aeb2b8,#acb0b6,#a8acb2,#a1a5ac,#9b9fa6,#979ba2,#999da4,#9da1a7,#9fa3a9,#9fa3aa,#9ea2a9,#9b9fa5,#94989f,#8b9097,#848890,#7f838a,#7f838b,#888c93,#92969d,#999da4)"></i>
<i style="background:linear-gradient(90deg,#a7abb2,#a2a6ac,#9da1a7,#9b9fa6,#9ea2a9,#a1a5ab,#a2a6ac,#a1a5ab,#9ea2a9,#9ea2a9,#a2a6ac,#a9adb3,#afb3b9,#b3b7bd,#b6b9bf,#b4b8be,#afb3b9,#aaaeb4,#a7abb1,#a8acb2,#abafb5,#afb3b9,#b0b4ba,#aeb2b8,#a9adb3,#a3a7ad,#9ca0a6,#989ca3,#999da4,#9ea2a9,#a1a5ac,#a1a5ac,#a1a5ab,#a1a5ab,#a2a6ac,#a4a8ae,#a6aab0,#a7abb2,#a8acb2,#a9adb3,#abafb5,#aeb2b8,#b2b5bb,#b5b8be,#b7bbc1,#b9bcc2,#b7bac0,#afb3b9,#a1a6ac,#92979e,#83888f,#747980,#797e85,#91959c,#a4a8af,#afb2b8,#b3b7bd,#b8bcc1,#bcbfc5,#bcc0c5,#b9bdc2,#b4b7bd,#afb3b9,#acb0b6,#aeb1b7,#b1b5bb,#b3b7bc,#b1b4ba,#abafb5,#a2a6ad,#999da4,#9599a0,#979ba2,#9ba0a6,#9da2a8,#a0a4aa,#a6aab0,#abafb5,#aeb1b7,#abafb5,#a6aab0,#9fa3aa,#999da4,#989ca3,#9ca0a6,#a0a4ab,#a2a6ac,#a1a5ab,#9ea2a9,#989da3,#90949b,#878c93,#82868d,#7f848b,#80858c,#878c93,#8f949b,#9599a0)"></i>
<i style="background:linear-gradient(90deg,#a9adb3,#a4a8ae,#a0a4aa,#a0a4aa,#a2a6ad,#a4a8af,#a4a8ae,#a2a6ad,#9ea3a9,#9ca0a7,#a0a4aa,#a7abb1,#adb1b7,#b3b6bc,#b6b9bf,#b5b9bf,#b2b5bb,#acb0b6,#a9adb3,#a9adb3,#abafb5,#aeb2b8,#afb3b9,#adb1b7,#a7abb2,#a0a4ab,#999da4,#979ba2,#9b9fa6,#a1a5ab,#a4a8af,#a4a8ae,#a2a7ad,#a3a7ad,#a4a8af,#a7abb1,#a8acb3,#a9adb3,#a8acb3,#a8acb2,#a9adb3,#adb0b6,#b0b4ba,#b4b7bd,#b7bac0,#b8bcc1,#b6bac0,#afb3b9,#a2a6ad,#93989f,#858990,#767b82,#7b8087,#92969d,#a5a9af,#aeb2b8,#b3b7bc,#b8bbc1,#bbbfc4,#bcbfc5,#b8bcc1,#b3b7bc,#aeb1b7,#aaaeb4,#acb0b6,#b0b4ba,#b2b6bc,#b0b4ba,#aaaeb4,#a1a5ac,#979ba2,#90959b,#92969d,#989ca3,#9b9fa5,#9ea2a9,#a5a9b0,#abafb5,#adb1b7,#aaaeb4,#a4a8ae,#9ca1a7,#979ba2,#989ca3,#9ea2a9,#a3a7ae,#a4a8af,#a3a7ad,#9ea2a9,#969ba1,#8d9198,#848990,#81868d,#81868d,#84888f,#888d94,#8e9299,#92969d)"></i>
<i style="background:linear-gradient(90deg,#a9adb3,#a5a9af,#a2a6ad,#a3a7ad,#a5a9b0,#a7abb1,#a6aab0,#a3a7ae,#9ea2a9,#9a9ea5,#9da1a7,#a4a8af,#acafb6,#b1b5bb,#b5b9bf,#b6babf,#b3b7bd,#aeb2b8,#aaaeb4,#a9adb3,#aaaeb4,#adb1b7,#aeb2b8,#abafb5,#a6aab0,#9ea2a9,#979ba2,#969aa1,#9ca0a7,#a3a7ae,#a7abb1,#a5a9b0,#a4a8ae,#a4a8af,#a6aab1,#a9adb3,#aaaeb4,#a9adb3,#a8acb2,#a7abb1,#a7abb1,#aaaeb4,#afb2b8,#b2b6bc,#b5b9bf,#b7bbc0,#b6b9bf,#afb3b9,#a3a7ad,#9599a0,#878b93,#797e85,#7d8289,#92969d,#a4a8ae,#aeb1b7,#b2b6bb,#b7bac0,#babec3,#bbbec4,#b7bbc1,#b1b5bb,#acafb6,#a8acb2,#aaaeb4,#aeb2b8,#b1b5bb,#afb3b9,#a9adb3,#a0a4aa,#94989f,#8c9097,#8d9299,#94989f,#989ca3,#9da1a8,#a5a9af,#abafb5,#adb0b7,#a9adb3,#a2a6ac,#9a9ea5,#9599a0,#989ca3,#a0a4aa,#a6aab0,#a6aab1,#a4a8ae,#9ea2a9,#9599a0,#8a8f96,#83888f,#83878f,#858a91,#888c93,#8a8f96,#8d9198,#8f939a)"></i>
<i style="background:linear-gradient(90deg,#a9adb4,#a5a9b0,#a4a8ae,#a5a9af,#a8acb2,#a9adb3,#a7abb2,#a4a8ae,#9da2a8,#989ca3,#999da4,#a1a5ac,#a9adb3,#b0b3b9,#b4b8be,#b6babf,#b4b8bd,#afb3b9,#abafb5,#a9adb3,#a9adb3,#abafb5,#acb0b6,#aaaeb4,#a4a8af,#9ca0a6,#94999f,#9599a0,#9da1a7,#a5a9af,#a8acb2,#a6aab1,#a4a8af,#a5a9af,#a7abb2,#aaaeb4,#abafb5,#a9adb4,#a7abb1,#a5a9af,#a4a8af,#a7abb2,#acb0b6,#b0b4ba,#b3b7bd,#b6b9bf,#b5b9bf,#afb3b9,#a4a8af,#979ca2,#8a8e95,#7c8188,#7f838b,#91969c,#a3a7ad,#acb0b6,#b0b4ba,#b5b9bf,#b9bdc2,#b9bdc3,#b6babf,#b0b3b9,#a9adb3,#a5a9af,#a7abb1,#acb0b6,#afb3b9,#aeb2b8,#a8acb2,#9ea2a8,#90959c,#878b93,#898d95,#91959c,#969ba2,#9ca0a7,#a5a9af,#abafb5,#acb0b6,#a8acb2,#a0a4ab,#979ca2,#93989e,#989ca3,#a1a5ac,#a7abb1,#a8acb2,#a5a9af,#9ea2a9,#94989f,#898d94,#848890,#868b92,#8a8f96,#8d9198,#8e9299,#8d9299,#8e9299)"></i>
<i style="background:linear-gradient(90deg,#a9adb3,#a5a9b0,#a4a8af,#a6aab0,#a9adb3,#aaaeb4,#a8acb2,#a4a8ae,#9ca0a7,#9599a0,#9599a0,#9da2a8,#a7aab1,#aeb1b7,#b3b7bd,#b6b9bf,#b4b8be,#afb3b9,#aaaeb5,#a8acb2,#a8acb2,#aaaeb4,#abafb5,#a9adb3,#a3a7ad,#9a9ea5,#92979e,#94989f,#9da1a8,#a6aab0,#a9adb3,#a7abb1,#a4a8af,#a5a9af,#a8acb2,#aaaeb4,#abafb5,#a9adb3,#a6aab0,#a2a6ad,#a1a5ab,#a4a8ae,#a9adb3,#adb1b7,#b1b4ba,#b4b8bd,#b4b8be,#afb3b9,#a6aab0,#9a9ea5,#8d9198,#80848c,#80848c,#90949b,#a1a5ab,#aaaeb4,#aeb2b8,#b3b7bd,#b7bbc1,#b8bcc1,#b4b8be,#aeb1b8,#a7abb1,#a2a6ad,#a4a8af,#aaaeb4,#aeb2b8,#adb0b6,#a6aab0,#9ca0a6,#8d9299,#83878f,#868a92,#8f949b,#969aa1,#9ca0a7,#a5a9b0,#acafb6,#acb0b6,#a7abb1,#9fa3a9,#959aa0,#92969d,#989ca3,#a2a6ac,#a8acb2,#a8acb2,#a5a9af,#9ea2a8,#93979e,#898d94,#868b92,#8a8f96,#8f949b,#92969d,#91969d,#8f939a,#8e9299)"></i>
<i style="background:linear-gradient(90deg,#a8acb2,#a4a8af,#a4a8ae,#a6aab1,#a9adb3,#aaaeb4,#a8abb2,#a3a7ad,#9a9ea5,#91959c,#91959c,#9a9ea5,#a4a8ae,#abafb5,#b2b6bc,#b5b9bf,#b4b8bd,#afb3b9,#aaaeb4,#a6aab1,#a6aab0,#a8acb2,#aaaeb4,#a8acb2,#a2a7ad,#999da4,#91959c,#93979e,#9da1a7,#a6aab0,#a9adb3,#a6aab1,#a4a8ae,#a4a8af,#a7abb2,#aaaeb4,#aaaeb4,#a8acb2,#a4a8ae,#9fa3aa,#9da1a8,#a0a4aa,#a5a9b0,#aaaeb4,#aeb2b8,#b2b6bc,#b3b7bd,#b0b3b9,#a7abb1,#9ca0a7,#90949b,#83878f,#81858c,#8e939a,#9ea3a9,#a8abb2,#acb0b6,#b1b5bb,#b6b9bf,#b6bac0,#b2b6bc,#acafb6,#a4a8ae,#9fa3a9,#a1a5ac,#a8acb2,#acb0b6,#abafb5,#a4a8ae,#999da4,#8a8e96,#80858c,#858990,#8f949b,#969ba1,#9da1a8,#a6aab1,#acb0b6,#acb0b6,#a7abb1,#9ea2a9,#94999f,#91959c,#979ca2,#a2a6ac,#a8acb2,#a8acb2,#a4a8ae,#9ca1a7,#92969d,#898e95,#898e95,#8f939a,#94999f,#979ba2,#959aa0,#92969d,#90949b)"></i>
<i style="background:linear-gradient(90deg,#a6aab0,#a3a7ad,#a2a7ad,#a5a9b0,#a8acb2,#a9adb3,#a6aab1,#a1a5ac,#989ca3,#8d9299,#8c9198,#969ba1,#a1a5ac,#aaadb4,#b1b4ba,#b4b8be,#b3b7bd,#aeb2b8,#a8acb2,#a4a8af,#a4a8ae,#a7abb1,#a9adb3,#a8acb2,#a3a7ad,#999da4,#91959c,#93979e,#9ca0a7,#a5a9af,#a8acb2,#a5a9af,#a2a6ad,#a3a7ad,#a6aab0,#a9adb3,#a9adb3,#a6aab0,#a2a6ac,#9ca0a7,#999da4,#9ca0a6,#a2a6ac,#a7abb1,#abafb5,#b0b4ba,#b2b6bc,#b0b4ba,#a8acb3,#9ea2a9,#93979e,#868a91,#81858d,#8c9198,#9ca0a6,#a5a9af,#a9adb3,#afb3b9,#b4b7bd,#b5b8be,#b1b5ba,#aaadb4,#a1a5ac,#9ca0a7,#9fa3a9,#a6aab0,#aaaeb4,#a9adb3,#a2a6ad,#979ba2,#888c93,#7f838b,#858a91,#91959c,#989ca3,#9fa3aa,#a8acb2,#adb1b7,#adb1b7,#a7abb1,#9ea2a9,#94989f,#90959c,#979ba2,#a1a5ac,#a7abb1,#a7abb1,#a3a7ad,#9b9fa6,#91959c,#8b8f96,#8d9198,#93989e,#999da4,#9b9fa6,#999da4,#9599a0,#92969d)"></i>
<i style="background:linear-gradient(90deg,#a4a8ae,#a0a4ab,#a0a4ab,#a3a7ae,#a7abb1,#a7abb1,#a4a8af,#9fa3aa,#9599a0,#898d95,#888d94,#93989e,#9fa3aa,#a8acb2,#afb3b9,#b3b7bd,#b2b5bb,#acb0b6,#a6aab0,#a2a6ac,#a1a5ac,#a5a9af,#a8acb3,#a8acb2,#a3a7ae,#9a9ea5,#92969d,#93979e,#9b9fa6,#a3a7ae,#a6aab0,#a3a7ad,#a0a4ab,#a1a5ab,#a4a8ae,#a7abb1,#a7abb1,#a4a8ae,#9fa3a9,#989ca3,#94999f,#979ca2,#9ea2a9,#a3a8ae,#a8acb2,#aeb2b8,#b2b5bb,#b0b4ba,#aaadb4,#a0a4ab,#959aa0,#888c93,#81858d,#8a8e95,#989da3,#a2a6ac,#a6aab1,#adb0b6,#b2b6bc,#b3b7bd,#afb3b9,#a8acb2,#9fa3aa,#999da4,#9ca0a7,#a4a8ae,#a9adb3,#a8acb2,#a0a4ab,#9599a0,#868a91,#7f838b,#878c93,#93989f,#9b9fa6,#a1a5ac,#a9adb4,#afb2b8,#aeb2b8,#a8acb2,#9fa3aa,#9599a0,#91959c,#969ba1,#a0a4aa,#a6aab0,#a5a9af,#a0a5ab,#999da4,#90949b,#8c9198,#91959c,#979ca2,#9da1a7,#9fa3aa,#9da1a8,#999da3,#969aa1)"></i>
<i style="background:linear-gradient(90deg,#a1a5ac,#9da1a8,#9da1a8,#a1a5ab,#a4a8af,#a5a9af,#a2a6ac,#9ca0a7,#91959c,#858990,#848990,#91959c,#9da1a8,#a6aab1,#aeb2b8,#b2b5bb,#b0b4ba,#aaaeb4,#a3a8ae,#9fa3aa,#9fa3a9,#a3a8ae,#a8acb2,#a9adb3,#a4a8af,#9ba0a6,#93979e,#93979e,#9a9ea5,#a1a5ac,#a4a8ae,#a0a4ab,#9da1a8,#9ea2a8,#a1a5ac,#a4a8af,#a5a9af,#a1a5ac,#9ba0a6,#94989f,#90949b,#93979e,#9a9ea5,#a0a4ab,#a5a9b0,#acb0b6,#b1b5ba,#b0b4ba,#abaeb5,#a2a6ac,#979ca2,#8a8e95,#81858c,#878b93,#9599a0,#9ea3a9,#a3a8ae,#aaaeb4,#b0b4ba,#b2b5bb,#aeb2b8,#a6aab1,#9da1a8,#979ba2,#9a9ea5,#a2a6ad,#a8abb2,#a6aab1,#9fa3a9,#93979e,#848990,#80858c,#8b8f96,#979ba2,#9ea2a9,#a4a8ae,#abafb5,#b0b4ba,#afb3b9,#a9adb3,#a0a4ab,#979ba2,#92969d,#969aa1,#9ea2a9,#a3a7ae,#a2a6ad,#9ea2a8,#969aa1,#8f939a,#8e9299,#94989f,#9b9fa6,#a0a4ab,#a2a6ad,#a0a4ab,#9ca0a7,#999da4)"></i>
<i style="background:linear-gradient(90deg,#9ea2a9,#9a9ea5,#9a9ea5,#9ea2a8,#a1a5ac,#a2a6ac,#9fa3a9,#989da3,#8c9198,#80848c,#80858c,#8e9299,#9b9fa6,#a5a9af,#adb1b7,#b0b4ba,#aeb2b8,#a8acb2,#a1a5ab,#9ca0a6,#9ca0a7,#a2a6ac,#a8acb2,#aaaeb4,#a6aab0,#9da1a8,#9599a0,#93979e,#999da4,#9fa3aa,#a1a5ab,#9da1a8,#999ea4,#9a9ea5,#9ea2a9,#a2a6ac,#a2a6ac,#9ea2a9,#989ca3,#90949b,#8b8f97,#8f939a,#979ba2,#9da1a8,#a3a7ad,#abaeb5,#b0b4ba,#b0b4ba,#acafb5,#a3a7ae,#999da4,#8b9097,#80858c,#848990,#91969c,#9b9fa6,#a1a5ab,#a8acb2,#aeb2b8,#b0b4ba,#adb1b7,#a5a9af,#9ba0a6,#9599a0,#989da3,#a1a5ab,#a6aab0,#a5a9af,#9da1a8,#91959c,#84888f,#82868e,#8e9299,#9a9fa5,#a1a5ac,#a7abb1,#aeb1b7,#b2b5bb,#b0b4ba,#aaaeb4,#a2a6ac,#989da3,#93979e,#959aa0,#9ca0a7,#a1a5ab,#9fa3aa,#9a9ea5,#93979e,#8e9299,#90949b,#979ca2,#9fa3a9,#a3a7ae,#a5a9af,#a3a7ae,#9fa3aa,#9da1a7)"></i>
<i style="background:linear-gradient(90deg,#9a9ea5,#969aa1,#969aa1,#9a9ea5,#9ea2a9,#9fa3aa,#9ca0a6,#9599a0,#888d94,#7b8087,#7d8189,#8c9097,#9a9ea5,#a4a8ae,#acafb5,#afb3b9,#adb1b7,#a5a9b0,#9ea2a8,#989da3,#999da4,#a1a5ab,#a8acb2,#aaaeb4,#a7abb1,#9ea3a9,#969aa1,#93979e,#979ba2,#9ca0a7,#9da2a8,#999da4,#959aa0,#969ba1,#9b9fa6,#9fa3a9,#9fa3a9,#9b9fa6,#94999f,#8c9097,#868b92,#8a8f96,#93979e,#9a9ea5,#a0a4ab,#a9adb3,#afb3b9,#b1b4ba,#acb0b6,#a5a9af,#9b9fa6,#8d9198,#80858c,#81868d,#8e9299,#989ca3,#9da2a8,#a5a9b0,#acb0b6,#afb3b9,#abafb5,#a3a7ae,#999ea4,#93979e,#969aa1,#9fa3aa,#a5a9af,#a3a7ae,#9b9fa6,#8f939a,#83878f,#848890,#92969d,#9ea2a9,#a4a8ae,#a9adb3,#afb3b9,#b3b7bd,#b2b5bb,#acb0b6,#a3a7ae,#9a9fa5,#94989f,#9599a0,#9a9ea5,#9ea2a8,#9ca0a7,#969aa1,#8f949b,#8c9198,#91969d,#9b9fa5,#a2a6ac,#a6aab0,#a8acb2,#a6aab0,#a3a7ad,#a0a4ab)"></i>
<i style="background:linear-gradient(90deg,#969aa1,#91959c,#91969d,#969aa1,#9b9fa6,#9ca1a7,#999da4,#92969d,#858991,#777c83,#7a7e86,#8a8e95,#989da3,#a3a7ad,#abaeb5,#aeb2b8,#abafb5,#a4a8ae,#9b9fa6,#969aa1,#979ba2,#9fa3aa,#a7abb2,#aaaeb5,#a7abb2,#9fa3aa,#979ba2,#93979e,#9599a0,#999da4,#999ea4,#9599a0,#90959b,#92969d,#979ba2,#9ca0a6,#9ca0a7,#989ca3,#91969d,#888d94,#83878f,#878b93,#90949b,#979ba2,#9ea2a8,#a7abb2,#afb3b9,#b1b5bb,#aeb1b7,#a6aab1,#9da1a8,#8f949b,#81868d,#80848c,#8b8f96,#9499a0,#9a9fa5,#a3a7ad,#aaaeb4,#adb1b7,#aaaeb4,#a2a6ac,#979ba2,#90949b,#93989e,#9ca0a7,#a2a6ad,#a1a5ac,#989da3,#8c9097,#82878e,#878b92,#959aa0,#a1a5ac,#a7abb1,#acafb6,#b1b5bb,#b4b8be,#b3b7bc,#adb1b7,#a5a9b0,#9da1a8,#969ba1,#9599a0,#989ca3,#9a9ea5,#979ca2,#91969d,#8b8f97,#8b8f96,#93979e,#9ea2a9,#a5a9b0,#a9adb3,#abafb5,#a9adb3,#a6aab0,#a4a8ae)"></i>
<i style="background:linear-gradient(90deg,#92969d,#8c9097,#8c9098,#92969d,#989ca3,#9a9fa5,#979ba2,#90959c,#83888f,#767a82,#787d84,#898d94,#979ca2,#a2a6ac,#aaaeb4,#adb1b7,#aaaeb4,#a2a6ad,#9a9ea4,#94989f,#9599a0,#9ea2a9,#a7abb1,#aaaeb4,#a7abb2,#9fa3aa,#969ba2,#91969d,#92969d,#9599a0,#9499a0,#8f939a,#8a8e95,#8c9097,#93979e,#999da4,#9a9ea5,#969ba1,#90949b,#878c93,#82868e,#868a91,#8e939a,#959aa1,#9ca0a7,#a6aab1,#afb2b8,#b2b5bb,#afb3b9,#a8acb2,#9fa3aa,#92969d,#83888f,#80848c,#898d94,#92969d,#989ca3,#a0a4ab,#a8acb2,#abafb5,#a8acb2,#9fa4aa,#9599a0,#8c9198,#90949b,#999da4,#9fa3aa,#9ea2a9,#9599a0,#898d95,#82868e,#8a8e95,#999da4,#a5a9af,#aaaeb4,#aeb1b7,#b3b6bc,#b5b9bf,#b4b8bd,#afb3b9,#a8acb2,#a0a4ab,#999da4,#969aa1,#969aa1,#969aa1,#92969d,#8b9097,#868a91,#898e95,#9599a0,#a1a5ac,#a9adb3,#acb0b6,#aeb2b8,#acb0b6,#a9adb3,#a7abb2)"></i>
<i style="background:linear-gradient(90deg,#8d9198,#868a92,#868b92,#8e9299,#969aa1,#999da4,#979ba2,#90959c,#84888f,#777b83,#797d85,#898d94,#979ba2,#a2a6ac,#aaaeb4,#adb1b7,#aaaeb4,#a2a6ac,#999da4,#93979e,#94989f,#9da1a8,#a6aab0,#a9adb4,#a7abb1,#9fa3a9,#969aa1,#8f949b,#8e939a,#90949b,#8f939a,#888d94,#82878e,#868a91,#8f939a,#979ba2,#999da4,#969aa1,#90949b,#888d94,#84888f,#878b93,#8f939a,#9599a0,#9b9fa6,#a6aab0,#afb2b8,#b2b6bc,#b0b4ba,#aaaeb4,#a1a5ac,#9599a0,#868b92,#82868d,#888d94,#91959c,#969aa1,#9ea2a8,#a6aab0,#a9adb3,#a6aab0,#9da1a8,#92969d,#898d94,#8b8f96,#94989f,#9b9fa6,#9a9ea5,#91969c,#868a91,#82878e,#8d9299,#9da1a8,#a8acb2,#acb0b6,#afb3b9,#b4b7bd,#b6babf,#b5b8be,#b0b4ba,#aaaeb4,#a3a7ae,#9ca1a7,#979ba2,#94989f,#91969c,#8c9097,#848990,#80848c,#878c93,#979ba2,#a4a8af,#acb0b6,#afb3b9,#b1b4ba,#afb3b9,#adb0b6,#abafb5)"></i>
<i style="background:linear-gradient(90deg,#888d94,#80848c,#80858c,#8a8e95,#94989f,#999da3,#979ba2,#92969d,#868b92,#7a7f86,#7b8087,#898e95,#989ca2,#a2a6ac,#aaaeb4,#adb1b7,#aaaeb5,#a2a6ad,#9a9ea5,#94989f,#94999f,#9da1a7,#a5a9af,#a8acb2,#a5a9b0,#9da1a8,#94989f,#8d9198,#8b8f96,#8b8f96,#888d94,#81858c,#7a7f86,#7f838b,#8b8f96,#9599a0,#999da4,#969ba1,#92969d,#8b9097,#888c94,#8b8f96,#91959c,#969aa1,#9b9fa6,#a5a9b0,#afb3b9,#b3b6bc,#b1b5bb,#abafb5,#a3a7ae,#979ca2,#8a8f96,#858991,#8a8e95,#90959c,#94989f,#9ca0a6,#a4a8ae,#a7abb1,#a4a8ae,#9b9fa6,#8f939a,#848990,#858991,#8e939a,#969aa1,#959aa0,#8d9198,#83878e,#83888f,#91969d,#a1a5ac,#abafb5,#aeb2b8,#b1b4ba,#b4b8be,#b6babf,#b5b9bf,#b1b5bb,#acb0b6,#a7abb1,#a0a4aa,#999da4,#92979e,#8c9198,#858a91,#7c8188,#797e85,#858a91,#999da4,#a7abb1,#afb3b8,#b2b6bb,#b3b7bd,#b2b6bc,#afb3b9,#aeb1b7)"></i>
<i style="background:linear-gradient(90deg,#848990,#7a7f86,#7a7f86,#868a91,#92979d,#999da4,#999da4,#9499a0,#8a8f96,#7f848b,#7f838b,#8b8f96,#989da3,#a3a7ad,#abaeb5,#aeb2b8,#abafb5,#a4a8ae,#9b9fa6,#969aa1,#969aa1,#9da1a7,#a4a8ae,#a6aab1,#a3a7ae,#9b9fa6,#92969d,#8a8f96,#878b92,#858a91,#82878e,#797e85,#71767e,#787d84,#878c93,#94989f,#999ea4,#989ca3,#9599a0,#90959c,#8e9299,#90949b,#94989f,#989ca3,#9ca0a7,#a6aab0,#afb3b9,#b3b7bd,#b2b6bc,#adb0b7,#a5a9af,#9a9ea5,#8e939a,#898e95,#8d9198,#91969d,#94989f,#9a9ea5,#a2a6ac,#a5a9af,#a2a6ac,#999da4,#8c9198,#80848c,#7f838b,#878c93,#8f949b,#90959b,#888d94,#80858c,#858a91,#969aa1,#a5a9af,#adb1b7,#b0b4ba,#b1b5bb,#b4b8bd,#b6b9bf,#b5b9bf,#b2b6bc,#aeb2b8,#aaaeb4,#a3a7ae,#9b9fa6,#92969d,#888c94,#7e838a,#747880,#72777f,#848890,#9a9ea5,#aaadb4,#b1b5bb,#b4b8bd,#b5b9bf,#b4b8bd,#b2b5bb,#b0b4ba)"></i>
<i style="background:linear-gradient(90deg,#81868d,#757a82,#757a81,#82878e,#91969d,#9a9ea5,#9b9fa6,#989ca3,#8f949b,#858991,#83888f,#8d9299,#9a9ea4,#a4a8ae,#abafb5,#afb3b9,#adb0b7,#a5a9b0,#9da2a8,#989ca3,#979ca2,#9da1a7,#a3a7ad,#a5a9af,#a1a5ac,#999da4,#8f949b,#878c93,#83888f,#81868d,#7d8189,#72777f,#696e76,#72777e,#858990,#94989f,#9b9fa5,#9b9fa5,#989da3,#969aa1,#9499a0,#959aa1,#989ca3,#9a9ea5,#9ea2a8,#a6aab1,#afb3b9,#b4b7bd,#b3b6bc,#aeb1b7,#a6aab0,#9ca0a7,#92979e,#8e939a,#91959c,#93989f,#94989f,#999da4,#a0a4aa,#a3a7ad,#a0a4ab,#979ca2,#8a8e96,#7c8088,#787c84,#80848b,#898d94,#8b8f96,#848990,#7f848b,#888d94,#9a9ea5,#a8acb2,#afb3b9,#b1b5ba,#b1b5bb,#b3b7bd,#b5b8be,#b5b8be,#b3b6bc,#b0b4ba,#acb0b6,#a7abb1,#9ea2a8,#92969d,#858990,#787d84,#6c7179,#6d7179,#83878e,#9b9fa6,#abafb5,#b3b6bc,#b5b9bf,#b7bac0,#b6b9bf,#b3b7bd,#b2b5bb)"></i>
<i style="background:linear-gradient(90deg,#80858c,#73777f,#71767e,#80858c,#91969c,#9b9fa6,#9da2a8,#9ca0a6,#9599a0,#8b8f96,#888c94,#90949b,#9b9fa6,#a5a9af,#acb0b6,#b0b4ba,#aeb2b8,#a7abb2,#a0a4ab,#9b9fa6,#9a9ea4,#9da1a8,#a1a5ac,#a2a6ad,#9ea3a9,#969ba1,#8d9198,#858a91,#81858d,#7e838a,#797e85,#6e727a,#646971,#6e727a,#83878f,#94989f,#9ca0a7,#9da1a8,#9ca1a7,#9ba0a6,#9b9fa6,#9ba0a6,#9ca0a7,#9da1a8,#9fa3aa,#a7abb1,#afb3b9,#b4b7bd,#b3b7bd,#aeb2b8,#a7abb1,#9ea2a9,#969aa1,#94989f,#9599a0,#969aa1,#9599a0,#989ca3,#9ea2a9,#a1a5ac,#9fa3a9,#969ba1,#898d94,#797d85,#71767d,#777c84,#82868e,#868a92,#81868d,#80848b,#8c9198,#9ea2a9,#abafb5,#b1b4ba,#b1b5bb,#b1b4ba,#b1b5bb,#b3b6bc,#b3b7bd,#b3b6bc,#b1b5ba,#aeb2b8,#a9adb3,#a0a5ab,#93979e,#83888f,#747981,#676c74,#696e76,#82868e,#9ca0a6,#acb0b6,#b4b7bd,#b6bac0,#b7bbc1,#b6bac0,#b4b8be,#b3b6bc)"></i>
<i style="background:linear-gradient(90deg,#81868d,#72777f,#6f747c,#7f838b,#91969d,#9da1a8,#a0a4ab,#9fa3aa,#999ea4,#91959c,#8d9198,#92979d,#9da1a7,#a6aab0,#aeb1b7,#b1b5bb,#b0b3b9,#a9adb4,#a3a7ad,#9ea2a9,#9ca0a7,#9ea2a8,#a0a4ab,#a0a4ab,#9ca0a7,#94989f,#8b8f96,#84888f,#80848c,#7e828a,#787d85,#6d7179,#636770,#6c7179,#82878e,#9599a0,#9ea2a9,#a0a4ab,#a0a5ab,#a1a5ab,#a1a5ab,#a1a5ab,#a0a5ab,#a0a4ab,#a1a5ac,#a8acb2,#afb3b9,#b4b7bd,#b3b7bd,#aeb2b8,#a7abb1,#9fa3aa,#999ea4,#989da3,#9a9ea5,#999ea4,#979ba2,#989ca3,#9da1a8,#a0a4ab,#9ea2a9,#969aa1,#888d94,#777c83,#6b7078,#70747c,#7c8088,#82868e,#80848c,#82868d,#91959c,#a2a6ac,#adb1b7,#b1b5bb,#b1b5ba,#afb3b9,#afb3b9,#b0b4ba,#b1b5bb,#b2b6bc,#b1b5bb,#b0b3b9,#acafb6,#a3a7ad,#959aa0,#84888f,#747880,#666b73,#686d75,#82868e,#9ca0a7,#acb0b6,#b4b7bd,#b7bac0,#b8bbc1,#b7bac0,#b4b8be,#b3b7bc)"></i>
<i style="background:linear-gradient(90deg,#84888f,#757981,#70747c,#7e838a,#92969d,#9ea3a9,#a3a7ad,#a3a7ad,#9ea2a8,#969aa1,#91959c,#9599a0,#9ea2a9,#a7abb1,#afb2b8,#b2b6bc,#b1b5bb,#abafb5,#a5a9af,#a1a5ab,#9ea2a9,#9ea3a9,#9fa3aa,#9ea2a9,#9a9ea5,#92969d,#898d95,#83888f,#81858d,#80848b,#7b7f87,#70747c,#656a72,#6e727a,#83888f,#969aa1,#a0a4aa,#a3a7ad,#a4a8ae,#a5a9b0,#a6aab0,#a5a9b0,#a4a8af,#a3a7ad,#a3a7ad,#a8acb2,#afb3b9,#b3b7bd,#b3b6bc,#aeb2b8,#a7abb1,#a0a4aa,#9ca0a7,#9da1a7,#9ea2a9,#9da1a7,#999da3,#989ca3,#9ca0a7,#9fa3aa,#9ea2a9,#979ba2,#898e95,#777c83,#686c74,#696e76,#777b83,#80848c,#80858c,#858a91,#959aa0,#a5a9af,#aeb2b8,#b2b5bb,#b0b4ba,#adb1b7,#acb0b6,#adb0b7,#afb3b9,#b1b4ba,#b1b5bb,#b0b4ba,#adb1b7,#a5a9b0,#989ca3,#868b92,#767b82,#696e76,#6a6f77,#82878e,#9ba0a6,#acb0b6,#b3b7bd,#b6babf,#b7bbc0,#b6babf,#b4b7bd,#b2b6bc)"></i>
<i style="background:linear-gradient(90deg,#888c93,#797d85,#72767e,#7f838b,#92979e,#a0a4aa,#a5a9af,#a5a9b0,#a1a5ac,#9a9ea4,#94989f,#979ba2,#9fa3aa,#a8acb2,#b0b3b9,#b3b7bd,#b2b6bc,#adb1b7,#a7abb1,#a3a7ad,#a0a4aa,#9fa3aa,#9fa3a9,#9da1a8,#989ca3,#90949b,#888d94,#848890,#83888f,#83888f,#7f848b,#757a82,#6c7178,#71767e,#858990,#979ba2,#a1a5ac,#a5a9af,#a7abb1,#a9adb3,#aaaeb4,#a9adb3,#a7abb1,#a5a9af,#a4a8af,#a9adb3,#afb3b9,#b3b6bc,#b2b6bc,#adb1b7,#a6aab0,#a0a4aa,#9ea2a9,#a0a4ab,#a2a6ac,#a0a4aa,#9a9fa5,#989da3,#9ca0a6,#9fa3aa,#9ea3a9,#989ca3,#8b8f96,#787d85,#666b73,#656a72,#747980,#80848b,#83878f,#8a8e95,#9a9ea5,#a8acb2,#b0b3b9,#b1b5bb,#aeb2b8,#abafb5,#a8acb2,#a8acb2,#abafb5,#afb3b9,#b0b4ba,#b0b4ba,#aeb2b8,#a8acb2,#9b9fa6,#8a8f96,#7b8087,#70747c,#6f747c,#83888f,#9b9fa5,#aaaeb4,#b2b6bb,#b5b9be,#b6babf,#b5b9be,#b3b6bc,#b1b5bb)"></i>
<i style="background:linear-gradient(90deg,#8c9198,#7e828a,#757a81,#80848c,#93979e,#a0a5ab,#a6aab0,#a7abb2,#a4a8ae,#9da1a7,#979ba2,#989ca3,#a0a4ab,#a9adb3,#b0b4ba,#b4b8be,#b3b7bd,#aeb2b8,#a8acb3,#a4a8af,#a1a5ac,#a0a4aa,#9ea3a9,#9ca0a7,#979ba2,#90949b,#898d94,#868b92,#878c93,#888d94,#858a91,#7d8189,#747980,#777b83,#878b92,#989ca3,#a2a6ad,#a6aab1,#a9adb3,#acb0b6,#adb1b7,#acb0b6,#aaadb4,#a7abb1,#a5a9b0,#a9adb3,#aeb2b8,#b2b5bb,#b1b5bb,#acb0b6,#a5a9af,#9fa4aa,#a0a4aa,#a3a7ad,#a5a9af,#a2a6ad,#9ca0a7,#999da4,#9ca0a6,#9fa3aa,#9fa4aa,#9a9ea4,#8d9299,#7b8087,#676c74,#656971,#747980,#81868d,#878b92,#8f939a,#9ea2a9,#aaaeb4,#b0b4ba,#b0b4ba,#adb0b6,#a7abb2,#a3a7ae,#a3a7ad,#a7abb2,#acb0b6,#afb3b9,#b0b4ba,#afb3b9,#a9adb3,#9ea2a9,#8f939a,#82868e,#787c84,#767a82,#858990,#999ea4,#a8acb3,#b0b4ba,#b3b7bd,#b4b8be,#b3b7bd,#b1b4ba,#afb3b9)"></i>
<i style="background:linear-gradient(90deg,#91959c,#83878f,#797e85,#81858d,#93979e,#a1a5ab,#a7abb1,#a9adb3,#a6aab0,#9ea3a9,#989ca3,#999da4,#a1a5ab,#a9adb3,#b1b4ba,#b5b8be,#b4b7bd,#afb3b9,#a9adb3,#a5a9b0,#a2a6ac,#a0a4ab,#9ea2a9,#9ca0a7,#979ba2,#90949b,#8a8f96,#898e95,#8c9097,#8e9299,#8c9097,#848990,#7c8188,#7d8189,#898d95,#989da3,#a3a7ad,#a7abb1,#aaaeb4,#aeb2b8,#afb3b9,#aeb2b8,#abafb5,#a8acb2,#a6aab0,#a8acb2,#adb1b7,#b1b4ba,#b0b4b9,#abaeb5,#a3a7ad,#9fa3a9,#a0a4ab,#a5a9af,#a7abb1,#a4a8af,#9da1a8,#999ea4,#9ca0a6,#a0a4aa,#a1a5ab,#9ca0a6,#90949b,#7f838b,#6b7077,#676c74,#767b83,#858991,#8b9097,#94989f,#a2a6ac,#acb0b6,#b1b4ba,#afb3b9,#aaaeb4,#a4a8ae,#9ea2a8,#9da1a8,#a3a7ad,#a9adb3,#adb1b7,#afb3b9,#afb3b9,#abafb5,#a1a5ac,#94999f,#898d94,#80858c,#7c8188,#868b92,#989ca3,#a6aab0,#adb1b7,#b1b4ba,#b2b6bc,#b1b4ba,#aeb2b8,#acb0b6)"></i>
<i style="background:linear-gradient(90deg,#9599a0,#888c93,#7d8189,#82868e,#93979e,#a0a4ab,#a7abb1,#a9adb3,#a6aab1,#9fa3aa,#999da4,#999da4,#a1a5ab,#a9adb3,#b1b4ba,#b5b8be,#b4b7bd,#afb3b9,#a9adb3,#a5a9b0,#a2a6ac,#a0a4ab,#9fa3a9,#9ca0a7,#989ca3,#92969d,#8d9198,#8d9198,#91959c,#93989f,#92969d,#8c9097,#848990,#82878e,#8b8f96,#989da3,#a2a6ad,#a7abb1,#abafb5,#afb2b8,#b0b4ba,#afb3b9,#acafb5,#a8acb2,#a5a9b0,#a7abb2,#acb0b6,#afb3b9,#aeb2b8,#a9adb3,#a1a5ac,#9da1a8,#a0a5ab,#a6aab0,#a9adb3,#a6aab0,#9ea2a9,#999ea4,#9ca0a7,#a0a5ab,#a2a6ad,#9ea2a8,#93979e,#83878e,#6f747c,#6c7078,#7b7f87,#898e95,#90959c,#999da4,#a5a9b0,#aeb2b8,#b1b4ba,#aeb2b8,#a8acb2,#a0a4ab,#989ca3,#979ba2,#9ea2a8,#a6aab0,#abaeb5,#adb1b7,#aeb2b8,#acafb6,#a4a8af,#999da4,#8f949b,#888c93,#83878f,#888d94,#969aa1,#a3a7ad,#aaaeb4,#aeb2b8,#afb3b9,#aeb2b8,#abafb5,#a9adb3)"></i>
<i style="background:linear-gradient(90deg,#999da4,#8c9097,#80858c,#82878e,#91969d,#9fa3aa,#a6aab0,#a9acb3,#a6aab0,#9fa3aa,#999da4,#999da4,#a0a4ab,#a9adb3,#b0b4ba,#b4b8be,#b3b7bd,#aeb2b8,#a9acb3,#a4a8af,#a1a5ac,#a0a4aa,#9fa3aa,#9ea2a8,#9a9ea5,#94989f,#90949b,#91959c,#959aa0,#989da3,#979ca2,#92969d,#8b8f96,#878c93,#8c9198,#989ca3,#a1a5ac,#a6aab1,#aaaeb5,#afb2b8,#b0b4ba,#afb3b9,#abafb5,#a7abb1,#a4a8af,#a6aab0,#abafb5,#aeb2b8,#adb1b7,#a7abb1,#9fa3aa,#9ca0a6,#a0a4ab,#a6aab1,#a9adb3,#a6aab0,#9ea2a9,#999da4,#9ca0a7,#a1a5ac,#a4a8ae,#a0a4aa,#969aa1,#868b92,#757981,#71767e,#80848c,#8e9299,#9599a0,#9da1a8,#a8acb2,#afb3b9,#b0b4ba,#acb0b6,#a5a9b0,#9ca0a7,#93979e,#90959c,#989da3,#a2a6ad,#a8acb2,#abafb5,#adb1b7,#acb0b6,#a6aab1,#9da2a8,#9599a0,#8e939a,#898d94,#8a8e95,#94989f,#a0a4aa,#a7abb1,#abafb5,#acb0b6,#abafb5,#a8acb2,#a6aab0)"></i>
<i style="background:linear-gradient(90deg,#9ca0a6,#8f949b,#83878f,#82878e,#90949b,#9da1a8,#a4a8af,#a7abb1,#a5a9af,#9ea2a9,#979ca2,#989ca3,#9fa3aa,#a8acb2,#b0b3b9,#b3b7bd,#b2b6bc,#adb1b7,#a7abb1,#a3a7ad,#a0a4aa,#9fa3aa,#a0a4aa,#9fa3aa,#9ca1a7,#979ba2,#94989f,#9599a0,#9a9ea4,#9da1a7,#9ca0a7,#979ba2,#90959c,#8b9097,#8d9299,#969ba1,#9fa4aa,#a5a9af,#a9adb3,#aeb1b8,#b0b3b9,#aeb2b8,#aaaeb4,#a6aab0,#a2a6ad,#a4a8ae,#a9adb3,#acb0b6,#abafb5,#a6aab0,#9da1a8,#9a9ea5,#9fa3aa,#a6aab0,#a9adb3,#a6aab0,#9ea2a8,#999da3,#9ca0a6,#a2a6ac,#a5a9af,#a2a6ac,#989ca3,#8a8e95,#7a7e86,#777c84,#858991,#92979e,#999da4,#a1a5ab,#aaaeb4,#b0b4ba,#b0b4ba,#abafb5,#a3a7ad,#999da4,#8e9299,#8a8f96,#93989e,#9ea3a9,#a5a9af,#a9adb3,#acb0b6,#acb0b6,#a8acb2,#a1a5ac,#9a9ea5,#94989f,#8d9299,#8c9097,#92979d,#9ca0a7,#a4a8ae,#a8acb2,#a9adb3,#a8acb2,#a4a8af,#a2a6ac)"></i>
<i style="background:linear-gradient(90deg,#9ea2a8,#92969d,#858990,#82868d,#8d9198,#9a9fa5,#a2a6ac,#a5a9af,#a3a7ad,#9ca0a7,#959aa1,#969aa1,#9ea2a9,#a7abb1,#afb2b8,#b2b6bc,#b1b5bb,#abafb5,#a5a9af,#a0a4ab,#9ea2a8,#9ea2a9,#a0a4ab,#a1a5ac,#9fa3aa,#9b9fa5,#979ca2,#999da4,#9da1a8,#a0a4ab,#a0a4aa,#9b9fa6,#9599a0,#8e939a,#8e9299,#9499a0,#9da1a8,#a2a7ad,#a7abb1,#acb0b6,#aeb2b8,#adb0b6,#a8acb2,#a3a7ae,#a0a4aa,#a2a6ac,#a7abb1,#abafb5,#aaaeb4,#a4a8ae,#9b9fa6,#989ca3,#9ea2a8,#a5a9b0,#a8acb3,#a5a9af,#9ca1a7,#979ca2,#9b9fa6,#a2a6ad,#a6aab0,#a3a7ae,#9a9fa5,#8d9198,#7e838a,#7d8289,#8a8e96,#979ba2,#9da1a8,#a4a8ae,#acb0b6,#b1b4ba,#b0b3b9,#aaadb4,#a1a5ac,#969aa1,#898e95,#858a91,#8e939a,#9b9fa6,#a2a6ac,#a6aab1,#abaeb5,#acb0b6,#aaaeb4,#a4a8ae,#9ea2a9,#989ca3,#91969c,#8d9198,#91959c,#999da4,#a0a4ab,#a5a9af,#a6aab1,#a5a9af,#a1a5ac,#9ea3a9)"></i>
<i style="background:linear-gradient(90deg,#9fa4aa,#94989f,#868a92,#80858c,#8a8e95,#979ba2,#9fa3a9,#a2a6ad,#a0a4ab,#999ea4,#93979e,#94989f,#9ca0a7,#a6aab0,#adb1b7,#b1b5bb,#afb3b9,#a9adb3,#a2a6ad,#9da1a8,#9b9fa6,#9da1a8,#a1a5ac,#a4a8ae,#a2a6ad,#9ea2a9,#9b9fa6,#9da1a7,#a0a5ab,#a3a7ae,#a3a7ad,#9fa3a9,#989da3,#91959c,#8d9299,#92969d,#9a9ea5,#9fa4aa,#a5a9af,#aaaeb4,#acb0b6,#aaaeb4,#a5a9b0,#a0a4ab,#9da1a7,#9fa3a9,#a5a9af,#a9adb3,#a9acb3,#a2a7ad,#999ea4,#969aa1,#9ca0a7,#a4a8ae,#a7abb1,#a4a8ae,#9b9fa6,#969aa1,#9b9fa5,#a3a7ad,#a7abb1,#a5a9af,#9ca0a7,#8f949b,#82878e,#82878e,#8f939a,#9a9ea5,#a0a4ab,#a6aab1,#aeb1b7,#b1b5bb,#afb3b9,#a8acb3,#9fa4aa,#94989f,#868a92,#80858c,#8a8e95,#979ba2,#9fa3a9,#a4a8ae,#a9adb3,#acb0b6,#abafb5,#a6aab1,#a1a5ac,#9ca0a7,#9599a0,#8e939a,#8f939a,#969aa1,#9da1a8,#a2a6ac,#a4a8ae,#a2a6ac,#9ea2a8,#9b9fa6)"></i>
<i style="background:linear-gradient(90deg,#a1a5ac,#969aa1,#878c93,#7f838b,#868b92,#93989e,#9b9fa6,#9fa3aa,#9da1a8,#969ba1,#90949b,#91969d,#9a9fa5,#a4a8ae,#acb0b6,#b0b3b9,#adb1b7,#a6aab1,#9fa3a9,#9a9ea5,#989ca3,#9ca0a7,#a2a6ac,#a6aab0,#a5a9af,#a1a5ac,#9ea2a9,#a0a4aa,#a3a8ae,#a6aab0,#a6aab0,#a2a6ac,#9ca0a7,#93979e,#8d9299,#8f949b,#969aa1,#9ca0a7,#a2a6ac,#a7abb1,#a9adb4,#a8acb2,#a3a7ad,#9da1a8,#999da4,#9ca0a6,#a3a7ad,#a7abb2,#a7abb1,#a1a5ab,#979ca2,#94989f,#9a9ea5,#a2a7ad,#a6aab0,#a2a6ad,#999da4,#94999f,#9a9ea5,#a3a7ae,#a8acb2,#a6aab0,#9ea2a9,#92969d,#868b92,#878b92,#93979e,#9ea2a8,#a3a7ae,#a9adb3,#afb3b9,#b1b5bb,#afb2b8,#a7abb1,#9ea2a8,#92969d,#82878e,#7b8088,#858a91,#93979e,#9ba0a6,#a1a5ab,#a7abb1,#abafb5,#acb0b6,#a9adb3,#a4a8ae,#9fa3aa,#989ca3,#8f949b,#8d9299,#92979e,#999ea4,#9ea3a9,#a1a5ab,#9fa3a9,#9a9ea5,#979ba2)"></i>
<i style="background:linear-gradient(90deg,#a3a7ad,#989ca3,#888d94,#7d8289,#82878e,#8f939a,#979ca2,#9ca0a7,#9a9ea5,#93979e,#8d9198,#8f939a,#989ca3,#a2a6ad,#aaaeb4,#aeb1b7,#abafb5,#a3a7ae,#9b9fa6,#959aa0,#94989f,#9a9ea5,#a2a6ad,#a7abb1,#a7abb1,#a3a7ae,#a1a5ac,#a3a7ad,#a6aab0,#a9adb3,#a8acb3,#a5a9af,#9fa3aa,#959aa1,#8d9299,#8c9198,#92969d,#989da3,#9ea2a9,#a4a8ae,#a6aab1,#a5a9af,#9fa3aa,#999da4,#9599a0,#989ca3,#a0a4ab,#a5a9b0,#a5a9b0,#9fa3aa,#959aa0,#92969d,#999da4,#a1a5ac,#a5a9af,#a1a5ac,#979ca2,#93979e,#9a9ea5,#a4a8ae,#a9adb4,#a8acb2,#a0a4ab,#9599a0,#8a8f96,#8b9097,#969aa1,#a0a4ab,#a6aab0,#abaeb5,#b0b3b9,#b1b5bb,#aeb1b7,#a5a9b0,#9ca0a6,#8f939a,#7f838b,#777b83,#81858d,#8f949b,#989ca3,#9ea2a9,#a5a9b0,#abafb5,#adb1b7,#abafb5,#a7abb1,#a2a7ad,#9b9fa6,#91959c,#8c9097,#8f939a,#9599a0,#9b9fa5,#9da1a8,#9b9fa5,#969aa1,#93979e)"></i>
<i style="background:linear-gradient(90deg,#a5a9af,#9a9ea5,#8a8e95,#7c8088,#7e828a,#8a8e95,#93979e,#989ca3,#969ba2,#90949b,#898e95,#8b9097,#9599a0,#9fa4aa,#a8acb2,#abafb5,#a8acb2,#a0a4aa,#969ba1,#90949b,#8f949b,#989ca3,#a2a6ac,#a8acb2,#a9adb3,#a5a9af,#a3a7ad,#a5a9af,#a9adb3,#abafb5,#abafb5,#a8acb2,#a2a6ac,#989ca3,#8d9299,#8a8e95,#8e9299,#94989f,#9a9ea5,#a0a4aa,#a3a7ad,#a1a5ab,#9b9fa6,#9599a0,#91959c,#94999f,#9da1a8,#a3a7ad,#a3a7ae,#9da1a8,#93979e,#90959c,#989ca3,#a1a5ab,#a4a8af,#a0a4ab,#969ba1,#92969d,#9a9ea5,#a5a9af,#abafb5,#aaaeb4,#a2a6ad,#989ca3,#8f939a,#8f949b,#999da4,#a2a6ad,#a7abb1,#acafb6,#b0b4ba,#b0b4ba,#acb0b6,#a3a7ad,#999da4,#8c9097,#7b7f87,#73787f,#7d8289,#8d9198,#9599a0,#9b9fa6,#a3a7ae,#aaaeb4,#adb1b7,#adb0b6,#aaadb4,#a6aab0,#9ea2a9,#93979e,#8a8f96,#8a8f96,#90949b,#969aa1,#989ca3,#969aa1,#91959c,#8d9299)"></i>
<i style="background:linear-gradient(90deg,#a6aab1,#9ca0a7,#8b9097,#7a7f86,#787d84,#848890,#8e9299,#94989f,#93979e,#8c9198,#868b92,#888c93,#91969d,#9ca0a7,#a4a8af,#a8acb2,#a4a8af,#9b9fa6,#91959c,#898e95,#8a8e95,#9499a0,#a1a5ab,#a8acb2,#a9adb3,#a6aab0,#a4a8ae,#a6aab1,#abafb5,#aeb2b8,#aeb1b7,#aaaeb4,#a5a9af,#9a9ea5,#8e9299,#878c93,#8a8e95,#8f949b,#9599a0,#9b9fa6,#9ea2a8,#9ca0a6,#969aa1,#90959b,#8c9198,#90959c,#9a9ea4,#a0a4ab,#a0a4ab,#9a9ea5,#91959c,#8f939a,#979ca2,#a0a4ab,#a4a8ae,#a0a4aa,#969aa1,#92969d,#9a9ea5,#a6aab0,#adb0b6,#acb0b6,#a5a9af,#9ca0a6,#93979e,#93979e,#9b9fa6,#a3a8ae,#a8acb2,#acb0b6,#afb3b9,#afb3b9,#a9adb4,#a0a4aa,#9599a0,#888c94,#787c84,#71767d,#7c8188,#8b8f96,#93979e,#999da4,#a1a5ac,#a9adb4,#aeb2b8,#aeb2b8,#acb0b6,#a9adb3,#a1a6ac,#969aa1,#8a8e95,#858a91,#8a8e95,#90949b,#92979d,#90949b,#8b8f96,#878b93)"></i>
<i style="background:linear-gradient(90deg,#a8acb2,#9ea2a9,#8d9198,#787d84,#72777f,#7d8289,#898d95,#90949b,#90949b,#8a8e95,#83888f,#848890,#8d9299,#989ca3,#a0a4ab,#a3a7ae,#a0a4aa,#969aa1,#8a8f96,#82868e,#83878f,#91959c,#9fa3aa,#a8acb2,#a9adb3,#a6aab0,#a4a8af,#a7abb1,#acb0b6,#b0b4ba,#b0b4ba,#adb1b7,#a7abb1,#9ca1a7,#8f939a,#868a92,#868a92,#8a8f96,#90949b,#9599a0,#979ca2,#969aa1,#91959c,#8b9097,#888c94,#8d9198,#969aa1,#9da1a7,#9da1a8,#979ca2,#8f939a,#8f939a,#989ca3,#a1a5ab,#a4a8af,#a0a4aa,#969aa1,#92969d,#9b9fa6,#a7abb1,#aeb2b8,#aeb2b8,#a8acb2,#9fa3aa,#979ba2,#969aa1,#9da1a8,#a4a8ae,#a8acb2,#abafb5,#adb1b7,#acb0b6,#a6aab0,#9ca0a7,#91959c,#848890,#767a82,#72767e,#7d8289,#8b8f96,#92969d,#979ba2,#9fa3aa,#a8acb2,#aeb1b7,#afb3b9,#aeb2b8,#abafb5,#a5a9af,#989da3,#8a8e95,#81858d,#83878f,#898d94,#8b9097,#898d94,#84888f,#80848c)"></i>
<i style="background:linear-gradient(90deg,#aaaeb4,#a0a4aa,#8e9299,#767b83,#6c7179,#777c83,#848990,#8d9198,#8e9299,#888d94,#81868d,#81858c,#898d94,#93979e,#9ba0a6,#9fa3a9,#9b9fa5,#90949b,#84888f,#7a7e86,#7b8088,#8c9198,#9da1a8,#a7abb1,#a8acb3,#a5a9af,#a4a8ae,#a8abb2,#adb1b7,#b1b5bb,#b2b5bb,#aeb2b8,#a9adb3,#9ea2a9,#90959c,#868a91,#83888f,#868a92,#8a8e95,#8e9299,#90949b,#8e939a,#8b8f96,#878b92,#848990,#8a8e95,#93979e,#999da4,#999ea4,#9499a0,#8d9299,#8f939a,#999da4,#a2a6ad,#a5a9af,#a0a4ab,#969ba1,#93979e,#9ca0a7,#a8acb3,#b0b4b9,#b0b4ba,#aaaeb4,#a3a7ad,#9b9fa6,#999da4,#9ea2a9,#a4a8ae,#a7abb1,#a9adb3,#abafb5,#a9adb3,#a2a6ac,#979ba2,#8c9198,#80858c,#757a82,#757a82,#81858d,#8c9198,#92969d,#959aa0,#9da1a8,#a6aab1,#adb1b7,#b0b4b9,#b0b3b9,#aeb2b8,#a8acb2,#9ca0a6,#8b8f96,#7d8189,#7c8088,#81868d,#84888f,#81868d,#7c8188,#797d85)"></i>
<i style="background:linear-gradient(90deg,#abafb5,#a1a5ac,#8f939a,#757981,#666b73,#71767e,#80858c,#8a8f96,#8d9198,#898d94,#81868d,#7e838a,#848990,#8e9299,#969aa1,#999da4,#959aa0,#8b8f96,#7d8289,#72777e,#747981,#888c94,#9b9fa5,#a5a9af,#a7abb1,#a3a8ae,#a2a6ad,#a7abb2,#aeb2b8,#b3b6bc,#b3b7bc,#b0b3b9,#aaaeb4,#a0a4aa,#92969d,#868b92,#82868e,#82878e,#848990,#868a92,#878b92,#868b92,#848990,#83878e,#82878e,#888c94,#90949b,#9599a0,#969aa1,#92969d,#8d9198,#91959c,#9ca0a6,#a4a8ae,#a6aab0,#a1a5ac,#979ca2,#94989f,#9da1a8,#aaadb4,#b1b5bb,#b1b5bb,#adb0b6,#a5a9b0,#9ea2a9,#9ba0a6,#9ea2a9,#a3a7ad,#a5a9af,#a7abb1,#a7abb2,#a4a8af,#9ca1a7,#92969d,#888c93,#7e828a,#777c83,#7b8087,#868b92,#8f949b,#93979e,#9599a0,#9b9fa6,#a4a8af,#acb0b6,#b0b3b9,#b0b4ba,#b0b3b9,#abafb5,#9fa3a9,#8d9198,#7b7f87,#757a82,#7a7e86,#7c8088,#7a7e86,#757a82,#73777f)"></i>
<i style="background:linear-gradient(90deg,#acafb6,#a2a6ad,#8f939a,#73787f,#62676f,#6d727a,#7e838a,#898e95,#8d9299,#8a8f96,#83878f,#7e828a,#81868d,#898d95,#90959c,#94989f,#90959c,#868a92,#787d84,#6c7078,#6e737b,#848890,#989ca3,#a3a7ad,#a5a9af,#a1a5ac,#a1a5ab,#a7abb1,#aeb2b8,#b3b7bd,#b4b7bd,#b0b4ba,#abaeb5,#a1a5ab,#94989f,#888d94,#82878e,#80858c,#7f848b,#7d8289,#7d8189,#7d8289,#7f838b,#80858c,#82878e,#888c93,#8e9299,#92969d,#92969d,#8f949b,#8d9198,#93979e,#9ea3a9,#a6aab1,#a8abb2,#a2a6ad,#999da4,#959aa0,#9ea2a9,#aaaeb4,#b2b6bb,#b3b6bc,#aeb2b8,#a8acb2,#a1a5ab,#9da1a8,#9ea3a9,#a1a5ac,#a3a7ad,#a4a8ae,#a3a7ad,#9fa3a9,#979ba2,#8c9198,#84888f,#7c8188,#7b8087,#83878e,#8d9198,#93989e,#9599a0,#9599a0,#999da4,#a1a6ac,#aaaeb4,#afb3b9,#b1b5bb,#b1b5bb,#adb1b7,#a2a6ac,#90949b,#7b7f87,#71767d,#737880,#757981,#737880,#71757d,#6f747b)"></i>
<i style="background:linear-gradient(90deg,#acb0b6,#a2a6ad,#8f939a,#72767e,#5f646c,#6c7078,#7e828a,#8a8f96,#90949b,#8e9299,#868b92,#7f848b,#7f848b,#858991,#8b9097,#8f939a,#8c9098,#83878f,#767a82,#696d75,#6b7078,#81868d,#969aa1,#a1a5ab,#a3a7ad,#9fa3a9,#9ea2a9,#a5a9b0,#aeb2b8,#b4b7bd,#b4b8bd,#b0b4ba,#aaaeb5,#a1a5ac,#969aa1,#8b9097,#858990,#80858c,#7b8088,#757a82,#72767e,#747981,#7a7f87,#80848c,#848890,#898d94,#8d9198,#8f939a,#8f939a,#8e9299,#8e9299,#969ba1,#a2a6ac,#a9adb3,#a9adb3,#a4a8ae,#9a9fa5,#979ba2,#9fa3aa,#abafb5,#b2b6bc,#b3b7bd,#afb3b9,#a9adb3,#a3a7ad,#9ea3a9,#9ea2a9,#a0a4aa,#a0a4ab,#a0a4ab,#9ea2a8,#989da3,#90959c,#878c93,#81868d,#7d8289,#81868d,#8b8f96,#93989f,#989ca3,#979ba2,#9599a0,#979ba2,#9ea2a9,#a7abb1,#aeb1b7,#b1b4ba,#b2b5bb,#afb2b8,#a5a9af,#93989f,#7d8189,#70747c,#6f747c,#70747c,#6f747c,#6f747b,#6e737b)"></i>
<i style="background:linear-gradient(90deg,#acb0b6,#a2a6ad,#8f939a,#71757d,#5f636c,#6d7179,#80848c,#8d9198,#93979e,#92979e,#8b9097,#82878e,#7f848b,#82878e,#878c93,#8b8f96,#898e95,#82878e,#767b83,#6a6e76,#6b7078,#80848c,#93989f,#9ea2a9,#a0a4ab,#9ca0a7,#9ca0a6,#a4a8ae,#aeb1b7,#b3b7bd,#b4b7bd,#b0b3b9,#aaaeb4,#a1a6ac,#989ca3,#8f949b,#888d94,#82878e,#7a7e86,#6e737b,#676c74,#6c7179,#787d84,#81868d,#878c93,#8c9097,#8d9299,#8d9198,#8c9098,#8d9198,#90959b,#9a9ea5,#a5a9b0,#abafb5,#abafb5,#a5a9af,#9ca0a7,#989ca3,#a0a4aa,#abafb5,#b2b6bc,#b3b7bd,#b0b3b9,#aaaeb4,#a4a8ae,#9fa3aa,#9ea2a8,#9ea2a8,#9da1a8,#9ca0a7,#989ca3,#92969d,#8a8f96,#84888f,#80858c,#80848c,#888c93,#92979e,#9a9ea5,#9ca0a7,#9a9ea5,#969aa1,#9599a0,#9a9fa5,#a3a7ae,#abafb5,#b0b3b9,#b2b5bb,#b0b4ba,#a8acb2,#989ca2,#81868d,#72777e,#6f747c,#6e737b,#6f747c,#71757d,#72767e)"></i>
<i style="background:linear-gradient(90deg,#abafb5,#a1a6ac,#8e9299,#70757d,#60656d,#70757d,#83888f,#90949b,#979ba2,#979ca2,#91959c,#878b92,#81868d,#82868d,#858990,#888d94,#898d94,#84888f,#7a7f86,#6e737b,#6e737b,#80858c,#92969d,#9ca0a7,#9da2a8,#999da4,#999da4,#a2a6ad,#adb0b6,#b3b6bc,#b3b6bc,#aeb2b8,#a8acb2,#a1a5ac,#9a9ea5,#93989f,#8d9299,#868a91,#7a7f86,#696e76,#5e636b,#676b73,#787c84,#848990,#8c9097,#8f949b,#8f939a,#8c9097,#8b8f96,#8d9299,#93979e,#9ea2a9,#a9adb3,#aeb1b8,#acb0b6,#a6aab0,#9da1a8,#999da4,#a0a4aa,#aaaeb4,#b2b5bb,#b3b7bc,#afb3b9,#aaaeb4,#a5a9af,#a0a4aa,#9da1a8,#9ca0a7,#9a9ea5,#979ca2,#92969d,#8b8f97,#858990,#82868d,#81868d,#848990,#8e939a,#999ea4,#a0a4aa,#a1a5ab,#9da1a8,#979ca2,#93989e,#969aa1,#9fa3aa,#a9acb3,#aeb2b8,#b1b5bb,#b1b4ba,#aaaeb4,#9ca0a7,#878c93,#777c83,#72777f,#70757d,#72777f,#767a82,#787d84)"></i>
<i style="background:linear-gradient(90deg,#aaaeb4,#a0a4ab,#8c9098,#70747c,#646871,#757a81,#888c93,#94989f,#9ca0a7,#9da1a7,#979ba2,#8c9198,#858991,#83878f,#848990,#888d94,#8a8e95,#878c93,#80848c,#767a82,#757981,#82878e,#92969d,#9a9fa5,#9b9fa6,#969ba1,#979ba2,#a0a5ab,#abafb5,#b1b5bb,#b1b5bb,#adb0b6,#a6aab1,#a0a4ab,#9ba0a6,#979ca2,#92979e,#8a8e95,#7d8189,#676c74,#585d65,#646871,#7a7e86,#888d94,#91959c,#94989f,#91969c,#8c9198,#8a8f96,#8e939a,#969aa1,#a2a6ac,#acb0b6,#b0b4ba,#aeb1b7,#a7abb1,#9ea2a9,#9a9ea5,#9fa3aa,#a9adb3,#b0b4ba,#b2b6bb,#aeb2b8,#aaaeb4,#a5a9af,#a0a4ab,#9da1a8,#9a9fa5,#989ca3,#93989f,#8c9198,#858991,#81858d,#82868d,#848990,#898e95,#9599a0,#a0a4aa,#a5a9af,#a4a8af,#9fa3aa,#989da3,#91969d,#91959c,#9a9ea5,#a5a9af,#acb0b6,#b0b4ba,#b1b5bb,#acb0b6,#a0a4aa,#8e9299,#7e838a,#787d84,#757a82,#787d84,#7d8189,#80848b)"></i>
<i style="background:linear-gradient(90deg,#a9adb3,#9fa3a9,#8a8f96,#6f747c,#686d75,#7b7f87,#8c9198,#989da3,#a0a4ab,#a2a6ac,#9ca0a7,#92969d,#8a8e95,#868a91,#868a91,#8a8e95,#8d9198,#8c9097,#868b92,#7e828a,#7c8088,#868a92,#92979d,#9a9ea4,#9a9ea5,#9599a0,#9599a0,#9fa3aa,#aaaeb4,#b0b4ba,#b0b4b9,#aaaeb4,#a4a8ae,#9fa3aa,#9da1a8,#9b9fa6,#979ba2,#8f939a,#80858c,#686d75,#565b63,#646971,#7d8289,#8d9198,#969aa1,#989ca3,#94989f,#8e9299,#8b8f96,#90959c,#999ea4,#a5a9af,#aeb2b8,#b2b5bb,#afb2b8,#a7abb2,#9fa3aa,#9a9ea5,#9fa3a9,#a8acb2,#afb3b9,#b0b4ba,#adb1b7,#a9adb3,#a4a8ae,#a0a4ab,#9da1a7,#9a9ea4,#969aa1,#90959b,#888c93,#81858c,#7f848b,#83888f,#888d94,#8f939a,#9b9fa6,#a5a9af,#a9adb3,#a7abb1,#a1a5ac,#999ea4,#8f949b,#8c9097,#9499a0,#a1a5ac,#aaadb4,#afb2b8,#b1b5bb,#aeb1b8,#a4a8ae,#94989f,#868a91,#7f848b,#7c8188,#7f848b,#848990,#878c93)"></i>
<i style="background:linear-gradient(90deg,#a7abb1,#9da1a7,#888d94,#6f747c,#6d7179,#80858c,#91959c,#9ca0a7,#a4a8ae,#a6aab0,#a1a5ac,#979ca2,#8f939a,#8a8e95,#898d94,#8d9198,#91959c,#91969d,#8d9199,#868a91,#83888f,#8a8f96,#94989f,#9a9ea5,#999da4,#94989f,#94989f,#9ea2a9,#a9adb3,#afb2b8,#aeb2b8,#a8acb2,#a1a5ac,#9ea2a9,#9ea2a9,#9fa3a9,#9ca0a6,#93979e,#858990,#6c7078,#585d65,#676c74,#81868d,#91969c,#9a9ea5,#9ca0a7,#979ca2,#8f949b,#8c9198,#93979e,#9da1a7,#a8acb2,#b1b4ba,#b3b7bd,#afb3b9,#a8acb2,#9fa3aa,#9a9ea5,#9da2a8,#a6aab0,#adb1b7,#aeb2b8,#abafb5,#a7abb1,#a3a7ae,#a0a4aa,#9da1a8,#9a9ea4,#9599a0,#8e939a,#858a91,#7e838a,#80848c,#878b92,#8d9198,#94999f,#a0a4ab,#a9adb3,#acb0b6,#a9adb3,#a3a7ad,#9a9ea5,#8d9299,#868b92,#8e939a,#9da1a7,#a7abb1,#adb1b7,#b0b4ba,#afb3b9,#a7abb1,#999ea4,#8d9198,#868b92,#83888f,#868b92,#8c9097,#8f939a)"></i>
<i style="background:linear-gradient(90deg,#a5a9b0,#9a9fa5,#868a92,#6f747c,#71767d,#858a91,#9599a0,#a0a4aa,#a7abb2,#aaadb4,#a5a9b0,#9ca0a7,#94989f,#8e939a,#8d9198,#90959c,#9599a0,#969ba1,#93979e,#8d9198,#8a8f96,#8f939a,#969ba1,#9b9fa6,#9a9ea5,#9499a0,#94999f,#9ea2a8,#a8acb2,#adb1b7,#acb0b6,#a5a9af,#9ea2a9,#9ca1a7,#9fa3aa,#a1a5ac,#9fa3aa,#979ba2,#898d94,#70757c,#5c6169,#6b7078,#858a91,#9599a0,#9ea2a9,#a0a4aa,#9a9ea5,#92969d,#8e939a,#9599a0,#9fa3aa,#abaeb5,#b2b6bc,#b4b8bd,#b0b3b9,#a8acb2,#9fa3aa,#999da4,#9ca0a7,#a4a8ae,#aaaeb5,#acb0b6,#a8acb3,#a5a9af,#a2a6ac,#a0a4aa,#9ea2a8,#9a9fa5,#959aa1,#8e939a,#858990,#7f838b,#83878e,#8b8f96,#92969d,#999da4,#a4a8ae,#acb0b6,#aeb2b8,#abafb5,#a4a8ae,#9a9ea5,#8b9097,#81858d,#888d94,#989da3,#a4a8ae,#abafb5,#b0b4ba,#b0b4ba,#aaaeb4,#9ea2a9,#93989f,#8d9198,#8a8e96,#8d9198,#92969d,#9599a0)"></i>
<i style="background:linear-gradient(90deg,#a4a8ae,#989ca3,#84888f,#6f747c,#757981,#898e95,#989da3,#a3a7ad,#aaaeb4,#acb0b6,#a9adb3,#a0a4ab,#989ca3,#93979e,#91959c,#9499a0,#999da4,#9b9fa6,#989da3,#93979e,#90949b,#93989f,#999da4,#9da1a7,#9ba0a6,#969ba1,#969aa1,#9ea2a9,#a7abb1,#acb0b6,#aaaeb4,#a3a7ad,#9ca0a6,#9b9fa6,#a0a4aa,#a3a7ae,#a2a6ad,#9a9ea5,#8c9198,#757981,#62676f,#70757d,#898d95,#989da3,#a1a5ac,#a2a7ad,#9da1a8,#94989f,#91959c,#979ca2,#a2a6ac,#acb0b6,#b4b7bd,#b4b8be,#afb3b9,#a7abb1,#9ea2a9,#989ca3,#9a9ea5,#a1a6ac,#a8acb2,#a9adb3,#a6aab0,#a2a6ad,#a0a4ab,#a0a4aa,#9fa3a9,#9ca0a7,#979ba2,#90949b,#868b92,#82868e,#868b92,#8f949b,#969aa1,#9da2a8,#a7abb2,#aeb2b8,#afb3b9,#abafb5,#a4a8ae,#999ea4,#898d95,#7c8088,#82878e,#94999f,#a1a5ac,#a9adb3,#afb3b9,#b0b4ba,#acb0b6,#a2a6ad,#999da4,#93979e,#90949b,#93979e,#989ca3,#9a9fa5)"></i>
<i style="background:linear-gradient(90deg,#a2a6ac,#969aa1,#81868d,#6f747c,#787c84,#8d9198,#9b9fa6,#a5a9af,#acb0b6,#afb2b8,#abafb5,#a4a8ae,#9ca0a7,#979ba2,#959aa0,#989da3,#9da1a8,#9fa3a9,#9da1a7,#989ca3,#9599a0,#989ca3,#9ca1a7,#9fa3aa,#9ea2a8,#999da4,#989ca3,#9fa3aa,#a7abb1,#abafb5,#a8acb2,#a1a5ab,#999da4,#9a9ea5,#a0a4ab,#a5a9af,#a4a8af,#9da1a7,#8f949b,#797d85,#686c74,#757981,#8c9198,#9b9fa6,#a3a7ae,#a5a9af,#9fa3aa,#969ba1,#93979e,#9a9ea4,#a4a8ae,#aeb2b8,#b4b8be,#b5b8be,#afb3b9,#a6aab0,#9da1a8,#969ba1,#989ca3,#9fa3a9,#a5a9af,#a6aab1,#a3a7ad,#9fa3aa,#9fa3a9,#a0a4aa,#a0a5ab,#9fa3a9,#9a9ea5,#93979e,#8a8e96,#868a92,#8b8f97,#94989f,#9a9ea5,#a1a5ac,#aaaeb4,#b0b3b9,#b0b4ba,#abafb5,#a3a7ad,#989ca3,#868b92,#777b83,#7d8289,#91959c,#9fa3aa,#a8acb2,#aeb2b8,#b1b5ba,#adb1b7,#a5a9b0,#9da1a8,#989ca3,#9599a0,#979ca2,#9ca0a7,#9fa3a9)"></i>
<i style="background:linear-gradient(90deg,#a0a4ab,#94989f,#7f848b,#6f747c,#7a7e86,#8f939a,#9da1a8,#a6aab1,#aeb1b8,#b0b4ba,#aeb1b7,#a6aab1,#a0a4aa,#9b9fa6,#999da4,#9ca0a7,#a0a4ab,#a2a6ad,#a0a4ab,#9ba0a6,#999da4,#9ba0a6,#a0a4aa,#a2a6ad,#a1a5ab,#9ca0a7,#9b9fa6,#a1a5ab,#a7abb1,#aaaeb4,#a7abb1,#9fa3a9,#979ba2,#999da4,#a0a4ab,#a6aab0,#a6aab0,#9fa3a9,#92969d,#7d8189,#6d7179,#797e85,#8f939a,#9da1a8,#a5a9af,#a6aab0,#a1a5ab,#989da3,#9599a0,#9ba0a6,#a5a9af,#afb3b9,#b5b8be,#b4b8be,#aeb2b8,#a5a9af,#9ba0a6,#94989f,#9599a0,#9ca0a7,#a2a6ad,#a3a7ae,#a0a4aa,#9ca1a7,#9da1a8,#a0a4ab,#a2a6ad,#a1a5ac,#9da1a8,#979ba2,#8f939a,#8b8f96,#90949b,#989ca3,#9ea2a9,#a4a8ae,#acb0b6,#b1b4ba,#b0b4ba,#aaaeb4,#a2a6ac,#979ba2,#84888f,#72777f,#797e85,#8e9299,#9da1a8,#a6aab0,#aeb2b8,#b1b5bb,#afb3b9,#a8acb2,#a0a5ab,#9ba0a6,#999da4,#9ba0a6,#a0a4aa,#a2a6ad)"></i>
<i style="background:linear-gradient(90deg,#9fa3a9,#92969d,#7d8289,#6f747b,#7c8088,#91959c,#9fa3a9,#a8acb2,#afb3b9,#b2b6bb,#afb3b9,#a9adb3,#a3a7ad,#9ea2a9,#9da1a7,#9fa3aa,#a3a7ae,#a5a9af,#a3a7ae,#9fa3a9,#9da1a7,#9fa3a9,#a3a7ad,#a5a9af,#a4a8ae,#a0a4aa,#9ea2a9,#a3a7ad,#a8acb2,#a9adb3,#a6aab0,#9da1a8,#959aa1,#989ca3,#a0a4ab,#a7abb1,#a7abb1,#a0a4ab,#94989f,#80858c,#71767e,#7d8189,#91959c,#9fa3a9,#a6aab1,#a7abb2,#a2a6ad,#9a9ea5,#979ba2,#9da1a8,#a6aab1,#b0b3b9,#b5b9be,#b4b8be,#adb1b7,#a3a7ae,#9a9ea5,#92969d,#92979d,#999da4,#a0a4aa,#a0a5ab,#9ca0a7,#999ea4,#9ca0a7,#a1a5ab,#a4a8af,#a4a8ae,#a0a4ab,#9a9ea5,#93979e,#90949b,#94989f,#9ba0a6,#a1a5ac,#a7abb1,#adb1b7,#b1b5bb,#b0b3b9,#a9adb3,#a0a4ab,#9599a0,#81858c,#6e727a,#757a82,#8c9097,#9b9fa6,#a5a9af,#adb1b7,#b1b5bb,#b0b4ba,#aaaeb4,#a3a7ae,#9fa3a9,#9da1a7,#9fa3a9,#a3a7ad,#a5a9af)"></i>
<i style="background:linear-gradient(90deg,#9da1a8,#90949b,#7b8087,#6f737b,#7d8289,#93979e,#a0a4ab,#a9adb3,#b0b4ba,#b3b7bd,#b1b5bb,#abafb5,#a6aab0,#a2a6ac,#a0a4ab,#a3a7ad,#a6aab0,#a8acb2,#a6aab0,#a2a6ad,#a0a4ab,#a2a6ad,#a6aab0,#a8acb2,#a7abb1,#a3a7ad,#a1a5ac,#a4a8af,#a8acb2,#a8acb2,#a4a8ae,#9b9fa6,#93989f,#979ba2,#a0a4ab,#a8abb2,#a8acb2,#a2a6ac,#969ba1,#84888f,#767a82,#80848c,#93979e,#a0a4ab,#a7abb2,#a9adb3,#a4a8ae,#9ca0a7,#999da4,#9fa3aa,#a8acb2,#b0b4ba,#b5b9be,#b4b7bd,#acb0b6,#a2a6ac,#989ca3,#8f949b,#8f939a,#969aa1,#9ca1a7,#9da2a8,#999da4,#969ba1,#9a9fa5,#a1a5ac,#a6aab0,#a7abb1,#a3a7ae,#9ea2a8,#979ba2,#94989f,#989ca3,#9fa3a9,#a4a8ae,#a9adb3,#afb3b9,#b2b5bb,#afb3b9,#a8acb2,#9fa3a9,#93979e,#7e828a,#696e76,#71767e,#898d94,#999da4,#a3a7ae,#acb0b6,#b1b5bb,#b1b4ba,#acb0b6,#a6aab0,#a2a6ac,#a0a4aa,#a2a6ac,#a5a9b0,#a7abb2)"></i>
<i style="background:linear-gradient(90deg,#9b9fa6,#8d9198,#787d84,#6e727a,#7e838a,#94989f,#a1a5ab,#a9adb3,#b0b4ba,#b4b8bd,#b3b6bc,#aeb2b8,#a9adb3,#a5a9af,#a4a8ae,#a6aab1,#a9adb4,#abafb5,#a9adb3,#a6aab0,#a4a8ae,#a5a9b0,#a9acb3,#abaeb5,#aaaeb4,#a6aab0,#a4a8af,#a6aab0,#a8acb2,#a7abb1,#a2a6ac,#989da3,#91959c,#9599a0,#a0a4ab,#a8acb2,#a9adb4,#a4a8ae,#999da4,#888c93,#7a7f87,#83878e,#94999f,#a1a5ab,#a8acb2,#a9adb4,#a5a9af,#9ea2a9,#9ca0a6,#a1a5ab,#a9adb3,#b1b5bb,#b5b9be,#b3b7bd,#abafb5,#a0a4ab,#959aa0,#8c9098,#8b9097,#92979e,#999da4,#9a9fa5,#969aa1,#94989f,#9a9ea4,#a2a6ad,#a8acb2,#a9adb3,#a5a9b0,#a0a4ab,#9a9ea5,#979ba2,#9b9fa6,#a1a5ac,#a6aab0,#abafb5,#b0b4ba,#b2b6bc,#afb3b9,#a7abb1,#9ea2a8,#91969d,#7c8188,#666b73,#6d7179,#858a91,#969ba1,#a1a5ac,#abafb5,#b0b4ba,#b1b5bb,#adb1b7,#a8acb2,#a4a8af,#a3a7ad,#a4a8af,#a8acb2,#a9adb3)"></i>
<i style="background:linear-gradient(90deg,#989da3,#8a8e96,#757a81,#6c7179,#7f838b,#9499a0,#a1a5ab,#a9adb3,#b0b4ba,#b4b8be,#b4b8bd,#b0b4ba,#acb0b6,#a9adb3,#a8acb2,#aaaeb4,#adb1b7,#aeb2b8,#acb0b6,#a9adb3,#a7abb1,#a8acb3,#abafb5,#adb1b7,#adb0b6,#aaaeb4,#a8acb2,#a8acb2,#a8acb2,#a5a9b0,#9fa3aa,#9599a0,#8e9299,#93979e,#a0a4aa,#a9adb3,#abaeb5,#a5a9b0,#9ca0a7,#8c9097,#7f848b,#858991,#9599a0,#a1a5ab,#a8acb2,#aaaeb4,#a6aab1,#a1a5ab,#9ea2a9,#a3a7ad,#aaaeb4,#b1b5bb,#b5b8be,#b2b6bc,#aaaeb4,#9ea2a9,#93979e,#888d94,#878c93,#8e939a,#969aa1,#989ca3,#93979e,#92979d,#9a9ea4,#a3a7ae,#a9adb4,#aaaeb4,#a7abb1,#a2a6ac,#9ca0a6,#999da4,#9da1a7,#a3a7ad,#a8acb2,#acb0b6,#b1b5ba,#b2b6bc,#aeb2b8,#a6aab0,#9da1a7,#91959c,#7c8088,#646971,#696d75,#81868d,#93979e,#9ea2a9,#a9adb3,#afb3b9,#b1b5ba,#aeb2b8,#aaaeb4,#a6aab1,#a5a9af,#a7abb1,#a9adb3,#abafb5)"></i>
<i style="background:linear-gradient(90deg,#969aa1,#878b92,#72767e,#6b7077,#7f838b,#94999f,#a0a4ab,#a8acb2,#afb3b9,#b4b8be,#b5b8be,#b2b6bc,#afb2b8,#acb0b6,#acb0b6,#aeb1b8,#b0b4ba,#b1b5bb,#afb3b9,#acb0b6,#aaaeb4,#abafb5,#aeb2b8,#b0b3b9,#afb3b9,#adb1b7,#abafb5,#aaaeb4,#a8acb2,#a3a7ad,#9ba0a6,#91969c,#8a8e95,#91959c,#9fa3a9,#a9adb3,#abafb5,#a7abb1,#9fa3aa,#91959c,#848990,#878c93,#9599a0,#a0a4ab,#a7abb2,#aaaeb4,#a7abb2,#a3a7ad,#a1a5ac,#a5a9af,#acafb5,#b2b5bb,#b4b8be,#b1b5bb,#a8acb2,#9ca0a7,#90949b,#848990,#82878e,#8a8f96,#93979e,#959aa0,#92969d,#92969d,#9a9fa5,#a5a9af,#abafb5,#acb0b6,#a8acb2,#a3a7ad,#9da1a7,#9a9ea5,#9ea2a8,#a4a8ae,#a9adb3,#adb1b7,#b1b5bb,#b2b6bb,#aeb1b7,#a5a9b0,#9ca0a7,#92969d,#7e828a,#656a72,#656a72,#7c8188,#8f939a,#9b9fa6,#a6aab0,#aeb1b7,#b0b4ba,#aeb2b8,#aaaeb4,#a8acb2,#a7abb1,#a8acb3,#abafb5,#abafb5)"></i>
<i style="background:linear-gradient(90deg,#93989e,#83888f,#6e737b,#6a6e76,#7f838b,#94989f,#9fa3aa,#a6aab1,#aeb2b8,#b3b7bd,#b5b9be,#b4b7bd,#b1b5bb,#afb3b9,#afb3b9,#b1b5bb,#b3b7bd,#b4b7bd,#b2b6bc,#afb3b9,#adb1b7,#aeb2b8,#b0b4ba,#b2b5bb,#b2b5bb,#b0b4ba,#aeb2b8,#abafb5,#a7abb1,#a0a4ab,#979ba2,#8d9198,#868b92,#8f939a,#9ea2a8,#a9adb3,#acb0b6,#a9adb3,#a2a6ac,#959aa1,#898d95,#898d94,#94989f,#9fa3a9,#a6aab1,#a9adb4,#a8acb3,#a5a9b0,#a4a8ae,#a7abb1,#acb0b6,#b1b5bb,#b3b7bd,#b0b4b9,#a6aab0,#999ea4,#8c9198,#80848c,#7d8189,#868a91,#90949b,#94989f,#91959c,#93979e,#9ca0a7,#a6aab0,#acb0b6,#acb0b6,#a9adb3,#a3a7ae,#9ca1a7,#999ea4,#9da2a8,#a4a8af,#a9adb4,#aeb2b8,#b1b5bb,#b1b5bb,#adb0b7,#a4a8af,#9ca1a7,#93989f,#81868d,#696e76,#646971,#777c83,#8a8e96,#979ba2,#a3a7ad,#abafb5,#aeb2b8,#adb1b7,#abaeb5,#a9adb3,#a8acb2,#aaaeb4,#abafb5,#abafb5)"></i>
<i style="background:linear-gradient(90deg,#91959c,#80858c,#6c7078,#696e76,#7f838b,#93979e,#9da1a8,#a4a8ae,#acafb6,#b2b6bb,#b5b8be,#b5b8be,#b3b7bd,#b2b6bb,#b2b6bc,#b4b8bd,#b6b9bf,#b6b9bf,#b4b8bd,#b1b5bb,#afb3b9,#afb3b9,#b1b5bb,#b3b7bd,#b3b7bd,#b2b6bc,#b0b4ba,#adb0b6,#a6aab0,#9da1a8,#92979d,#888d94,#83878e,#8c9198,#9da1a7,#a8acb2,#acb0b6,#aaaeb4,#a5a9af,#9a9ea5,#8e9299,#8a8f96,#93979e,#9da1a8,#a5a9af,#a9adb3,#a9adb3,#a8acb2,#a7abb1,#a9adb3,#adb1b7,#b1b5bb,#b2b6bc,#aeb2b8,#a4a8af,#979ca2,#8a8e95,#7b8087,#777c83,#81858d,#8d9299,#93979e,#92969d,#9599a0,#9fa3a9,#a8acb2,#adb1b7,#adb0b6,#a9adb3,#a3a7ad,#9b9fa6,#989ca3,#9ca0a7,#a4a8ae,#a9adb3,#aeb2b8,#b1b5bb,#b0b4ba,#abafb5,#a4a8ae,#9da1a8,#969aa1,#868b92,#70747c,#656a72,#73777f,#858a91,#93979e,#9fa3aa,#a8acb2,#acb0b6,#acafb6,#aaaeb4,#a9adb3,#a9adb3,#abafb5,#acb0b6,#abafb5)"></i>
<i style="background:linear-gradient(90deg,#8f939a,#7e828a,#6a6f77,#6a6e76,#7f838b,#92969d,#9b9fa6,#a1a5ab,#a9acb3,#b0b3b9,#b4b8bd,#b5b9bf,#b5b8be,#b4b7bd,#b4b8be,#b6bac0,#b8bbc1,#b7bbc1,#b6b9bf,#b3b7bc,#b1b5ba,#b1b4ba,#b2b6bc,#b4b8be,#b5b8be,#b4b8bd,#b2b6bc,#adb1b7,#a5a9af,#999ea4,#8d9299,#848990,#80858c,#8b8f96,#9b9fa6,#a7abb1,#acb0b6,#abafb5,#a7abb1,#9ea2a9,#92969d,#8c9097,#91959c,#9a9fa5,#a2a7ad,#a8acb2,#aaaeb4,#aaaeb4,#a9adb3,#aaaeb5,#adb1b7,#b0b4ba,#b1b4ba,#acb0b6,#a3a7ad,#969aa1,#878c93,#777c83,#71767e,#7d8189,#8b9097,#93979e,#94989f,#989ca3,#a2a6ac,#aaaeb4,#adb1b7,#acb0b6,#a8acb2,#a1a5ac,#999da4,#9599a0,#9a9ea5,#a3a7ad,#a9adb3,#adb1b7,#b0b4ba,#afb3b9,#aaaeb4,#a3a7ad,#9ea2a8,#999da4,#8c9097,#777c84,#686d75,#6f747c,#81858c,#8f939a,#9b9fa6,#a4a8af,#a9adb3,#a9adb3,#a9adb3,#a9adb3,#aaaeb4,#abafb5,#acb0b6,#aaaeb4)"></i>
<i style="background:linear-gradient(90deg,#8e9299,#7c8188,#6a6f77,#6b7078,#80848b,#91959c,#999da4,#9da1a8,#a5a9af,#adb1b7,#b2b6bc,#b5b9be,#b5b9bf,#b5b9be,#b6babf,#b8bbc1,#b9bdc2,#b8bcc2,#b6bac0,#b4b7bd,#b1b5bb,#b1b5bb,#b2b6bc,#b4b8be,#b5b9bf,#b5b9be,#b3b7bd,#aeb2b8,#a4a8ae,#969aa1,#898d95,#81868d,#7f838b,#8a8e95,#9a9ea5,#a6aab0,#acafb6,#acb0b6,#a9adb3,#a1a6ac,#969aa1,#8d9299,#8f949b,#989ca3,#a0a4ab,#a7abb1,#abafb5,#acb0b6,#abafb5,#acafb5,#adb1b7,#afb2b8,#afb2b8,#abaeb5,#a1a5ac,#9599a0,#868a92,#747981,#6c7179,#797d85,#8a8f96,#94989f,#969aa1,#9ca0a6,#a5a9af,#acb0b6,#aeb2b8,#acafb6,#a6aab1,#9fa3aa,#969aa1,#91969c,#979ba2,#a1a5ab,#a7abb2,#acb0b6,#afb3b9,#aeb1b7,#a8acb3,#a2a6ad,#9fa3a9,#9ca0a7,#92969d,#7f848b,#6e737b,#6e737b,#7d8289,#8b9097,#989ca2,#a0a4ab,#a5a9af,#a6aab1,#a7abb1,#a8acb2,#aaaeb4,#acb0b6,#acb0b6,#a9adb3)"></i>
<i style="background:linear-gradient(90deg,#8d9299,#7d8189,#6c7179,#6f737b,#81868d,#90959b,#969ba1,#9a9ea4,#a0a5ab,#a9adb3,#b0b4ba,#b4b8bd,#b5b9bf,#b6b9bf,#b7bbc0,#b9bcc2,#babdc3,#b9bcc2,#b7bac0,#b4b8bd,#b1b5bb,#b0b4ba,#b1b5bb,#b4b7bd,#b5b9be,#b5b9bf,#b4b7bd,#aeb2b8,#a3a7ad,#93979e,#868a91,#80848c,#7f848b,#898e95,#989ca3,#a4a8af,#aaaeb4,#acb0b6,#abafb5,#a4a8af,#999da4,#8f939a,#8e9299,#959aa0,#9ea2a9,#a6aab0,#abafb5,#adb1b7,#adb1b7,#acb0b6,#acb0b6,#adb1b7,#acb0b6,#a9adb3,#a0a4ab,#94999f,#868a91,#73777f,#696d75,#767b82,#898e95,#9599a0,#999da4,#a0a4aa,#a8acb2,#adb1b7,#aeb2b8,#abaeb5,#a5a9af,#9ca0a7,#91969c,#8c9098,#93979e,#9ea2a9,#a6aab0,#abafb5,#adb1b7,#acb0b6,#a7abb1,#a1a5ac,#a0a4aa,#9fa3aa,#979ca2,#878c93,#757a81,#70747c,#7b8088,#898e95,#94999f,#9ca0a7,#a1a5ab,#a3a7ad,#a5a9af,#a7abb1,#aaaeb4,#acb0b6,#abafb5,#a7abb2)"></i>
<i style="background:linear-gradient(90deg,#8e939a,#7e828a,#70757c,#73787f,#83888f,#90949b,#9499a0,#969aa1,#9ca0a7,#a5a9af,#adb1b7,#b2b6bc,#b5b8be,#b5b9bf,#b7bbc0,#b9bdc2,#babdc3,#b9bcc2,#b6babf,#b3b7bd,#b1b4ba,#afb3b9,#b0b4b9,#b2b6bc,#b4b8be,#b5b9be,#b4b7bd,#adb1b7,#a1a5ac,#91959c,#84888f,#80858c,#82868d,#8a8f96,#979ba2,#a2a6ad,#a9adb3,#acafb6,#acb0b6,#a7abb1,#9ca0a7,#91959c,#8d9198,#93979e,#9ca0a7,#a5a9af,#acb0b6,#afb2b8,#aeb2b8,#acb0b6,#abafb5,#aaaeb4,#aaaeb4,#a7abb1,#a0a4aa,#9599a0,#868b92,#73777f,#676b73,#747980,#898e95,#979ba2,#9ca0a7,#a3a7ae,#abafb5,#afb3b9,#aeb2b8,#a9adb3,#a3a7ad,#999da4,#8c9097,#868a92,#8e939a,#9b9fa6,#a4a8ae,#aaaeb4,#acb0b6,#aaaeb4,#a5a9af,#a1a5ab,#a1a5ab,#a2a6ac,#9ca1a7,#8f939a,#7d8189,#747880,#7c8188,#898d94,#92969d,#989ca3,#9ca0a7,#9fa3a9,#a2a6ac,#a6aab0,#aaaeb4,#acb0b6,#abafb5,#a6aab0)"></i>
<i style="background:linear-gradient(90deg,#90949b,#80858c,#747981,#787d84,#868a92,#91959c,#93979e,#93979e,#979ba2,#a0a4ab,#aaaeb4,#b0b4ba,#b3b7bd,#b4b8be,#b7bac0,#b9bcc2,#b9bdc2,#b8bbc1,#b5b9be,#b2b6bc,#afb3b9,#adb1b7,#adb1b7,#b0b4ba,#b3b6bc,#b4b8bd,#b3b7bc,#adb1b7,#a0a4ab,#90949b,#83888f,#83878e,#858a91,#8c9097,#969aa1,#a0a4aa,#a7abb1,#abafb5,#acb0b6,#a8acb3,#9fa3a9,#92979e,#8c9198,#92969d,#9a9ea5,#a4a8af,#acb0b6,#b0b3b9,#afb3b9,#acb0b6,#a9adb3,#a8acb2,#a7abb2,#a5a9b0,#a0a4aa,#969aa1,#888d94,#747981,#666b73,#73777f,#8a8e95,#989da3,#9fa3aa,#a7abb1,#aeb2b8,#b1b4ba,#aeb2b8,#a8acb2,#a0a4ab,#969aa1,#868b92,#7f838b,#898d94,#989ca3,#a2a6ac,#a8acb2,#aaaeb4,#a8acb2,#a3a7ad,#a0a4aa,#a2a6ac,#a4a8af,#a1a5ab,#9599a0,#848990,#797e85,#7f838a,#8a8e95,#91959c,#9599a0,#979ca2,#9a9fa5,#9fa3aa,#a4a8af,#a9adb3,#acb0b6,#aaaeb4,#a4a8af)"></i>
<i style="background:linear-gradient(90deg,#92969d,#84888f,#7a7e86,#7d8289,#898e95,#92969d,#93979e,#90959c,#93979e,#9b9fa6,#a5a9b0,#adb1b7,#b1b5bb,#b3b7bd,#b6b9bf,#b8bcc1,#b8bcc1,#b6babf,#b3b7bd,#b0b4ba,#acb0b6,#aaaeb4,#aaaeb4,#adb1b7,#b0b4ba,#b2b6bc,#b2b5bb,#abafb5,#9fa3aa,#8f949b,#858a91,#878b92,#8a8e95,#8e939a,#9599a0,#9da1a8,#a4a8af,#aaaeb4,#acb0b6,#aaaeb4,#a1a5ab,#94989f,#8d9198,#91959c,#999ea4,#a4a8af,#adb1b7,#b0b4ba,#afb3b9,#abafb5,#a7abb1,#a5a9af,#a5a9af,#a4a8af,#a0a5ab,#989ca3,#8b8f96,#777c83,#676c74,#73777f,#8a8f96,#9a9ea5,#a2a6ac,#a9adb3,#b0b4ba,#b2b6bb,#aeb2b8,#a7abb1,#9ea2a9,#92969d,#80858c,#777c83,#83888f,#9599a0,#a0a4aa,#a6aab1,#a8acb2,#a6aab0,#a1a5ab,#9fa3a9,#a2a6ad,#a6aab1,#a4a8af,#9b9fa5,#8b9097,#7f848b,#83878e,#8c9097,#91959c,#92979e,#93979e,#969ba1,#9ca0a7,#a3a7ad,#a9adb3,#acb0b6,#aaaeb4,#a3a8ae)"></i>
<i style="background:linear-gradient(90deg,#9599a0,#878c93,#7f848b,#83878f,#8d9198,#94989f,#93979e,#8f949b,#8f949b,#969ba1,#a1a5ac,#aaaeb4,#aeb2b8,#b1b5bb,#b4b8be,#b6bac0,#b7bac0,#b4b8be,#b1b5ba,#adb1b7,#a9adb3,#a6aab0,#a6aab0,#a9adb4,#adb1b7,#b0b4ba,#b0b4b9,#aaaeb4,#9ea2a9,#90949b,#888d94,#8b9097,#8f939a,#91959c,#9599a0,#9b9fa6,#a2a6ac,#a8acb2,#acb0b6,#aaaeb4,#a2a6ad,#969aa1,#8e9299,#91969d,#999ea4,#a4a9af,#adb1b7,#b1b4ba,#afb3b9,#aaaeb4,#a4a8af,#a2a6ac,#a2a6ad,#a3a7ae,#a1a5ac,#9a9ea5,#8e9299,#7a7f86,#696e76,#73777f,#8b8f96,#9b9fa6,#a3a7ae,#abafb5,#b2b5bb,#b3b7bc,#aeb2b8,#a6aab0,#9ca0a7,#8f939a,#7b7f87,#70757c,#7e838a,#92969d,#9ea2a9,#a5a9af,#a7abb1,#a4a8ae,#9fa3aa,#9ea2a8,#a2a6ad,#a8acb2,#a7abb1,#9fa3aa,#91969c,#868a92,#888c93,#8f949b,#92979e,#91959c,#90949b,#93979e,#9a9ea5,#a2a6ac,#a9adb3,#acb0b6,#aaaeb4,#a3a7ad)"></i>
<i style="background:linear-gradient(90deg,#979ba2,#8b8f97,#848890,#888c93,#91959c,#969ba1,#9599a0,#90949b,#8d9299,#92979d,#9ca1a7,#a6aab0,#abafb5,#aeb2b8,#b2b6bc,#b5b8be,#b5b8be,#b2b6bb,#aeb2b8,#aaaeb4,#a6aab0,#a2a6ac,#a1a6ac,#a5a9b0,#aaaeb4,#adb1b7,#adb1b7,#a8acb2,#9ea2a8,#92969d,#8c9198,#90959b,#94989f,#94989f,#9499a0,#989ca3,#9fa3aa,#a6aab1,#abafb5,#abafb5,#a4a8ae,#989ca3,#90949b,#93979e,#9a9fa5,#a5a9b0,#aeb2b8,#b1b5ba,#aeb2b8,#a9adb3,#a2a6ac,#9fa3a9,#a0a4ab,#a3a7ad,#a3a7ad,#9ca1a7,#91959c,#7e838a,#6c7178,#737880,#8b8f96,#9ca0a6,#a5a9af,#adb1b7,#b3b7bd,#b4b7bd,#aeb2b8,#a5a9af,#9b9fa6,#8d9198,#777b83,#6a6f77,#7a7f87,#90949b,#9da1a8,#a4a8af,#a6aab0,#a2a6ad,#9da1a8,#9da1a7,#a2a6ad,#a8acb3,#a9adb3,#a2a6ad,#969ba1,#8c9097,#8d9198,#93989f,#9599a0,#91969d,#8e9299,#90949b,#989ca3,#a1a5ac,#a9adb3,#adb0b6,#abaeb5,#a3a7ae)"></i>
<i style="background:linear-gradient(90deg,#9a9ea5,#8e939a,#888d94,#8c9198,#9599a0,#999da4,#979ba2,#91969d,#8d9198,#8f949a,#989ca3,#a2a6ac,#a8acb2,#abafb5,#b0b3b9,#b2b6bc,#b2b6bc,#afb3b9,#abafb5,#a7abb1,#a2a6ac,#9da1a8,#9da1a7,#a1a5ac,#a6aab1,#aaaeb4,#abafb5,#a7abb1,#9ea2a8,#94989f,#90959c,#9599a0,#989ca3,#979ba2,#9599a0,#969aa1,#9ca1a7,#a5a9af,#abaeb5,#abafb5,#a5a9af,#9a9fa5,#93979e,#9599a0,#9ca0a7,#a6aab1,#aeb2b8,#b1b5ba,#aeb2b8,#a7abb1,#9fa4aa,#9ca0a7,#9ea3a9,#a3a7ad,#a4a8ae,#9fa3a9,#94989f,#81868d,#6e737b,#737880,#8a8f96,#9ca0a6,#a5a9af,#aeb1b7,#b4b7bd,#b4b8be,#afb3b9,#a5a9af,#9b9fa5,#8c9097,#747981,#676c74,#797d85,#8f939a,#9ca1a7,#a4a8ae,#a5a9af,#a1a5ac,#9ca0a6,#9b9fa6,#a2a6ac,#a9adb3,#aaaeb4,#a5a9af,#9a9fa5,#91969c,#92969d,#989ca3,#989ca3,#93979e,#8e9299,#8f939a,#979ca2,#a1a5ac,#a9adb3,#adb1b7,#abafb5,#a4a8af)"></i>
<i style="background:linear-gradient(90deg,#9ca0a7,#91969d,#8c9198,#90959c,#989ca3,#9ca0a7,#9a9ea5,#94989f,#8e9299,#8d9299,#9599a0,#9ea2a9,#a4a8af,#a9acb3,#adb1b7,#b0b4ba,#b0b4ba,#acb0b6,#a8acb2,#a4a8ae,#9ea2a8,#989ca3,#989ca3,#9da1a7,#a3a7ad,#a7abb1,#a8acb3,#a5a9af,#9ea2a8,#969aa1,#9599a0,#999da4,#9ca0a7,#9a9ea5,#959aa0,#9499a0,#9a9ea5,#a3a7ad,#a9adb4,#aaaeb4,#a5a9b0,#9ca1a7,#969aa1,#989ca3,#9fa3a9,#a8acb2,#afb3b9,#b1b4ba,#adb1b7,#a6aab0,#9da1a8,#999ea4,#9da1a8,#a3a7ad,#a5a9af,#a1a5ab,#969aa1,#858990,#71767d,#737880,#898e95,#9b9fa6,#a5a9af,#aeb2b8,#b4b8bd,#b5b8be,#afb3b9,#a5a9b0,#9b9fa6,#8c9198,#757981,#686c74,#797e85,#8f949b,#9da1a8,#a4a8af,#a5a9af,#a0a4ab,#9a9fa5,#9a9ea5,#a1a5ab,#a8acb2,#aaaeb4,#a6aab0,#9da2a8,#969aa1,#979ba2,#9ba0a6,#9b9fa6,#9599a0,#8f939a,#8f949b,#989ca3,#a2a6ac,#aaaeb4,#aeb2b8,#adb1b7,#a6aab0)"></i>
<i style="background:linear-gradient(90deg,#9ea2a9,#94989f,#8f949b,#94989f,#9b9fa6,#9fa3aa,#9da1a8,#979ca2,#90959c,#8d9299,#92969d,#9a9fa5,#a1a5ac,#a6aab0,#abafb5,#aeb2b8,#aeb1b7,#aaaeb4,#a5a9af,#a0a4ab,#9a9ea5,#93989f,#93979e,#999da4,#9fa3aa,#a4a8ae,#a6aab0,#a4a8ae,#9ea2a9,#999da4,#989da3,#9da1a8,#9fa3aa,#9ca0a7,#969aa1,#93979e,#989ca3,#a1a5ac,#a8acb2,#aaaeb4,#a6aab0,#9fa3a9,#999da4,#9ba0a6,#a1a5ac,#aaaeb4,#b0b4b9,#b1b4ba,#acb0b6,#a4a8ae,#9b9fa6,#989ca3,#9ca1a7,#a3a7ae,#a6aab0,#a2a6ad,#989ca3,#878c93,#73777f,#73777f,#888c93,#9a9ea5,#a4a8ae,#adb1b7,#b4b8bd,#b5b9be,#b0b4ba,#a6aab0,#9ca0a7,#8e9299,#777c83,#6b6f77,#7b8087,#91959c,#9ea2a9,#a5a9b0,#a6aab0,#a0a4ab,#999da4,#989ca3,#9fa4aa,#a7abb2,#aaaeb4,#a7abb1,#a0a4aa,#9a9ea4,#9a9fa5,#9fa3aa,#9ea2a9,#989ca3,#91959c,#91959c,#999da4,#a3a7ad,#abafb5,#afb3b9,#aeb2b8,#a8acb2)"></i>
<i style="background:linear-gradient(90deg,#9fa4aa,#969aa1,#92969d,#979ba2,#9ea2a9,#a2a6ad,#a0a4ab,#9b9fa6,#93989e,#8e9299,#90949b,#979ba2,#9ea2a9,#a3a7ad,#a8acb2,#acafb6,#abafb5,#a7abb1,#a2a6ac,#9da1a8,#969aa1,#8f939a,#8e939a,#9599a0,#9ca0a7,#a1a5ac,#a4a8ae,#a2a6ad,#9ea3a9,#9b9fa6,#9ca0a7,#a0a4ab,#a2a6ad,#9ea2a9,#979ba2,#92969d,#969aa1,#9fa4aa,#a7abb1,#a9adb4,#a7abb1,#a1a5ab,#9ca1a7,#9fa3a9,#a4a8ae,#abafb5,#b0b4ba,#b0b4ba,#abafb5,#a3a7ad,#999ea4,#969aa1,#9ca0a7,#a4a8ae,#a7abb1,#a4a8ae,#9a9ea5,#898e95,#747981,#72767e,#868a92,#989ca3,#a3a7ad,#acb0b6,#b4b7bd,#b5b9bf,#b0b4ba,#a7abb2,#9ea2a9,#90949b,#7b7f87,#6f747c,#7e838a,#93979e,#9fa4aa,#a6aab1,#a6aab1,#a0a4ab,#989ca3,#969ba1,#9ea2a9,#a6aab0,#a9adb4,#a7abb2,#a2a6ac,#9da1a8,#9ea2a9,#a2a6ac,#a1a5ac,#9b9fa5,#94989f,#93979e,#9b9fa5,#a4a8ae,#acb0b6,#b1b5ba,#b0b4ba,#aaaeb4)"></i>
<i style="background:linear-gradient(90deg,#a1a5ac,#989ca3,#9599a0,#9a9ea4,#a1a5ac,#a5a9af,#a3a7ae,#9ea2a9,#969aa1,#8e939a,#8e9299,#94989f,#9a9fa5,#a0a4aa,#a6aab0,#a9adb3,#a9adb3,#a5a9af,#9fa3a9,#999ea4,#92969d,#8a8e96,#898e95,#90949b,#989ca3,#9ea2a8,#a1a5ab,#a1a5ab,#9fa3aa,#9ea2a8,#9fa3aa,#a3a7ae,#a5a9af,#a0a4ab,#989ca3,#91969c,#94989f,#9ea2a8,#a6aab0,#a9adb3,#a7abb1,#a3a7ad,#a0a4aa,#a2a6ac,#a7abb1,#adb1b7,#b1b5bb,#b0b4ba,#aaaeb4,#a1a5ac,#989ca3,#9599a0,#9ca0a6,#a4a8af,#a8acb2,#a5a9af,#9ca0a7,#8c9097,#767a82,#71767d,#848890,#969aa1,#a1a5ac,#abafb5,#b3b7bd,#b5b9bf,#b1b5bb,#a9adb3,#9fa4aa,#92969d,#7e838a,#737880,#82868d,#9599a0,#a1a5ac,#a8acb2,#a7abb1,#a0a4ab,#979ba2,#9599a0,#9ca0a7,#a5a9af,#a9adb3,#a8acb2,#a3a7ae,#a0a4aa,#a1a5ac,#a5a9af,#a4a8ae,#9da2a8,#969ba1,#959aa1,#9ca1a7,#a6aab0,#aeb1b7,#b2b6bc,#b2b5bb,#acb0b6)"></i>
<i style="background:linear-gradient(90deg,#a3a7ad,#9b9fa5,#979ca2,#9ca0a7,#a3a7ae,#a7abb1,#a5a9b0,#a1a5ab,#989da3,#8f949b,#8c9198,#91959c,#979ca2,#9da1a8,#a3a7ae,#a7abb1,#a6aab1,#a2a6ac,#9ca0a7,#969aa1,#8e9299,#858a91,#848890,#8b9097,#94989f,#9a9ea5,#9ea2a8,#9fa3aa,#9fa3aa,#a0a4ab,#a3a7ad,#a6aab1,#a8acb2,#a3a7ad,#999da4,#90959c,#92969d,#9ca0a6,#a4a8ae,#a8acb2,#a8acb2,#a5a9af,#a3a7ad,#a5a9af,#a9adb3,#afb3b9,#b2b6bc,#b0b4ba,#a9adb4,#a0a4ab,#969ba1,#94989f,#9b9fa6,#a5a9af,#a9adb3,#a6aab0,#9da1a8,#8e9299,#787c84,#71757d,#82878e,#9599a0,#a0a4aa,#aaaeb4,#b3b7bc,#b5b9bf,#b2b5bb,#aaaeb4,#a1a5ab,#94989f,#81858d,#777b83,#848990,#979ba2,#a2a6ad,#a9adb3,#a8acb2,#a1a5ab,#979ba2,#93989f,#9b9fa6,#a4a8ae,#a8acb2,#a8acb2,#a5a9af,#a2a6ac,#a4a8ae,#a7abb1,#a6aab1,#a0a4ab,#9a9ea4,#989ca3,#9fa3a9,#a7abb1,#afb3b9,#b3b7bd,#b3b7bc,#aeb2b8)"></i>
<i style="background:linear-gradient(90deg,#a5a9b0,#9da2a8,#9a9ea5,#9ea2a9,#a5a9af,#a8acb3,#a7abb1,#a3a7ad,#9a9ea5,#90949b,#8b9097,#8f939a,#9599a0,#9b9fa6,#a1a5ac,#a5a9af,#a4a8ae,#9fa3aa,#999da4,#93979e,#8b8f96,#81868d,#7f838b,#868a91,#8e939a,#9599a0,#9a9ea5,#9da1a8,#a0a4aa,#a2a7ad,#a6aab0,#aaaeb4,#abafb5,#a5a9af,#9a9ea5,#8f949b,#8f939a,#999da4,#a2a6ac,#a7abb1,#a8acb2,#a6aab1,#a6aab0,#a8acb2,#acb0b6,#b0b4ba,#b3b6bc,#b0b4ba,#a9adb3,#a0a4aa,#969aa1,#93979e,#9b9fa6,#a4a9af,#a9adb3,#a7abb1,#9fa3a9,#90949b,#7a7f86,#71767e,#81868d,#93989f,#9fa3aa,#aaaeb4,#b3b6bc,#b5b9bf,#b2b6bc,#aaaeb4,#a2a6ac,#9599a0,#83878e,#797e85,#868a91,#989ca3,#a3a7ae,#a9adb3,#a9adb3,#a1a5ac,#979ba2,#93979e,#9a9ea5,#a3a7ad,#a7abb1,#a8abb2,#a5a9b0,#a4a8ae,#a6aab0,#a9adb3,#a9acb3,#a3a7ae,#9da1a8,#9ca0a6,#a1a5ac,#a9adb3,#b0b4ba,#b4b8be,#b4b8bd,#afb3b9)"></i>
<i style="background:linear-gradient(90deg,#a8acb2,#a0a5ab,#9da1a8,#a0a4ab,#a6aab0,#a9adb3,#a8acb2,#a4a8ae,#9ca0a6,#91969c,#8b9097,#8e9299,#94989f,#9a9ea5,#a0a4aa,#a3a7ad,#a2a6ac,#9da1a7,#969ba1,#91959c,#898d94,#7f838b,#7a7f86,#80848c,#888d94,#8f939a,#9599a0,#9a9ea5,#a0a4aa,#a5a9af,#a9adb3,#adb1b7,#aeb1b7,#a8acb2,#9ba0a6,#8e939a,#8c9097,#9599a0,#9fa3a9,#a5a9af,#a8acb2,#a8acb3,#a9adb3,#abaeb5,#aeb2b8,#b2b5bb,#b3b7bd,#b0b4ba,#a9adb3,#a0a4ab,#969ba1,#93989f,#9b9fa5,#a4a8ae,#a9adb3,#a7abb1,#9fa3aa,#91969d,#7d8289,#747880,#81868d,#93979e,#9ea3a9,#aaadb4,#b2b6bc,#b5b9bf,#b2b6bc,#abafb5,#a2a6ad,#969aa1,#84888f,#7a7f86,#878b92,#989da3,#a4a8ae,#aaaeb4,#a9adb3,#a2a6ad,#989ca3,#93989f,#999ea4,#a2a6ac,#a6aab0,#a7abb1,#a5a9b0,#a5a9af,#a7abb1,#abafb5,#aaaeb4,#a6aab0,#a1a5ab,#a0a4aa,#a4a8af,#abafb5,#b1b5bb,#b5b9bf,#b4b8be,#b0b4ba)"></i>
<i style="background:linear-gradient(90deg,#aaaeb4,#a3a7ae,#a0a4aa,#a1a5ac,#a6aab0,#a9adb3,#a8acb2,#a4a8ae,#9ca1a7,#92979e,#8c9198,#8e9299,#94989f,#9a9ea5,#9fa3aa,#a2a6ac,#a0a4aa,#9a9fa5,#9599a0,#90959c,#898d94,#7e838a,#787c84,#7a7f86,#81868d,#888c94,#8f939a,#979ba2,#a0a4aa,#a7abb1,#acb0b6,#b0b3b9,#b0b4ba,#aaaeb4,#9da1a8,#8e9299,#888d94,#91959c,#9b9fa6,#a3a7ad,#a8acb2,#aaaeb4,#abafb5,#adb1b7,#afb3b9,#b2b6bc,#b4b7bd,#b1b5ba,#aaaeb4,#a1a5ab,#989ca3,#94999f,#9a9ea5,#a3a7ad,#a8acb2,#a6aab1,#a0a4aa,#93989e,#81858d,#777c83,#83878e,#93979e,#9fa3a9,#aaadb4,#b2b6bc,#b5b9bf,#b2b6bc,#abafb5,#a2a6ad,#969aa1,#84888f,#7a7f86,#878b92,#989da3,#a4a8ae,#aaaeb4,#aaaeb4,#a4a8ae,#9a9ea5,#9599a0,#9a9ea5,#a1a5ab,#a5a9af,#a5a9b0,#a5a9af,#a5a9af,#a8acb2,#acb0b6,#acb0b6,#a9adb3,#a5a9af,#a3a7ae,#a7abb2,#adb1b7,#b3b6bc,#b6b9bf,#b5b8be,#b0b4ba)"></i>
<i style="background:linear-gradient(90deg,#adb0b6,#a6aab1,#a2a6ac,#a2a6ac,#a5a9af,#a8acb2,#a7abb1,#a4a8ae,#9da1a7,#94989f,#8e9299,#8f949b,#9599a0,#9b9fa6,#a0a4aa,#a1a5ac,#9ea2a9,#999da4,#94989f,#91959c,#8b8f96,#81858d,#787c84,#767a82,#7a7f86,#80858c,#888d94,#94989f,#9fa3aa,#a9adb3,#afb3b9,#b2b6bc,#b3b6bc,#adb0b6,#9fa3aa,#8d9299,#858991,#8c9198,#969ba1,#a0a4ab,#a7abb2,#acafb6,#aeb1b7,#afb3b9,#b1b4ba,#b3b7bc,#b4b7bd,#b1b5bb,#abaeb5,#a2a6ad,#9a9ea5,#969aa1,#9a9ea5,#a1a6ac,#a6aab1,#a5a9b0,#a0a4ab,#9599a0,#858991,#7c8088,#858990,#94989f,#9fa3aa,#aaaeb4,#b3b6bc,#b5b9bf,#b2b6bc,#aaaeb4,#a2a6ac,#9599a0,#83878e,#797d85,#868a91,#989ca3,#a3a7ae,#aaaeb4,#abaeb5,#a6aab0,#9da1a8,#979ca2,#9b9fa5,#a0a4ab,#a3a7ad,#a3a7ae,#a3a7ae,#a4a8af,#a8acb2,#acb0b6,#adb1b7,#abafb5,#a8acb2,#a7abb1,#aaaeb4,#afb3b9,#b3b7bd,#b6b9bf,#b4b8be,#afb3b9)"></i>
<i style="background:linear-gradient(90deg,#aeb2b8,#a9adb3,#a4a8ae,#a2a6ac,#a4a8ae,#a6aab0,#a5a9af,#a3a7ad,#9da1a8,#9599a0,#90959c,#92969d,#979ca2,#9da1a8,#a0a5ab,#a1a5ab,#9da1a8,#989ca3,#94989f,#92979d,#8e9299,#858a91,#7a7f86,#737880,#747980,#797e85,#82868d,#90949b,#9fa3a9,#aaaeb4,#b1b4ba,#b4b8bd,#b4b8be,#afb2b8,#a1a5ab,#8e9299,#82878e,#888c93,#92969d,#9da1a8,#a7abb1,#adb1b7,#afb3b9,#b0b4ba,#b1b5bb,#b3b6bc,#b3b7bd,#b1b5bb,#abafb5,#a4a8af,#9ca1a7,#989ca3,#999ea4,#9fa3aa,#a4a8ae,#a4a8ae,#a0a4ab,#979ba2,#898d95,#81858c,#878c93,#9599a0,#a0a4aa,#aaaeb4,#b3b7bc,#b5b9bf,#b2b5bb,#aaaeb4,#a1a5ab,#94989f,#81858d,#777b83,#848990,#979ba2,#a2a6ad,#a9adb3,#abafb5,#a7abb2,#a0a4ab,#9a9fa5,#9ca0a7,#a0a4aa,#a1a5ac,#a1a5ab,#a1a5ab,#a3a7ae,#a7abb2,#acb0b6,#aeb2b8,#adb1b7,#abafb5,#abaeb5,#adb1b7,#b0b4ba,#b4b7bd,#b5b9bf,#b3b7bd,#aeb2b8)"></i>
<i style="background:linear-gradient(90deg,#b0b4ba,#aaaeb4,#a5a9af,#a1a5ac,#a1a6ac,#a3a7ad,#a3a7ad,#a1a5ac,#9da1a7,#969ba1,#93979e,#9599a0,#9a9ea5,#9fa3aa,#a2a6ac,#a1a5ab,#9ca1a7,#979ba2,#94999f,#9599a0,#92979e,#8b8f97,#80848b,#747981,#70757d,#73787f,#7b8087,#8c9098,#9ea2a8,#abaeb5,#b2b6bb,#b5b9bf,#b6b9bf,#b0b4ba,#a3a7ad,#8f939a,#81858c,#84888f,#8d9199,#9a9ea5,#a6aab0,#aeb1b7,#b1b5ba,#b1b5bb,#b1b5bb,#b2b6bc,#b3b6bc,#b1b5bb,#acb0b6,#a6aab0,#9fa3aa,#999ea4,#999da4,#9da1a7,#a1a5ac,#a2a6ad,#a0a4aa,#999da4,#8d9299,#868a91,#8b8f96,#979ba2,#a1a5ac,#abafb5,#b3b7bd,#b5b9bf,#b1b5bb,#a9adb3,#a0a4aa,#92979e,#7e838a,#747880,#82868e,#9599a0,#a1a5ac,#a9adb3,#acb0b6,#aaaeb4,#a3a8ae,#9ea2a8,#9da1a8,#9fa3aa,#9fa3a9,#9da1a8,#9da2a8,#a1a5ac,#a6aab1,#abafb5,#aeb2b8,#afb3b9,#aeb2b8,#adb1b7,#afb2b8,#b1b5bb,#b4b7bd,#b4b8be,#b2b5bb,#acb0b6)"></i>
<i style="background:linear-gradient(90deg,#b1b5ba,#acafb6,#a5a9b0,#a0a4ab,#9fa3a9,#a0a4aa,#a0a4ab,#9fa4aa,#9ca0a7,#989ca3,#969aa1,#989da3,#9da1a8,#a2a6ac,#a3a8ae,#a1a5ac,#9ca0a7,#979ba2,#969aa1,#989ca3,#979ca2,#92969d,#868b92,#787d84,#70747c,#6f747c,#777b83,#898d94,#9ca1a7,#abaeb5,#b2b6bc,#b6b9bf,#b6bac0,#b1b5bb,#a4a8af,#91959c,#81858d,#81868d,#898e95,#989ca3,#a5a9b0,#aeb2b8,#b1b5bb,#b1b5bb,#b0b4ba,#b1b4ba,#b1b5bb,#b0b4ba,#adb1b7,#a8acb2,#a1a5ac,#9b9fa6,#989ca3,#9a9ea5,#9ea2a8,#a0a4aa,#9fa3aa,#9b9fa5,#91969c,#8a8f96,#8e9299,#989ca3,#a2a6ad,#acb0b6,#b3b7bd,#b5b9bf,#b1b4ba,#a8acb2,#9ea2a9,#91959c,#7c8088,#70757d,#7f848b,#93989f,#a0a4aa,#a8acb2,#acb0b6,#acb0b6,#a7abb1,#a1a5ac,#9fa3aa,#9fa3aa,#9ca0a7,#999da4,#999ea4,#9ea2a9,#a5a9af,#aaaeb4,#aeb2b8,#b0b4ba,#b0b4ba,#b0b3b9,#b0b4ba,#b2b5bb,#b3b7bd,#b3b7bc,#b0b4b9,#aaaeb4)"></i>
<i style="background:linear-gradient(90deg,#b1b5bb,#acb0b6,#a5a9af,#9ea3a9,#9ba0a6,#9ca0a7,#9da1a8,#9ea2a8,#9ca0a7,#999da4,#999da4,#9ba0a6,#a0a4ab,#a4a8ae,#a5a9af,#a2a6ac,#9ca0a7,#979ba2,#989ca2,#9b9fa6,#9ca1a7,#989ca3,#8e9299,#7f838a,#73777f,#6f747c,#747981,#868b92,#9b9fa6,#aaaeb4,#b2b6bc,#b6b9bf,#b6bac0,#b2b6bb,#a6aab0,#94989f,#83878e,#80858c,#868b92,#969aa1,#a5a9af,#aeb2b8,#b2b5bb,#b1b5ba,#afb3b9,#afb3b9,#b0b3b9,#b0b3b9,#aeb1b7,#a9adb3,#a3a7ae,#9ca0a7,#969ba2,#969aa1,#9a9ea5,#9ea2a8,#9fa3aa,#9ca0a7,#9599a0,#8f939a,#91959c,#9a9ea5,#a4a8ae,#adb1b7,#b4b7bd,#b5b9be,#b0b4ba,#a7abb1,#9da1a7,#8f939a,#787d84,#6c7179,#7c8188,#92969d,#9ea3a9,#a7abb1,#adb1b7,#aeb2b8,#aaaeb4,#a4a8ae,#a1a5ab,#9fa3a9,#999ea4,#94989f,#94999f,#9b9fa6,#a3a7ad,#a9adb3,#aeb2b8,#b1b5bb,#b2b6bc,#b1b5bb,#b1b5ba,#b2b5bb,#b2b6bc,#b1b5bb,#adb1b7,#a7abb2)"></i>
<i style="background:linear-gradient(90deg,#b1b5ba,#acb0b6,#a4a8af,#9ca0a7,#989ca3,#989ca3,#9a9ea5,#9ca0a7,#9ba0a6,#9a9fa5,#9b9fa6,#9ea2a9,#a2a6ad,#a6aab1,#a7abb1,#a3a7ad,#9ca0a7,#989ca3,#999ea4,#9ea3a9,#a1a5ac,#9ea2a9,#9599a0,#868a92,#787d85,#73787f,#757981,#858990,#999da4,#a9adb3,#b1b5bb,#b5b8be,#b6b9bf,#b2b6bc,#a8abb2,#979ba2,#868a92,#81868d,#858a91,#94999f,#a4a8af,#aeb2b8,#b1b5bb,#b0b4ba,#adb1b7,#acb0b6,#adb1b7,#aeb2b8,#aeb2b8,#aaaeb4,#a5a9af,#9da1a8,#9599a0,#92979e,#969aa1,#9b9fa6,#9fa3a9,#9ea2a8,#989ca3,#93979e,#94989f,#9ba0a6,#a5a9af,#aeb1b8,#b4b8be,#b5b9be,#afb3b9,#a6aab0,#9ba0a6,#8d9198,#757a81,#686d75,#797e85,#90949b,#9da1a8,#a6aab1,#adb1b7,#b0b3b9,#adb1b7,#a7abb1,#a2a6ad,#9ea2a9,#969ba1,#8f939a,#8f939a,#979ba2,#a0a4ab,#a7abb2,#aeb2b8,#b2b6bc,#b3b7bd,#b2b6bc,#b1b5bb,#b1b5ba,#b0b4ba,#afb3b9,#abafb5,#a5a9af)"></i>
<i style="background:linear-gradient(90deg,#b0b4ba,#abafb5,#a3a7ad,#999ea4,#94989f,#9599a0,#989ca3,#9a9ea5,#9b9fa6,#9ca0a6,#9da1a8,#a0a4ab,#a4a8af,#a8acb2,#a8acb2,#a3a7ad,#9ca0a7,#989da3,#9b9fa6,#a1a5ac,#a5a9af,#a4a8ae,#9ca0a6,#8d9299,#80848c,#797d85,#787d84,#848990,#979ba2,#a7abb1,#afb3b9,#b3b7bd,#b5b8be,#b2b5bb,#a9adb3,#9a9ea5,#8a8f96,#848990,#868a91,#94989f,#a4a8ae,#aeb1b7,#b1b4ba,#aeb2b8,#aaaeb4,#a9adb3,#abaeb5,#adb1b7,#adb1b7,#abafb5,#a6aab0,#9da2a8,#93979e,#8e939a,#92979d,#999da4,#9ea3a9,#9fa3aa,#9b9fa6,#969aa1,#969aa1,#9da1a7,#a6aab0,#aeb2b8,#b4b8be,#b5b9be,#afb3b9,#a5a9af,#9a9ea5,#8b8f96,#72777f,#646971,#777b83,#8e939a,#9ca0a7,#a6aab0,#aeb2b8,#b1b5bb,#afb3b9,#a9adb3,#a3a7ae,#9ea2a8,#93989f,#898d94,#898d94,#93979e,#9ea2a8,#a6aab0,#adb1b7,#b2b6bc,#b4b7bd,#b2b6bc,#b0b4ba,#afb3b9,#aeb2b8,#acb0b6,#a8acb2,#a2a6ad)"></i>
<i style="background:linear-gradient(90deg,#aeb2b8,#a9adb3,#a1a5ab,#979ba2,#91959c,#92969d,#969aa1,#999ea4,#9ba0a6,#9da1a7,#9fa3a9,#a2a6ac,#a6aab0,#a9adb3,#a8acb3,#a3a7ae,#9ca0a7,#999da4,#9da1a7,#a4a8ae,#a8acb2,#a8acb2,#a1a5ac,#9599a0,#878c93,#80858c,#7d8189,#858990,#9599a0,#a4a8ae,#adb1b7,#b1b5bb,#b3b7bc,#b1b5bb,#aaaeb4,#9da1a8,#8f949b,#888d94,#888c94,#9499a0,#a3a7ae,#adb1b7,#afb3b9,#acb0b6,#a7abb1,#a5a9b0,#a7abb2,#abafb5,#adb1b7,#abafb5,#a6aab0,#9da1a8,#91959c,#8b8f96,#8f939a,#979ca2,#9ea3a9,#a1a5ab,#9ea2a8,#999da4,#989ca3,#9ea2a8,#a6aab0,#afb2b8,#b5b8be,#b5b8be,#afb2b8,#a4a8ae,#999ea4,#8a8e95,#71757d,#62676f,#757a81,#8d9299,#9b9fa6,#a6aab0,#aeb2b8,#b3b6bc,#b1b5bb,#abafb5,#a4a8af,#9da1a8,#90959c,#83878f,#82878e,#8f949b,#9ca0a6,#a5a9af,#adb1b7,#b2b6bc,#b4b7bd,#b2b6bb,#afb3b9,#adb1b7,#acb0b6,#a9adb3,#a5a9b0,#a0a4ab)"></i>
<i style="background:linear-gradient(90deg,#acb0b6,#a7abb1,#9ea2a9,#94989f,#8e9299,#90949b,#9599a0,#999ea4,#9ca0a7,#9ea2a8,#9fa4aa,#a2a6ad,#a6aab0,#a9adb3,#a8acb3,#a3a7ad,#9ca0a6,#999da4,#9ea2a8,#a5a9b0,#abafb5,#acafb6,#a6aab0,#9b9fa5,#8f939a,#878c93,#82878e,#868b92,#93989e,#a1a5ac,#aaaeb4,#aeb2b8,#b1b5ba,#b0b4ba,#abaeb5,#a0a4ab,#94989f,#8d9198,#8b9097,#969aa1,#a3a7ae,#acb0b6,#aeb2b8,#aaaeb4,#a4a8ae,#a1a5ac,#a4a8ae,#a9adb3,#acb0b6,#aaaeb4,#a6aab0,#9ca0a7,#8f939a,#878c93,#8c9097,#969ba1,#9fa3a9,#a2a6ad,#a0a4aa,#9a9fa5,#999da4,#9ea2a9,#a6aab1,#afb3b9,#b5b8be,#b5b8be,#afb2b8,#a4a8ae,#999da4,#898e95,#70747c,#61666e,#747981,#8d9198,#9b9fa6,#a6aab0,#afb3b9,#b4b7bd,#b2b6bc,#acb0b6,#a5a9af,#9ca0a7,#8d9299,#7d8189,#7d8189,#8c9098,#9a9ea5,#a3a8ae,#acb0b6,#b2b6bc,#b3b7bd,#b1b5bb,#aeb1b7,#abafb5,#a9adb3,#a6aab0,#a3a7ad,#9fa3a9)"></i>
<i style="background:linear-gradient(90deg,#aaaeb4,#a5a9af,#9ca0a6,#91969d,#8d9198,#90949b,#959aa1,#9a9ea5,#9da1a8,#9ea3a9,#a0a4aa,#a2a6ac,#a6aab0,#a9adb3,#a8acb2,#a2a6ac,#9b9fa6,#999da3,#9ea2a9,#a6aab0,#acb0b6,#aeb2b8,#aaaeb4,#a0a4aa,#9599a0,#8e9299,#888c94,#888d94,#92969d,#9ea2a9,#a7abb1,#abafb5,#aeb2b8,#afb3b9,#abafb5,#a3a7ad,#999da4,#92969d,#8f949b,#989ca3,#a4a8ae,#abafb5,#adb0b6,#a8acb2,#a0a5ab,#9da1a8,#a1a5ab,#a7abb1,#aaaeb4,#a9adb3,#a5a9af,#9b9fa6,#8d9198,#848990,#8a8f96,#969aa1,#9fa4aa,#a3a7ae,#a1a5ac,#9ca0a6,#999da4,#9ea2a8,#a6aab0,#afb3b9,#b5b8be,#b5b8be,#afb2b8,#a4a8ae,#999ea4,#8a8e95,#70757d,#62666f,#757a81,#8d9199,#9b9fa6,#a6aab0,#b0b3b9,#b4b8be,#b3b7bd,#adb0b7,#a5a9af,#9b9fa6,#8a8f96,#787c84,#797d85,#8a8e96,#999da4,#a3a7ad,#acb0b6,#b2b6bb,#b3b6bc,#b0b3b9,#abafb5,#a8acb2,#a5a9b0,#a3a7ae,#a1a5ac,#9ea3a9)"></i>
<i style="background:linear-gradient(90deg,#a7abb1,#a2a6ac,#999da4,#8f949b,#8c9198,#91959c,#979ba2,#9ca0a7,#9fa3a9,#9fa3aa,#9fa3aa,#a1a5ab,#a4a8af,#a8acb2,#a7abb1,#a1a5ab,#999ea4,#989ca3,#9ea2a9,#a6aab1,#adb1b7,#b0b3b9,#acb0b6,#a4a8ae,#9a9ea5,#94989f,#8d9299,#8a8f96,#90949b,#9b9fa6,#a3a7ae,#a8acb2,#acb0b6,#aeb1b7,#abafb5,#a5a9b0,#9da1a8,#969aa1,#93989e,#9a9ea5,#a4a8ae,#abaeb5,#abafb5,#a5a9b0,#9da1a8,#999ea4,#9da1a8,#a4a8ae,#a8acb3,#a7abb2,#a3a7ad,#999da4,#8a8e96,#82878e,#8a8e95,#979ba2,#a0a5ab,#a5a9af,#a2a6ad,#9ca0a7,#999da4,#9da1a8,#a6aab0,#aeb2b8,#b4b8be,#b5b9be,#afb3b9,#a5a9af,#9a9ea5,#8b8f96,#72777f,#646971,#777b83,#8e939a,#9ca0a7,#a6aab1,#b0b4ba,#b5b9be,#b3b7bd,#adb0b7,#a4a8ae,#9a9ea5,#888c93,#747980,#767b82,#898e95,#999da4,#a3a7ad,#acb0b6,#b1b5bb,#b2b6bb,#aeb2b8,#a9adb3,#a5a9af,#a2a6ad,#a1a5ac,#a0a4ab,#9fa3aa)"></i>
<i style="background:linear-gradient(90deg,#a4a8ae,#9fa3a9,#969aa1,#8e939a,#8e9299,#93989f,#9a9ea5,#9fa3a9,#a0a4ab,#a0a4aa,#9fa3a9,#9fa3aa,#a2a6ad,#a6aab0,#a5a9af,#9fa3a9,#979ca2,#969aa1,#9da1a8,#a6aab0,#adb1b7,#b1b4ba,#aeb2b8,#a7abb1,#9ea2a9,#989da3,#92969d,#8d9198,#8f939a,#989ca3,#a0a4aa,#a5a9af,#a9adb3,#acb0b6,#acb0b6,#a7abb1,#a0a4ab,#9a9ea5,#979ba2,#9ca0a7,#a5a9af,#aaaeb4,#aaaeb4,#a3a7ae,#9b9fa5,#969aa1,#9a9ea5,#a1a5ac,#a6aab0,#a5a9af,#a0a4ab,#969aa1,#888c93,#81868d,#8b8f96,#989ca3,#a2a6ac,#a6aab0,#a3a7ad,#9ca1a7,#989ca3,#9ca0a7,#a5a9af,#aeb1b7,#b4b8be,#b5b9be,#afb3b9,#a6aab0,#9ba0a6,#8d9198,#757a82,#686d75,#797e86,#90949b,#9da1a8,#a7abb2,#b1b5ba,#b5b9bf,#b3b7bd,#acb0b6,#a3a7ae,#989da3,#858a91,#72767e,#757a82,#8a8f96,#9a9ea5,#a4a8ae,#acb0b6,#b1b5bb,#b1b5bb,#acb0b6,#a6aab1,#a2a6ac,#9fa3aa,#9fa3aa,#a0a4ab,#a0a5ab)"></i>
<i style="background:linear-gradient(90deg,#a1a5ac,#9ba0a6,#93989e,#8e9299,#90949b,#979ba2,#9da1a8,#a1a5ac,#a2a6ad,#a0a4ab,#9da1a8,#9ca1a7,#a0a4aa,#a3a7ae,#a2a6ad,#9ca0a7,#9599a0,#94989f,#9ba0a6,#a5a9af,#adb0b7,#b1b5ba,#afb3b9,#a9adb3,#a2a6ac,#9ca0a7,#959aa1,#8f939a,#8e9299,#9599a0,#9da1a7,#a2a6ac,#a7abb1,#abafb5,#acb0b6,#a9adb3,#a3a7ae,#9ea2a9,#9b9fa6,#9fa3a9,#a5a9b0,#aaadb4,#a8acb3,#a2a6ac,#989da3,#93989f,#979ba2,#9fa3a9,#a3a7ae,#a2a6ad,#9da1a8,#93979e,#858991,#81868d,#8c9097,#999ea4,#a3a7ad,#a7abb1,#a4a8ae,#9ca0a7,#979ba2,#9a9ea5,#a3a7ae,#adb1b7,#b4b7bd,#b5b9be,#b0b4ba,#a7abb1,#9da1a8,#8f939a,#797d85,#6d7279,#7d8189,#92969d,#9fa3a9,#a8acb3,#b1b5bb,#b5b9bf,#b3b7bc,#abafb5,#a2a6ac,#979ba2,#83888f,#70757d,#777b83,#8c9097,#9b9fa6,#a5a9af,#adb1b7,#b1b5bb,#b0b4ba,#aaaeb4,#a3a8ae,#9fa3a9,#9ca0a7,#9ea2a8,#a1a5ab,#a2a6ad)"></i>
 </div>
 <!-- axis lines -->
 <div class="a" style="left:0;top:182.100px;width:233px;height:1px;background:#7a3b45"></div>
 <div class="a" style="left:523.900px;top:182.100px;width:207px;height:1px;background:#7a3b45"></div>
 <div class="a" style="left:377.900px;top:14px;width:1px;height:23px;background:#5a7d24"></div>
 <div class="a" style="left:377.900px;top:328px;width:1px;height:34px;background:#5a7d24"></div>
 <!-- 3d cursor -->
 <svg style="left:367.500px;top:171.500px" width="22" height="22" viewBox="0 0 22 22" fill="none"><circle cx="11" cy="11" r="5" stroke="#f4f4f4" stroke-width=".9"/><circle cx="11" cy="11" r="5" stroke="#f0404a" stroke-width=".9" stroke-dasharray="1.570 1.570"/><path d="M11 .5v7.500M11 14v7.500M.5 11h7.500M14 11h7.500" stroke="#2e2e32" stroke-width="1"/></svg>
 <div id="vphead" class="a"></div>
 <div class="a" style="left:0;top:14.500px;width:79.500px;height:13.500px;background:rgba(35,35,35,.4);border-radius:0 0 3px 0"></div>
 <div class="a" style="left:687px;top:14.500px;width:43px;height:13.500px;background:rgba(35,35,35,.4);border-radius:0 0 0 3px"></div>
 <!-- header left -->
 <div class="btn" style="left:6px;top:2.300px;width:15.500px;height:10px"></div>
 <div class="btn" style="left:25.500px;top:2.300px;width:58.500px;height:10px"></div>
 <div class="t" style="left:39px;top:2.300px">Object Mode</div>
 <div class="t" style="left:91px;top:2.300px">View</div>
 <div class="t" style="left:113px;top:2.300px">Select</div>
 <div class="t" style="left:139.500px;top:2.300px">Add</div>
 <div class="t" style="left:159.500px;top:2.300px">Object</div>
 <svg style="left:0;top:0" width="90" height="30" viewBox="0 0 90 30" fill="none" stroke="#e0e0e0" stroke-width=".8">
  <path d="M8 7h5.500M8 9.600h6.500M9.700 5.300v6M12.500 7v4.300" stroke-width=".7" stroke="#d4d4d4"/><circle cx="13.300" cy="5.300" r="1.700" fill="#f0f0f0" stroke="none"/>
  <path d="M17 6.500l1.500 1.500 1.500-1.500"/>
  <rect x="29.200" y="4.900" width="4.400" height="4.400" rx=".5" fill="#eaeaea" stroke="none"/><path d="M27.500 4.700v-1.500h1.600M33.700 3.200h1.600v1.500M35.300 9.500v1.500h-1.600M29.100 11h-1.600v-1.500" stroke-width=".75"/>
  <path d="M79.300 6.500l1.500 1.500 1.500-1.500"/>
  <!-- tool row -->
  <rect x="8.500" y="15.500" width="11" height="11.300" rx="1.500" stroke="#d9902a" stroke-dasharray="1.600 1.200" fill="#38342f"/>
  <path d="M12.300 17.800v6.200l1.600-1.500 1.200 2.300.9-.5-1.200-2.200h2.100z" fill="#ececec" stroke="none"/>
  <rect x="24.300" y="16.300" width="9.400" height="9.500" rx="1.300" fill="#0757da" stroke="none"/>
  <rect x="25.700" y="17.700" width="6.600" height="6.700" stroke="#fff" stroke-width=".9" stroke-dasharray="1.100 .75"/>
  <rect x="34.600" y="16.300" width="9.300" height="9.500" fill="#4c4c4c" stroke="none"/><rect x="44.600" y="16.300" width="9.300" height="9.500" fill="#4c4c4c" stroke="none"/><rect x="54.900" y="16.300" width="9.300" height="9.500" fill="#4c4c4c" stroke="none"/><rect x="65.200" y="16.300" width="9.400" height="9.500" rx="1.300" fill="#4c4c4c" stroke="none"/>
  <path d="M35.400 20.300h3.200v-3.200h4.700v5h-3v3h-4.900z" fill="#cdcdcd" stroke="none"/>
  <path d="M45.700 20.500h3v4.500h-3z" stroke="#999" stroke-width=".7" stroke-dasharray=".8 .8"/><rect x="48.300" y="17.200" width="4.800" height="4.800" fill="#d4d4d4" stroke="none"/><rect x="46" y="21" width="3.500" height="3.800" fill="#777" stroke="none"/>
  <rect x="56" y="17.400" width="7.100" height="7.300" fill="#cdcdcd" stroke="none"/><rect x="58" y="19.500" width="3" height="3.300" fill="#555" stroke="none"/>
  <rect x="66.500" y="17.600" width="6.800" height="7" stroke="#b4b4b4" stroke-width=".8" stroke-dasharray="1 .9"/><rect x="68.200" y="19.400" width="3.400" height="3.400" fill="#d0d0d0" stroke="none"/>
 </svg>
 <div class="t" style="left:5.800px;top:31.500px;color:#f2f2f2;text-shadow:0 0 1px #000">Top Orthographic</div>
 <div class="t" style="left:5.800px;top:41.500px;color:#f2f2f2;text-shadow:0 0 1px #000;transform:scaleX(.915)">(1) Collection | Plane</div>
 <svg style="left:0;top:37px" width="5" height="8" viewBox="0 0 5 8" fill="none" stroke="#bbb" stroke-width=".8"><path d="M1 1.500l2.500 2.500-2.500 2.500"/></svg>
 <div class="a" style="left:724.500px;top:35px;width:5.500px;height:9px;background:rgba(30,30,30,.55);border-radius:2px 0 0 2px"></div>
 <svg style="left:725px;top:36px" width="5" height="8" viewBox="0 0 5 8" fill="none" stroke="#bbb" stroke-width=".8"><path d="M3.800 1l-2.500 2.700 2.500 2.700"/></svg>
 <!-- header middle -->
 <div class="btn" style="left:300px;top:2.300px;width:40.500px;height:10px"></div>
 <div class="t" style="left:314px;top:2.300px">Global</div>
 <div class="btn" style="left:345px;top:2.300px;width:15.500px;height:10px"></div>
 <div class="btn l" style="left:364.300px;top:2.300px;width:9.500px;height:10px;border-radius:2px 0 0 2px"></div>
 <div class="btn" style="left:374.100px;top:2.300px;width:16.600px;height:10px;border-radius:0 2px 2px 0"></div>
 <div class="btn l" style="left:394px;top:2.300px;width:10px;height:10px"></div>
 <div class="btn" style="left:405px;top:2.300px;width:16px;height:10px;background:#333"></div>
 <svg style="left:300px;top:2.300px" width="125" height="10" viewBox="0 0 125 10" fill="none" stroke="#e0e0e0" stroke-width=".8">
  <path d="M3.500 1.500v6.500h6.500M3.500 8l4-4M2.300 3l1.200-1.500 1.200 1.500M8.500 6.800l1.500 1.200-1.500 1.200M6.300 3.500h1.500v1.500"/>
  <path d="M36.200 4l1.600 1.600 1.600-1.600"/>
  <circle cx="50" cy="5.800" r="2.200"/><circle cx="53" cy="4.200" r="2.200"/><circle cx="51.500" cy="5" r=".6" fill="#e0e0e0"/>
  <path d="M56 4l1.600 1.600 1.600-1.600"/>
  <path d="M66 8c-.5-3 1.500-5.500 4.500-5M67.800 8.200c-.4-2 .9-3.700 3-3.400M69.500 8.300c-.2-1 .4-1.800 1.500-1.700" stroke="#b0b0b0" stroke-width=".7"/>
  <path d="M76 6.700h7M75.700 5v3.400M83.300 5v3.400M77.200 5.800l-1 .9 1 .9M81.800 5.800l1 .9-1 .9" stroke-width=".7"/><rect x="81.600" y="1.300" width="2.200" height="2.200" fill="#fff" stroke="none"/>
  <path d="M86 4l1.500 1.500 1.500-1.500"/>
  <circle cx="99" cy="5" r="2.900" stroke="#c4c4c4" stroke-width=".7"/><circle cx="99" cy="5" r="1.100" fill="#fff" stroke="none"/>
  <path d="M107.500 8c2.500 0 2-6 4-6s1.500 6 4 6" stroke="#c8c8c8"/>
  <path d="M117.500 4l1.400 1.400 1.400-1.400" stroke="#666"/>
 </svg>
 <!-- header right -->
 <div class="btn" style="left:594.500px;top:2.300px;width:15.500px;height:10px"></div>
 <div class="btn b" style="left:613.500px;top:2.300px;width:10.500px;height:10px;border-radius:2px 0 0 2px"></div>
 <div class="btn" style="left:624.300px;top:2.300px;width:9.200px;height:10px;border-radius:0 2px 2px 0"></div>
 <div class="btn b" style="left:637.800px;top:2.300px;width:10.400px;height:10px;border-radius:2px 0 0 2px"></div>
 <div class="btn" style="left:648.400px;top:2.300px;width:9.200px;height:10px;border-radius:0 2px 2px 0"></div>
 <div class="btn" style="left:661px;top:2.300px;width:10.200px;height:10px;background:#333"></div>
 <div class="btn l" style="left:674px;top:2.300px;width:10.300px;height:10px;border-radius:2px 0 0 2px"></div>
 <div class="btn l" style="left:684.600px;top:2.300px;width:10.200px;height:10px;border-radius:0"></div>
 <div class="btn b" style="left:695.100px;top:2.300px;width:10.200px;height:10px;border-radius:0"></div>
 <div class="btn l" style="left:705.600px;top:2.300px;width:10.200px;height:10px;border-radius:0 2px 2px 0"></div>
 <div class="btn" style="left:716.200px;top:2.300px;width:9.700px;height:10px"></div>
 <div class="btn" style="left:691.400px;top:16px;width:34.500px;height:10px"></div>
 <div class="t" style="left:695.500px;top:16px;transform:scaleX(.9)">Options</div>
 <svg style="left:594px;top:2.300px" width="136" height="24" viewBox="0 0 136 24" fill="none" stroke="#e0e0e0" stroke-width=".8">
  <path d="M2.500 5.500c0-2 1.500-3 3.500-3s3.500 1 3 2.500l-2.500 1v1.500h-1.500v-1.500c-1.500 0-2.500 0-2.500-.5z" fill="#e8e8e8" stroke="none"/><circle cx="7.500" cy="4" r="1" fill="#262626" stroke="none"/><path d="M3.500 7.500l1.500 1.500"/>
  <path d="M10.800 4l1.500 1.500 1.500-1.500"/>
  <path d="M21.500 8.500l6.500-7M22 2c3 0 4.500 2.500 6 6.500M26.500 1.500h2v2" stroke="#fff"/>
  <path d="M33.300 4l1.500 1.500 1.500-1.500"/>
  <circle cx="48.300" cy="5.700" r="2.900" stroke="#fff"/><circle cx="50" cy="4.200" r="2.300" fill="#fff" stroke="none"/>
  <path d="M57.500 4l1.500 1.500 1.500-1.500"/>
  <rect x="68.500" y="3.500" width="5" height="5" stroke="#5c5c5c"/><path d="M70 3.500v-1.500h5v5h-1.500" stroke="#5c5c5c"/>
  <circle cx="85.300" cy="5" r="3.300" stroke="#ddd" stroke-width=".7"/><path d="M82 5h6.600M85.300 1.700c-2 2-2 4.600 0 6.600M85.300 1.700c2 2 2 4.600 0 6.600" stroke="#ddd" stroke-width=".6"/>
  <circle cx="95.600" cy="5" r="3.500" fill="#ececec" stroke="none"/>
  <circle cx="106.200" cy="5" r="3.400" fill="#fff" stroke="none"/><path d="M104 3.500a2.700 2.700 0 0 0 4.500 3 3.400 3.400 0 0 1-4.500-3z" fill="#0757da" stroke="none"/>
  <circle cx="116.700" cy="5" r="3.300" stroke="#e8e8e8" stroke-width="1" fill="#8a8a8a"/><path d="M114.500 6.500a3 3 0 0 1 3.500-4" stroke="#fff" stroke-width=".8"/>
  <path d="M125.700 4l1.500 1.500 1.500-1.500"/>
  <path d="M127.300 17.700l1.500 1.500 1.500-1.500"/>
 </svg>
 <!-- nav gizmo -->
 <svg style="left:672px;top:28.800px" width="58" height="58" viewBox="0 0 58 58">
  <path d="M12.500 26.800h34" stroke="#c43a4d" stroke-width="1"/><path d="M30.500 9v36" stroke="#6c9a1c" stroke-width="1"/>
  <circle cx="12.500" cy="26.800" r="4.200" fill="#6e3540" stroke="#a83a4a" stroke-width=".6"/>
  <circle cx="30.500" cy="44.500" r="4.200" fill="#4a6420" stroke="#5f861c" stroke-width=".6"/>
  <circle cx="30.500" cy="9" r="4.500" fill="#74b11a"/><circle cx="48" cy="26.800" r="4.500" fill="#e0364f"/><circle cx="30.500" cy="26.800" r="4.700" fill="#2a8cf0"/>
  <text x="30.500" y="11.300" font-family="Liberation Sans,sans-serif" font-size="6.300" text-anchor="middle" fill="#1f3a05">Y</text>
  <text x="48" y="29.100" font-family="Liberation Sans,sans-serif" font-size="6.300" text-anchor="middle" fill="#4a0914">X</text>
  <text x="30.500" y="29.100" font-family="Liberation Sans,sans-serif" font-size="6.300" text-anchor="middle" fill="#062a52">Z</text>
 </svg>
 <!-- nav buttons -->
 <svg style="left:708px;top:77.700px" width="20" height="70" viewBox="0 0 20 70" fill="none" stroke="#f2f2f2" stroke-width=".9">
  <circle cx="10" cy="7.500" r="6.500" fill="#2b2927" stroke="none"/><circle cx="10" cy="24.100" r="6.500" fill="#2b2927" stroke="none"/><circle cx="10" cy="40.800" r="6.500" fill="#2b2927" stroke="none"/><circle cx="10" cy="57.400" r="6.500" fill="#2b2927" stroke="none"/>
  <circle cx="10.900" cy="6.500" r="2.900" stroke-width="1.200"/><path d="M8.600 8.900l-3 3" stroke-width="1.500"/><path d="M9.500 6.500h2.800m-1.400-1.400v2.800" stroke-width=".7"/>
  <path d="M8.300 24.500v-3.300M9.800 24v-4.200M11.300 24v-4M12.800 24.500v-3" stroke-width="1.100" stroke-linecap="round"/><path d="M7.700 24c0 0 .3 3.500 2.800 3.500s3-2 3-3.800l-5.800-.2-1.900-1.300c-.5-.3-1 .3-.6.800z" fill="#f2f2f2" stroke="none"/>
  <rect x="6.300" y="41" width="5.200" height="3" rx="1.400" stroke-width=".8"/><path d="M11.500 42.500l2.500-1.400v2.900z" stroke-width=".7"/><circle cx="7.800" cy="38.500" r="1.500" stroke-width=".8"/><circle cx="11.500" cy="38.300" r="1.800" stroke-width=".8"/>
  <path d="M5.700 53.200h8.700v8.400h-8.700zM8.600 53.200v8.400M11.500 53.200v8.400M5.700 56h8.700M5.700 58.800h8.700" stroke-width=".85"/>
 </svg>
 <!-- preview spheres -->
 <div class="a" style="left:601px;top:300.900px;width:54.200px;height:54.200px;border-radius:50%;background:radial-gradient(circle at 80% 70%,#7f7f7d 0%,#7a7b7a 22%,#6e7277 45%,#626970 62%,#58606a 80%)"></div>
 <svg style="left:669.800px;top:301.200px" width="53" height="53" viewBox="0 0 53 53">
  <defs>
   <radialGradient id="hd" cx=".5" cy=".5" r=".5"><stop offset="0" stop-color="#dbe5f2"/><stop offset=".55" stop-color="#d0dcea"/><stop offset=".66" stop-color="#8a9c6c"/><stop offset=".72" stop-color="#46562a"/><stop offset=".8" stop-color="#2b2f1c"/><stop offset=".86" stop-color="#4c422e"/><stop offset=".92" stop-color="#7b694b"/><stop offset=".97" stop-color="#5e5140"/><stop offset="1" stop-color="#4a443b"/></radialGradient>
   <filter id="bl" x="-.3" y="-.3" width="1.600" height="1.600"><feTurbulence type="fractalNoise" baseFrequency=".25" numOctaves="2" seed="11" result="n"/><feGaussianBlur in="SourceGraphic" stdDeviation=".7" result="b"/><feDisplacementMap in="b" in2="n" scale="8" xChannelSelector="R" yChannelSelector="G"/><feGaussianBlur stdDeviation=".55"/></filter>
   <filter id="mo" x="0" y="0" width="1" height="1"><feTurbulence type="fractalNoise" baseFrequency=".45" numOctaves="2" seed="3"/><feColorMatrix type="matrix" values="0 0 0 0 .1  0 0 0 0 .09  0 0 0 0 .06  1.600 0 0 0 -.55"/></filter>
   <radialGradient id="sk" cx=".5" cy=".5" r=".5"><stop offset="0" stop-color="#dde7f3"/><stop offset=".8" stop-color="#d2deec"/><stop offset=".93" stop-color="#9bad80" stop-opacity=".9"/><stop offset="1" stop-color="#4a5a2e" stop-opacity="0"/></radialGradient>
   <clipPath id="cp"><circle cx="26.500" cy="26.500" r="18.500"/></clipPath>
   <clipPath id="cq"><circle cx="26.500" cy="26.500" r="26.300"/></clipPath>
  </defs>
  <circle cx="26.500" cy="26.500" r="26.500" fill="url(#hd)"/>
  <g clip-path="url(#cq)"><rect x="0" y="0" width="53" height="53" filter="url(#mo)"/></g>
  <circle cx="26.500" cy="26.500" r="18.300" fill="url(#sk)"/>
  <g clip-path="url(#cp)"><g filter="url(#bl)">
   <ellipse cx="15" cy="17" rx="5" ry="6" fill="#5f7d38"/>
   <ellipse cx="21" cy="21" rx="4" ry="5" fill="#6c8a40"/>
   <ellipse cx="23" cy="11" rx="6" ry="3" fill="#7d9652"/>
   <ellipse cx="36" cy="13" rx="5" ry="3.500" fill="#56733a"/>
   <ellipse cx="35" cy="21" rx="3" ry="3.500" fill="#8ba35c"/>
   <ellipse cx="41" cy="31" rx="3.500" ry="5" fill="#7f9a58"/>
   <ellipse cx="38" cy="33" rx="2.500" ry="3" fill="#a5b88a"/>
   <ellipse cx="36" cy="42" rx="6" ry="3" fill="#3d5228"/>
   <ellipse cx="30" cy="40" rx="3" ry="3" fill="#33401f"/>
   <ellipse cx="21" cy="43" rx="6" ry="3" fill="#35452a"/>
   <ellipse cx="11" cy="33" rx="3" ry="6" fill="#4f6836"/>
   <ellipse cx="13" cy="26" rx="2" ry="3" fill="#2f3b20"/>
  </g></g>
 </svg>
</div>

<div id="ne" class="a">
 <!-- links -->
 <svg style="left:0;top:0" width="730" height="364" viewBox="0 392 730 364" fill="none">
  <defs><linearGradient id="lg1" gradientUnits="userSpaceOnUse" x1="207" y1="0" x2="380" y2="0"><stop offset="0" stop-color="#f4f4f4"/><stop offset=".45" stop-color="#efefd6"/><stop offset="1" stop-color="#d9d96a"/></linearGradient></defs>
  <path d="M207.500 470.600C246 470.600 341 494.600 380 494.600" stroke="#111" stroke-width="4.400"/>
  <path d="M207.500 470.600C246 470.600 341 494.600 380 494.600" stroke="url(#lg1)" stroke-width="2.800"/>
  <path d="M637.500 471.100C660 471.100 668 496.400 691.500 496.400" stroke="#111" stroke-width="4.400"/>
  <path d="M637.500 471.100C660 471.100 668 496.400 691.500 496.400" stroke="#5fd05f" stroke-width="2.800"/>
 </svg>
 <!-- Noise Texture node -->
 <div class="node" style="left:56.500px;top:42.800px;width:151px;height:291.500px;box-shadow:0 0 0 1px #ededed,0 2px 6px rgba(0,0,0,.5)">
  <div class="nh" style="height:20.800px;background:#79461d"></div>
  <svg style="left:10.500px;top:6.500px" width="12" height="9" viewBox="0 0 12 9" fill="none" stroke="#e8e8e8" stroke-width="1.300"><path d="M1.200 1.800l4.300 4.300 4.300-4.300"/></svg>
  <div class="n" style="left:27.300px;top:3.400px">Noise Texture</div>
  <div class="n r" style="right:12px;top:28.700px">Fac</div>
  <div class="n r" style="right:12px;top:51.200px">Color</div>
  <div class="f d" style="left:11.500px;top:77.300px;width:128px"></div>
  <div class="n" style="left:19.500px;top:79.000px">2D</div>
  <div class="f d" style="left:11.500px;top:102.500px;width:128px"></div>
  <div class="n" style="left:19.500px;top:104.200px">fBM</div>
  <svg style="left:127px;top:77.300px" width="12" height="45" viewBox="0 0 12 45" fill="none" stroke="#e0e0e0" stroke-width="1.200"><path d="M2.500 8.500l3.300 3.300 3.300-3.300M2.500 33.700l3.300 3.300 3.300-3.300"/></svg>
  <div class="a" style="left:11.500px;top:131.600px;width:13.500px;height:13.500px;border-radius:3px;background:#0757da"></div>
  <svg style="left:11.500px;top:131.600px" width="13.500" height="13.500" viewBox="0 0 13.500 13.500" fill="none" stroke="#fff" stroke-width="1.500"><path d="M3 7l2.800 2.800 5-6"/></svg>
  <div class="n" style="left:28.500px;top:130.500px">Normalize</div>
  <div class="n" style="left:11px;top:153.000px">Vector</div>
  <div class="f" style="left:11.500px;top:174.200px;width:128px"></div>
  <div class="f" style="left:11.500px;top:197.200px;width:128px"></div>
  <div class="f b" style="left:11.500px;top:220.200px;width:128px"></div>
  <div class="f" style="left:11.500px;top:243.200px;width:128px"></div>
  <div class="f" style="left:11.500px;top:266.200px;width:128px"></div>
  <div class="n" style="left:27.300px;top:176.000px">Scale</div><div class="n r v" style="right:26px;top:176.000px">15.730</div>
  <div class="n" style="left:27.300px;top:199.000px">Detail</div><div class="n r v" style="right:26px;top:199.000px">0.000</div>
  <div class="n" style="left:27.300px;top:222.000px">Roughne...</div><div class="n r v" style="right:26px;top:222.000px">1.000</div>
  <div class="n" style="left:27.300px;top:245.000px">Lacunarity</div><div class="n r v" style="right:26px;top:245.000px">2.000</div>
  <div class="n" style="left:27.300px;top:268.000px">Distortion</div><div class="n r v" style="right:26px;top:268.000px">0.000</div>
  <div class="sk" style="left:151px;top:35.800px;background:#a1a1a1"></div>
  <div class="sk" style="left:151px;top:58.400px;background:#c7c729"></div>
  <div class="sk" style="left:0;top:161.100px;background:#6363c7"></div>
  <div class="sk" style="left:0;top:184.000px;background:#a1a1a1"></div>
  <div class="sk" style="left:0;top:207.000px;background:#a1a1a1"></div>
  <div class="sk" style="left:0;top:230.000px;background:#a1a1a1"></div>
  <div class="sk" style="left:0;top:253.000px;background:#a1a1a1"></div>
  <div class="sk" style="left:0;top:276.000px;background:#a1a1a1"></div>
 </div>
 <!-- Principled BSDF node -->
 <div class="node" style="left:380.300px;top:43.500px;width:257.200px;height:340px;box-shadow:0 0 0 .8px #111,0 2px 6px rgba(0,0,0,.5)">
  <div class="nh" style="height:21px;background:#2b652b"></div>
  <svg style="left:9px;top:6px" width="12" height="9" viewBox="0 0 12 9" fill="none" stroke="#e8e8e8" stroke-width="1.200"><path d="M1.500 2l4 4 4-4"/></svg>
  <div class="n" style="left:25px;top:2.500px">Principled BSDF</div>
  <div class="n r" style="right:10.800px;top:27.500px">BSDF</div>
  <div class="n" style="left:10.500px;top:51px">Base Color</div>
  <div class="f" style="left:10.200px;top:72.300px;width:236px"></div>
  <div class="f" style="left:10.200px;top:95.300px;width:236px;background:linear-gradient(90deg,#0757da 50%,#545454 50%)"></div>
  <div class="f" style="left:10.200px;top:118.300px;width:236px"></div>
  <div class="f b" style="left:10.200px;top:141.300px;width:236px"></div>
  <div class="n" style="left:26.500px;top:74px">Metallic</div><div class="n r v" style="right:25.500px;top:74px">0.000</div>
  <div class="n" style="left:26.500px;top:97px">Roughness</div><div class="n r v" style="right:25.500px;top:97px">0.500</div>
  <div class="n" style="left:26.500px;top:120px">IOR</div><div class="n r v" style="right:25.500px;top:120px">1.450</div>
  <div class="n" style="left:26.500px;top:143px">Alpha</div><div class="n r v" style="right:25.500px;top:143px">1.000</div>
  <div class="n" style="left:10.500px;top:165.500px">Normal</div>
  <div class="n" style="left:25px;top:186.300px">Subsurface</div>
  <div class="n" style="left:25px;top:207.100px">Specular</div>
  <div class="n" style="left:25px;top:227.900px">Transmission</div>
  <div class="n" style="left:25px;top:248.700px">Coat</div>
  <div class="n" style="left:25px;top:269.500px">Sheen</div>
  <div class="n" style="left:25px;top:290.300px">Emission</div>
  <div class="n" style="left:25px;top:311.100px">Thin Film</div>
  <svg style="left:11px;top:188px" width="10" height="140" viewBox="0 0 10 140" fill="none" stroke="#e0e0e0" stroke-width="1.200"><path d="M3 2.500l4 4-4 4M3 23.300l4 4-4 4M3 44.100l4 4-4 4M3 64.900l4 4-4 4M3 85.700l4 4-4 4M3 106.500l4 4-4 4M3 127.300l4 4-4 4"/></svg>
  <div class="sk" style="left:257.200px;top:35.600px;background:#63c763"></div>
  <div class="sk" style="left:0;top:59.100px;background:#c7c729"></div>
  <div class="sk" style="left:0;top:82px;background:#a1a1a1"></div>
  <div class="sk" style="left:0;top:105px;background:#a1a1a1"></div>
  <div class="sk" style="left:0;top:128px;background:#a1a1a1"></div>
  <div class="sk" style="left:0;top:151px;background:#a1a1a1"></div>
  <div class="sk" style="left:0;top:173.200px;background:#6363c7"></div>
 </div>
 <!-- Material Output node -->
 <div class="node" style="left:691.800px;top:43.300px;width:120px;height:144.700px;box-shadow:0 0 0 .8px #111,0 2px 6px rgba(0,0,0,.5)">
  <div class="nh" style="height:20.500px;background:#3c1d26"></div>
  <svg style="left:9px;top:6px" width="12" height="9" viewBox="0 0 12 9" fill="none" stroke="#e8e8e8" stroke-width="1.200"><path d="M1.500 2l4 4 4-4"/></svg>
  <div class="n" style="left:25px;top:3.100px">Material Output</div>
  <div class="f d" style="left:10.200px;top:28.500px;width:100px"></div>
  <div class="n" style="left:18.500px;top:30.200px">All</div>
  <div class="n" style="left:10.500px;top:53.600px">Surface</div>
  <div class="n" style="left:10.500px;top:76.300px">Volume</div>
  <div class="n" style="left:10.500px;top:99.300px">Displacement</div>
  <div class="n" style="left:10.500px;top:122.600px">Thickness</div>
  <div class="sk" style="left:0;top:61.100px;background:#63c763"></div>
  <div class="sk" style="left:0;top:83.700px;background:#63c763"></div>
  <div class="sk" style="left:0;top:106.700px;background:#6363c7"></div>
  <div class="sk" style="left:0;top:130px;background:#a1a1a1"></div>
 </div>
 <!-- header -->
 <div class="btn" style="background:#2a2a2a;box-shadow:0 0 0 .5px #383838;left:4.700px;top:3.500px;width:17.300px;height:10px"></div>
 <div class="btn" style="background:#2a2a2a;box-shadow:0 0 0 .5px #383838;left:24.300px;top:3.500px;width:49.200px;height:10px"></div>
 <div class="t" style="left:39px;top:3.500px">Object</div>
 <div class="t" style="left:80px;top:3.500px">View</div>
 <div class="t" style="left:102px;top:3.500px">Select</div>
 <div class="t" style="left:128.700px;top:3.500px">Add</div>
 <div class="t" style="left:148.200px;top:3.500px">Node</div>
 <div class="a" style="left:170.500px;top:5px;width:7px;height:7px;border-radius:1.500px;background:#0757da"></div>
 <div class="t" style="left:179.600px;top:3.500px">Use Nodes</div>
 <div class="btn" style="background:#2a2a2a;box-shadow:0 0 0 .5px #383838;left:279.600px;top:3.500px;width:42.200px;height:10px"></div>
 <div class="t" style="left:283.500px;top:3.500px">Slot 1</div>
 <div class="btn" style="background:#2a2a2a;box-shadow:0 0 0 .5px #383838;left:324.800px;top:3.500px;width:15.200px;height:10px;border-radius:2px 0 0 2px"></div>
 <div class="btn" style="background:#2a2a2a;box-shadow:0 0 0 .5px #383838;left:340.400px;top:3.500px;width:43.600px;height:10px;border-radius:0;background:#1f1f1f"></div>
 <div class="t" style="left:345px;top:3.500px">Material</div>
 <div class="btn l" style="left:384px;top:3.500px;width:11.200px;height:10px;border-radius:0"></div>
 <div class="btn l" style="left:395.600px;top:3.500px;width:10.700px;height:10px;border-radius:0"></div>
 <div class="btn l" style="left:406.700px;top:3.500px;width:10.700px;height:10px;border-radius:0"></div>
 <div class="btn l" style="left:417.800px;top:3.500px;width:9.700px;height:10px;border-radius:0 2px 2px 0"></div>
 <div class="t" style="left:387.500px;top:3.500px">2</div>
 <div class="btn" style="background:#2a2a2a;box-shadow:0 0 0 .5px #383838;left:662px;top:3.500px;width:10.400px;height:10px;background:#353535"></div>
 <div class="btn l" style="left:675.300px;top:3.500px;width:11px;height:10px;border-radius:2px 0 0 2px"></div>
 <div class="btn" style="background:#2a2a2a;box-shadow:0 0 0 .5px #383838;left:686.600px;top:3.500px;width:16.200px;height:10px;border-radius:0 2px 2px 0"></div>
 <div class="btn b" style="left:705.200px;top:3.500px;width:10.800px;height:10px;border-radius:2px 0 0 2px"></div>
 <div class="btn" style="background:#2a2a2a;box-shadow:0 0 0 .5px #383838;left:716.300px;top:3.500px;width:10.500px;height:10px;border-radius:0 2px 2px 0"></div>
 <svg style="left:0;top:3.500px" width="730" height="30" viewBox="0 0 730 30" fill="none" stroke="#e0e0e0" stroke-width=".8">
  <circle cx="10.500" cy="5" r="3.200"/><path d="M10.500 1.800c-1.500 1-1.800 2.500-.8 3.800 1 1.200 2.700 1 3.800-.3" stroke-width=".7"/>
  <path d="M16.500 4l1.600 1.600 1.600-1.600"/>
  <rect x="29.300" y="2.900" width="4.500" height="4.300" rx=".5" fill="#e8e8e8" stroke="none"/><path d="M27.500 2.800v-1.500h1.600M33.800 1.300h1.600v1.500M35.400 7.300v1.500h-1.600M29.100 8.800h-1.600v-1.500" stroke-width=".75"/>
  <path d="M68.300 4.200l1.500 1.500 1.500-1.500"/>
  <path d="M172 5l1.500 1.500 2.500-3" stroke="#fff" stroke-width=".9"/>
  <path d="M316 4.200l1.500 1.500 1.500-1.500"/>
  <circle cx="330.500" cy="5" r="3.300" fill="#e8e8e8" stroke="none"/><path d="M330.500 1.700a3.300 3.300 0 0 0-2.300 5.600l2.300-2.300z" fill="#262626" stroke="none"/><circle cx="331.800" cy="3.800" r="1" fill="#262626" stroke="none"/>
  <path d="M335 4l1.500 1.500 1.500-1.500"/>
  <path d="M398 2.500c1.500 0 2-.5 3-1 1 .5 1.500 1 3 1 0 3-1 5-3 6-2-1-3-3-3-6z" stroke="#d8d8d8" stroke-width=".7"/>
  <rect x="409" y="1.800" width="4.500" height="5.500" rx=".6" stroke="#eee"/><path d="M410.800 3.300h4.200v5.200h-4.200z" fill="#545454" stroke="#eee"/>
  <path d="M420.500 3l4 4m0-4-4 4" stroke="#eee"/>
  <path d="M432.500 9l2.700-2.700m-1.900-3 4.200 4.200m-3.500-3.500 2.900-1.400 1.900 1.900-1.400 2.900" stroke="#b4b4b4" stroke-width=".75"/>
  <path d="M666.300 2.200v6h4.500M664.600 4l1.700-1.800 1.700 1.800" stroke="#6e6e6e" stroke-width=".8"/>
  <path d="M678.500 8c-1.500-3.500 1-6 3.500-5.500 2 .5 2 3 .5 4.500l-1.500 2M680 7.500c-.8-1.800.3-3.300 1.600-3" stroke="#999" stroke-width=".7"/>
  <path d="M688.800 4.700h6.500M688.800 7.300h6.500M691.300 2.500v6.500M694.300 2.500v6.500" stroke="#d0d0d0" stroke-width=".7"/><rect x="688.700" y="1.300" width="2.600" height="2.600" fill="#fff" stroke="none"/>
  <path d="M697.700 4.300l1.500 1.500 1.500-1.500"/>
  <circle cx="710" cy="5.300" r="3" stroke="#fff"/><circle cx="712" cy="3.800" r="2.200" fill="#fff" stroke="none"/>
  <path d="M720 4l1.500 1.500 1.500-1.500"/>
  <!-- breadcrumb (y offset 3.5+ ) -->
  <path d="M1 20.700l2 2.300-2 2.300" stroke="#aaa"/>
  <rect x="13.100" y="20.900" width="4.200" height="4.200" rx=".5" fill="#e8e8e8" stroke="none"/><path d="M11.300 20.800v-1.500h1.600M17.500 19.300h1.600v1.500M19.100 25.200v1.500h-1.600M12.900 26.700h-1.600v-1.500" stroke-width=".75"/>
  <path d="M47.500 20.700l2.300 2.300-2.300 2.300" stroke="#aaa"/>
  <path d="M57.300 20h6l-3 5.300z" stroke-width=".75"/><circle cx="57.300" cy="20" r="1" fill="#e8e8e8" stroke="none"/><circle cx="63.300" cy="20" r="1" fill="#e8e8e8" stroke="none"/><circle cx="60.300" cy="25.500" r="1" fill="#e8e8e8" stroke="none"/>
  <path d="M93 20.700l2.300 2.300-2.300 2.300" stroke="#aaa"/>
  <circle cx="105.700" cy="23" r="3.700" fill="#e8e8e8" stroke="none"/><path d="M105.700 19.300a3.700 3.700 0 0 0-2.600 6.300l2.600-2.600z" fill="#1d1d1d" stroke="none"/><circle cx="107.200" cy="21.700" r="1.100" fill="#1d1d1d" stroke="none"/>
 </svg>
 <div class="t" style="left:24.300px;top:21.500px">Plane</div>
 <div class="t" style="left:69px;top:21.500px">Plane</div>
 <div class="t" style="left:114.600px;top:21.500px">Material</div>
 <!-- scrollbars -->
 <div class="a" style="left:5px;top:360.500px;width:617px;height:2px;background:#3a3a3a;border-radius:1px"></div>
 <div class="a" style="left:727px;top:21px;width:2.200px;height:321px;background:#363636;border-radius:1px"></div>
 <svg style="left:725.800px;top:23.300px" width="5" height="8" viewBox="0 0 5 8" fill="none" stroke="#b0b0b0" stroke-width=".8"><path d="M3.600 .8l-2.400 2.700 2.400 2.700"/></svg>
</div>

<div id="right" class="a">
 <div class="a" style="left:1.200px;top:0;width:9.300px;height:125px;background:#2b2b2b"></div>
 <div class="a" style="left:1.200px;top:0;width:9.300px;height:14px;background:#242424"></div>
 <div class="a" style="left:7px;top:3px;width:5px;height:9.500px;background:#1c1c1c;border:.7px solid #444;border-right:0;border-radius:2px 0 0 2px"></div>
 <div class="a" style="left:8.500px;top:4px;width:3px;height:1.600px;background:#eee"></div>
 <div class="a" style="left:1.200px;top:28.1px;width:3px;height:4.600px;background:#c4c4c4;border-radius:.5px"></div>
 <div class="a" style="left:1.200px;top:38.6px;width:3px;height:4.600px;background:#c4c4c4;border-radius:.5px"></div>
 <div class="a" style="left:1.200px;top:49.1px;width:3px;height:4.600px;background:#c4c4c4;border-radius:.5px"></div>
 <div class="a" style="left:1.200px;top:59.6px;width:3px;height:4.600px;background:#c4c4c4;border-radius:.5px"></div>
 <div class="a" style="left:9.500px;top:26px;width:1px;height:14px;background:#35507a"></div>
 <div class="a" style="left:1.200px;top:127.500px;width:9.300px;height:597px;background:#303030;border-radius:0 0 2px 2px"></div>
 <div class="a" style="left:1.200px;top:127.500px;width:9.300px;height:13px;background:#2a2a2a"></div>
 <div class="a" style="left:7.500px;top:130.500px;width:3px;height:3px;background:#eee;border-radius:.8px"></div>
 <div class="a" style="left:7.500px;top:134.300px;width:3px;height:3px;background:#eee;border-radius:.8px"></div>
 <div class="a" style="left:1.200px;top:140.500px;width:4.500px;height:584px;background:#272727"></div>
 <div class="a" style="left:7px;top:147px;width:4px;height:8px;background:#ddd;border-radius:3px 0 0 3px"></div>
 <div class="a" style="left:2.700px;top:167px;width:5.500px;height:6px;border:.8px solid #ddd;border-radius:1px"></div>
 <svg style="left:1px;top:150px" width="5" height="8" viewBox="0 0 5 8" fill="none" stroke="#bbb" stroke-width=".8"><path d="M1 1l2.300 2.500-2.300 2.500"/></svg>
</div>
<div id="status" class="a">
 <svg style="left:0;top:0" width="742" height="12" viewBox="0 0 742 12" fill="none" stroke="#d0d0d0" stroke-width=".8">
  <rect x="7" y="2" width="5" height="7.500" rx="2"/><path d="M7 5h2.500v-3" /><rect x="7" y="2" width="2.500" height="3" fill="#d0d0d0" stroke="none"/>
  <rect x="111.500" y="2" width="5" height="7.500" rx="2"/><rect x="113.200" y="2.500" width="1.600" height="3" fill="#d0d0d0" stroke="none"/>
  <rect x="215.500" y="2" width="5" height="7.500" rx="2"/><rect x="218" y="2" width="2.500" height="3" fill="#d0d0d0" stroke="none"/>
  <circle cx="708.500" cy="5.500" r="3" stroke="#aaa" stroke-width=".7"/><path d="M705.500 5.500h6M708.500 2.500c-1.500 1.500-1.500 4.500 0 6M708.500 2.500c1.500 1.500 1.500 4.500 0 6" stroke="#aaa" stroke-width=".5"/>
  <path d="M716.500 2v8" stroke="#777" stroke-width=".6"/>
 </svg>
 <div class="t" style="left:16px;top:1px;font-size:6.300px;color:#c8c8c8">Select</div>
 <div class="t" style="left:224px;top:1px;font-size:6.300px;color:#c8c8c8">Object</div>
 <div class="t" style="left:719.500px;top:1px;font-size:6.300px;color:#aaa">4.2.1</div>
 <div class="a" style="left:0;top:10.300px;width:742px;height:1.700px;background:#46464e"></div>
</div>
<div class="a" style="left:0;top:2px;width:1px;height:766px;background:#34343a"></div>
<div class="a" style="left:0;top:0;width:2px;height:2px;background:linear-gradient(135deg,#0c0c10 45%,#34343a 55%)"></div>
</body>
</html>
